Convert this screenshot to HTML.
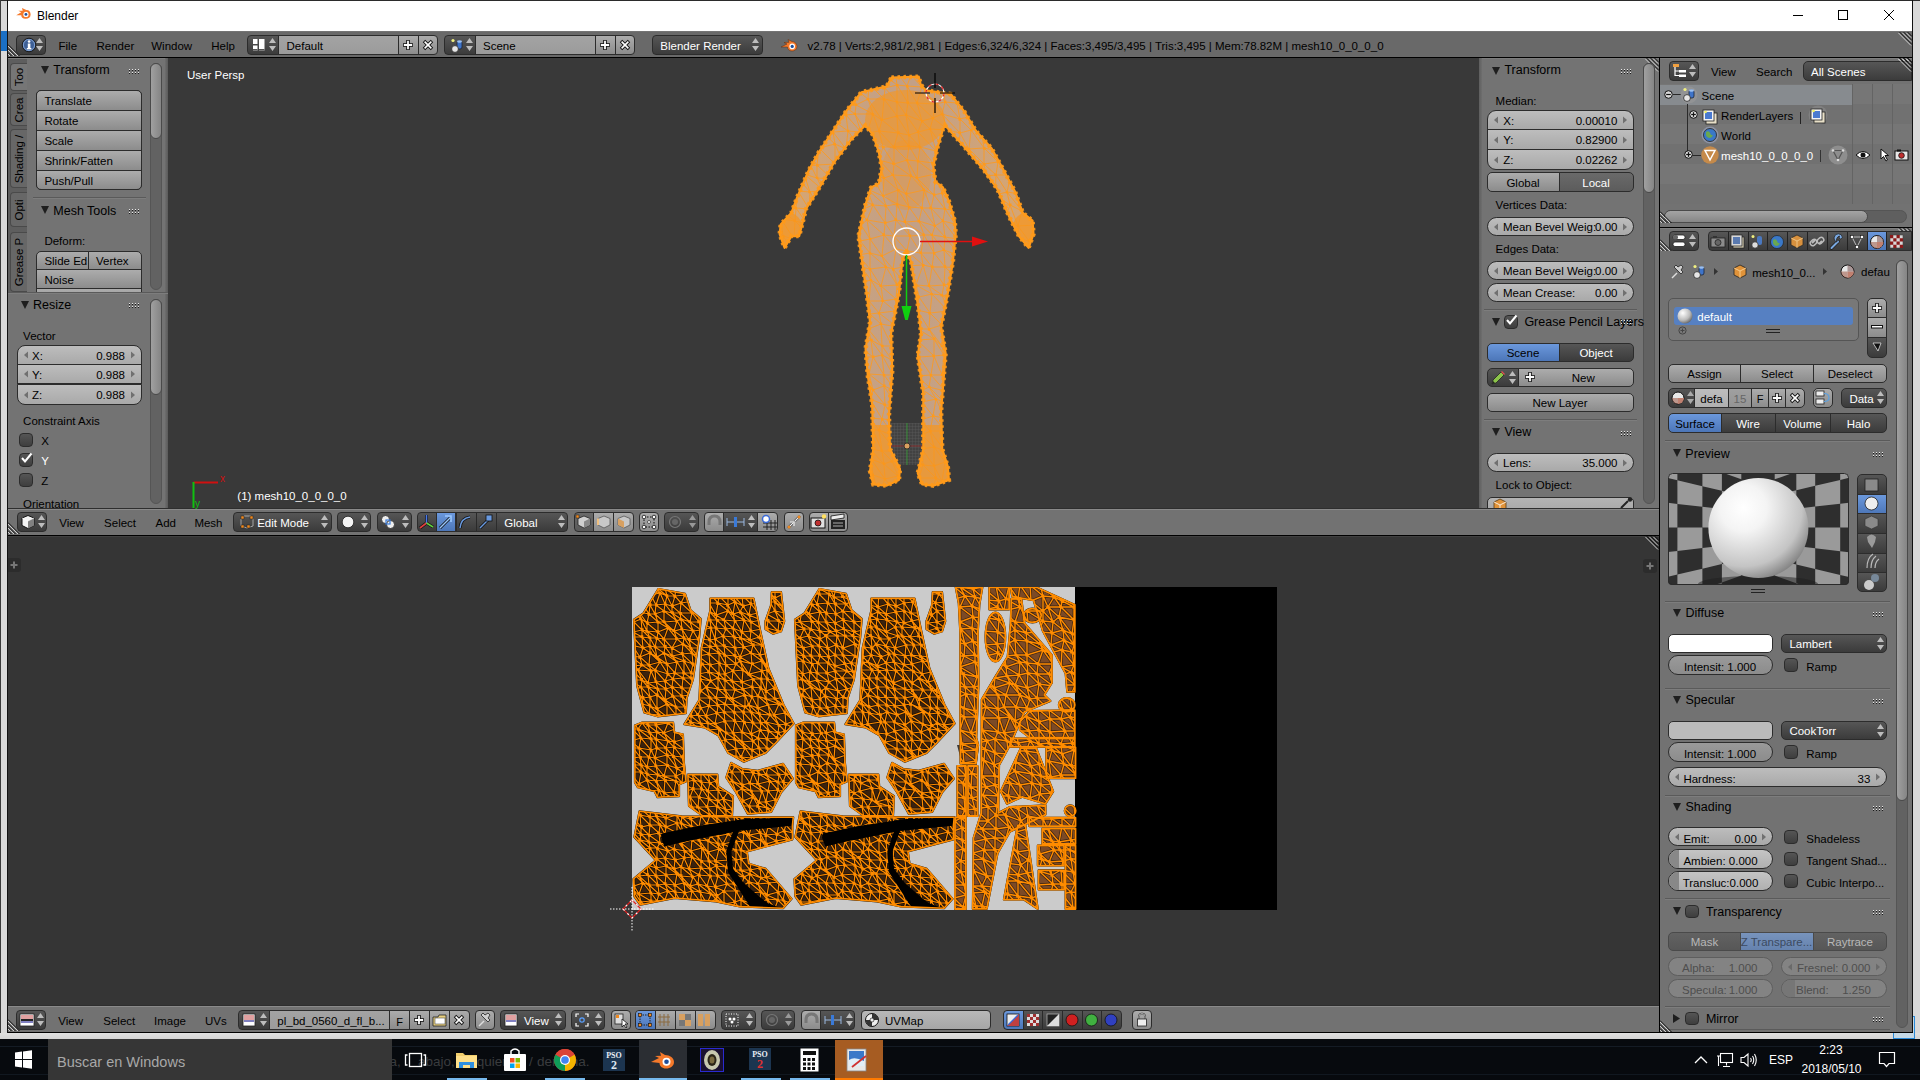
<!DOCTYPE html><html><head><meta charset="utf-8"><style>
html,body{margin:0;padding:0;width:1920px;height:1080px;overflow:hidden;background:#727272;font-family:"Liberation Sans",sans-serif;}
.t{position:absolute;white-space:nowrap;font-family:"Liberation Sans",sans-serif;}
svg{position:absolute;left:0;top:0;}
.w{position:absolute;box-sizing:border-box;border:1px solid #2c2c2c;border-radius:4px;}
.tool{background:linear-gradient(#acacac,#8c8c8c);}
.num{background:linear-gradient(#bdbdbd,#a9a9a9);}
.menu{background:linear-gradient(#565656,#3b3b3b);}
.sel{background:linear-gradient(#6b98dc,#4c76b8);}
.txt{background:linear-gradient(#9a9a9a,#b0b0b0);}
.chk{background:linear-gradient(#555,#3e3e3e);border-radius:3px;}

</style></head><body>
<div style="position:absolute;left:0px;top:0px;width:1920px;height:1080px;background:#d9d9d9"></div>
<div style="position:absolute;left:0px;top:0px;width:1920px;height:1px;background:#2b2b2b"></div>
<div style="position:absolute;left:0px;top:0px;width:1px;height:1039px;background:#3a3a3a"></div>
<div style="position:absolute;left:7px;top:0px;width:1px;height:1033px;background:#111"></div>
<div style="position:absolute;left:1912px;top:0px;width:1px;height:1033px;background:#111"></div>
<div style="position:absolute;left:8px;top:1px;width:1904px;height:30px;background:#fff"></div>
<div style="position:absolute;left:1px;top:31px;width:6px;height:20px;background:#1a6fc4"></div>
<svg width="40" height="30" style="left:0px;top:0px"><g transform="translate(15.5,6.5) scale(0.72)"><path d="M1 12 L8 8 L4 6 L10 6 L9 2 L15 5 C19 5 21 8 21 11 C21 15 18 17 14 17 C10 17 8 15 8 12 Z" fill="#f5792a"/><circle cx="14.5" cy="11" r="3.6" fill="#fff"/><circle cx="14.5" cy="11" r="2" fill="#1f4e9a"/></g></svg>
<div class="t" style="left:37px;top:9.94px;font-size:12px;line-height:13.8px;color:#000;">Blender</div>
<svg width="120" height="30" style="left:1780px;top:0px"><path d="M13 15.5 H23" stroke="#000" stroke-width="1"/><rect x="58.5" y="10.5" width="9" height="9" fill="none" stroke="#000" stroke-width="1"/><path d="M104 10 L114 20 M114 10 L104 20" stroke="#000" stroke-width="1"/></svg>
<div style="position:absolute;left:8px;top:31px;width:1904px;height:26px;background:#696969"></div>
<div style="position:absolute;left:8px;top:57px;width:1904px;height:1px;background:#000"></div>
<div style="position:absolute;left:8px;top:58px;width:1651px;height:451px;background:#393939"></div>
<div style="position:absolute;left:8px;top:58px;width:160px;height:451px;background:#727272"></div>
<div style="position:absolute;left:1479px;top:58px;width:180px;height:451px;background:#727272"></div>
<div style="position:absolute;left:8px;top:509px;width:1651px;height:26px;background:#727272"></div>
<div style="position:absolute;left:8px;top:535px;width:1651px;height:1px;background:#000"></div>
<div style="position:absolute;left:8px;top:536px;width:1651px;height:470px;background:#353535"></div>
<div style="position:absolute;left:8px;top:1006px;width:1651px;height:26px;background:#727272"></div>
<div style="position:absolute;left:8px;top:1032px;width:1905px;height:1px;background:#000"></div>
<div style="position:absolute;left:1659px;top:58px;width:1px;height:975px;background:#000"></div>
<div style="position:absolute;left:1660px;top:58px;width:252px;height:169px;background:#727272"></div>
<div style="position:absolute;left:1660px;top:227px;width:252px;height:1px;background:#000"></div>
<div style="position:absolute;left:1660px;top:228px;width:252px;height:804px;background:#727272"></div>
<div style="position:absolute;left:0px;top:1039px;width:1920px;height:41px;background:#0b0e13"></div>
<div style="position:absolute;left:48px;top:1039px;width:344px;height:41px;background:#333"></div>
<div style="position:absolute;left:8px;top:31px;width:1904px;height:1px;background:#747474"></div>
<svg width="14" height="14" style="left:8px;top:43px"><path d="M0 1.5 L11.5 13 M0 5.5 L7.5 13 M0 9.5 L3.5 13" stroke="#111" stroke-width="1"/><path d="M0 3 L10 13 M0 7 L6 13 M0 11 L2 13" stroke="#d0d0d0" stroke-width="1"/></svg>
<svg width="14" height="14" style="left:1898px;top:32px"><path d="M1.5 0 L14 12.5 M5.5 0 L14 8.5 M9.5 0 L14 4.5" stroke="#111" stroke-width="1"/><path d="M0.5 1 L13 13.5 M4.5 1 L13 9.5 M8.5 1 L13 5.5" stroke="#d0d0d0" stroke-width="1"/></svg>
<div class="w menu" style="left:16px;top:35px;width:30px;height:20px;border-radius:4px;"></div>
<svg width="16" height="16" style="left:21px;top:37px"><circle cx="8" cy="8" r="6.8" fill="#3d5f96" stroke="#1a1a1a" stroke-width="1"/><circle cx="8" cy="8" r="5.6" fill="none" stroke="#8fb0e0" stroke-width="0.8"/><rect x="6.8" y="6.5" width="2.6" height="5.5" fill="#fff"/><rect x="5.8" y="11" width="4.6" height="1.4" fill="#fff"/><circle cx="8.1" cy="4.5" r="1.3" fill="#fff"/></svg>
<svg width="10" height="16" style="left:35px;top:37px"><path d="M1 6 L4.5 1 L8 6 Z M1 9 L4.5 14 L8 9 Z" fill="#bdbdbd"/></svg>
<div class="t" style="left:58.5px;top:40.41px;font-size:11.5px;line-height:13.22px;color:#000;">File</div>
<div class="t" style="left:96.5px;top:40.41px;font-size:11.5px;line-height:13.22px;color:#000;">Render</div>
<div class="t" style="left:151.25px;top:40.41px;font-size:11.5px;line-height:13.22px;color:#000;">Window</div>
<div class="t" style="left:211.25px;top:40.41px;font-size:11.5px;line-height:13.22px;color:#000;">Help</div>
<div class="w menu" style="left:247px;top:35px;width:32px;height:20px;border-radius:4px 0 0 4px;"></div>
<svg width="14" height="14" style="left:252px;top:38px"><rect x="1" y="1" width="4.5" height="5" fill="#fff"/><rect x="1" y="7.5" width="4.5" height="5" fill="#fff"/><rect x="7" y="1" width="5.5" height="11.5" fill="#fff"/><rect x="1" y="11" width="4.5" height="1.5" fill="#555"/><rect x="7" y="11" width="5.5" height="1.5" fill="#555"/></svg>
<svg width="10" height="16" style="left:268px;top:37px"><path d="M1 6 L4.5 1 L8 6 Z M1 9 L4.5 14 L8 9 Z" fill="#bdbdbd"/></svg>
<div class="w txt" style="left:278px;top:35px;width:121px;height:20px;border-radius:0;background:linear-gradient(#a3a3a3,#9b9b9b)"></div>
<div class="t" style="left:286.5px;top:40.41px;font-size:11.5px;line-height:13.22px;color:#000;">Default</div>
<div class="w tool" style="left:398px;top:35px;width:21px;height:20px;border-radius:0;"></div>
<div class="w tool" style="left:418px;top:35px;width:20px;height:20px;border-radius:0 4px 4px 0;"></div>
<svg width="12" height="12" style="left:402px;top:39px"><path d="M6.0 1 V11 M1 6.0 H11" stroke="#111" stroke-width="3.6"/><path d="M6.0 1.8 V10.2 M1.8 6.0 H10.2" stroke="#fff" stroke-width="1.8"/></svg>
<svg width="12" height="12" style="left:422px;top:39px"><path d="M2 2 L10 10 M10 2 L2 10" stroke="#111" stroke-width="3.4"/><path d="M2.6 2.6 L9.4 9.4 M9.4 2.6 L2.6 9.4" stroke="#fff" stroke-width="1.6"/></svg>
<div class="w menu" style="left:444px;top:35px;width:32px;height:20px;border-radius:4px 0 0 4px;"></div>
<svg width="16" height="16" style="left:450px;top:38px"><circle cx="3" cy="2.5" r="1.6" fill="#f0f080"/><rect x="7" y="3" width="5" height="8" rx="2" fill="#3f74c9" stroke="#16243b" stroke-width="0.8"/><ellipse cx="9.5" cy="3.5" rx="2.5" ry="1.2" fill="#9cc0f0"/><circle cx="5" cy="11" r="3.4" fill="#e6e6e6" stroke="#222" stroke-width="0.8"/></svg>
<svg width="10" height="16" style="left:465px;top:37px"><path d="M1 6 L4.5 1 L8 6 Z M1 9 L4.5 14 L8 9 Z" fill="#bdbdbd"/></svg>
<div class="w txt" style="left:475px;top:35px;width:121px;height:20px;border-radius:0;background:linear-gradient(#a3a3a3,#9b9b9b)"></div>
<div class="t" style="left:483px;top:40.41px;font-size:11.5px;line-height:13.22px;color:#000;">Scene</div>
<div class="w tool" style="left:595px;top:35px;width:21px;height:20px;border-radius:0;"></div>
<div class="w tool" style="left:615px;top:35px;width:20px;height:20px;border-radius:0 4px 4px 0;"></div>
<svg width="12" height="12" style="left:599px;top:39px"><path d="M6.0 1 V11 M1 6.0 H11" stroke="#111" stroke-width="3.6"/><path d="M6.0 1.8 V10.2 M1.8 6.0 H10.2" stroke="#fff" stroke-width="1.8"/></svg>
<svg width="12" height="12" style="left:619px;top:39px"><path d="M2 2 L10 10 M10 2 L2 10" stroke="#111" stroke-width="3.4"/><path d="M2.6 2.6 L9.4 9.4 M9.4 2.6 L2.6 9.4" stroke="#fff" stroke-width="1.6"/></svg>
<div class="w menu" style="left:652px;top:35px;width:111px;height:20px;border-radius:4px;"></div>
<div class="t" style="left:660.3px;top:40.41px;font-size:11.5px;line-height:13.22px;color:#fff;">Blender Render</div>
<svg width="10" height="16" style="left:751px;top:37px"><path d="M1 6 L4.5 1 L8 6 Z M1 9 L4.5 14 L8 9 Z" fill="#bdbdbd"/></svg>
<svg width="18" height="16" style="left:780px;top:37px"><path d="M1 10 L7 7 L4 5.5 L9 5.3 L8 2.5 L12 4.5 C15 4.5 17 7 17 9.5 C17 12.5 14.5 14 12 14 C9 14 7.5 12 7.5 10 Z" fill="#f5792a" stroke="#5a2a10" stroke-width="0.5"/><circle cx="12.2" cy="9.4" r="2.8" fill="#fff"/><circle cx="12.2" cy="9.4" r="1.6" fill="#1f4e9a"/></svg>
<div class="t" style="left:807.5px;top:40.41px;font-size:11.5px;line-height:13.22px;color:#000;">v2.78 | Verts:2,981/2,981 | Edges:6,324/6,324 | Faces:3,495/3,495 | Tris:3,495 | Mem:78.82M | mesh10_0_0_0_0</div>
<div style="position:absolute;left:8px;top:58px;width:160px;height:451px;background:#737373"></div>
<div style="position:absolute;left:8px;top:58px;width:160px;height:1px;background:#7c7c7c"></div>
<div style="position:absolute;left:165px;top:58px;width:3px;height:451px;background:linear-gradient(90deg,#6e6e6e,#5a5a5a)"></div>
<div style="position:absolute;left:8px;top:59px;width:19px;height:234px;background:#5e5e5e"></div>
<div style="position:absolute;left:10px;top:63px;width:17px;height:28px;background:#767676;border:1px solid #4a4a4a;border-right:none;border-radius:4px 0 0 4px;box-sizing:border-box"></div>
<div class="t" style="left:-81.5px;width:200px;text-align:center;top:70.0px;line-height:14px;font-size:11.5px;color:#000;transform:rotate(-90deg);transform-origin:100px 7px">Too</div>
<div style="position:absolute;left:10px;top:93px;width:17px;height:33px;background:#676767;border:1px solid #4a4a4a;border-right:none;border-radius:4px 0 0 4px;box-sizing:border-box"></div>
<div class="t" style="left:-81.5px;width:200px;text-align:center;top:102.5px;line-height:14px;font-size:11.5px;color:#000;transform:rotate(-90deg);transform-origin:100px 7px">Crea</div>
<div style="position:absolute;left:10px;top:129px;width:17px;height:59px;background:#676767;border:1px solid #4a4a4a;border-right:none;border-radius:4px 0 0 4px;box-sizing:border-box"></div>
<div class="t" style="left:-81.5px;width:200px;text-align:center;top:151.5px;line-height:14px;font-size:11.5px;color:#000;transform:rotate(-90deg);transform-origin:100px 7px">Shading /</div>
<div style="position:absolute;left:10px;top:192px;width:17px;height:35px;background:#676767;border:1px solid #4a4a4a;border-right:none;border-radius:4px 0 0 4px;box-sizing:border-box"></div>
<div class="t" style="left:-81.5px;width:200px;text-align:center;top:202.5px;line-height:14px;font-size:11.5px;color:#000;transform:rotate(-90deg);transform-origin:100px 7px">Opti</div>
<div style="position:absolute;left:10px;top:232px;width:17px;height:60px;background:#676767;border:1px solid #4a4a4a;border-right:none;border-radius:4px 0 0 4px;box-sizing:border-box"></div>
<div class="t" style="left:-81.5px;width:200px;text-align:center;top:255.0px;line-height:14px;font-size:11.5px;color:#000;transform:rotate(-90deg);transform-origin:100px 7px">Grease P</div>
<svg width="8" height="8" style="left:41px;top:66px"><path d="M0 0 H8 L4.0 8 Z" fill="#1e1e1e"/></svg>
<div class="t" style="left:53.3px;top:63.48px;font-size:12.5px;line-height:14.37px;color:#000;">Transform</div>
<svg width="12" height="6" style="left:129px;top:69px" shape-rendering="crispEdges"><rect x="0" y="0" width="1" height="1" fill="#e8e8e8"/><rect x="0" y="1" width="1" height="1" fill="#1a1a1a"/><rect x="0" y="3" width="1" height="1" fill="#e8e8e8"/><rect x="0" y="4" width="1" height="1" fill="#1a1a1a"/><rect x="3" y="0" width="1" height="1" fill="#e8e8e8"/><rect x="3" y="1" width="1" height="1" fill="#1a1a1a"/><rect x="3" y="3" width="1" height="1" fill="#e8e8e8"/><rect x="3" y="4" width="1" height="1" fill="#1a1a1a"/><rect x="6" y="0" width="1" height="1" fill="#e8e8e8"/><rect x="6" y="1" width="1" height="1" fill="#1a1a1a"/><rect x="6" y="3" width="1" height="1" fill="#e8e8e8"/><rect x="6" y="4" width="1" height="1" fill="#1a1a1a"/><rect x="9" y="0" width="1" height="1" fill="#e8e8e8"/><rect x="9" y="1" width="1" height="1" fill="#1a1a1a"/><rect x="9" y="3" width="1" height="1" fill="#e8e8e8"/><rect x="9" y="4" width="1" height="1" fill="#1a1a1a"/></svg>
<div style="position:absolute;left:150px;top:63px;width:12px;height:227px;background:#626262;border:1px solid #555;border-radius:6px;box-sizing:border-box"></div>
<div style="position:absolute;left:150px;top:63px;width:12px;height:76px;background:linear-gradient(90deg,#a0a0a0,#858585);border:1px solid #4a4a4a;border-radius:6px;box-sizing:border-box"></div>
<div class="w tool" style="left:36px;top:90px;width:106px;height:100px;border-radius:5px;background:transparent"></div>
<div class="w tool" style="left:36px;top:90px;width:106px;height:21px;border-radius:5px 5px 0 0;"></div>
<div class="t" style="left:44.4px;top:95.01px;font-size:11.5px;line-height:13.22px;color:#000;">Translate</div>
<div class="w tool" style="left:36px;top:110px;width:106px;height:21px;border-radius:0;"></div>
<div class="t" style="left:44.4px;top:115.01px;font-size:11.5px;line-height:13.22px;color:#000;">Rotate</div>
<div class="w tool" style="left:36px;top:130px;width:106px;height:21px;border-radius:0;"></div>
<div class="t" style="left:44.4px;top:135.01px;font-size:11.5px;line-height:13.22px;color:#000;">Scale</div>
<div class="w tool" style="left:36px;top:150px;width:106px;height:21px;border-radius:0;"></div>
<div class="t" style="left:44.4px;top:155.01px;font-size:11.5px;line-height:13.22px;color:#000;">Shrink/Fatten</div>
<div class="w tool" style="left:36px;top:170px;width:106px;height:20px;border-radius:0 0 5px 5px;"></div>
<div class="t" style="left:44.4px;top:175.01px;font-size:11.5px;line-height:13.22px;color:#000;">Push/Pull</div>
<div style="position:absolute;left:33px;top:197px;width:113px;height:1px;background:#5a5a5a"></div>
<div style="position:absolute;left:33px;top:198px;width:113px;height:1px;background:#7d7d7d"></div>
<svg width="8" height="8" style="left:41px;top:206px"><path d="M0 0 H8 L4.0 8 Z" fill="#1e1e1e"/></svg>
<div class="t" style="left:53.3px;top:203.98px;font-size:12.5px;line-height:14.37px;color:#000;">Mesh Tools</div>
<svg width="12" height="6" style="left:129px;top:209px" shape-rendering="crispEdges"><rect x="0" y="0" width="1" height="1" fill="#e8e8e8"/><rect x="0" y="1" width="1" height="1" fill="#1a1a1a"/><rect x="0" y="3" width="1" height="1" fill="#e8e8e8"/><rect x="0" y="4" width="1" height="1" fill="#1a1a1a"/><rect x="3" y="0" width="1" height="1" fill="#e8e8e8"/><rect x="3" y="1" width="1" height="1" fill="#1a1a1a"/><rect x="3" y="3" width="1" height="1" fill="#e8e8e8"/><rect x="3" y="4" width="1" height="1" fill="#1a1a1a"/><rect x="6" y="0" width="1" height="1" fill="#e8e8e8"/><rect x="6" y="1" width="1" height="1" fill="#1a1a1a"/><rect x="6" y="3" width="1" height="1" fill="#e8e8e8"/><rect x="6" y="4" width="1" height="1" fill="#1a1a1a"/><rect x="9" y="0" width="1" height="1" fill="#e8e8e8"/><rect x="9" y="1" width="1" height="1" fill="#1a1a1a"/><rect x="9" y="3" width="1" height="1" fill="#e8e8e8"/><rect x="9" y="4" width="1" height="1" fill="#1a1a1a"/></svg>
<div class="t" style="left:44.4px;top:235.41px;font-size:11.5px;line-height:13.22px;color:#000;">Deform:</div>
<div class="w tool" style="left:36px;top:251px;width:53px;height:19px;border-radius:5px 0 0 0;"></div>
<div class="w tool" style="left:88px;top:251px;width:54px;height:19px;border-radius:0 5px 0 0;"></div>
<div class="t" style="left:44.4px;top:254.61px;font-size:11.5px;line-height:13.22px;color:#000;">Slide Ed</div>
<div class="t" style="left:96px;top:254.61px;font-size:11.5px;line-height:13.22px;color:#000;">Vertex</div>
<div class="w tool" style="left:36px;top:269px;width:106px;height:20px;border-radius:0;"></div>
<div class="t" style="left:44.4px;top:274.01px;font-size:11.5px;line-height:13.22px;color:#000;">Noise</div>
<div style="position:absolute;left:36px;top:288px;width:106px;height:4px;overflow:hidden"><div class="w tool" style="left:0;top:0;width:106px;height:20px;border-radius:0"></div></div>
<div style="position:absolute;left:8px;top:292px;width:160px;height:1px;background:#5a5a5a"></div>
<div style="position:absolute;left:8px;top:293px;width:160px;height:1px;background:#7d7d7d"></div>
<svg width="8" height="8" style="left:21px;top:301px"><path d="M0 0 H8 L4.0 8 Z" fill="#1e1e1e"/></svg>
<div class="t" style="left:33.1px;top:298.38px;font-size:12.5px;line-height:14.37px;color:#000;">Resize</div>
<svg width="12" height="6" style="left:129px;top:303px" shape-rendering="crispEdges"><rect x="0" y="0" width="1" height="1" fill="#e8e8e8"/><rect x="0" y="1" width="1" height="1" fill="#1a1a1a"/><rect x="0" y="3" width="1" height="1" fill="#e8e8e8"/><rect x="0" y="4" width="1" height="1" fill="#1a1a1a"/><rect x="3" y="0" width="1" height="1" fill="#e8e8e8"/><rect x="3" y="1" width="1" height="1" fill="#1a1a1a"/><rect x="3" y="3" width="1" height="1" fill="#e8e8e8"/><rect x="3" y="4" width="1" height="1" fill="#1a1a1a"/><rect x="6" y="0" width="1" height="1" fill="#e8e8e8"/><rect x="6" y="1" width="1" height="1" fill="#1a1a1a"/><rect x="6" y="3" width="1" height="1" fill="#e8e8e8"/><rect x="6" y="4" width="1" height="1" fill="#1a1a1a"/><rect x="9" y="0" width="1" height="1" fill="#e8e8e8"/><rect x="9" y="1" width="1" height="1" fill="#1a1a1a"/><rect x="9" y="3" width="1" height="1" fill="#e8e8e8"/><rect x="9" y="4" width="1" height="1" fill="#1a1a1a"/></svg>
<div style="position:absolute;left:150px;top:299px;width:12px;height:205px;background:#626262;border:1px solid #555;border-radius:6px;box-sizing:border-box"></div>
<div style="position:absolute;left:150px;top:299px;width:12px;height:96px;background:linear-gradient(90deg,#a0a0a0,#858585);border:1px solid #4a4a4a;border-radius:6px;box-sizing:border-box"></div>
<div class="t" style="left:23.1px;top:330.41px;font-size:11.5px;line-height:13.22px;color:#000;">Vector</div>
<div class="w num" style="left:17px;top:345px;width:125px;height:20px;border-radius:8px 8px 0 0;"></div>
<svg width="6" height="8" style="left:23px;top:351.0px"><path d="M5 0.5 V7.5 L1 4 Z" fill="#707070"/></svg>
<svg width="6" height="8" style="left:130px;top:351.0px"><path d="M1 0.5 V7.5 L5 4 Z" fill="#707070"/></svg>
<div class="t" style="left:32px;top:349.91px;font-size:11.5px;line-height:13.22px;color:#000;">X:</div>
<div class="t" style="left:-275px;width:400px;text-align:right;top:349.91px;font-size:11.5px;line-height:13.22px;color:#000;">0.988</div>
<div class="w num" style="left:17px;top:364px;width:125px;height:20px;border-radius:0;"></div>
<svg width="6" height="8" style="left:23px;top:370.0px"><path d="M5 0.5 V7.5 L1 4 Z" fill="#707070"/></svg>
<svg width="6" height="8" style="left:130px;top:370.0px"><path d="M1 0.5 V7.5 L5 4 Z" fill="#707070"/></svg>
<div class="t" style="left:32px;top:368.91px;font-size:11.5px;line-height:13.22px;color:#000;">Y:</div>
<div class="t" style="left:-275px;width:400px;text-align:right;top:368.91px;font-size:11.5px;line-height:13.22px;color:#000;">0.988</div>
<div class="w num" style="left:17px;top:384px;width:125px;height:21px;border-radius:0 0 8px 8px;"></div>
<svg width="6" height="8" style="left:23px;top:390.5px"><path d="M5 0.5 V7.5 L1 4 Z" fill="#707070"/></svg>
<svg width="6" height="8" style="left:130px;top:390.5px"><path d="M1 0.5 V7.5 L5 4 Z" fill="#707070"/></svg>
<div class="t" style="left:32px;top:388.91px;font-size:11.5px;line-height:13.22px;color:#000;">Z:</div>
<div class="t" style="left:-275px;width:400px;text-align:right;top:388.91px;font-size:11.5px;line-height:13.22px;color:#000;">0.988</div>
<div class="t" style="left:23.1px;top:415.41px;font-size:11.5px;line-height:13.22px;color:#000;">Constraint Axis</div>
<div class="w chk" style="left:19px;top:433px;width:14px;height:14px;border-radius:4px;"></div>
<div class="t" style="left:41.2px;top:434.91px;font-size:11.5px;line-height:13.22px;color:#000;">X</div>
<div class="w chk" style="left:19px;top:453px;width:14px;height:14px;border-radius:4px;"></div>
<div class="t" style="left:41.2px;top:454.91px;font-size:11.5px;line-height:13.22px;color:#fff;">Y</div>
<div class="w chk" style="left:19px;top:473px;width:14px;height:14px;border-radius:4px;"></div>
<div class="t" style="left:41.2px;top:474.91px;font-size:11.5px;line-height:13.22px;color:#000;">Z</div>
<svg width="14" height="14" style="left:19px;top:451px"><path d="M3 7 L6 10.5 L12.5 2.5" stroke="#fff" stroke-width="2" fill="none"/></svg>
<div style="position:absolute;left:8px;top:494px;width:160px;height:15px;overflow:hidden"><div class="t" style="left:15px;top:3px;font-size:11.5px;line-height:14px">Orientation</div></div>
<div style="position:absolute;left:1479px;top:58px;width:180px;height:451px;background:#737373"></div>
<div style="position:absolute;left:1479px;top:58px;width:180px;height:1px;background:#7c7c7c"></div>
<div style="position:absolute;left:1479px;top:58px;width:3px;height:451px;background:linear-gradient(90deg,#5e5e5e,#6e6e6e)"></div>
<svg width="14" height="14" style="left:1645px;top:58px"><path d="M1.5 0 L14 12.5 M5.5 0 L14 8.5 M9.5 0 L14 4.5" stroke="#111" stroke-width="1"/><path d="M0.5 1 L13 13.5 M4.5 1 L13 9.5 M8.5 1 L13 5.5" stroke="#d0d0d0" stroke-width="1"/></svg>
<div style="position:absolute;left:1643px;top:63px;width:12px;height:441px;background:#626262;border:1px solid #555;border-radius:6px;box-sizing:border-box"></div>
<div style="position:absolute;left:1643px;top:63px;width:12px;height:130px;background:linear-gradient(90deg,#a0a0a0,#858585);border:1px solid #4a4a4a;border-radius:6px;box-sizing:border-box"></div>
<svg width="8" height="8" style="left:1492px;top:67px"><path d="M0 0 H8 L4.0 8 Z" fill="#1e1e1e"/></svg>
<div class="t" style="left:1504.4px;top:63.48px;font-size:12.5px;line-height:14.37px;color:#000;">Transform</div>
<svg width="12" height="6" style="left:1621px;top:69px" shape-rendering="crispEdges"><rect x="0" y="0" width="1" height="1" fill="#e8e8e8"/><rect x="0" y="1" width="1" height="1" fill="#1a1a1a"/><rect x="0" y="3" width="1" height="1" fill="#e8e8e8"/><rect x="0" y="4" width="1" height="1" fill="#1a1a1a"/><rect x="3" y="0" width="1" height="1" fill="#e8e8e8"/><rect x="3" y="1" width="1" height="1" fill="#1a1a1a"/><rect x="3" y="3" width="1" height="1" fill="#e8e8e8"/><rect x="3" y="4" width="1" height="1" fill="#1a1a1a"/><rect x="6" y="0" width="1" height="1" fill="#e8e8e8"/><rect x="6" y="1" width="1" height="1" fill="#1a1a1a"/><rect x="6" y="3" width="1" height="1" fill="#e8e8e8"/><rect x="6" y="4" width="1" height="1" fill="#1a1a1a"/><rect x="9" y="0" width="1" height="1" fill="#e8e8e8"/><rect x="9" y="1" width="1" height="1" fill="#1a1a1a"/><rect x="9" y="3" width="1" height="1" fill="#e8e8e8"/><rect x="9" y="4" width="1" height="1" fill="#1a1a1a"/></svg>
<div class="t" style="left:1495.6px;top:94.81px;font-size:11.5px;line-height:13.22px;color:#000;">Median:</div>
<div class="w num" style="left:1487px;top:110px;width:147px;height:20px;border-radius:9px 9px 0 0;"></div>
<svg width="6" height="8" style="left:1493px;top:116.0px"><path d="M5 0.5 V7.5 L1 4 Z" fill="#707070"/></svg>
<svg width="6" height="8" style="left:1622px;top:116.0px"><path d="M1 0.5 V7.5 L5 4 Z" fill="#707070"/></svg>
<div class="t" style="left:1503.3px;top:114.91px;font-size:11.5px;line-height:13.22px;color:#000;">X:</div>
<div class="t" style="left:1217.3px;width:400px;text-align:right;top:114.91px;font-size:11.5px;line-height:13.22px;color:#000;">0.00010</div>
<div class="w num" style="left:1487px;top:129px;width:147px;height:21px;border-radius:0;"></div>
<svg width="6" height="8" style="left:1493px;top:135.5px"><path d="M5 0.5 V7.5 L1 4 Z" fill="#707070"/></svg>
<svg width="6" height="8" style="left:1622px;top:135.5px"><path d="M1 0.5 V7.5 L5 4 Z" fill="#707070"/></svg>
<div class="t" style="left:1503.3px;top:133.91px;font-size:11.5px;line-height:13.22px;color:#000;">Y:</div>
<div class="t" style="left:1217.3px;width:400px;text-align:right;top:133.91px;font-size:11.5px;line-height:13.22px;color:#000;">0.82900</div>
<div class="w num" style="left:1487px;top:149px;width:147px;height:21px;border-radius:0 0 9px 9px;"></div>
<svg width="6" height="8" style="left:1493px;top:155.5px"><path d="M5 0.5 V7.5 L1 4 Z" fill="#707070"/></svg>
<svg width="6" height="8" style="left:1622px;top:155.5px"><path d="M1 0.5 V7.5 L5 4 Z" fill="#707070"/></svg>
<div class="t" style="left:1503.3px;top:153.91px;font-size:11.5px;line-height:13.22px;color:#000;">Z:</div>
<div class="t" style="left:1217.3px;width:400px;text-align:right;top:153.91px;font-size:11.5px;line-height:13.22px;color:#000;">0.02262</div>
<div class="w tool" style="left:1487px;top:172px;width:73px;height:20px;border-radius:5px 0 0 5px;"></div>
<div class="w tool" style="left:1559px;top:172px;width:75px;height:20px;border-radius:0 5px 5px 0;background:linear-gradient(#6a6a6a,#5c5c5c)"></div>
<div class="t" style="left:1373px;width:300px;text-align:center;top:177.11px;font-size:11.5px;line-height:13.22px;color:#000;">Global</div>
<div class="t" style="left:1446px;width:300px;text-align:center;top:177.11px;font-size:11.5px;line-height:13.22px;color:#fff;">Local</div>
<div class="t" style="left:1495.6px;top:199.31px;font-size:11.5px;line-height:13.22px;color:#000;">Vertices Data:</div>
<div class="w num" style="left:1487px;top:217px;width:147px;height:19px;border-radius:9.5px;"></div>
<svg width="6" height="8" style="left:1493px;top:222.5px"><path d="M5 0.5 V7.5 L1 4 Z" fill="#707070"/></svg>
<svg width="6" height="8" style="left:1622px;top:222.5px"><path d="M1 0.5 V7.5 L5 4 Z" fill="#707070"/></svg>
<div class="t" style="left:1503px;top:221.41px;font-size:11.5px;line-height:13.22px;color:#000;">Mean Bevel Weig:</div>
<div class="t" style="left:1217.5px;width:400px;text-align:right;top:221.41px;font-size:11.5px;line-height:13.22px;color:#000;">0.00</div>
<div class="t" style="left:1495.6px;top:243.11px;font-size:11.5px;line-height:13.22px;color:#000;">Edges Data:</div>
<div class="w num" style="left:1487px;top:261px;width:147px;height:19px;border-radius:9.5px;"></div>
<svg width="6" height="8" style="left:1493px;top:266.5px"><path d="M5 0.5 V7.5 L1 4 Z" fill="#707070"/></svg>
<svg width="6" height="8" style="left:1622px;top:266.5px"><path d="M1 0.5 V7.5 L5 4 Z" fill="#707070"/></svg>
<div class="t" style="left:1503px;top:265.41px;font-size:11.5px;line-height:13.22px;color:#000;">Mean Bevel Weig:</div>
<div class="t" style="left:1217.5px;width:400px;text-align:right;top:265.41px;font-size:11.5px;line-height:13.22px;color:#000;">0.00</div>
<div class="w num" style="left:1487px;top:283px;width:147px;height:19px;border-radius:9.5px;"></div>
<svg width="6" height="8" style="left:1493px;top:288.5px"><path d="M5 0.5 V7.5 L1 4 Z" fill="#707070"/></svg>
<svg width="6" height="8" style="left:1622px;top:288.5px"><path d="M1 0.5 V7.5 L5 4 Z" fill="#707070"/></svg>
<div class="t" style="left:1503px;top:287.41px;font-size:11.5px;line-height:13.22px;color:#000;">Mean Crease:</div>
<div class="t" style="left:1217.5px;width:400px;text-align:right;top:287.41px;font-size:11.5px;line-height:13.22px;color:#000;">0.00</div>
<div style="position:absolute;left:1484px;top:309px;width:153px;height:1px;background:#5a5a5a"></div>
<div style="position:absolute;left:1484px;top:310px;width:153px;height:1px;background:#7d7d7d"></div>
<svg width="8" height="8" style="left:1492px;top:318px"><path d="M0 0 H8 L4.0 8 Z" fill="#1e1e1e"/></svg>
<div class="w chk" style="left:1504px;top:315px;width:14px;height:14px;border-radius:4px;"></div>
<svg width="14" height="14" style="left:1504px;top:313px"><path d="M3 7 L6 10.5 L12.5 2.5" stroke="#fff" stroke-width="2" fill="none"/></svg>
<div class="t" style="left:1524.4px;top:315.08px;font-size:12.5px;line-height:14.37px;color:#000;">Grease Pencil Layers</div>
<svg width="12" height="6" style="left:1621px;top:320px" shape-rendering="crispEdges"><rect x="0" y="0" width="1" height="1" fill="#e8e8e8"/><rect x="0" y="1" width="1" height="1" fill="#1a1a1a"/><rect x="0" y="3" width="1" height="1" fill="#e8e8e8"/><rect x="0" y="4" width="1" height="1" fill="#1a1a1a"/><rect x="3" y="0" width="1" height="1" fill="#e8e8e8"/><rect x="3" y="1" width="1" height="1" fill="#1a1a1a"/><rect x="3" y="3" width="1" height="1" fill="#e8e8e8"/><rect x="3" y="4" width="1" height="1" fill="#1a1a1a"/><rect x="6" y="0" width="1" height="1" fill="#e8e8e8"/><rect x="6" y="1" width="1" height="1" fill="#1a1a1a"/><rect x="6" y="3" width="1" height="1" fill="#e8e8e8"/><rect x="6" y="4" width="1" height="1" fill="#1a1a1a"/><rect x="9" y="0" width="1" height="1" fill="#e8e8e8"/><rect x="9" y="1" width="1" height="1" fill="#1a1a1a"/><rect x="9" y="3" width="1" height="1" fill="#e8e8e8"/><rect x="9" y="4" width="1" height="1" fill="#1a1a1a"/></svg>
<div class="w sel" style="left:1487px;top:343px;width:73px;height:19px;border-radius:5px 0 0 5px;"></div>
<div class="w menu" style="left:1559px;top:343px;width:75px;height:19px;border-radius:0 5px 5px 0;"></div>
<div class="t" style="left:1373px;width:300px;text-align:center;top:347.11px;font-size:11.5px;line-height:13.22px;color:#000;">Scene</div>
<div class="t" style="left:1446px;width:300px;text-align:center;top:347.11px;font-size:11.5px;line-height:13.22px;color:#fff;">Object</div>
<div class="w menu" style="left:1487px;top:368px;width:32px;height:19px;border-radius:5px 0 0 5px;"></div>
<svg width="16" height="16" style="left:1490px;top:370px"><path d="M2 14 L3 10 L11 2 L14 5 L6 13 Z" fill="#8bc34a" stroke="#222" stroke-width="0.8"/><path d="M11 2 L14 5 L15 4 L12 1 Z" fill="#e05050"/><path d="M2 14 L3 11 L5 13 Z" fill="#222"/></svg>
<svg width="10" height="16" style="left:1508px;top:370px"><path d="M1 6 L4.5 1 L8 6 Z M1 9 L4.5 14 L8 9 Z" fill="#bdbdbd"/></svg>
<div class="w tool" style="left:1518px;top:368px;width:116px;height:19px;border-radius:0 5px 5px 0;"></div>
<svg width="12" height="12" style="left:1524px;top:371px"><path d="M6.0 1 V11 M1 6.0 H11" stroke="#111" stroke-width="3.6"/><path d="M6.0 1.8 V10.2 M1.8 6.0 H10.2" stroke="#fff" stroke-width="1.8"/></svg>
<div class="t" style="left:1433.3px;width:300px;text-align:center;top:371.51px;font-size:11.5px;line-height:13.22px;color:#000;">New</div>
<div class="w tool" style="left:1487px;top:393px;width:147px;height:19px;border-radius:5px;"></div>
<div class="t" style="left:1410px;width:300px;text-align:center;top:397.11px;font-size:11.5px;line-height:13.22px;color:#000;">New Layer</div>
<div style="position:absolute;left:1484px;top:419px;width:153px;height:1px;background:#5a5a5a"></div>
<div style="position:absolute;left:1484px;top:420px;width:153px;height:1px;background:#7d7d7d"></div>
<svg width="8" height="8" style="left:1492px;top:428px"><path d="M0 0 H8 L4.0 8 Z" fill="#1e1e1e"/></svg>
<div class="t" style="left:1504.4px;top:425.08px;font-size:12.5px;line-height:14.37px;color:#000;">View</div>
<svg width="12" height="6" style="left:1621px;top:431px" shape-rendering="crispEdges"><rect x="0" y="0" width="1" height="1" fill="#e8e8e8"/><rect x="0" y="1" width="1" height="1" fill="#1a1a1a"/><rect x="0" y="3" width="1" height="1" fill="#e8e8e8"/><rect x="0" y="4" width="1" height="1" fill="#1a1a1a"/><rect x="3" y="0" width="1" height="1" fill="#e8e8e8"/><rect x="3" y="1" width="1" height="1" fill="#1a1a1a"/><rect x="3" y="3" width="1" height="1" fill="#e8e8e8"/><rect x="3" y="4" width="1" height="1" fill="#1a1a1a"/><rect x="6" y="0" width="1" height="1" fill="#e8e8e8"/><rect x="6" y="1" width="1" height="1" fill="#1a1a1a"/><rect x="6" y="3" width="1" height="1" fill="#e8e8e8"/><rect x="6" y="4" width="1" height="1" fill="#1a1a1a"/><rect x="9" y="0" width="1" height="1" fill="#e8e8e8"/><rect x="9" y="1" width="1" height="1" fill="#1a1a1a"/><rect x="9" y="3" width="1" height="1" fill="#e8e8e8"/><rect x="9" y="4" width="1" height="1" fill="#1a1a1a"/></svg>
<div class="w num" style="left:1487px;top:453px;width:147px;height:19px;border-radius:9.5px;"></div>
<svg width="6" height="8" style="left:1493px;top:458.5px"><path d="M5 0.5 V7.5 L1 4 Z" fill="#707070"/></svg>
<svg width="6" height="8" style="left:1622px;top:458.5px"><path d="M1 0.5 V7.5 L5 4 Z" fill="#707070"/></svg>
<div class="t" style="left:1503px;top:457.41px;font-size:11.5px;line-height:13.22px;color:#000;">Lens:</div>
<div class="t" style="left:1217.5px;width:400px;text-align:right;top:457.41px;font-size:11.5px;line-height:13.22px;color:#000;">35.000</div>
<div class="t" style="left:1495.6px;top:478.81px;font-size:11.5px;line-height:13.22px;color:#000;">Lock to Object:</div>
<div style="position:absolute;left:1487px;top:497px;width:147px;height:12px;overflow:hidden"><div class="w txt" style="left:0;top:0;width:147px;height:20px;border-radius:5px;background:linear-gradient(#b4b4b4,#a4a4a4)"></div></div>
<svg width="14" height="14" style="left:1493px;top:498px"><path d="M7 1 L13 4 V11 L7 14 L1 11 V4 Z" fill="#e0933a" stroke="#5a3a10" stroke-width="0.8"/><path d="M1 4 L7 7 L13 4 M7 7 V14" stroke="#fff" stroke-width="0.8" fill="none"/></svg>
<svg width="14" height="12" style="left:1619px;top:497px"><path d="M2 11 L9 4" stroke="#222" stroke-width="2"/><circle cx="11" cy="2.5" r="2.2" fill="#222"/></svg>
<div style="position:absolute;left:1660px;top:58px;width:252px;height:26px;background:#727272"></div>
<div style="position:absolute;left:1660px;top:58px;width:252px;height:1px;background:#7e7e7e"></div>
<svg width="14" height="14" style="left:1898px;top:58px"><path d="M1.5 0 L14 12.5 M5.5 0 L14 8.5 M9.5 0 L14 4.5" stroke="#111" stroke-width="1"/><path d="M0.5 1 L13 13.5 M4.5 1 L13 9.5 M8.5 1 L13 5.5" stroke="#d0d0d0" stroke-width="1"/></svg>
<div style="position:absolute;left:1660px;top:84px;width:252px;height:20px;background:#767676"></div>
<div style="position:absolute;left:1660px;top:104px;width:252px;height:20px;background:#717171"></div>
<div style="position:absolute;left:1660px;top:124px;width:252px;height:20px;background:#767676"></div>
<div style="position:absolute;left:1660px;top:144px;width:252px;height:20px;background:#717171"></div>
<div style="position:absolute;left:1660px;top:164px;width:252px;height:20px;background:#767676"></div>
<div style="position:absolute;left:1660px;top:184px;width:252px;height:20px;background:#717171"></div>
<div style="position:absolute;left:1660px;top:204px;width:252px;height:20px;background:#767676"></div>
<div style="position:absolute;left:1660px;top:84px;width:252px;height:140px;background:transparent"></div>
<div style="position:absolute;left:1660px;top:85px;width:192px;height:20px;background:#878b8f"></div>
<div style="position:absolute;left:1852px;top:84px;width:1px;height:126px;background:#646464"></div>
<div style="position:absolute;left:1872px;top:84px;width:1px;height:126px;background:#646464"></div>
<div style="position:absolute;left:1892px;top:84px;width:1px;height:126px;background:#646464"></div>
<div style="position:absolute;left:1660px;top:204px;width:252px;height:23px;background:#727272"></div>
<div class="w menu" style="left:1669px;top:61px;width:30px;height:20px;border-radius:4px;"></div>
<svg width="16" height="16" style="left:1672px;top:63px"><rect x="1" y="1" width="6" height="3" fill="#f0a040"/><path d="M3 4 V13 M3 8 H7 M3 12.5 H7" stroke="#fff" stroke-width="1.2"/><rect x="7" y="7" width="7" height="2.5" fill="#fff"/><rect x="7" y="11.5" width="7" height="2.5" fill="#fff"/></svg>
<svg width="10" height="16" style="left:1688px;top:63px"><path d="M1 6 L4.5 1 L8 6 Z M1 9 L4.5 14 L8 9 Z" fill="#bdbdbd"/></svg>
<div class="t" style="left:1711.1px;top:66.41px;font-size:11.5px;line-height:13.22px;color:#000;">View</div>
<div class="t" style="left:1756px;top:66.41px;font-size:11.5px;line-height:13.22px;color:#000;">Search</div>
<div class="w menu" style="left:1803px;top:61px;width:109px;height:20px;border-radius:5px 0 0 5px;"></div>
<div class="t" style="left:1811.1px;top:66.41px;font-size:11.5px;line-height:13.22px;color:#fff;">All Scenes</div>
<svg width="14" height="14" style="left:1898px;top:58px"><path d="M1.5 0 L14 12.5 M5.5 0 L14 8.5 M9.5 0 L14 4.5" stroke="#111" stroke-width="1"/><path d="M0.5 1 L13 13.5 M4.5 1 L13 9.5 M8.5 1 L13 5.5" stroke="#d0d0d0" stroke-width="1"/></svg>
<div style="position:absolute;left:1687px;top:104px;width:1px;height:51px;background:#2a2a2a"></div>
<div style="position:absolute;left:1673px;top:94px;width:8px;height:1px;background:#2a2a2a"></div>
<div style="position:absolute;left:1692px;top:155px;width:9px;height:1px;background:#2a2a2a"></div>
<svg width="10" height="10" style="left:1664px;top:90px"><circle cx="4.5" cy="4.5" r="3.8" fill="#d8d8d8" stroke="#111" stroke-width="1"/><path d="M2.2 4.5 H6.8" stroke="#111" stroke-width="1.2"/></svg>
<svg width="18" height="18" style="left:1680px;top:86px"><circle cx="9" cy="9" r="8.5" fill="#9a9a9a" opacity="0.6"/></svg>
<svg width="16" height="16" style="left:1682px;top:87px"><circle cx="3" cy="2.5" r="1.6" fill="#f0f080"/><rect x="7" y="3" width="5" height="8" rx="2" fill="#3f74c9" stroke="#16243b" stroke-width="0.8"/><ellipse cx="9.5" cy="3.5" rx="2.5" ry="1.2" fill="#9cc0f0"/><circle cx="5" cy="11" r="3.4" fill="#e6e6e6" stroke="#222" stroke-width="0.8"/></svg>
<div class="t" style="left:1701.6px;top:90.41px;font-size:11.5px;line-height:13.22px;color:#000;">Scene</div>
<svg width="10" height="10" style="left:1689px;top:110px"><circle cx="4.5" cy="4.5" r="3.8" fill="#d8d8d8" stroke="#111" stroke-width="1"/><path d="M2.2 4.5 H6.8" stroke="#111" stroke-width="1.2"/><path d="M4.5 2.2 V6.8" stroke="#111" stroke-width="1.2"/></svg>
<svg width="16" height="16" style="left:1702px;top:109px"><rect x="4" y="4" width="11" height="11" fill="#e8e0c8" stroke="#222" stroke-width="0.8"/><rect x="1" y="1" width="11" height="11" fill="#f4f4f4" stroke="#222" stroke-width="0.8"/><rect x="3" y="3" width="7" height="7" fill="#4a7ad0"/><circle cx="3.5" cy="3" r="1.3" fill="#f0f060"/></svg>
<div class="t" style="left:1721.1px;top:110.41px;font-size:11.5px;line-height:13.22px;color:#000;">RenderLayers</div>
<div style="position:absolute;left:1800px;top:112px;width:1px;height:12px;background:#222"></div>
<svg width="20" height="20" style="left:1808px;top:105px"><circle cx="10" cy="10" r="9.5" fill="#8a8a8a" opacity="0.6"/></svg>
<svg width="16" height="16" style="left:1810px;top:108px"><rect x="4" y="4" width="11" height="11" fill="#e8e0c8" stroke="#222" stroke-width="0.8"/><rect x="1" y="1" width="11" height="11" fill="#f4f4f4" stroke="#222" stroke-width="0.8"/><rect x="3" y="3" width="7" height="7" fill="#4a7ad0"/><circle cx="3.5" cy="3" r="1.3" fill="#f0f060"/></svg>
<svg width="18" height="18" style="left:1701px;top:126px"><circle cx="9" cy="9" r="8.5" fill="#8d93a5"/><circle cx="9" cy="9" r="6.5" fill="#3a78c8" stroke="#222" stroke-width="0.8"/><path d="M5 6 Q8 4 9 7 T12 9 Q11 12 8 12 Q5 11 5 9Z" fill="#6aa84f"/></svg>
<div class="t" style="left:1721.1px;top:130.41px;font-size:11.5px;line-height:13.22px;color:#000;">World</div>
<svg width="10" height="10" style="left:1684px;top:150px"><circle cx="4.5" cy="4.5" r="3.8" fill="#d8d8d8" stroke="#111" stroke-width="1"/><path d="M2.2 4.5 H6.8" stroke="#111" stroke-width="1.2"/><path d="M4.5 2.2 V6.8" stroke="#111" stroke-width="1.2"/></svg>
<svg width="18" height="18" style="left:1701px;top:146px"><circle cx="9" cy="9" r="8.7" fill="#c58a4a"/><path d="M4 4.5 L14 4.5 L9 14 Z" fill="none" stroke="#fff" stroke-width="1.5"/></svg>
<div class="t" style="left:1721.1px;top:150.41px;font-size:11.5px;line-height:13.22px;color:#fff;">mesh10_0_0_0_0</div>
<div style="position:absolute;left:1820px;top:150px;width:1px;height:12px;background:#333"></div>
<svg width="20" height="20" style="left:1828px;top:145px"><circle cx="10" cy="10" r="9.5" fill="#8e8e8e"/><path d="M5 5.5 L15 5.5 L10 15 Z" fill="none" stroke="#555" stroke-width="1.2"/><circle cx="5" cy="5.5" r="1.3" fill="#ddd"/><circle cx="15" cy="5.5" r="1.3" fill="#ddd"/><circle cx="10" cy="15" r="1.3" fill="#ddd"/></svg>
<svg width="16" height="12" style="left:1855px;top:149px"><path d="M1 6 Q8 -1 15 6 Q8 13 1 6 Z" fill="#fff" stroke="#111" stroke-width="1"/><circle cx="8" cy="6" r="2.5" fill="#111"/></svg>
<svg width="10" height="14" style="left:1880px;top:148px"><path d="M1 1 L1 11 L3.5 8.5 L6 13 L7.5 12 L5 7.5 L8.5 7.5 Z" fill="#fff" stroke="#111" stroke-width="1"/></svg>
<svg width="16" height="14" style="left:1894px;top:148px"><rect x="1" y="3" width="13" height="9" fill="#e8e8e8" stroke="#111" stroke-width="1"/><circle cx="7.5" cy="7.5" r="2.8" fill="#c03030" stroke="#111" stroke-width="0.8"/><rect x="3" y="1.5" width="4" height="2" fill="#111"/></svg>
<div style="position:absolute;left:1664px;top:210px;width:243px;height:13px;background:#5f5f5f;border:1px solid #555;border-radius:7px;box-sizing:border-box"></div>
<div style="position:absolute;left:1664px;top:210px;width:204px;height:13px;background:linear-gradient(#a4a4a4,#868686);border:1px solid #4a4a4a;border-radius:7px;box-sizing:border-box"></div>
<svg width="14" height="14" style="left:1660px;top:210px"><path d="M0 1.5 L11.5 13 M0 5.5 L7.5 13 M0 9.5 L3.5 13" stroke="#111" stroke-width="1"/><path d="M0 3 L10 13 M0 7 L6 13 M0 11 L2 13" stroke="#d0d0d0" stroke-width="1"/></svg>
<div style="position:absolute;left:1660px;top:228px;width:252px;height:25px;background:#727272"></div>
<div style="position:absolute;left:1660px;top:228px;width:252px;height:1px;background:#7e7e7e"></div>
<svg width="14" height="14" style="left:1660px;top:238px"><path d="M0 1.5 L11.5 13 M0 5.5 L7.5 13 M0 9.5 L3.5 13" stroke="#111" stroke-width="1"/><path d="M0 3 L10 13 M0 7 L6 13 M0 11 L2 13" stroke="#d0d0d0" stroke-width="1"/></svg>
<svg width="14" height="14" style="left:1898px;top:228px"><path d="M1.5 0 L14 12.5 M5.5 0 L14 8.5 M9.5 0 L14 4.5" stroke="#111" stroke-width="1"/><path d="M0.5 1 L13 13.5 M4.5 1 L13 9.5 M8.5 1 L13 5.5" stroke="#d0d0d0" stroke-width="1"/></svg>
<div class="w menu" style="left:1669px;top:231px;width:30px;height:20px;border-radius:4px;"></div>
<svg width="16" height="14" style="left:1672px;top:234px"><rect x="1" y="1" width="12" height="4.5" rx="2" fill="#fff" stroke="#222" stroke-width="0.8"/><rect x="1" y="1" width="5" height="4.5" rx="2" fill="#666"/><rect x="1" y="8" width="12" height="4.5" rx="2" fill="#fff" stroke="#222" stroke-width="0.8"/></svg>
<svg width="10" height="16" style="left:1688px;top:233px"><path d="M1 6 L4.5 1 L8 6 Z M1 9 L4.5 14 L8 9 Z" fill="#bdbdbd"/></svg>
<div class="w menu" style="left:1708px;top:231px;width:204px;height:20px;border-radius:4px 0 0 4px;"></div>
<div style="position:absolute;left:1728px;top:232px;width:1px;height:18px;background:#222"></div>
<div style="position:absolute;left:1748px;top:232px;width:1px;height:18px;background:#222"></div>
<div style="position:absolute;left:1767px;top:232px;width:1px;height:18px;background:#222"></div>
<div style="position:absolute;left:1787px;top:232px;width:1px;height:18px;background:#222"></div>
<div style="position:absolute;left:1807px;top:232px;width:1px;height:18px;background:#222"></div>
<div style="position:absolute;left:1827px;top:232px;width:1px;height:18px;background:#222"></div>
<div style="position:absolute;left:1847px;top:232px;width:1px;height:18px;background:#222"></div>
<div style="position:absolute;left:1867px;top:232px;width:1px;height:18px;background:#222"></div>
<div style="position:absolute;left:1868px;top:232px;width:19px;height:18px;background:linear-gradient(#6b98dc,#4c76b8)"></div>
<div style="position:absolute;left:1886px;top:232px;width:1px;height:18px;background:#222"></div>
<svg width="1920" height="300" style="left:0;top:0"><g transform="translate(1710,234)"><rect x="1" y="4" width="14" height="9" fill="#8c8c8c" stroke="#222" stroke-width="0.8"/><circle cx="8" cy="8.5" r="3" fill="#666" stroke="#222" stroke-width="0.8"/><rect x="3" y="2" width="4" height="2" fill="#333"/></g><g transform="translate(1730,234)"><rect x="3" y="3" width="11" height="11" fill="#cfc8b0" stroke="#222" stroke-width="0.7"/><rect x="1" y="1" width="11" height="11" fill="#d8d8d8" stroke="#222" stroke-width="0.7"/><rect x="3" y="3" width="7" height="7" fill="#5a7ab0"/></g><g transform="translate(1750,234)"><circle cx="3" cy="2.5" r="1.5" fill="#f0f080"/><rect x="7" y="2" width="5" height="9" rx="2" fill="#4a78c0"/><circle cx="5" cy="11" r="3.2" fill="#ddd" stroke="#222" stroke-width="0.7"/></g><g transform="translate(1769,234)"><circle cx="8" cy="8" r="6.5" fill="#3a78c8" stroke="#222" stroke-width="0.7"/><path d="M4 6 Q7 4 8 7 T11 9 Q10 12 7 12 Q4 11 4 9Z" fill="#6aa84f"/></g><g transform="translate(1789,234)"><path d="M8 1 L14 4 V11 L8 14 L2 11 V4 Z" fill="#d8913e" stroke="#222" stroke-width="0.7"/><path d="M2 4 L8 7 L14 4 M8 7 V14" stroke="#f8d8a0" stroke-width="0.7" fill="none"/></g><g transform="translate(1809,234)"><path d="M3 9 L6 6 M10 10 L13 7" stroke="#bbb" stroke-width="2"/><rect x="1" y="6" width="7" height="5" rx="2.5" fill="none" stroke="#bbb" stroke-width="1.5" transform="rotate(-40 4.5 8.5)"/><rect x="8" y="4" width="7" height="5" rx="2.5" fill="none" stroke="#bbb" stroke-width="1.5" transform="rotate(-40 11.5 6.5)"/></g><g transform="translate(1829,234)"><path d="M2.5 14 L9 7.5" stroke="#222" stroke-width="3.6" stroke-linecap="round"/><path d="M2.5 14 L9 7.5" stroke="#7aa8e0" stroke-width="2" stroke-linecap="round"/><path d="M8 8 A4.2 4.2 0 1 1 13.5 3.5 L11.5 5 L10 4 L10.5 2 A4.2 4.2 0 0 0 8 8 Z" fill="#7aa8e0" stroke="#222" stroke-width="0.8"/></g><g transform="translate(1849,234)"><path d="M3 3 H13 L8 13 Z" fill="none" stroke="#bbb" stroke-width="1"/><rect x="1.5" y="1.5" width="3" height="3" fill="#fff" stroke="#111" stroke-width="0.6"/><rect x="11.5" y="1.5" width="3" height="3" fill="#fff" stroke="#111" stroke-width="0.6"/><rect x="6.5" y="11.5" width="3" height="3" fill="#fff" stroke="#111" stroke-width="0.6"/></g><g transform="translate(1869,234)"><circle cx="8" cy="8" r="6.5" fill="#e8e8e8" stroke="#111" stroke-width="1"/><path d="M8 8 H14.5 A6.5 6.5 0 0 1 8 14.5 Z" fill="#c08070"/><path d="M8 8 H1.5 A6.5 6.5 0 0 0 8 14.5 Z" fill="#a06050" opacity="0.6"/><path d="M8 8 V1.5 A6.5 6.5 0 0 1 14.5 8 Z" fill="#806060" opacity="0.6"/></g><g transform="translate(1889,234)"><rect x="1" y="1" width="13" height="13" fill="#d8d8d8" stroke="#444" stroke-width="0.6"/><rect x="1.00" y="1.00" width="3.25" height="3.25" fill="#8a1a1a"/><rect x="7.50" y="1.00" width="3.25" height="3.25" fill="#8a1a1a"/><rect x="4.25" y="4.25" width="3.25" height="3.25" fill="#8a1a1a"/><rect x="10.75" y="4.25" width="3.25" height="3.25" fill="#8a1a1a"/><rect x="1.00" y="7.50" width="3.25" height="3.25" fill="#8a1a1a"/><rect x="7.50" y="7.50" width="3.25" height="3.25" fill="#8a1a1a"/><rect x="4.25" y="10.75" width="3.25" height="3.25" fill="#8a1a1a"/><rect x="10.75" y="10.75" width="3.25" height="3.25" fill="#8a1a1a"/></g></svg>
<div style="position:absolute;left:1660px;top:253px;width:252px;height:779px;background:#727272"></div>
<div style="position:absolute;left:1896px;top:260px;width:12px;height:768px;background:#626262;border:1px solid #555;border-radius:6px;box-sizing:border-box"></div>
<div style="position:absolute;left:1896px;top:260px;width:12px;height:541px;background:linear-gradient(90deg,#a0a0a0,#858585);border:1px solid #4a4a4a;border-radius:6px;box-sizing:border-box"></div>
<svg width="16" height="16" style="left:1670px;top:264px"><path d="M2 14 L7 9" stroke="#ddd" stroke-width="1.5"/><path d="M6 5 L11 10 L13 8 L11 6 L13 3 L11 1 L8 3 L6 1 L4 3 Z" fill="#cfcfcf" stroke="#222" stroke-width="0.8"/></svg>
<svg width="16" height="16" style="left:1692px;top:264px"><circle cx="3" cy="2.5" r="1.6" fill="#f0f080"/><rect x="7" y="3" width="5" height="8" rx="2" fill="#3f74c9" stroke="#16243b" stroke-width="0.8"/><ellipse cx="9.5" cy="3.5" rx="2.5" ry="1.2" fill="#9cc0f0"/><circle cx="5" cy="11" r="3.4" fill="#e6e6e6" stroke="#222" stroke-width="0.8"/></svg>
<svg width="4" height="7" style="left:1714px;top:268px"><path d="M0 0 V7 L4 3.5 Z" fill="#333"/></svg>
<svg width="14" height="15" style="left:1733px;top:264px"><path d="M7 1 L13 4 V11 L7 14 L1 11 V4 Z" fill="#e0933a" stroke="#222" stroke-width="0.8"/><path d="M1 4 L7 7 L13 4 M7 7 V14" stroke="#fcd9a0" stroke-width="0.8" fill="none"/></svg>
<div class="t" style="left:1752.2px;top:267.41px;font-size:11.5px;line-height:13.22px;color:#000;">mesh10_0...</div>
<svg width="4" height="7" style="left:1823px;top:268px"><path d="M0 0 V7 L4 3.5 Z" fill="#333"/></svg>
<svg width="16" height="16" style="left:1840px;top:264px"><circle cx="7.5" cy="7.5" r="6.5" fill="#e8e8e8" stroke="#111" stroke-width="1"/><path d="M7.5 7.5 H14 A6.5 6.5 0 0 1 7.5 14 Z" fill="#c08070"/><path d="M7.5 7.5 H1 A6.5 6.5 0 0 0 7.5 14 Z" fill="#a06050" opacity="0.6"/><path d="M7.5 7.5 V1 A6.5 6.5 0 0 1 14 7.5 Z" fill="#806060" opacity="0.6"/></svg>
<div style="position:absolute;left:1861px;top:262px;width:33px;height:20px;overflow:hidden"><div class="t" style="left:0;top:3px;font-size:11.5px;line-height:14px">defau</div></div>
<div style="position:absolute;left:1668px;top:298px;width:191px;height:43px;background:#787878;border:1px solid #555;border-radius:5px;box-sizing:border-box"></div>
<div style="position:absolute;left:1674px;top:307px;width:179px;height:18px;background:#5680c2;border-radius:3px"></div>
<svg width="16" height="16" style="left:1677px;top:308px"><defs><radialGradient id="sph" cx="0.35" cy="0.3" r="0.8"><stop offset="0" stop-color="#fff"/><stop offset="0.6" stop-color="#bbb"/><stop offset="1" stop-color="#555"/></radialGradient></defs><circle cx="8" cy="8" r="7.5" fill="url(#sph)"/></svg>
<div class="t" style="left:1697.3px;top:311.41px;font-size:11.5px;line-height:13.22px;color:#fff;">default</div>
<svg width="9" height="9" style="left:1678px;top:326px"><circle cx="4.5" cy="4.5" r="3.6" fill="none" stroke="#444" stroke-width="1"/><path d="M2.5 4.5 H6.5 M4.5 2.5 V6.5" stroke="#444" stroke-width="1"/></svg>
<div style="position:absolute;left:1766px;top:329px;width:14px;height:1px;background:#222"></div>
<div style="position:absolute;left:1766px;top:332px;width:14px;height:1px;background:#222"></div>
<div class="w tool" style="left:1867px;top:298px;width:20px;height:20px;border-radius:5px 5px 0 0;"></div>
<div class="w tool" style="left:1867px;top:317px;width:20px;height:21px;border-radius:0;"></div>
<div class="w menu" style="left:1867px;top:337px;width:20px;height:21px;border-radius:0 0 5px 5px;"></div>
<svg width="12" height="12" style="left:1871px;top:302px"><path d="M6.0 1 V11 M1 6.0 H11" stroke="#111" stroke-width="3.6"/><path d="M6.0 1.8 V10.2 M1.8 6.0 H10.2" stroke="#fff" stroke-width="1.8"/></svg>
<svg width="12" height="4" style="left:1871px;top:325px"><rect x="0" y="0" width="12" height="3.5" fill="#111"/><rect x="1" y="1" width="10" height="1.5" fill="#fff"/></svg>
<svg width="10" height="10" style="left:1872px;top:342px"><path d="M1 1 H9 L6 9 Z" fill="#111" stroke="#ddd" stroke-width="0.8"/></svg>
<div class="w tool" style="left:1668px;top:364px;width:73px;height:19px;border-radius:5px 0 0 5px;"></div>
<div class="w tool" style="left:1740px;top:364px;width:74px;height:19px;border-radius:0;"></div>
<div class="w tool" style="left:1813px;top:364px;width:74px;height:19px;border-radius:0 5px 5px 0;"></div>
<div class="t" style="left:1554.5px;width:300px;text-align:center;top:367.91px;font-size:11.5px;line-height:13.22px;color:#000;">Assign</div>
<div class="t" style="left:1627px;width:300px;text-align:center;top:367.91px;font-size:11.5px;line-height:13.22px;color:#000;">Select</div>
<div class="t" style="left:1700px;width:300px;text-align:center;top:367.91px;font-size:11.5px;line-height:13.22px;color:#000;">Deselect</div>
<div class="w menu" style="left:1668px;top:388px;width:27px;height:20px;border-radius:5px 0 0 5px;"></div>
<svg width="14" height="14" style="left:1671px;top:391px"><circle cx="7" cy="7" r="6" fill="#e8e8e8" stroke="#111" stroke-width="1"/><path d="M7 7 H13 A6 6 0 0 1 7 13 Z" fill="#c08070"/><path d="M7 7 H1 A6 6 0 0 0 7 13 Z" fill="#a06050" opacity="0.6"/></svg>
<svg width="10" height="16" style="left:1686px;top:390px"><path d="M1 6 L4.5 1 L8 6 Z M1 9 L4.5 14 L8 9 Z" fill="#aaa"/></svg>
<div class="w txt" style="left:1694px;top:388px;width:35px;height:20px;border-radius:0;background:linear-gradient(#bdbdbd,#b0b0b0)"></div>
<div class="t" style="left:1561.5px;width:300px;text-align:center;top:392.91px;font-size:11.5px;line-height:13.22px;color:#000;">defa</div>
<div class="w tool" style="left:1728px;top:388px;width:24px;height:20px;border-radius:0;background:linear-gradient(#a0a0a0,#949494)"></div>
<div class="t" style="left:1590px;width:300px;text-align:center;top:392.91px;font-size:11.5px;line-height:13.22px;color:#666;">15</div>
<div class="w tool" style="left:1751px;top:388px;width:18px;height:20px;border-radius:0;"></div>
<div class="t" style="left:1610px;width:300px;text-align:center;top:393.36px;font-size:11px;line-height:12.65px;color:#000;">F</div>
<div class="w tool" style="left:1768px;top:388px;width:18px;height:20px;border-radius:0;"></div>
<div class="w tool" style="left:1785px;top:388px;width:20px;height:20px;border-radius:0 5px 5px 0;"></div>
<svg width="12" height="12" style="left:1771px;top:392px"><path d="M6.0 1 V11 M1 6.0 H11" stroke="#111" stroke-width="3.6"/><path d="M6.0 1.8 V10.2 M1.8 6.0 H10.2" stroke="#fff" stroke-width="1.8"/></svg>
<svg width="12" height="12" style="left:1789px;top:392px"><path d="M2 2 L10 10 M10 2 L2 10" stroke="#111" stroke-width="3.4"/><path d="M2.6 2.6 L9.4 9.4 M9.4 2.6 L2.6 9.4" stroke="#fff" stroke-width="1.6"/></svg>
<div class="w tool" style="left:1813px;top:388px;width:20px;height:20px;border-radius:5px;"></div>
<svg width="16" height="16" style="left:1815px;top:390px"><rect x="1" y="1" width="8" height="5" fill="#eee" stroke="#222" stroke-width="0.8"/><rect x="1" y="9" width="8" height="5" fill="#eee" stroke="#222" stroke-width="0.8"/><path d="M9 3.5 Q14 3.5 14 8 Q14 11.5 9 11.5" stroke="#5aa0e0" stroke-width="1.2" fill="none"/></svg>
<div class="w menu" style="left:1841px;top:388px;width:46px;height:20px;border-radius:5px;"></div>
<div class="t" style="left:1849.4px;top:392.91px;font-size:11.5px;line-height:13.22px;color:#fff;">Data</div>
<svg width="10" height="16" style="left:1876px;top:390px"><path d="M1 6 L4.5 1 L8 6 Z M1 9 L4.5 14 L8 9 Z" fill="#bdbdbd"/></svg>
<div class="w sel" style="left:1668px;top:413px;width:54px;height:20px;border-radius:5px 0 0 5px;"></div>
<div class="w menu" style="left:1721px;top:413px;width:55px;height:20px;border-radius:0;"></div>
<div class="w menu" style="left:1775px;top:413px;width:56px;height:20px;border-radius:0;"></div>
<div class="w menu" style="left:1830px;top:413px;width:57px;height:20px;border-radius:0 5px 5px 0;"></div>
<div class="t" style="left:1545px;width:300px;text-align:center;top:418.11px;font-size:11.5px;line-height:13.22px;color:#000;">Surface</div>
<div class="t" style="left:1598px;width:300px;text-align:center;top:418.11px;font-size:11.5px;line-height:13.22px;color:#fff;">Wire</div>
<div class="t" style="left:1652.5px;width:300px;text-align:center;top:418.11px;font-size:11.5px;line-height:13.22px;color:#fff;">Volume</div>
<div class="t" style="left:1708.5px;width:300px;text-align:center;top:418.11px;font-size:11.5px;line-height:13.22px;color:#fff;">Halo</div>
<div style="position:absolute;left:1665px;top:440px;width:225px;height:1px;background:#5a5a5a"></div>
<div style="position:absolute;left:1665px;top:441px;width:225px;height:1px;background:#7d7d7d"></div>
<svg width="8" height="8" style="left:1673px;top:449px"><path d="M0 0 H8 L4.0 8 Z" fill="#1e1e1e"/></svg>
<div class="t" style="left:1685.3px;top:446.98px;font-size:12.5px;line-height:14.37px;color:#000;">Preview</div>
<svg width="12" height="6" style="left:1873px;top:452px" shape-rendering="crispEdges"><rect x="0" y="0" width="1" height="1" fill="#e8e8e8"/><rect x="0" y="1" width="1" height="1" fill="#1a1a1a"/><rect x="0" y="3" width="1" height="1" fill="#e8e8e8"/><rect x="0" y="4" width="1" height="1" fill="#1a1a1a"/><rect x="3" y="0" width="1" height="1" fill="#e8e8e8"/><rect x="3" y="1" width="1" height="1" fill="#1a1a1a"/><rect x="3" y="3" width="1" height="1" fill="#e8e8e8"/><rect x="3" y="4" width="1" height="1" fill="#1a1a1a"/><rect x="6" y="0" width="1" height="1" fill="#e8e8e8"/><rect x="6" y="1" width="1" height="1" fill="#1a1a1a"/><rect x="6" y="3" width="1" height="1" fill="#e8e8e8"/><rect x="6" y="4" width="1" height="1" fill="#1a1a1a"/><rect x="9" y="0" width="1" height="1" fill="#e8e8e8"/><rect x="9" y="1" width="1" height="1" fill="#1a1a1a"/><rect x="9" y="3" width="1" height="1" fill="#e8e8e8"/><rect x="9" y="4" width="1" height="1" fill="#1a1a1a"/></svg>
<svg width="181" height="112" style="left:1668px;top:473px"><defs><clipPath id="pc"><rect x="0" y="0" width="181" height="112" rx="4"/></clipPath><radialGradient id="ball" cx="0.35" cy="0.3" r="0.78"><stop offset="0" stop-color="#ffffff"/><stop offset="0.3" stop-color="#f4f4f4"/><stop offset="0.75" stop-color="#c4c4c4"/><stop offset="1" stop-color="#777"/></radialGradient></defs><g clip-path="url(#pc)"><rect width="181" height="112" fill="#2e2e2e"/><polygon points="-15.6,-25.0 9.4,-16.2 9.4,7.3 -15.6,1.5" fill="#9a9a9a"/><polygon points="-15.6,28.0 9.4,30.9 9.4,54.4 -15.6,54.4" fill="#9a9a9a"/><polygon points="-15.6,80.9 9.4,78.0 9.4,101.6 -15.6,107.4" fill="#9a9a9a"/><polygon points="-15.6,133.9 9.4,125.1 9.4,148.7 -15.6,160.4" fill="#9a9a9a"/><polygon points="9.4,-39.8 34.4,-28.0 34.4,-7.4 9.4,-16.2" fill="#9a9a9a"/><polygon points="9.4,7.3 34.4,13.2 34.4,33.8 9.4,30.9" fill="#9a9a9a"/><polygon points="9.4,54.4 34.4,54.4 34.4,75.1 9.4,78.0" fill="#9a9a9a"/><polygon points="9.4,101.6 34.4,95.7 34.4,116.3 9.4,125.1" fill="#9a9a9a"/><polygon points="34.4,-7.4 53.9,-0.6 53.9,17.8 34.4,13.2" fill="#9a9a9a"/><polygon points="34.4,33.8 53.9,36.1 53.9,54.4 34.4,54.4" fill="#9a9a9a"/><polygon points="34.4,75.1 53.9,72.8 53.9,91.1 34.4,95.7" fill="#9a9a9a"/><polygon points="34.4,116.3 53.9,109.4 53.9,127.8 34.4,136.9" fill="#9a9a9a"/><polygon points="53.9,-18.9 73.3,-9.8 73.3,6.3 53.9,-0.6" fill="#9a9a9a"/><polygon points="53.9,17.8 73.3,22.3 73.3,38.4 53.9,36.1" fill="#9a9a9a"/><polygon points="53.9,54.4 73.3,54.4 73.3,70.5 53.9,72.8" fill="#9a9a9a"/><polygon points="53.9,91.1 73.3,86.5 73.3,102.6 53.9,109.4" fill="#9a9a9a"/><polygon points="106.7,-9.8 128.3,-19.9 128.3,-1.3 106.7,6.3" fill="#9a9a9a"/><polygon points="106.7,22.3 128.3,17.3 128.3,35.8 106.7,38.4" fill="#9a9a9a"/><polygon points="106.7,54.4 128.3,54.4 128.3,73.0 106.7,70.5" fill="#9a9a9a"/><polygon points="106.7,86.5 128.3,91.6 128.3,110.2 106.7,102.6" fill="#9a9a9a"/><polygon points="128.3,-1.3 147.2,-8.0 147.2,12.8 128.3,17.3" fill="#9a9a9a"/><polygon points="128.3,35.8 147.2,33.6 147.2,54.4 128.3,54.4" fill="#9a9a9a"/><polygon points="128.3,73.0 147.2,75.3 147.2,96.1 128.3,91.6" fill="#9a9a9a"/><polygon points="128.3,110.2 147.2,116.9 147.2,137.7 128.3,128.8" fill="#9a9a9a"/><polygon points="147.2,-28.8 172.2,-40.6 172.2,-16.8 147.2,-8.0" fill="#9a9a9a"/><polygon points="147.2,12.8 172.2,6.9 172.2,30.7 147.2,33.6" fill="#9a9a9a"/><polygon points="147.2,54.4 172.2,54.4 172.2,78.2 147.2,75.3" fill="#9a9a9a"/><polygon points="147.2,96.1 172.2,101.9 172.2,125.7 147.2,116.9" fill="#9a9a9a"/><polygon points="172.2,-16.8 195.6,-25.0 195.6,1.5 172.2,6.9" fill="#9a9a9a"/><polygon points="172.2,30.7 195.6,28.0 195.6,54.4 172.2,54.4" fill="#9a9a9a"/><polygon points="172.2,78.2 195.6,80.9 195.6,107.4 172.2,101.9" fill="#9a9a9a"/><polygon points="172.2,125.7 195.6,133.9 195.6,160.4 172.2,149.4" fill="#9a9a9a"/><ellipse cx="90" cy="111" rx="60" ry="8" fill="#1e1e1e" opacity="0.5"/><circle cx="90.4" cy="55" r="50" fill="url(#ball)"/></g><rect x="0.5" y="0.5" width="180" height="111" rx="4" fill="none" stroke="#2a2a2a"/></svg>
<div style="position:absolute;left:1751px;top:589px;width:14px;height:1px;background:#222"></div>
<div style="position:absolute;left:1751px;top:592px;width:14px;height:1px;background:#222"></div>
<div class="w menu" style="left:1857px;top:474px;width:30px;height:21px;border-radius:5px 5px 0 0;"></div>
<div class="w sel" style="left:1857px;top:494px;width:30px;height:21px;border-radius:0;"></div>
<div class="w menu" style="left:1857px;top:513px;width:30px;height:21px;border-radius:0;"></div>
<div class="w menu" style="left:1857px;top:533px;width:30px;height:21px;border-radius:0;"></div>
<div class="w menu" style="left:1857px;top:553px;width:30px;height:21px;border-radius:0;"></div>
<div class="w menu" style="left:1857px;top:572px;width:30px;height:20px;border-radius:0 0 5px 5px;"></div>
<svg width="30" height="120" style="left:1857px;top:474px">
<rect x="8" y="5" width="13" height="12" fill="#8a8a8a" stroke="#222" stroke-width="0.8"/>
<circle cx="14.5" cy="29.5" r="6.5" fill="#eee" stroke="#222" stroke-width="0.8"/>
<path d="M14.5 42 L21 45 V52 L14.5 55 L8 52 V45 Z" fill="#8a8a8a" stroke="#333" stroke-width="0.6"/>
<path d="M10 63 Q14.5 58 19 63 L18 68 L15 74 L11 68 Z" fill="#9a9a9a"/>
<path d="M10 94 Q10 84 16 80 M14 94 Q14 86 19 82 M18 94 Q18 88 22 85" stroke="#bbb" stroke-width="1.2" fill="none"/>
<circle cx="12" cy="111" r="5" fill="#ccc"/><circle cx="18" cy="104" r="4" fill="#789"/>
</svg>
<div style="position:absolute;left:1665px;top:601px;width:225px;height:1px;background:#5a5a5a"></div>
<div style="position:absolute;left:1665px;top:602px;width:225px;height:1px;background:#7d7d7d"></div>
<svg width="8" height="8" style="left:1673px;top:609px"><path d="M0 0 H8 L4.0 8 Z" fill="#1e1e1e"/></svg>
<div class="t" style="left:1685.5px;top:606.48px;font-size:12.5px;line-height:14.37px;color:#000;">Diffuse</div>
<svg width="12" height="6" style="left:1873px;top:612px" shape-rendering="crispEdges"><rect x="0" y="0" width="1" height="1" fill="#e8e8e8"/><rect x="0" y="1" width="1" height="1" fill="#1a1a1a"/><rect x="0" y="3" width="1" height="1" fill="#e8e8e8"/><rect x="0" y="4" width="1" height="1" fill="#1a1a1a"/><rect x="3" y="0" width="1" height="1" fill="#e8e8e8"/><rect x="3" y="1" width="1" height="1" fill="#1a1a1a"/><rect x="3" y="3" width="1" height="1" fill="#e8e8e8"/><rect x="3" y="4" width="1" height="1" fill="#1a1a1a"/><rect x="6" y="0" width="1" height="1" fill="#e8e8e8"/><rect x="6" y="1" width="1" height="1" fill="#1a1a1a"/><rect x="6" y="3" width="1" height="1" fill="#e8e8e8"/><rect x="6" y="4" width="1" height="1" fill="#1a1a1a"/><rect x="9" y="0" width="1" height="1" fill="#e8e8e8"/><rect x="9" y="1" width="1" height="1" fill="#1a1a1a"/><rect x="9" y="3" width="1" height="1" fill="#e8e8e8"/><rect x="9" y="4" width="1" height="1" fill="#1a1a1a"/></svg>
<div class="w txt" style="left:1668px;top:634px;width:105px;height:19px;border-radius:5px;background:#fff"></div>
<div class="w menu" style="left:1781px;top:634px;width:106px;height:19px;border-radius:5px;"></div>
<div class="t" style="left:1789.4px;top:638.41px;font-size:11.5px;line-height:13.22px;color:#fff;">Lambert</div>
<svg width="10" height="16" style="left:1876px;top:636px"><path d="M1 6 L4.5 1 L8 6 Z M1 9 L4.5 14 L8 9 Z" fill="#bdbdbd"/></svg>
<div class="w tool" style="left:1668px;top:655px;width:105px;height:20px;border-radius:10px;background:linear-gradient(#9a9a9a,#8c8c8c)"></div>
<div class="t" style="left:1570px;width:300px;text-align:center;top:660.71px;font-size:11.5px;line-height:13.22px;color:#000;">Intensit: 1.000</div>
<div class="w chk" style="left:1784px;top:658px;width:14px;height:14px;border-radius:4px;"></div>
<div class="t" style="left:1806.3px;top:660.71px;font-size:11.5px;line-height:13.22px;color:#000;">Ramp</div>
<div style="position:absolute;left:1665px;top:688px;width:225px;height:1px;background:#5a5a5a"></div>
<div style="position:absolute;left:1665px;top:689px;width:225px;height:1px;background:#7d7d7d"></div>
<svg width="8" height="8" style="left:1673px;top:696px"><path d="M0 0 H8 L4.0 8 Z" fill="#1e1e1e"/></svg>
<div class="t" style="left:1685.5px;top:693.48px;font-size:12.5px;line-height:14.37px;color:#000;">Specular</div>
<svg width="12" height="6" style="left:1873px;top:699px" shape-rendering="crispEdges"><rect x="0" y="0" width="1" height="1" fill="#e8e8e8"/><rect x="0" y="1" width="1" height="1" fill="#1a1a1a"/><rect x="0" y="3" width="1" height="1" fill="#e8e8e8"/><rect x="0" y="4" width="1" height="1" fill="#1a1a1a"/><rect x="3" y="0" width="1" height="1" fill="#e8e8e8"/><rect x="3" y="1" width="1" height="1" fill="#1a1a1a"/><rect x="3" y="3" width="1" height="1" fill="#e8e8e8"/><rect x="3" y="4" width="1" height="1" fill="#1a1a1a"/><rect x="6" y="0" width="1" height="1" fill="#e8e8e8"/><rect x="6" y="1" width="1" height="1" fill="#1a1a1a"/><rect x="6" y="3" width="1" height="1" fill="#e8e8e8"/><rect x="6" y="4" width="1" height="1" fill="#1a1a1a"/><rect x="9" y="0" width="1" height="1" fill="#e8e8e8"/><rect x="9" y="1" width="1" height="1" fill="#1a1a1a"/><rect x="9" y="3" width="1" height="1" fill="#e8e8e8"/><rect x="9" y="4" width="1" height="1" fill="#1a1a1a"/></svg>
<div class="w txt" style="left:1668px;top:721px;width:105px;height:19px;border-radius:5px;background:#bbbbbb"></div>
<div class="w menu" style="left:1781px;top:721px;width:106px;height:19px;border-radius:5px;"></div>
<div class="t" style="left:1789.4px;top:725.41px;font-size:11.5px;line-height:13.22px;color:#fff;">CookTorr</div>
<svg width="10" height="16" style="left:1876px;top:723px"><path d="M1 6 L4.5 1 L8 6 Z M1 9 L4.5 14 L8 9 Z" fill="#bdbdbd"/></svg>
<div class="w tool" style="left:1668px;top:742px;width:105px;height:20px;border-radius:10px;background:linear-gradient(#9a9a9a,#8c8c8c)"></div>
<div class="t" style="left:1570px;width:300px;text-align:center;top:747.91px;font-size:11.5px;line-height:13.22px;color:#000;">Intensit: 1.000</div>
<div class="w chk" style="left:1784px;top:745px;width:14px;height:14px;border-radius:4px;"></div>
<div class="t" style="left:1806.3px;top:747.91px;font-size:11.5px;line-height:13.22px;color:#000;">Ramp</div>
<div class="w num" style="left:1668px;top:767px;width:219px;height:20px;border-radius:10.0px;"></div>
<svg width="6" height="8" style="left:1674px;top:773.0px"><path d="M5 0.5 V7.5 L1 4 Z" fill="#707070"/></svg>
<svg width="6" height="8" style="left:1875px;top:773.0px"><path d="M1 0.5 V7.5 L5 4 Z" fill="#707070"/></svg>
<div class="t" style="left:1683.4px;top:772.91px;font-size:11.5px;line-height:13.22px;color:#000;">Hardness:</div>
<div class="t" style="left:1470.3px;width:400px;text-align:right;top:772.91px;font-size:11.5px;line-height:13.22px;color:#000;">33</div>
<div style="position:absolute;left:1665px;top:795px;width:225px;height:1px;background:#5a5a5a"></div>
<div style="position:absolute;left:1665px;top:796px;width:225px;height:1px;background:#7d7d7d"></div>
<svg width="8" height="8" style="left:1673px;top:803px"><path d="M0 0 H8 L4.0 8 Z" fill="#1e1e1e"/></svg>
<div class="t" style="left:1685.5px;top:800.48px;font-size:12.5px;line-height:14.37px;color:#000;">Shading</div>
<svg width="12" height="6" style="left:1873px;top:806px" shape-rendering="crispEdges"><rect x="0" y="0" width="1" height="1" fill="#e8e8e8"/><rect x="0" y="1" width="1" height="1" fill="#1a1a1a"/><rect x="0" y="3" width="1" height="1" fill="#e8e8e8"/><rect x="0" y="4" width="1" height="1" fill="#1a1a1a"/><rect x="3" y="0" width="1" height="1" fill="#e8e8e8"/><rect x="3" y="1" width="1" height="1" fill="#1a1a1a"/><rect x="3" y="3" width="1" height="1" fill="#e8e8e8"/><rect x="3" y="4" width="1" height="1" fill="#1a1a1a"/><rect x="6" y="0" width="1" height="1" fill="#e8e8e8"/><rect x="6" y="1" width="1" height="1" fill="#1a1a1a"/><rect x="6" y="3" width="1" height="1" fill="#e8e8e8"/><rect x="6" y="4" width="1" height="1" fill="#1a1a1a"/><rect x="9" y="0" width="1" height="1" fill="#e8e8e8"/><rect x="9" y="1" width="1" height="1" fill="#1a1a1a"/><rect x="9" y="3" width="1" height="1" fill="#e8e8e8"/><rect x="9" y="4" width="1" height="1" fill="#1a1a1a"/></svg>
<div class="w num" style="left:1668px;top:827px;width:105px;height:19px;border-radius:9.5px;"></div>
<svg width="6" height="8" style="left:1674px;top:832.5px"><path d="M5 0.5 V7.5 L1 4 Z" fill="#707070"/></svg>
<svg width="6" height="8" style="left:1761px;top:832.5px"><path d="M1 0.5 V7.5 L5 4 Z" fill="#707070"/></svg>
<div class="t" style="left:1683.4px;top:832.81px;font-size:11.5px;line-height:13.22px;color:#000;">Emit:</div>
<div class="t" style="left:1356.8px;width:400px;text-align:right;top:832.81px;font-size:11.5px;line-height:13.22px;color:#000;">0.00</div>
<div class="w chk" style="left:1784px;top:830px;width:14px;height:14px;border-radius:4px;"></div>
<div class="t" style="left:1806.3px;top:832.81px;font-size:11.5px;line-height:13.22px;color:#000;">Shadeless</div>
<div class="w num" style="left:1668px;top:849px;width:105px;height:20px;border-radius:10.0px;background:linear-gradient(#c4c4c4,#b0b0b0)"></div>
<div style="position:absolute;left:1669px;top:850px;width:10px;height:18px;background:#888;border-radius:10.0px 0 0 10.0px"></div>
<div class="t" style="left:1570.5px;width:300px;text-align:center;top:854.81px;font-size:11.5px;line-height:13.22px;color:#000;">Ambien: 0.000</div>
<div class="w chk" style="left:1784px;top:852px;width:14px;height:14px;border-radius:4px;"></div>
<div class="t" style="left:1806.3px;top:854.81px;font-size:11.5px;line-height:13.22px;color:#000;">Tangent Shad...</div>
<div class="w num" style="left:1668px;top:871px;width:105px;height:20px;border-radius:10.0px;background:linear-gradient(#c4c4c4,#b0b0b0)"></div>
<div style="position:absolute;left:1669px;top:872px;width:10px;height:18px;background:#888;border-radius:10.0px 0 0 10.0px"></div>
<div class="t" style="left:1570.5px;width:300px;text-align:center;top:877.21px;font-size:11.5px;line-height:13.22px;color:#000;">Transluc:0.000</div>
<div class="w chk" style="left:1784px;top:874px;width:14px;height:14px;border-radius:4px;"></div>
<div class="t" style="left:1806.3px;top:877.21px;font-size:11.5px;line-height:13.22px;color:#000;">Cubic Interpo...</div>
<div style="position:absolute;left:1665px;top:898px;width:225px;height:1px;background:#5a5a5a"></div>
<div style="position:absolute;left:1665px;top:899px;width:225px;height:1px;background:#7d7d7d"></div>
<svg width="8" height="8" style="left:1673px;top:907px"><path d="M0 0 H8 L4.0 8 Z" fill="#1e1e1e"/></svg>
<div class="w chk" style="left:1685px;top:905px;width:14px;height:13px;border-radius:4px;"></div>
<div class="t" style="left:1705.9px;top:904.98px;font-size:12.5px;line-height:14.37px;color:#000;">Transparency</div>
<svg width="12" height="6" style="left:1873px;top:910px" shape-rendering="crispEdges"><rect x="0" y="0" width="1" height="1" fill="#e8e8e8"/><rect x="0" y="1" width="1" height="1" fill="#1a1a1a"/><rect x="0" y="3" width="1" height="1" fill="#e8e8e8"/><rect x="0" y="4" width="1" height="1" fill="#1a1a1a"/><rect x="3" y="0" width="1" height="1" fill="#e8e8e8"/><rect x="3" y="1" width="1" height="1" fill="#1a1a1a"/><rect x="3" y="3" width="1" height="1" fill="#e8e8e8"/><rect x="3" y="4" width="1" height="1" fill="#1a1a1a"/><rect x="6" y="0" width="1" height="1" fill="#e8e8e8"/><rect x="6" y="1" width="1" height="1" fill="#1a1a1a"/><rect x="6" y="3" width="1" height="1" fill="#e8e8e8"/><rect x="6" y="4" width="1" height="1" fill="#1a1a1a"/><rect x="9" y="0" width="1" height="1" fill="#e8e8e8"/><rect x="9" y="1" width="1" height="1" fill="#1a1a1a"/><rect x="9" y="3" width="1" height="1" fill="#e8e8e8"/><rect x="9" y="4" width="1" height="1" fill="#1a1a1a"/></svg>
<div class="w menu" style="left:1668px;top:932px;width:73px;height:19px;border-radius:5px 0 0 5px;background:linear-gradient(#626262,#575757);border-color:#4a4a4a"></div>
<div class="w sel" style="left:1740px;top:932px;width:74px;height:19px;border-radius:0;background:linear-gradient(#7894bd,#6582ae);border-color:#4a4a4a"></div>
<div class="w menu" style="left:1813px;top:932px;width:74px;height:19px;border-radius:0 5px 5px 0;background:linear-gradient(#626262,#575757);border-color:#4a4a4a"></div>
<div class="t" style="left:1554.5px;width:300px;text-align:center;top:935.71px;font-size:11.5px;line-height:13.22px;color:#b8b8b8;">Mask</div>
<div class="t" style="left:1626.5px;width:300px;text-align:center;top:935.71px;font-size:11.5px;line-height:13.22px;color:#3c4a60;">Z Transpare...</div>
<div class="t" style="left:1700px;width:300px;text-align:center;top:935.71px;font-size:11.5px;line-height:13.22px;color:#b8b8b8;">Raytrace</div>
<div class="w num" style="left:1668px;top:957px;width:105px;height:19px;border-radius:9.5px;background:#838383;border-color:#5e5e5e"></div>
<div class="t" style="left:1682px;top:961.61px;font-size:11.5px;line-height:13.22px;color:#4e4e4e;">Alpha:</div>
<div class="t" style="left:1357.5px;width:400px;text-align:right;top:961.61px;font-size:11.5px;line-height:13.22px;color:#4e4e4e;">1.000</div>
<div class="w num" style="left:1781px;top:957px;width:106px;height:19px;border-radius:9.5px;background:#838383;border-color:#5e5e5e"></div>
<svg width="6" height="8" style="left:1787px;top:962.5px"><path d="M5 0.5 V7.5 L1 4 Z" fill="#6a6a6a"/></svg>
<svg width="6" height="8" style="left:1875px;top:962.5px"><path d="M1 0.5 V7.5 L5 4 Z" fill="#6a6a6a"/></svg>
<div class="t" style="left:1797px;top:961.61px;font-size:11.5px;line-height:13.22px;color:#4e4e4e;">Fresnel:</div>
<div class="t" style="left:1470.5px;width:400px;text-align:right;top:961.61px;font-size:11.5px;line-height:13.22px;color:#4e4e4e;">0.000</div>
<div class="w num" style="left:1668px;top:979px;width:105px;height:19px;border-radius:9.5px;background:#838383;border-color:#5e5e5e"></div>
<div class="t" style="left:1682px;top:983.61px;font-size:11.5px;line-height:13.22px;color:#4e4e4e;">Specula:</div>
<div class="t" style="left:1357.5px;width:400px;text-align:right;top:983.61px;font-size:11.5px;line-height:13.22px;color:#4e4e4e;">1.000</div>
<div class="w num" style="left:1781px;top:979px;width:106px;height:19px;border-radius:9.5px;background:#838383;border-color:#5e5e5e"></div>
<div style="position:absolute;left:1782px;top:980px;width:13px;height:17px;background:#767676;border-radius:9.5px 0 0 9.5px"></div>
<div class="t" style="left:1796px;top:983.61px;font-size:11.5px;line-height:13.22px;color:#4e4e4e;">Blend:</div>
<div class="t" style="left:1471px;width:400px;text-align:right;top:983.61px;font-size:11.5px;line-height:13.22px;color:#4e4e4e;">1.250</div>
<div style="position:absolute;left:1665px;top:1006px;width:225px;height:1px;background:#5a5a5a"></div>
<div style="position:absolute;left:1665px;top:1007px;width:225px;height:1px;background:#7d7d7d"></div>
<svg width="7" height="9" style="left:1673px;top:1014px"><path d="M0 0 V9 L7 4.5 Z" fill="#1e1e1e"/></svg>
<div class="w chk" style="left:1685px;top:1012px;width:14px;height:13px;border-radius:4px;"></div>
<div class="t" style="left:1705.9px;top:1012.48px;font-size:12.5px;line-height:14.37px;color:#000;">Mirror</div>
<svg width="12" height="6" style="left:1873px;top:1017px" shape-rendering="crispEdges"><rect x="0" y="0" width="1" height="1" fill="#e8e8e8"/><rect x="0" y="1" width="1" height="1" fill="#1a1a1a"/><rect x="0" y="3" width="1" height="1" fill="#e8e8e8"/><rect x="0" y="4" width="1" height="1" fill="#1a1a1a"/><rect x="3" y="0" width="1" height="1" fill="#e8e8e8"/><rect x="3" y="1" width="1" height="1" fill="#1a1a1a"/><rect x="3" y="3" width="1" height="1" fill="#e8e8e8"/><rect x="3" y="4" width="1" height="1" fill="#1a1a1a"/><rect x="6" y="0" width="1" height="1" fill="#e8e8e8"/><rect x="6" y="1" width="1" height="1" fill="#1a1a1a"/><rect x="6" y="3" width="1" height="1" fill="#e8e8e8"/><rect x="6" y="4" width="1" height="1" fill="#1a1a1a"/><rect x="9" y="0" width="1" height="1" fill="#e8e8e8"/><rect x="9" y="1" width="1" height="1" fill="#1a1a1a"/><rect x="9" y="3" width="1" height="1" fill="#e8e8e8"/><rect x="9" y="4" width="1" height="1" fill="#1a1a1a"/></svg>
<div style="position:absolute;left:1665px;top:1029px;width:225px;height:1px;background:#5a5a5a"></div>
<svg width="14" height="14" style="left:1660px;top:1019px"><path d="M0 1.5 L11.5 13 M0 5.5 L7.5 13 M0 9.5 L3.5 13" stroke="#111" stroke-width="1"/><path d="M0 3 L10 13 M0 7 L6 13 M0 11 L2 13" stroke="#d0d0d0" stroke-width="1"/></svg>
<div style="position:absolute;left:8px;top:508px;width:1651px;height:1px;background:#2e2e2e"></div>
<div style="position:absolute;left:8px;top:509px;width:1651px;height:26px;background:#727272"></div>
<div style="position:absolute;left:8px;top:509px;width:1651px;height:1px;background:#8a8a8a"></div>
<div style="position:absolute;left:8px;top:536px;width:1651px;height:1px;background:#414141"></div>
<svg width="14" height="14" style="left:8px;top:521px"><path d="M0 1.5 L11.5 13 M0 5.5 L7.5 13 M0 9.5 L3.5 13" stroke="#111" stroke-width="1"/><path d="M0 3 L10 13 M0 7 L6 13 M0 11 L2 13" stroke="#d0d0d0" stroke-width="1"/></svg>
<div class="w menu" style="left:17px;top:512px;width:30px;height:20px;border-radius:4px;"></div>
<svg width="16" height="16" style="left:20px;top:514px"><path d="M8 1.5 L14 4 V11.5 L8 14.5 L2 11.5 V4 Z" fill="#f4f4f4" stroke="#111" stroke-width="1"/><path d="M8 7 L14 4 V11.5 L8 14.5 Z" fill="#808080"/><path d="M2 4 L8 7 L14 4" stroke="#fff" stroke-width="0.6" fill="none"/></svg>
<svg width="10" height="16" style="left:37px;top:514px"><path d="M1 6 L4.5 1 L8 6 Z M1 9 L4.5 14 L8 9 Z" fill="#bdbdbd"/></svg>
<div class="t" style="left:59.2px;top:517.41px;font-size:11.5px;line-height:13.22px;color:#000;">View</div>
<div class="t" style="left:104.1px;top:517.41px;font-size:11.5px;line-height:13.22px;color:#000;">Select</div>
<div class="t" style="left:155.5px;top:517.41px;font-size:11.5px;line-height:13.22px;color:#000;">Add</div>
<div class="t" style="left:194.4px;top:517.41px;font-size:11.5px;line-height:13.22px;color:#000;">Mesh</div>
<div class="w menu" style="left:233px;top:512px;width:99px;height:20px;border-radius:4px;"></div>
<svg width="16" height="16" style="left:239px;top:514px"><path d="M5 2 L12 2 L14 5 V12 L8 14 L2 12 V5 Z" fill="none" stroke="#bbb" stroke-width="0.8"/><rect x="2" y="2" width="3" height="3" fill="#f08a20" stroke="#222" stroke-width="0.5"/><rect x="11" y="2" width="3" height="3" fill="#f08a20" stroke="#222" stroke-width="0.5"/><rect x="2" y="11" width="3" height="3" fill="#f08a20" stroke="#222" stroke-width="0.5"/><rect x="8" y="11" width="3" height="3" fill="#f08a20" stroke="#222" stroke-width="0.5"/></svg>
<div class="t" style="left:257.2px;top:517.41px;font-size:11.5px;line-height:13.22px;color:#fff;">Edit Mode</div>
<svg width="10" height="16" style="left:320px;top:514px"><path d="M1 6 L4.5 1 L8 6 Z M1 9 L4.5 14 L8 9 Z" fill="#bdbdbd"/></svg>
<div class="w menu" style="left:337px;top:512px;width:34px;height:20px;border-radius:4px;"></div>
<svg width="14" height="14" style="left:341px;top:515px"><circle cx="7" cy="7" r="5.8" fill="#f4f4f4" stroke="#222" stroke-width="0.8"/></svg>
<svg width="10" height="16" style="left:360px;top:514px"><path d="M1 6 L4.5 1 L8 6 Z M1 9 L4.5 14 L8 9 Z" fill="#bdbdbd"/></svg>
<div class="w menu" style="left:377px;top:512px;width:35px;height:20px;border-radius:4px;"></div>
<svg width="16" height="16" style="left:380px;top:514px"><circle cx="5.5" cy="5.5" r="4" fill="#eee" stroke="#222" stroke-width="0.8"/><circle cx="10.5" cy="10.5" r="4" fill="#eee" stroke="#222" stroke-width="0.8"/><rect x="6" y="6" width="4" height="4" fill="none" stroke="#3a7ad8" stroke-width="1.2"/></svg>
<svg width="10" height="16" style="left:401px;top:514px"><path d="M1 6 L4.5 1 L8 6 Z M1 9 L4.5 14 L8 9 Z" fill="#bdbdbd"/></svg>
<div class="w menu" style="left:417px;top:512px;width:80px;height:20px;border-radius:4px 0 0 4px;"></div>
<div class="w sel" style="left:436px;top:512px;width:20px;height:20px;border-radius:0;"></div>
<div style="position:absolute;left:456px;top:513px;width:1px;height:18px;background:#2a2a2a"></div>
<div style="position:absolute;left:476px;top:513px;width:1px;height:18px;background:#2a2a2a"></div>
<svg width="80" height="20" style="left:417px;top:512px">
<path d="M9.5 3 V11 L3 16 M9.5 11 L16 15" stroke="#111" stroke-width="3" fill="none"/>
<path d="M9.5 3 V11" stroke="#4a7ae8" stroke-width="1.6"/><path d="M9.5 11 L3 16" stroke="#e04040" stroke-width="1.6"/><path d="M9.5 11 L16 15" stroke="#60d040" stroke-width="1.6"/>
<path d="M23 16 L33 6" stroke="#111" stroke-width="3"/><path d="M23 16 L33 6" stroke="#9ac8ff" stroke-width="1.5"/><path d="M28 4 H34 V10" fill="none" stroke="#9ac8ff" stroke-width="1.6"/>
<path d="M43 16 Q44 6 53 5" fill="none" stroke="#111" stroke-width="3"/><path d="M43 16 Q44 6 53 5" fill="none" stroke="#6a9ae0" stroke-width="1.5"/>
<path d="M63 16 L71 8" stroke="#111" stroke-width="3"/><path d="M63 16 L71 8" stroke="#6a9ae0" stroke-width="1.5"/><rect x="69" y="3" width="6" height="6" fill="#6a9ae0" stroke="#111" stroke-width="0.8"/>
</svg>
<div class="w menu" style="left:496px;top:512px;width:72px;height:20px;border-radius:0 4px 4px 0;"></div>
<div class="t" style="left:504.3px;top:517.41px;font-size:11.5px;line-height:13.22px;color:#fff;">Global</div>
<svg width="10" height="16" style="left:557px;top:514px"><path d="M1 6 L4.5 1 L8 6 Z M1 9 L4.5 14 L8 9 Z" fill="#bdbdbd"/></svg>
<div class="w tool" style="left:574px;top:512px;width:20px;height:20px;border-radius:4px 0 0 4px;background:linear-gradient(#6a6a6a,#5a5a5a)"></div>
<div class="w tool" style="left:593px;top:512px;width:21px;height:20px;border-radius:0;"></div>
<div class="w tool" style="left:613px;top:512px;width:21px;height:20px;border-radius:0 4px 4px 0;"></div>
<svg width="60" height="20" style="left:574px;top:512px">
<path d="M10 4 L16 6.5 V13 L10 16 L4 13 V6.5 Z" fill="#d0d0d0" stroke="#222" stroke-width="0.8"/><path d="M10 9.5 L16 6.5 V13 L10 16Z" fill="#8a8a8a"/><rect x="2" y="3" width="3" height="3" fill="#f08a20" stroke="#222" stroke-width="0.5"/>
<path d="M30 4 L36 6.5 V13 L30 16 L24 13 V6.5 Z" fill="#c8c8c8" stroke="#555" stroke-width="0.8"/><path d="M24 6.5 V13" stroke="#f0c080" stroke-width="2"/>
<path d="M50 4 L56 6.5 V13 L50 16 L44 13 V6.5 Z" fill="#c8c8c8" stroke="#555" stroke-width="0.8"/><path d="M44 6.5 L50 9.5 V16 L44 13 Z" fill="#d8a060"/>
</svg>
<div class="w tool" style="left:639px;top:512px;width:20px;height:20px;border-radius:4px;"></div>
<svg width="16" height="16" style="left:641px;top:514px"><rect x="3" y="3" width="10" height="10" fill="none" stroke="#111" stroke-dasharray="1.5 1.5" stroke-width="1"/><circle cx="3" cy="3" r="1.8" fill="#fff" stroke="#111" stroke-width="0.8"/><circle cx="13" cy="3" r="1.8" fill="#fff" stroke="#111" stroke-width="0.8"/><circle cx="3" cy="13" r="1.8" fill="#fff" stroke="#111" stroke-width="0.8"/><circle cx="13" cy="13" r="1.8" fill="#fff" stroke="#111" stroke-width="0.8"/><circle cx="8" cy="8" r="1.5" fill="#fff" stroke="#111" stroke-width="0.6"/></svg>
<div class="w menu" style="left:664px;top:512px;width:35px;height:20px;border-radius:4px;"></div>
<svg width="14" height="14" style="left:668px;top:515px"><circle cx="7" cy="7" r="5.5" fill="none" stroke="#777" stroke-width="1.2"/><circle cx="7" cy="7" r="3" fill="#666"/></svg>
<svg width="10" height="16" style="left:688px;top:514px"><path d="M1 6 L4.5 1 L8 6 Z M1 9 L4.5 14 L8 9 Z" fill="#999"/></svg>
<div class="w tool" style="left:704px;top:512px;width:20px;height:20px;border-radius:4px 0 0 4px;"></div>
<div class="w menu" style="left:723px;top:512px;width:35px;height:20px;border-radius:0;"></div>
<div class="w tool" style="left:757px;top:512px;width:21px;height:20px;border-radius:0 4px 4px 0;"></div>
<svg width="75" height="20" style="left:704px;top:512px">
<path d="M5 10 Q5 4 10.5 4 Q16 4 16 10 L16 13 M5 10 L5 13" fill="none" stroke="#777" stroke-width="3"/>
<path d="M23 6 V14 M40 6 V14 M23 10 H40" stroke="#9ab8e0" stroke-width="1"/><rect x="30" y="5" width="3" height="10" fill="#3a7ad8"/>
<path d="M63 8 V18 M67 8 V18 M71 8 V18 M59 11 H73 M59 15 H73" stroke="#222" stroke-width="1"/><circle cx="62" cy="7" r="3.5" fill="#fff" stroke="#3a6ad8" stroke-width="1.5"/>
</svg>
<svg width="10" height="16" style="left:747px;top:514px"><path d="M1 6 L4.5 1 L8 6 Z M1 9 L4.5 14 L8 9 Z" fill="#bdbdbd"/></svg>
<div class="w tool" style="left:784px;top:512px;width:20px;height:20px;border-radius:4px;"></div>
<svg width="16" height="16" style="left:786px;top:514px"><path d="M2 14 L7 9 M14 2 L9 7" stroke="#222" stroke-width="2.4"/><path d="M2 14 L7 9 M14 2 L9 7" stroke="#eee" stroke-width="1.2"/><path d="M4 8 H8 V12" fill="none" stroke="#eee" stroke-width="1.2"/><circle cx="3" cy="13" r="1.5" fill="#f08a20"/><circle cx="13" cy="3" r="1.5" fill="#f08a20"/></svg>
<div class="w tool" style="left:809px;top:512px;width:20px;height:20px;border-radius:4px 0 0 4px;"></div>
<div class="w tool" style="left:828px;top:512px;width:20px;height:20px;border-radius:0 4px 4px 0;"></div>
<svg width="40" height="20" style="left:809px;top:512px">
<rect x="2" y="6" width="14" height="10" fill="#e0e0e0" stroke="#111" stroke-width="1"/><circle cx="9" cy="11" r="3" fill="#c03030" stroke="#111" stroke-width="0.8"/><circle cx="15" cy="4.5" r="2.2" fill="#ffe060"/>
<rect x="22" y="8" width="14" height="9" fill="#222"/><path d="M22 4 L35 2 L35 6 L22 8 Z" fill="#eee" stroke="#111" stroke-width="0.8"/><path d="M24 11 H34 M24 14 H34" stroke="#aaa" stroke-width="1"/>
</svg>
<div style="position:absolute;left:8px;top:1005px;width:1651px;height:1px;background:#2e2e2e"></div>
<div style="position:absolute;left:8px;top:1006px;width:1651px;height:26px;background:#727272"></div>
<div style="position:absolute;left:8px;top:1006px;width:1651px;height:1px;background:#8a8a8a"></div>
<svg width="14" height="14" style="left:8px;top:1018px"><path d="M0 1.5 L11.5 13 M0 5.5 L7.5 13 M0 9.5 L3.5 13" stroke="#111" stroke-width="1"/><path d="M0 3 L10 13 M0 7 L6 13 M0 11 L2 13" stroke="#d0d0d0" stroke-width="1"/></svg>
<div class="w menu" style="left:16px;top:1010px;width:30px;height:20px;border-radius:4px;"></div>
<svg width="16" height="14" style="left:19px;top:1013px"><rect x="1" y="1" width="14" height="12" fill="#fff" stroke="#222" stroke-width="0.8"/><rect x="2" y="2" width="12" height="4" fill="#e0a0a0"/><rect x="2" y="6" width="12" height="3" fill="#222"/><rect x="2" y="8" width="12" height="2" fill="#8080c0"/></svg>
<svg width="10" height="16" style="left:36px;top:1012px"><path d="M1 6 L4.5 1 L8 6 Z M1 9 L4.5 14 L8 9 Z" fill="#bdbdbd"/></svg>
<div class="t" style="left:58.3px;top:1015.41px;font-size:11.5px;line-height:13.22px;color:#000;">View</div>
<div class="t" style="left:103.3px;top:1015.41px;font-size:11.5px;line-height:13.22px;color:#000;">Select</div>
<div class="t" style="left:154px;top:1015.41px;font-size:11.5px;line-height:13.22px;color:#000;">Image</div>
<div class="t" style="left:205px;top:1015.41px;font-size:11.5px;line-height:13.22px;color:#000;">UVs</div>
<div class="w menu" style="left:238px;top:1010px;width:32px;height:20px;border-radius:4px 0 0 4px;"></div>
<svg width="14" height="14" style="left:242px;top:1013px"><rect x="1" y="1" width="12" height="12" fill="#fff" stroke="#222" stroke-width="0.8"/><rect x="2" y="2" width="10" height="5" fill="#e0a0a0"/><rect x="2" y="7" width="10" height="2" fill="#8080c0"/></svg>
<svg width="10" height="16" style="left:259px;top:1012px"><path d="M1 6 L4.5 1 L8 6 Z M1 9 L4.5 14 L8 9 Z" fill="#bdbdbd"/></svg>
<div class="w txt" style="left:269px;top:1010px;width:121px;height:20px;border-radius:0;background:linear-gradient(#a3a3a3,#9b9b9b)"></div>
<div class="t" style="left:277.3px;top:1015.41px;font-size:11.5px;line-height:13.22px;color:#000;">pl_bd_0560_d_fl_b...</div>
<div class="w tool" style="left:389px;top:1010px;width:21px;height:20px;border-radius:0;"></div>
<div class="t" style="left:249.5px;width:300px;text-align:center;top:1015.86px;font-size:11px;line-height:12.65px;color:#000;">F</div>
<div class="w tool" style="left:409px;top:1010px;width:21px;height:20px;border-radius:0;"></div>
<div class="w tool" style="left:429px;top:1010px;width:21px;height:20px;border-radius:0;"></div>
<div class="w tool" style="left:449px;top:1010px;width:21px;height:20px;border-radius:0 4px 4px 0;"></div>
<svg width="12" height="12" style="left:413px;top:1014px"><path d="M6.0 1 V11 M1 6.0 H11" stroke="#111" stroke-width="3.6"/><path d="M6.0 1.8 V10.2 M1.8 6.0 H10.2" stroke="#fff" stroke-width="1.8"/></svg>
<svg width="16" height="14" style="left:432px;top:1013px"><path d="M1 4 H6 L7 2 H14 V13 H1 Z" fill="#e8d080" stroke="#222" stroke-width="0.8"/><rect x="3" y="5" width="10" height="6" fill="#fff" stroke="#333" stroke-width="0.5"/></svg>
<svg width="12" height="12" style="left:453px;top:1014px"><path d="M2 2 L10 10 M10 2 L2 10" stroke="#111" stroke-width="3.4"/><path d="M2.6 2.6 L9.4 9.4 M9.4 2.6 L2.6 9.4" stroke="#fff" stroke-width="1.6"/></svg>
<div class="w tool" style="left:475px;top:1010px;width:20px;height:20px;border-radius:4px;"></div>
<svg width="16" height="16" style="left:477px;top:1012px"><path d="M2 14 L7 9" stroke="#ddd" stroke-width="1.5"/><path d="M6 5 L11 10 L13 8 L11 6 L13 3 L11 1 L8 3 L6 1 L4 3 Z" fill="#cfcfcf" stroke="#222" stroke-width="0.8"/></svg>
<div class="w menu" style="left:500px;top:1010px;width:66px;height:20px;border-radius:4px;"></div>
<svg width="14" height="14" style="left:504px;top:1013px"><rect x="1" y="1" width="12" height="12" fill="#fff" stroke="#222" stroke-width="0.8"/><rect x="2" y="2" width="10" height="5" fill="#e0a0a0"/><rect x="2" y="7" width="10" height="2" fill="#8080c0"/></svg>
<div class="t" style="left:524px;top:1015.41px;font-size:11.5px;line-height:13.22px;color:#fff;">View</div>
<svg width="10" height="16" style="left:554px;top:1012px"><path d="M1 6 L4.5 1 L8 6 Z M1 9 L4.5 14 L8 9 Z" fill="#bdbdbd"/></svg>
<div class="w menu" style="left:571px;top:1010px;width:34px;height:20px;border-radius:4px;"></div>
<svg width="14" height="14" style="left:575px;top:1013px"><path d="M1 4 V1 H4 M10 1 H13 V4 M13 10 V13 H10 M4 13 H1 V10" fill="none" stroke="#fff" stroke-width="1.2"/><circle cx="7" cy="7" r="2.2" fill="none" stroke="#5aa0ff" stroke-width="1.2"/></svg>
<svg width="10" height="16" style="left:594px;top:1012px"><path d="M1 6 L4.5 1 L8 6 Z M1 9 L4.5 14 L8 9 Z" fill="#bdbdbd"/></svg>
<div class="w tool" style="left:611px;top:1010px;width:20px;height:20px;border-radius:4px;"></div>
<svg width="16" height="16" style="left:613px;top:1012px"><rect x="2" y="2" width="8" height="10" fill="#ddd" stroke="#222" stroke-width="0.8"/><rect x="3" y="3" width="3" height="3" fill="#f08a20"/><path d="M9 7 L9 15 L11 13 L13 16 L14 15 L12 12 L15 12 Z" fill="#fff" stroke="#111" stroke-width="0.8"/></svg>
<div class="w tool" style="left:635px;top:1010px;width:81px;height:20px;border-radius:4px;"></div>
<div class="w sel" style="left:636px;top:1011px;width:19px;height:18px;border-radius:4px 0 0 4px;border:none"></div>
<div style="position:absolute;left:655px;top:1011px;width:1px;height:18px;background:#2a2a2a"></div>
<div style="position:absolute;left:675px;top:1011px;width:1px;height:18px;background:#2a2a2a"></div>
<div style="position:absolute;left:695px;top:1011px;width:1px;height:18px;background:#2a2a2a"></div>
<svg width="80" height="20" style="left:635px;top:1010px">
<rect x="5" y="5" width="10" height="10" fill="none" stroke="#222" stroke-dasharray="1.5 1" stroke-width="1"/><rect x="3.5" y="3.5" width="3" height="3" fill="#f08a20" stroke="#111" stroke-width="0.6"/><rect x="13.5" y="3.5" width="3" height="3" fill="#f08a20" stroke="#111" stroke-width="0.6"/><rect x="3.5" y="13.5" width="3" height="3" fill="#f08a20" stroke="#111" stroke-width="0.6"/><rect x="13.5" y="13.5" width="3" height="3" fill="#f08a20" stroke="#111" stroke-width="0.6"/>
<path d="M25 4 V16 M29 4 V16 M33 4 V16 M23 7 H35 M23 12 H35" stroke="#8a6a40" stroke-width="1"/>
<rect x="44" y="4" width="6" height="6" fill="#d8a060"/><rect x="50" y="10" width="6" height="6" fill="#d8a060"/><rect x="44" y="10" width="6" height="6" fill="#777"/><rect x="50" y="4" width="6" height="6" fill="#777"/>
<rect x="63" y="4" width="5" height="12" fill="#d8a060"/><rect x="70" y="4" width="5" height="12" fill="#d8a060"/>
</svg>
<div class="w menu" style="left:721px;top:1010px;width:35px;height:20px;border-radius:4px;"></div>
<svg width="14" height="14" style="left:725px;top:1013px"><rect x="1" y="1" width="12" height="12" fill="none" stroke="#fff" stroke-dasharray="1 1.5"/><circle cx="5" cy="6" r="1.5" fill="#fff"/><circle cx="9" cy="6" r="1.5" fill="#fff"/><circle cx="7" cy="9" r="1.5" fill="#fff"/></svg>
<svg width="10" height="16" style="left:745px;top:1012px"><path d="M1 6 L4.5 1 L8 6 Z M1 9 L4.5 14 L8 9 Z" fill="#bdbdbd"/></svg>
<div class="w menu" style="left:761px;top:1010px;width:34px;height:20px;border-radius:4px;"></div>
<svg width="14" height="14" style="left:765px;top:1013px"><circle cx="7" cy="7" r="5.5" fill="none" stroke="#777" stroke-width="1.2"/><circle cx="7" cy="7" r="3" fill="#666"/></svg>
<svg width="10" height="16" style="left:784px;top:1012px"><path d="M1 6 L4.5 1 L8 6 Z M1 9 L4.5 14 L8 9 Z" fill="#999"/></svg>
<div class="w tool" style="left:801px;top:1010px;width:20px;height:20px;border-radius:4px 0 0 4px;"></div>
<div class="w menu" style="left:820px;top:1010px;width:35px;height:20px;border-radius:0 4px 4px 0;"></div>
<svg width="55" height="20" style="left:801px;top:1010px">
<path d="M5 10 Q5 4 10.5 4 Q16 4 16 10 L16 13 M5 10 L5 13" fill="none" stroke="#777" stroke-width="3"/>
<path d="M24 6 V14 M40 6 V14 M24 10 H40" stroke="#9ab8e0" stroke-width="1"/><rect x="30" y="5" width="3" height="10" fill="#3a7ad8"/>
</svg>
<svg width="10" height="16" style="left:845px;top:1012px"><path d="M1 6 L4.5 1 L8 6 Z M1 9 L4.5 14 L8 9 Z" fill="#bdbdbd"/></svg>
<div class="w txt" style="left:861px;top:1010px;width:130px;height:20px;border-radius:4px;background:linear-gradient(#b8b8b8,#a6a6a6)"></div>
<svg width="16" height="16" style="left:864px;top:1012px"><circle cx="8" cy="8" r="6.5" fill="#eee" stroke="#111" stroke-width="1"/><path d="M8 1.5 A6.5 6.5 0 0 1 14.5 8 H8Z M8 14.5 A6.5 6.5 0 0 1 1.5 8 H8Z" fill="#333"/><circle cx="8" cy="8" r="2" fill="#eee" stroke="#111" stroke-width="0.6"/></svg>
<div class="t" style="left:885px;top:1015.41px;font-size:11.5px;line-height:13.22px;color:#000;">UVMap</div>
<div class="w menu" style="left:1003px;top:1010px;width:119px;height:20px;border-radius:4px;"></div>
<div class="w sel" style="left:1004px;top:1011px;width:19px;height:18px;border-radius:4px 0 0 4px;border:none"></div>
<div style="position:absolute;left:1023px;top:1011px;width:1px;height:18px;background:#2a2a2a"></div>
<div style="position:absolute;left:1042px;top:1011px;width:1px;height:18px;background:#2a2a2a"></div>
<div style="position:absolute;left:1062px;top:1011px;width:1px;height:18px;background:#2a2a2a"></div>
<div style="position:absolute;left:1082px;top:1011px;width:1px;height:18px;background:#2a2a2a"></div>
<div style="position:absolute;left:1101px;top:1011px;width:1px;height:18px;background:#2a2a2a"></div>
<svg width="120" height="20" style="left:1003px;top:1010px">
<rect x="4" y="4" width="12" height="12" fill="#eee" stroke="#111" stroke-width="0.8"/><path d="M4 16 L16 4 V16 Z" fill="#c04040"/><path d="M5 15 L15 5" stroke="#3a6ad8" stroke-width="1.3"/>
<rect x="24" y="4" width="12" height="12" fill="#ddd"/><rect x="24" y="4" width="3" height="3" fill="#a03030"/><rect x="30" y="4" width="3" height="3" fill="#a03030"/><rect x="27" y="7" width="3" height="3" fill="#a03030"/><rect x="33" y="7" width="3" height="3" fill="#a03030"/><rect x="24" y="10" width="3" height="3" fill="#a03030"/><rect x="30" y="10" width="3" height="3" fill="#a03030"/><rect x="27" y="13" width="3" height="3" fill="#a03030"/><rect x="33" y="13" width="3" height="3" fill="#a03030"/>
<rect x="44" y="4" width="12" height="12" fill="#222" stroke="#aaa" stroke-width="0.8"/><path d="M44 16 L56 4 V16 Z" fill="#ddd"/>
<circle cx="69" cy="10" r="6" fill="#d02020" stroke="#111" stroke-width="0.8"/><circle cx="88.5" cy="10" r="6" fill="#40b040" stroke="#111" stroke-width="0.8"/><circle cx="108" cy="10" r="6" fill="#3040c0" stroke="#111" stroke-width="0.8"/>
</svg>
<div class="w tool" style="left:1132px;top:1010px;width:20px;height:20px;border-radius:4px;"></div>
<svg width="14" height="16" style="left:1135px;top:1012px"><path d="M4 7 V4.5 Q4 1.5 7 1.5 Q10 1.5 10 4.5 V7" fill="none" stroke="#222" stroke-width="1.5"/><path d="M4 7 V4.5 Q4 1.5 7 1.5 Q10 1.5 10 4.5 V7" fill="none" stroke="#eee" stroke-width="0.7"/><rect x="2.5" y="7" width="9" height="7" fill="#eee" stroke="#222" stroke-width="0.8"/></svg>
<div class="t" style="left:187px;top:69.41px;font-size:11.5px;line-height:13.22px;color:#fff;">User Persp</div>
<div class="t" style="left:237.3px;top:489.91px;font-size:11.5px;line-height:13.22px;color:#fff;">(1) mesh10_0_0_0_0</div>
<svg width="60" height="40" style="left:180px;top:470px"><path d="M13.5 12.5 H38" stroke="#d01010" stroke-width="2"/><path d="M13.5 12 V38" stroke="#10c010" stroke-width="2"/><text x="40" y="12" font-family="Liberation Sans" font-size="10" fill="#d01010">x</text><text x="15" y="37" font-family="Liberation Sans" font-size="10" fill="#10c010">y</text></svg>
<svg width="40" height="50" style="left:888px;top:420px"><defs><pattern id="gp" width="3" height="3" patternUnits="userSpaceOnUse"><path d="M0 0 H3 M0 0 V3" stroke="#5a5a5a" stroke-width="0.7"/></pattern></defs><rect x="3" y="3" width="31" height="42" fill="#444" opacity="0.9"/><rect x="3" y="3" width="31" height="42" fill="url(#gp)"/><path d="M3 26 H34" stroke="#a03030" stroke-width="0.8"/><path d="M19 3 V45" stroke="#30a030" stroke-width="0.8"/><circle cx="19" cy="26" r="3" fill="#d8a060" stroke="#222" stroke-width="0.8"/></svg>
<svg width="280" height="430" style="left:770px;top:70px">
<defs>
<clipPath id="bodyclip"><polygon points="121.5,7.6 148.8,6.7 150.7,14.4 155.6,20.3 180.8,24.2 194.4,41.7 206.1,61.1 221.7,78.6 231.4,96.1 245.0,121.4 252.8,142.8 262.5,150.6 263.5,164.2 258.6,177.8 248.9,166.1 239.2,146.7 227.5,119.4 213.9,100.0 192.5,74.7 175.0,55.3 173.0,59.2 167.2,78.6 163.3,96.1 165.3,111.7 173.0,117.5 178.9,131.1 184.7,150.6 185.7,164.2 182.8,192.0 177.8,223.3 171.1,256.7 175.6,283.3 171.1,341.1 172.2,378.9 177.8,396.7 178.9,410.0 163.3,415.6 152.2,414.4 147.8,403.3 153.3,378.9 153.3,323.3 147.8,285.6 151.1,263.3 147.8,234.4 141.1,192.0 136.0,180.0 132.2,192.0 128.9,223.3 121.1,263.3 122.2,301.1 118.9,345.6 120.0,378.9 130.0,398.9 128.9,410.0 116.7,415.6 103.3,414.4 100.0,401.1 103.3,378.9 102.2,334.4 97.8,305.6 95.6,278.9 100.0,252.2 96.7,223.3 92.2,192.0 88.5,166.1 95.3,135.0 101.1,117.5 108.9,113.6 111.8,98.0 108.9,82.5 103.1,65.0 95.3,55.3 81.7,68.9 64.2,92.2 50.6,115.6 36.0,138.9 29.2,166.1 21.4,166.1 14.6,177.8 9.7,164.2 10.7,154.4 21.4,142.8 27.2,127.2 38.9,100.0 48.6,82.5 64.2,59.2 75.8,41.7 91.4,22.2 116.7,16.4"/></clipPath>
<linearGradient id="skin" x1="0" x2="1"><stop offset="0" stop-color="#d8a670"/><stop offset="0.45" stop-color="#c2a087"/><stop offset="0.55" stop-color="#c2a087"/><stop offset="1" stop-color="#d8a670"/></linearGradient>
</defs>
<polygon points="121.5,7.6 148.8,6.7 150.7,14.4 155.6,20.3 180.8,24.2 194.4,41.7 206.1,61.1 221.7,78.6 231.4,96.1 245.0,121.4 252.8,142.8 262.5,150.6 263.5,164.2 258.6,177.8 248.9,166.1 239.2,146.7 227.5,119.4 213.9,100.0 192.5,74.7 175.0,55.3 173.0,59.2 167.2,78.6 163.3,96.1 165.3,111.7 173.0,117.5 178.9,131.1 184.7,150.6 185.7,164.2 182.8,192.0 177.8,223.3 171.1,256.7 175.6,283.3 171.1,341.1 172.2,378.9 177.8,396.7 178.9,410.0 163.3,415.6 152.2,414.4 147.8,403.3 153.3,378.9 153.3,323.3 147.8,285.6 151.1,263.3 147.8,234.4 141.1,192.0 136.0,180.0 132.2,192.0 128.9,223.3 121.1,263.3 122.2,301.1 118.9,345.6 120.0,378.9 130.0,398.9 128.9,410.0 116.7,415.6 103.3,414.4 100.0,401.1 103.3,378.9 102.2,334.4 97.8,305.6 95.6,278.9 100.0,252.2 96.7,223.3 92.2,192.0 88.5,166.1 95.3,135.0 101.1,117.5 108.9,113.6 111.8,98.0 108.9,82.5 103.1,65.0 95.3,55.3 81.7,68.9 64.2,92.2 50.6,115.6 36.0,138.9 29.2,166.1 21.4,166.1 14.6,177.8 9.7,164.2 10.7,154.4 21.4,142.8 27.2,127.2 38.9,100.0 48.6,82.5 64.2,59.2 75.8,41.7 91.4,22.2 116.7,16.4" fill="url(#skin)"/>
<g clip-path="url(#bodyclip)">
<path d="M-15 -16 1 -14 10 -9 23 -13 36 -14 52 -11 63 -13 75 -10 85 -10 98 -10 114 -9 127 -15 139 -16 147 -15 162 -15 174 -14 190 -14 199 -12 214 -13 223 -13 236 -14 247 -15 264 -9 277 -14 286 -13 M-13 4 -0 -1 16 6 25 0 39 -0 47 0 63 -1 73 3 87 0 96 6 114 5 125 -0 141 5 151 -0 164 5 175 6 185 1 199 6 213 6 223 -0 241 2 252 2 263 0 278 5 288 4 M-13 17 -4 19 11 14 24 19 38 14 48 17 59 17 72 20 84 18 99 14 115 18 127 15 137 16 152 17 164 17 174 21 190 20 202 16 209 21 227 18 238 15 253 16 262 21 278 20 290 18 M-16 32 -0 33 13 34 25 29 34 34 48 31 62 30 74 36 86 35 98 29 114 29 127 32 138 33 147 33 165 34 175 32 187 33 197 35 210 30 226 35 238 36 252 30 263 35 273 35 285 34 M-9 50 2 47 14 44 24 47 40 47 50 45 61 49 76 45 85 44 103 44 112 50 127 46 136 45 152 51 163 48 172 44 190 49 202 46 211 50 227 47 240 47 248 44 261 45 278 51 285 50 M-11 60 -1 60 10 64 25 59 37 64 52 62 63 62 78 61 91 62 97 63 109 61 128 63 139 65 148 62 160 59 178 60 190 63 201 60 211 59 223 63 236 63 253 65 266 62 278 65 291 65 M-10 80 2 80 9 80 23 81 34 76 49 78 65 74 76 79 90 78 98 76 113 77 124 77 139 76 150 77 166 81 173 77 189 75 199 79 214 78 228 81 238 79 250 76 265 78 273 75 287 77 M-15 93 2 95 16 91 28 96 41 96 47 95 65 94 72 90 90 96 102 92 109 90 124 94 137 90 148 91 163 93 172 90 188 89 200 93 214 94 228 92 234 94 252 92 261 94 275 95 290 89 M-16 105 1 109 9 111 27 107 34 104 47 108 62 109 74 106 84 106 102 106 114 108 123 105 141 106 147 108 165 104 173 107 187 105 200 107 216 106 226 105 241 105 248 108 262 105 275 108 290 106 M-14 120 -2 125 15 122 28 121 40 122 53 120 66 124 74 121 85 126 97 119 113 126 128 120 136 124 154 120 164 125 172 123 190 125 200 124 215 122 225 125 237 122 250 124 265 126 277 120 287 121 M-11 140 -1 137 12 141 26 138 39 139 51 141 64 139 74 141 89 141 103 135 116 136 127 134 139 137 152 138 161 138 175 139 188 141 204 135 212 134 222 135 240 135 252 141 265 139 275 136 287 139 M-14 151 -1 153 11 149 25 151 37 154 54 151 66 155 75 152 91 155 97 150 115 153 126 150 135 152 149 151 165 156 173 151 185 154 203 151 215 154 224 150 234 151 248 156 265 155 273 150 291 152 M-15 164 1 168 13 166 24 169 38 164 51 171 61 164 73 165 90 171 100 169 114 165 124 166 140 166 154 165 162 165 175 167 187 169 200 166 212 164 223 164 240 166 249 169 259 171 277 171 285 166 M-11 183 -1 180 14 186 23 181 37 185 51 185 61 181 73 185 88 185 100 183 112 186 126 179 137 181 151 183 164 183 174 180 190 186 203 184 211 181 224 180 235 184 250 182 259 179 277 186 288 184 M-16 197 3 196 11 196 24 196 40 199 51 194 61 197 78 195 91 197 100 199 116 197 123 199 137 196 153 195 162 197 175 197 191 198 199 200 214 200 228 194 234 199 247 196 264 195 275 196 289 198 M-13 215 -0 209 9 215 27 213 38 215 49 215 66 210 74 213 85 214 101 210 111 216 127 215 137 215 146 215 159 216 174 215 191 212 201 213 212 211 221 211 237 212 251 210 264 216 278 211 289 214 M-11 228 -1 224 9 231 21 229 36 227 50 227 62 230 75 225 84 226 99 231 113 231 126 229 140 225 149 227 162 224 172 225 189 228 200 227 209 230 228 230 240 227 249 226 264 225 272 228 290 229 M-12 246 -1 244 14 246 25 245 38 245 49 240 60 241 72 245 87 245 100 244 109 243 125 241 136 241 147 240 160 243 178 241 190 240 202 240 210 245 223 239 237 241 250 240 261 245 278 242 291 244 M-9 256 4 258 15 255 25 256 36 255 51 257 63 260 72 257 84 256 98 259 111 254 127 257 139 259 148 259 159 259 172 255 189 260 197 259 214 256 227 256 240 260 252 256 263 257 274 258 289 254 M-14 275 -2 274 10 276 28 270 36 272 53 269 65 271 77 274 86 274 101 270 112 276 122 276 139 270 147 270 164 269 172 276 189 270 199 270 210 270 228 272 239 269 247 276 261 270 274 273 290 275 M-16 286 1 290 11 290 23 287 34 288 53 284 66 287 74 290 90 287 103 287 112 285 122 290 135 291 149 287 164 286 174 285 189 290 198 284 210 290 225 285 237 287 252 289 261 287 274 285 287 285 M-16 301 0 306 10 301 28 300 40 301 52 302 60 300 79 302 90 302 99 304 114 305 123 305 138 304 147 306 161 305 172 305 185 306 199 304 216 304 227 306 238 306 253 300 261 305 276 304 285 301 M-16 316 -1 316 14 316 24 318 41 317 52 317 62 320 78 318 88 316 103 320 114 316 126 321 135 318 153 320 159 317 175 321 186 315 202 316 211 320 227 320 235 319 247 314 260 316 277 318 289 317 M-10 336 0 336 14 335 26 330 38 336 47 336 59 330 74 336 85 335 100 329 115 335 126 335 136 332 152 332 166 329 174 332 189 329 197 330 213 335 224 329 239 332 248 334 263 332 272 334 288 335 M-10 348 2 347 11 346 27 348 39 348 51 345 65 350 77 345 88 346 100 348 112 349 125 350 137 350 151 350 163 346 175 348 188 347 197 347 213 349 221 348 236 344 247 351 262 344 273 344 290 348 M-12 361 -0 364 9 362 25 362 39 362 51 360 60 359 75 362 88 362 103 360 109 360 124 366 136 364 152 365 160 361 175 361 191 361 196 364 210 360 227 360 239 361 250 365 262 365 275 365 284 359 M-15 377 -0 378 9 378 24 380 39 375 49 378 64 380 75 379 84 379 100 379 112 381 126 381 136 378 152 379 164 377 175 381 187 374 201 380 209 380 224 377 237 376 251 378 266 380 274 377 288 375 M-11 389 4 396 14 393 29 390 34 393 51 390 59 393 74 393 90 393 101 389 114 394 122 391 140 390 153 395 164 396 175 392 187 394 203 395 213 390 226 389 236 396 249 394 261 394 277 393 288 393 M-16 410 3 405 13 408 23 409 38 407 48 407 60 408 73 407 85 407 103 405 115 409 128 406 137 411 149 408 166 408 172 411 185 406 198 405 216 407 222 405 239 410 249 410 262 407 275 411 289 410 M-14 424 0 421 16 423 27 425 35 426 50 425 60 420 78 424 85 420 103 425 109 425 125 422 140 425 147 422 161 423 171 419 189 422 199 425 210 419 225 422 237 425 248 419 266 423 274 423 287 421 M-11 441 3 436 15 436 24 435 35 441 51 440 63 441 74 436 86 440 101 438 114 435 121 434 138 437 151 435 159 436 174 441 186 435 203 438 209 438 229 438 240 435 251 435 264 437 272 440 291 437 M-13 451 3 451 10 450 22 452 36 451 49 450 59 449 76 452 90 455 99 452 113 452 125 452 135 455 151 451 161 456 174 456 184 455 199 453 212 455 228 450 241 450 248 456 263 453 274 454 287 453 M-10 469 -1 471 15 465 25 470 41 471 48 464 60 470 79 466 91 465 103 469 109 470 128 466 135 471 148 466 163 467 178 466 187 466 198 465 215 468 221 470 238 467 252 466 259 466 276 471 289 464 M-11 485 1 486 15 486 21 479 39 486 49 484 61 481 78 481 85 479 100 481 111 483 122 480 141 486 151 482 161 483 175 482 184 484 196 479 211 484 225 479 239 481 249 483 264 483 272 479 287 479 M-11 501 0 495 13 495 26 499 35 500 53 496 62 500 77 500 84 499 104 501 115 501 124 501 140 499 150 500 163 500 178 499 190 496 203 498 215 497 226 498 239 499 248 496 265 495 278 498 289 500 M-14 514 2 513 13 512 22 509 38 511 52 514 61 512 73 512 87 513 103 516 113 512 128 513 137 515 151 513 162 516 176 513 187 516 199 515 214 515 223 515 234 513 248 510 259 514 277 512 291 513 M-9 526 0 525 16 525 21 529 38 525 51 531 62 527 77 527 90 526 99 530 109 525 125 528 138 528 147 524 159 528 176 529 186 527 201 525 212 528 227 527 238 526 248 530 263 528 272 529 287 530 M-15 -16 -13 4 -13 17 -16 32 -9 50 -11 60 -10 80 -15 93 -16 105 -14 120 -11 140 -14 151 -15 164 -11 183 -16 197 -13 215 -11 228 -12 246 -9 256 -14 275 -16 286 -16 301 -16 316 -10 336 -10 348 -12 361 -15 377 -11 389 -16 410 -14 424 -11 441 -13 451 -10 469 -11 485 -11 501 -14 514 -9 526 M1 -14 -0 -1 -4 19 -0 33 2 47 -1 60 2 80 2 95 1 109 -2 125 -1 137 -1 153 1 168 -1 180 3 196 -0 209 -1 224 -1 244 4 258 -2 274 1 290 0 306 -1 316 0 336 2 347 -0 364 -0 378 4 396 3 405 0 421 3 436 3 451 -1 471 1 486 0 495 2 513 0 525 M10 -9 16 6 11 14 13 34 14 44 10 64 9 80 16 91 9 111 15 122 12 141 11 149 13 166 14 186 11 196 9 215 9 231 14 246 15 255 10 276 11 290 10 301 14 316 14 335 11 346 9 362 9 378 14 393 13 408 16 423 15 436 10 450 15 465 15 486 13 495 13 512 16 525 M23 -13 25 0 24 19 25 29 24 47 25 59 23 81 28 96 27 107 28 121 26 138 25 151 24 169 23 181 24 196 27 213 21 229 25 245 25 256 28 270 23 287 28 300 24 318 26 330 27 348 25 362 24 380 29 390 23 409 27 425 24 435 22 452 25 470 21 479 26 499 22 509 21 529 M36 -14 39 -0 38 14 34 34 40 47 37 64 34 76 41 96 34 104 40 122 39 139 37 154 38 164 37 185 40 199 38 215 36 227 38 245 36 255 36 272 34 288 40 301 41 317 38 336 39 348 39 362 39 375 34 393 38 407 35 426 35 441 36 451 41 471 39 486 35 500 38 511 38 525 M52 -11 47 0 48 17 48 31 50 45 52 62 49 78 47 95 47 108 53 120 51 141 54 151 51 171 51 185 51 194 49 215 50 227 49 240 51 257 53 269 53 284 52 302 52 317 47 336 51 345 51 360 49 378 51 390 48 407 50 425 51 440 49 450 48 464 49 484 53 496 52 514 51 531 M63 -13 63 -1 59 17 62 30 61 49 63 62 65 74 65 94 62 109 66 124 64 139 66 155 61 164 61 181 61 197 66 210 62 230 60 241 63 260 65 271 66 287 60 300 62 320 59 330 65 350 60 359 64 380 59 393 60 408 60 420 63 441 59 449 60 470 61 481 62 500 61 512 62 527 M75 -10 73 3 72 20 74 36 76 45 78 61 76 79 72 90 74 106 74 121 74 141 75 152 73 165 73 185 78 195 74 213 75 225 72 245 72 257 77 274 74 290 79 302 78 318 74 336 77 345 75 362 75 379 74 393 73 407 78 424 74 436 76 452 79 466 78 481 77 500 73 512 77 527 M85 -10 87 0 84 18 86 35 85 44 91 62 90 78 90 96 84 106 85 126 89 141 91 155 90 171 88 185 91 197 85 214 84 226 87 245 84 256 86 274 90 287 90 302 88 316 85 335 88 346 88 362 84 379 90 393 85 407 85 420 86 440 90 455 91 465 85 479 84 499 87 513 90 526 M98 -10 96 6 99 14 98 29 103 44 97 63 98 76 102 92 102 106 97 119 103 135 97 150 100 169 100 183 100 199 101 210 99 231 100 244 98 259 101 270 103 287 99 304 103 320 100 329 100 348 103 360 100 379 101 389 103 405 103 425 101 438 99 452 103 469 100 481 104 501 103 516 99 530 M114 -9 114 5 115 18 114 29 112 50 109 61 113 77 109 90 114 108 113 126 116 136 115 153 114 165 112 186 116 197 111 216 113 231 109 243 111 254 112 276 112 285 114 305 114 316 115 335 112 349 109 360 112 381 114 394 115 409 109 425 114 435 113 452 109 470 111 483 115 501 113 512 109 525 M127 -15 125 -0 127 15 127 32 127 46 128 63 124 77 124 94 123 105 128 120 127 134 126 150 124 166 126 179 123 199 127 215 126 229 125 241 127 257 122 276 122 290 123 305 126 321 126 335 125 350 124 366 126 381 122 391 128 406 125 422 121 434 125 452 128 466 122 480 124 501 128 513 125 528 M139 -16 141 5 137 16 138 33 136 45 139 65 139 76 137 90 141 106 136 124 139 137 135 152 140 166 137 181 137 196 137 215 140 225 136 241 139 259 139 270 135 291 138 304 135 318 136 332 137 350 136 364 136 378 140 390 137 411 140 425 138 437 135 455 135 471 141 486 140 499 137 515 138 528 M147 -15 151 -0 152 17 147 33 152 51 148 62 150 77 148 91 147 108 154 120 152 138 149 151 154 165 151 183 153 195 146 215 149 227 147 240 148 259 147 270 149 287 147 306 153 320 152 332 151 350 152 365 152 379 153 395 149 408 147 422 151 435 151 451 148 466 151 482 150 500 151 513 147 524 M162 -15 164 5 164 17 165 34 163 48 160 59 166 81 163 93 165 104 164 125 161 138 165 156 162 165 164 183 162 197 159 216 162 224 160 243 159 259 164 269 164 286 161 305 159 317 166 329 163 346 160 361 164 377 164 396 166 408 161 423 159 436 161 456 163 467 161 483 163 500 162 516 159 528 M174 -14 175 6 174 21 175 32 172 44 178 60 173 77 172 90 173 107 172 123 175 139 173 151 175 167 174 180 175 197 174 215 172 225 178 241 172 255 172 276 174 285 172 305 175 321 174 332 175 348 175 361 175 381 175 392 172 411 171 419 174 441 174 456 178 466 175 482 178 499 176 513 176 529 M190 -14 185 1 190 20 187 33 190 49 190 63 189 75 188 89 187 105 190 125 188 141 185 154 187 169 190 186 191 198 191 212 189 228 190 240 189 260 189 270 189 290 185 306 186 315 189 329 188 347 191 361 187 374 187 394 185 406 189 422 186 435 184 455 187 466 184 484 190 496 187 516 186 527 M199 -12 199 6 202 16 197 35 202 46 201 60 199 79 200 93 200 107 200 124 204 135 203 151 200 166 203 184 199 200 201 213 200 227 202 240 197 259 199 270 198 284 199 304 202 316 197 330 197 347 196 364 201 380 203 395 198 405 199 425 203 438 199 453 198 465 196 479 203 498 199 515 201 525 M214 -13 213 6 209 21 210 30 211 50 211 59 214 78 214 94 216 106 215 122 212 134 215 154 212 164 211 181 214 200 212 211 209 230 210 245 214 256 210 270 210 290 216 304 211 320 213 335 213 349 210 360 209 380 213 390 216 407 210 419 209 438 212 455 215 468 211 484 215 497 214 515 212 528 M223 -13 223 -0 227 18 226 35 227 47 223 63 228 81 228 92 226 105 225 125 222 135 224 150 223 164 224 180 228 194 221 211 228 230 223 239 227 256 228 272 225 285 227 306 227 320 224 329 221 348 227 360 224 377 226 389 222 405 225 422 229 438 228 450 221 470 225 479 226 498 223 515 227 527 M236 -14 241 2 238 15 238 36 240 47 236 63 238 79 234 94 241 105 237 122 240 135 234 151 240 166 235 184 234 199 237 212 240 227 237 241 240 260 239 269 237 287 238 306 235 319 239 332 236 344 239 361 237 376 236 396 239 410 237 425 240 435 241 450 238 467 239 481 239 499 234 513 238 526 M247 -15 252 2 253 16 252 30 248 44 253 65 250 76 252 92 248 108 250 124 252 141 248 156 249 169 250 182 247 196 251 210 249 226 250 240 252 256 247 276 252 289 253 300 247 314 248 334 247 351 250 365 251 378 249 394 249 410 248 419 251 435 248 456 252 466 249 483 248 496 248 510 248 530 M264 -9 263 0 262 21 263 35 261 45 266 62 265 78 261 94 262 105 265 126 265 139 265 155 259 171 259 179 264 195 264 216 264 225 261 245 263 257 261 270 261 287 261 305 260 316 263 332 262 344 262 365 266 380 261 394 262 407 266 423 264 437 263 453 259 466 264 483 265 495 259 514 263 528 M277 -14 278 5 278 20 273 35 278 51 278 65 273 75 275 95 275 108 277 120 275 136 273 150 277 171 277 186 275 196 278 211 272 228 278 242 274 258 274 273 274 285 276 304 277 318 272 334 273 344 275 365 274 377 277 393 275 411 274 423 272 440 274 454 276 471 272 479 278 498 277 512 272 529 M286 -13 288 4 290 18 285 34 285 50 291 65 287 77 290 89 290 106 287 121 287 139 291 152 285 166 288 184 289 198 289 214 290 229 291 244 289 254 290 275 287 285 285 301 289 317 288 335 290 348 284 359 288 375 288 393 289 410 287 421 291 437 287 453 289 464 287 479 289 500 291 513 287 530 M-14 514 0 525 M-11 501 2 513 16 525 M-11 485 0 495 13 512 21 529 M-10 469 1 486 13 495 22 509 38 525 M-13 451 -1 471 15 486 26 499 38 511 51 531 M-11 441 3 451 15 465 21 479 35 500 52 514 62 527 M-14 424 3 436 10 450 25 470 39 486 53 496 61 512 77 527 M-16 410 0 421 15 436 22 452 41 471 49 484 62 500 73 512 90 526 M-11 389 3 405 16 423 24 435 36 451 48 464 61 481 77 500 87 513 99 530 M-15 377 4 396 13 408 27 425 35 441 49 450 60 470 78 481 84 499 103 516 109 525 M-12 361 -0 378 14 393 23 409 35 426 51 440 59 449 79 466 85 479 104 501 113 512 125 528 M-10 348 -0 364 9 378 29 390 38 407 50 425 63 441 76 452 91 465 100 481 115 501 128 513 138 528 M-10 336 2 347 9 362 24 380 34 393 48 407 60 420 74 436 90 455 103 469 111 483 124 501 137 515 147 524 M-16 316 0 336 11 346 25 362 39 375 51 390 60 408 78 424 86 440 99 452 109 470 122 480 140 499 151 513 159 528 M-16 301 -1 316 14 335 27 348 39 362 49 378 59 393 73 407 85 420 101 438 113 452 128 466 141 486 150 500 162 516 176 529 M-16 286 0 306 14 316 26 330 39 348 51 360 64 380 74 393 85 407 103 425 114 435 125 452 135 471 151 482 163 500 176 513 186 527 M-14 275 1 290 10 301 24 318 38 336 51 345 60 359 75 379 90 393 103 405 109 425 121 434 135 455 148 466 161 483 178 499 187 516 201 525 M-9 256 -2 274 11 290 28 300 41 317 47 336 65 350 75 362 84 379 101 389 115 409 125 422 138 437 151 451 163 467 175 482 190 496 199 515 212 528 M-12 246 4 258 10 276 23 287 40 301 52 317 59 330 77 345 88 362 100 379 114 394 128 406 140 425 151 435 161 456 178 466 184 484 203 498 214 515 227 527 M-11 228 -1 244 15 255 28 270 34 288 52 302 62 320 74 336 88 346 103 360 112 381 122 391 137 411 147 422 159 436 174 456 187 466 196 479 215 497 223 515 238 526 M-13 215 -1 224 14 246 25 256 36 272 53 284 60 300 78 318 85 335 100 348 109 360 126 381 140 390 149 408 161 423 174 441 184 455 198 465 211 484 226 498 234 513 248 530 M-16 197 -0 209 9 231 25 245 36 255 53 269 66 287 79 302 88 316 100 329 112 349 124 366 136 378 153 395 166 408 171 419 186 435 199 453 215 468 225 479 239 499 248 510 263 528 M-11 183 3 196 9 215 21 229 38 245 51 257 65 271 74 290 90 302 103 320 115 335 125 350 136 364 152 379 164 396 172 411 189 422 203 438 212 455 221 470 239 481 248 496 259 514 272 529 M-15 164 -1 180 11 196 27 213 36 227 49 240 63 260 77 274 90 287 99 304 114 316 126 335 137 350 152 365 164 377 175 392 185 406 199 425 209 438 228 450 238 467 249 483 265 495 277 512 287 530 M-14 151 1 168 14 186 24 196 38 215 50 227 60 241 72 257 86 274 103 287 114 305 126 321 136 332 151 350 160 361 175 381 187 394 198 405 210 419 229 438 241 450 252 466 264 483 278 498 291 513 M-11 140 -1 153 13 166 23 181 40 199 49 215 62 230 72 245 84 256 101 270 112 285 123 305 135 318 152 332 163 346 175 361 187 374 203 395 216 407 225 422 240 435 248 456 259 466 272 479 289 500 M-14 120 -1 137 11 149 24 169 37 185 51 194 66 210 75 225 87 245 98 259 112 276 122 290 138 304 153 320 166 329 175 348 191 361 201 380 213 390 222 405 237 425 251 435 263 453 276 471 287 479 M-16 105 -2 125 12 141 25 151 38 164 51 185 61 197 74 213 84 226 100 244 111 254 122 276 135 291 147 306 159 317 174 332 188 347 196 364 209 380 226 389 239 410 248 419 264 437 274 454 289 464 M-15 93 1 109 15 122 26 138 37 154 51 171 61 181 78 195 85 214 99 231 109 243 127 257 139 270 149 287 161 305 175 321 189 329 197 347 210 360 224 377 236 396 249 410 266 423 272 440 287 453 M-10 80 2 95 9 111 28 121 39 139 54 151 61 164 73 185 91 197 101 210 113 231 125 241 139 259 147 270 164 286 172 305 186 315 197 330 213 349 227 360 237 376 249 394 262 407 274 423 291 437 M-11 60 2 80 16 91 27 107 40 122 51 141 66 155 73 165 88 185 100 199 111 216 126 229 136 241 148 259 164 269 174 285 185 306 202 316 213 335 221 348 239 361 251 378 261 394 275 411 287 421 M-9 50 -1 60 9 80 28 96 34 104 53 120 64 139 75 152 90 171 100 183 116 197 127 215 140 225 147 240 159 259 172 276 189 290 199 304 211 320 224 329 236 344 250 365 266 380 277 393 289 410 M-16 32 2 47 10 64 23 81 41 96 47 108 66 124 74 141 91 155 100 169 112 186 123 199 137 215 149 227 160 243 172 255 189 270 198 284 216 304 227 320 239 332 247 351 262 365 274 377 288 393 M-13 17 -0 33 14 44 25 59 34 76 47 95 62 109 74 121 89 141 97 150 114 165 126 179 137 196 146 215 162 224 178 241 189 260 199 270 210 290 227 306 235 319 248 334 262 344 275 365 288 375 M-13 4 -4 19 13 34 24 47 37 64 49 78 65 94 74 106 85 126 103 135 115 153 124 166 137 181 153 195 159 216 172 225 190 240 197 259 210 270 225 285 238 306 247 314 263 332 273 344 284 359 M-15 -16 -0 -1 11 14 25 29 40 47 52 62 65 74 72 90 84 106 97 119 116 136 126 150 140 166 151 183 162 197 174 215 189 228 202 240 214 256 228 272 237 287 253 300 260 316 272 334 290 348 M1 -14 16 6 24 19 34 34 50 45 63 62 76 79 90 96 102 106 113 126 127 134 135 152 154 165 164 183 175 197 191 212 200 227 210 245 227 256 239 269 252 289 261 305 277 318 288 335 M10 -9 25 0 38 14 48 31 61 49 78 61 90 78 102 92 114 108 128 120 139 137 149 151 162 165 174 180 191 198 201 213 209 230 223 239 240 260 247 276 261 287 276 304 289 317 M23 -13 39 -0 48 17 62 30 76 45 91 62 98 76 109 90 123 105 136 124 152 138 165 156 175 167 190 186 199 200 212 211 228 230 237 241 252 256 261 270 274 285 285 301 M36 -14 47 0 59 17 74 36 85 44 97 63 113 77 124 94 141 106 154 120 161 138 173 151 187 169 203 184 214 200 221 211 240 227 250 240 263 257 274 273 287 285 M52 -11 63 -1 72 20 86 35 103 44 109 61 124 77 137 90 147 108 164 125 175 139 185 154 200 166 211 181 228 194 237 212 249 226 261 245 274 258 290 275 M63 -13 73 3 84 18 98 29 112 50 128 63 139 76 148 91 165 104 172 123 188 141 203 151 212 164 224 180 234 199 251 210 264 225 278 242 289 254 M75 -10 87 0 99 14 114 29 127 46 139 65 150 77 163 93 173 107 190 125 204 135 215 154 223 164 235 184 247 196 264 216 272 228 291 244 M85 -10 96 6 115 18 127 32 136 45 148 62 166 81 172 90 187 105 200 124 212 134 224 150 240 166 250 182 264 195 278 211 290 229 M98 -10 114 5 127 15 138 33 152 51 160 59 173 77 188 89 200 107 215 122 222 135 234 151 249 169 259 179 275 196 289 214 M114 -9 125 -0 137 16 147 33 163 48 178 60 189 75 200 93 216 106 225 125 240 135 248 156 259 171 277 186 289 198 M127 -15 141 5 152 17 165 34 172 44 190 63 199 79 214 94 226 105 237 122 252 141 265 155 277 171 288 184 M139 -16 151 -0 164 17 175 32 190 49 201 60 214 78 228 92 241 105 250 124 265 139 273 150 285 166 M147 -15 164 5 174 21 187 33 202 46 211 59 228 81 234 94 248 108 265 126 275 136 291 152 M162 -15 175 6 190 20 197 35 211 50 223 63 238 79 252 92 262 105 277 120 287 139 M174 -14 185 1 202 16 210 30 227 47 236 63 250 76 261 94 275 108 287 121 M190 -14 199 6 209 21 226 35 240 47 253 65 265 78 275 95 290 106 M199 -12 213 6 227 18 238 36 248 44 266 62 273 75 290 89 M214 -13 223 -0 238 15 252 30 261 45 278 65 287 77 M223 -13 241 2 253 16 263 35 278 51 291 65 M236 -14 252 2 262 21 273 35 285 50 M247 -15 263 0 278 20 285 34 M264 -9 278 5 290 18 M277 -14 288 4" stroke="#ff9a1a" stroke-width="1.0" fill="none" opacity="0.8"/><path d="M-16.1 -17.3h2.4v2.4h-2.4zM-14.0 3.0h2.4v2.4h-2.4zM-14.3 16.2h2.4v2.4h-2.4zM-17.4 31.2h2.4v2.4h-2.4zM-10.4 48.9h2.4v2.4h-2.4zM-12.0 58.4h2.4v2.4h-2.4zM-10.7 79.0h2.4v2.4h-2.4zM-16.2 92.3h2.4v2.4h-2.4zM-17.3 103.4h2.4v2.4h-2.4zM-15.1 118.7h2.4v2.4h-2.4zM-11.8 138.7h2.4v2.4h-2.4zM-14.9 149.9h2.4v2.4h-2.4zM-16.6 163.2h2.4v2.4h-2.4zM-12.1 182.0h2.4v2.4h-2.4zM-17.0 196.1h2.4v2.4h-2.4zM-14.4 213.9h2.4v2.4h-2.4zM-12.1 227.1h2.4v2.4h-2.4zM-13.3 244.7h2.4v2.4h-2.4zM-10.0 255.1h2.4v2.4h-2.4zM-15.7 273.5h2.4v2.4h-2.4zM-17.0 285.3h2.4v2.4h-2.4zM-16.9 299.9h2.4v2.4h-2.4zM-16.9 314.7h2.4v2.4h-2.4zM-11.5 334.3h2.4v2.4h-2.4zM-11.5 346.8h2.4v2.4h-2.4zM-12.8 360.3h2.4v2.4h-2.4zM-16.2 375.8h2.4v2.4h-2.4zM-12.0 388.0h2.4v2.4h-2.4zM-17.3 408.3h2.4v2.4h-2.4zM-15.2 422.8h2.4v2.4h-2.4zM-11.9 439.5h2.4v2.4h-2.4zM-14.4 450.2h2.4v2.4h-2.4zM-11.4 468.3h2.4v2.4h-2.4zM-12.6 483.6h2.4v2.4h-2.4zM-12.6 499.7h2.4v2.4h-2.4zM-14.9 513.1h2.4v2.4h-2.4zM-10.3 525.1h2.4v2.4h-2.4zM-0.4 -14.7h2.4v2.4h-2.4zM-1.5 -1.9h2.4v2.4h-2.4zM-4.8 18.2h2.4v2.4h-2.4zM-1.6 32.2h2.4v2.4h-2.4zM0.6 45.7h2.4v2.4h-2.4zM-2.2 58.8h2.4v2.4h-2.4zM1.0 78.8h2.4v2.4h-2.4zM0.6 94.1h2.4v2.4h-2.4zM-0.1 107.8h2.4v2.4h-2.4zM-3.5 123.3h2.4v2.4h-2.4zM-2.4 135.8h2.4v2.4h-2.4zM-2.6 151.8h2.4v2.4h-2.4zM-0.0 166.9h2.4v2.4h-2.4zM-2.6 179.2h2.4v2.4h-2.4zM1.4 194.8h2.4v2.4h-2.4zM-1.7 208.2h2.4v2.4h-2.4zM-2.7 223.2h2.4v2.4h-2.4zM-2.4 242.9h2.4v2.4h-2.4zM2.4 257.2h2.4v2.4h-2.4zM-2.9 272.5h2.4v2.4h-2.4zM-0.2 288.7h2.4v2.4h-2.4zM-0.9 304.4h2.4v2.4h-2.4zM-1.8 314.7h2.4v2.4h-2.4zM-1.1 334.5h2.4v2.4h-2.4zM0.5 346.3h2.4v2.4h-2.4zM-1.2 362.4h2.4v2.4h-2.4zM-1.6 376.7h2.4v2.4h-2.4zM2.3 394.5h2.4v2.4h-2.4zM1.4 403.5h2.4v2.4h-2.4zM-0.8 420.3h2.4v2.4h-2.4zM1.9 434.9h2.4v2.4h-2.4zM2.0 449.3h2.4v2.4h-2.4zM-1.8 469.7h2.4v2.4h-2.4zM-0.5 484.5h2.4v2.4h-2.4zM-0.9 494.3h2.4v2.4h-2.4zM0.4 511.5h2.4v2.4h-2.4zM-1.2 523.6h2.4v2.4h-2.4zM8.6 -10.5h2.4v2.4h-2.4zM14.7 4.8h2.4v2.4h-2.4zM10.2 12.9h2.4v2.4h-2.4zM11.7 33.1h2.4v2.4h-2.4zM12.4 42.9h2.4v2.4h-2.4zM9.3 62.8h2.4v2.4h-2.4zM8.0 78.9h2.4v2.4h-2.4zM15.0 89.4h2.4v2.4h-2.4zM8.0 109.9h2.4v2.4h-2.4zM13.3 121.0h2.4v2.4h-2.4zM11.1 139.4h2.4v2.4h-2.4zM10.2 147.9h2.4v2.4h-2.4zM12.2 164.9h2.4v2.4h-2.4zM12.7 184.7h2.4v2.4h-2.4zM10.3 194.4h2.4v2.4h-2.4zM7.9 213.8h2.4v2.4h-2.4zM8.1 229.7h2.4v2.4h-2.4zM12.8 244.4h2.4v2.4h-2.4zM13.7 254.0h2.4v2.4h-2.4zM8.9 274.8h2.4v2.4h-2.4zM9.7 288.5h2.4v2.4h-2.4zM8.8 299.8h2.4v2.4h-2.4zM12.6 314.4h2.4v2.4h-2.4zM13.2 334.1h2.4v2.4h-2.4zM10.0 344.8h2.4v2.4h-2.4zM7.8 360.7h2.4v2.4h-2.4zM8.0 376.9h2.4v2.4h-2.4zM12.7 391.8h2.4v2.4h-2.4zM12.1 407.0h2.4v2.4h-2.4zM14.3 421.5h2.4v2.4h-2.4zM14.0 435.2h2.4v2.4h-2.4zM8.6 449.2h2.4v2.4h-2.4zM13.5 464.3h2.4v2.4h-2.4zM13.3 484.3h2.4v2.4h-2.4zM11.6 493.6h2.4v2.4h-2.4zM12.2 510.4h2.4v2.4h-2.4zM14.4 524.2h2.4v2.4h-2.4zM21.8 -13.8h2.4v2.4h-2.4zM23.8 -1.0h2.4v2.4h-2.4zM22.9 17.6h2.4v2.4h-2.4zM23.6 28.0h2.4v2.4h-2.4zM23.2 45.7h2.4v2.4h-2.4zM23.4 57.7h2.4v2.4h-2.4zM22.1 79.7h2.4v2.4h-2.4zM26.7 94.6h2.4v2.4h-2.4zM25.7 105.8h2.4v2.4h-2.4zM27.1 119.8h2.4v2.4h-2.4zM24.5 137.0h2.4v2.4h-2.4zM23.4 149.4h2.4v2.4h-2.4zM22.5 167.4h2.4v2.4h-2.4zM22.2 180.1h2.4v2.4h-2.4zM22.7 195.0h2.4v2.4h-2.4zM26.3 211.6h2.4v2.4h-2.4zM20.2 228.1h2.4v2.4h-2.4zM23.8 243.4h2.4v2.4h-2.4zM23.8 254.9h2.4v2.4h-2.4zM26.3 268.9h2.4v2.4h-2.4zM22.1 286.2h2.4v2.4h-2.4zM26.5 298.4h2.4v2.4h-2.4zM22.6 316.5h2.4v2.4h-2.4zM25.1 328.3h2.4v2.4h-2.4zM25.7 346.7h2.4v2.4h-2.4zM23.9 360.4h2.4v2.4h-2.4zM22.4 379.2h2.4v2.4h-2.4zM27.5 388.9h2.4v2.4h-2.4zM21.6 407.6h2.4v2.4h-2.4zM25.8 423.7h2.4v2.4h-2.4zM22.3 434.1h2.4v2.4h-2.4zM20.6 450.4h2.4v2.4h-2.4zM24.3 469.1h2.4v2.4h-2.4zM20.3 478.2h2.4v2.4h-2.4zM24.9 497.6h2.4v2.4h-2.4zM21.0 508.3h2.4v2.4h-2.4zM20.3 527.4h2.4v2.4h-2.4zM34.6 -15.6h2.4v2.4h-2.4zM37.5 -1.5h2.4v2.4h-2.4zM36.6 13.2h2.4v2.4h-2.4zM33.0 32.6h2.4v2.4h-2.4zM38.5 46.0h2.4v2.4h-2.4zM35.6 62.8h2.4v2.4h-2.4zM33.1 74.6h2.4v2.4h-2.4zM39.3 94.7h2.4v2.4h-2.4zM32.8 102.6h2.4v2.4h-2.4zM38.3 120.9h2.4v2.4h-2.4zM38.3 137.4h2.4v2.4h-2.4zM35.9 152.9h2.4v2.4h-2.4zM37.1 162.7h2.4v2.4h-2.4zM36.0 184.2h2.4v2.4h-2.4zM38.4 197.5h2.4v2.4h-2.4zM37.2 213.7h2.4v2.4h-2.4zM34.7 225.5h2.4v2.4h-2.4zM37.3 243.7h2.4v2.4h-2.4zM35.0 253.8h2.4v2.4h-2.4zM34.6 270.8h2.4v2.4h-2.4zM33.3 287.3h2.4v2.4h-2.4zM39.3 300.1h2.4v2.4h-2.4zM39.7 315.7h2.4v2.4h-2.4zM36.6 334.9h2.4v2.4h-2.4zM37.9 346.3h2.4v2.4h-2.4zM38.2 361.1h2.4v2.4h-2.4zM38.0 374.2h2.4v2.4h-2.4zM33.1 392.0h2.4v2.4h-2.4zM36.5 406.0h2.4v2.4h-2.4zM33.4 424.6h2.4v2.4h-2.4zM33.4 439.8h2.4v2.4h-2.4zM34.9 449.7h2.4v2.4h-2.4zM39.6 469.8h2.4v2.4h-2.4zM37.8 484.7h2.4v2.4h-2.4zM33.9 499.0h2.4v2.4h-2.4zM37.2 509.8h2.4v2.4h-2.4zM37.0 523.4h2.4v2.4h-2.4zM51.0 -12.6h2.4v2.4h-2.4zM45.9 -0.8h2.4v2.4h-2.4zM47.2 16.1h2.4v2.4h-2.4zM46.8 29.8h2.4v2.4h-2.4zM49.2 43.7h2.4v2.4h-2.4zM50.7 60.9h2.4v2.4h-2.4zM48.1 76.9h2.4v2.4h-2.4zM46.2 94.2h2.4v2.4h-2.4zM45.9 106.7h2.4v2.4h-2.4zM52.3 118.6h2.4v2.4h-2.4zM50.3 139.9h2.4v2.4h-2.4zM52.5 150.2h2.4v2.4h-2.4zM49.7 169.6h2.4v2.4h-2.4zM49.7 184.1h2.4v2.4h-2.4zM50.3 192.8h2.4v2.4h-2.4zM47.6 214.3h2.4v2.4h-2.4zM48.6 225.8h2.4v2.4h-2.4zM47.3 238.7h2.4v2.4h-2.4zM50.1 255.5h2.4v2.4h-2.4zM51.7 267.9h2.4v2.4h-2.4zM51.6 283.2h2.4v2.4h-2.4zM51.2 301.0h2.4v2.4h-2.4zM50.6 315.9h2.4v2.4h-2.4zM46.2 334.7h2.4v2.4h-2.4zM49.9 344.2h2.4v2.4h-2.4zM49.5 359.1h2.4v2.4h-2.4zM48.1 377.0h2.4v2.4h-2.4zM49.6 388.4h2.4v2.4h-2.4zM46.5 406.0h2.4v2.4h-2.4zM48.9 424.0h2.4v2.4h-2.4zM49.4 438.6h2.4v2.4h-2.4zM47.8 449.0h2.4v2.4h-2.4zM47.1 462.7h2.4v2.4h-2.4zM47.8 482.3h2.4v2.4h-2.4zM51.4 494.3h2.4v2.4h-2.4zM50.3 513.2h2.4v2.4h-2.4zM50.2 529.8h2.4v2.4h-2.4zM61.9 -14.1h2.4v2.4h-2.4zM61.6 -2.4h2.4v2.4h-2.4zM57.6 16.3h2.4v2.4h-2.4zM60.4 28.6h2.4v2.4h-2.4zM60.2 47.4h2.4v2.4h-2.4zM61.5 60.5h2.4v2.4h-2.4zM63.3 73.0h2.4v2.4h-2.4zM64.2 92.6h2.4v2.4h-2.4zM60.7 107.7h2.4v2.4h-2.4zM64.6 122.5h2.4v2.4h-2.4zM62.6 137.8h2.4v2.4h-2.4zM64.4 154.2h2.4v2.4h-2.4zM59.6 162.7h2.4v2.4h-2.4zM59.6 180.3h2.4v2.4h-2.4zM59.4 196.0h2.4v2.4h-2.4zM64.6 209.0h2.4v2.4h-2.4zM60.4 228.8h2.4v2.4h-2.4zM58.5 240.2h2.4v2.4h-2.4zM61.7 258.3h2.4v2.4h-2.4zM64.0 269.5h2.4v2.4h-2.4zM64.7 285.8h2.4v2.4h-2.4zM58.5 298.7h2.4v2.4h-2.4zM60.8 318.6h2.4v2.4h-2.4zM58.1 329.2h2.4v2.4h-2.4zM63.6 348.7h2.4v2.4h-2.4zM59.1 358.0h2.4v2.4h-2.4zM62.5 378.5h2.4v2.4h-2.4zM57.9 391.5h2.4v2.4h-2.4zM58.6 407.1h2.4v2.4h-2.4zM58.4 418.5h2.4v2.4h-2.4zM61.6 439.7h2.4v2.4h-2.4zM57.8 448.3h2.4v2.4h-2.4zM59.1 468.7h2.4v2.4h-2.4zM59.4 479.6h2.4v2.4h-2.4zM60.8 499.0h2.4v2.4h-2.4zM59.7 511.1h2.4v2.4h-2.4zM61.1 526.3h2.4v2.4h-2.4zM73.4 -11.4h2.4v2.4h-2.4zM71.5 1.3h2.4v2.4h-2.4zM71.0 19.1h2.4v2.4h-2.4zM73.2 35.0h2.4v2.4h-2.4zM75.0 44.1h2.4v2.4h-2.4zM77.0 59.8h2.4v2.4h-2.4zM74.8 78.3h2.4v2.4h-2.4zM70.8 88.9h2.4v2.4h-2.4zM73.3 105.2h2.4v2.4h-2.4zM72.4 119.6h2.4v2.4h-2.4zM72.8 139.9h2.4v2.4h-2.4zM73.5 151.0h2.4v2.4h-2.4zM71.9 164.0h2.4v2.4h-2.4zM72.0 184.2h2.4v2.4h-2.4zM76.7 193.8h2.4v2.4h-2.4zM73.0 211.9h2.4v2.4h-2.4zM74.2 224.1h2.4v2.4h-2.4zM70.5 243.5h2.4v2.4h-2.4zM71.0 255.5h2.4v2.4h-2.4zM75.8 272.7h2.4v2.4h-2.4zM73.1 288.5h2.4v2.4h-2.4zM77.5 301.1h2.4v2.4h-2.4zM76.7 316.5h2.4v2.4h-2.4zM73.0 335.0h2.4v2.4h-2.4zM75.8 343.6h2.4v2.4h-2.4zM74.1 360.4h2.4v2.4h-2.4zM73.8 378.2h2.4v2.4h-2.4zM72.6 392.1h2.4v2.4h-2.4zM71.8 405.9h2.4v2.4h-2.4zM76.7 423.1h2.4v2.4h-2.4zM72.8 434.6h2.4v2.4h-2.4zM74.6 451.1h2.4v2.4h-2.4zM77.5 464.8h2.4v2.4h-2.4zM77.0 479.3h2.4v2.4h-2.4zM76.1 499.0h2.4v2.4h-2.4zM71.5 510.9h2.4v2.4h-2.4zM75.4 525.6h2.4v2.4h-2.4zM83.4 -11.7h2.4v2.4h-2.4zM86.2 -1.1h2.4v2.4h-2.4zM82.9 16.5h2.4v2.4h-2.4zM84.7 33.6h2.4v2.4h-2.4zM83.7 42.7h2.4v2.4h-2.4zM89.4 60.7h2.4v2.4h-2.4zM89.0 76.8h2.4v2.4h-2.4zM89.2 94.6h2.4v2.4h-2.4zM83.2 104.6h2.4v2.4h-2.4zM83.9 124.7h2.4v2.4h-2.4zM87.8 139.5h2.4v2.4h-2.4zM89.9 153.5h2.4v2.4h-2.4zM89.1 169.6h2.4v2.4h-2.4zM87.1 183.7h2.4v2.4h-2.4zM89.9 196.1h2.4v2.4h-2.4zM84.2 212.5h2.4v2.4h-2.4zM83.0 224.9h2.4v2.4h-2.4zM85.4 243.6h2.4v2.4h-2.4zM82.7 255.0h2.4v2.4h-2.4zM84.8 272.5h2.4v2.4h-2.4zM89.1 286.2h2.4v2.4h-2.4zM88.9 300.7h2.4v2.4h-2.4zM86.3 315.0h2.4v2.4h-2.4zM84.0 334.2h2.4v2.4h-2.4zM87.1 344.6h2.4v2.4h-2.4zM86.6 360.6h2.4v2.4h-2.4zM82.8 377.8h2.4v2.4h-2.4zM89.1 392.1h2.4v2.4h-2.4zM83.7 405.7h2.4v2.4h-2.4zM84.1 418.8h2.4v2.4h-2.4zM84.8 439.3h2.4v2.4h-2.4zM88.9 453.5h2.4v2.4h-2.4zM89.5 463.4h2.4v2.4h-2.4zM84.2 477.9h2.4v2.4h-2.4zM82.6 497.4h2.4v2.4h-2.4zM85.6 511.8h2.4v2.4h-2.4zM89.1 524.7h2.4v2.4h-2.4zM96.9 -11.3h2.4v2.4h-2.4zM95.2 4.5h2.4v2.4h-2.4zM97.7 12.8h2.4v2.4h-2.4zM96.7 28.2h2.4v2.4h-2.4zM101.4 43.0h2.4v2.4h-2.4zM95.5 62.2h2.4v2.4h-2.4zM96.6 75.1h2.4v2.4h-2.4zM100.9 90.7h2.4v2.4h-2.4zM100.5 104.7h2.4v2.4h-2.4zM96.0 118.1h2.4v2.4h-2.4zM101.3 133.5h2.4v2.4h-2.4zM95.6 148.7h2.4v2.4h-2.4zM99.0 167.7h2.4v2.4h-2.4zM98.8 182.2h2.4v2.4h-2.4zM98.8 198.1h2.4v2.4h-2.4zM99.6 208.9h2.4v2.4h-2.4zM97.6 230.0h2.4v2.4h-2.4zM98.4 242.6h2.4v2.4h-2.4zM96.3 257.6h2.4v2.4h-2.4zM100.3 268.8h2.4v2.4h-2.4zM102.1 285.5h2.4v2.4h-2.4zM97.6 302.6h2.4v2.4h-2.4zM102.0 318.8h2.4v2.4h-2.4zM99.3 328.0h2.4v2.4h-2.4zM98.7 347.2h2.4v2.4h-2.4zM101.3 359.1h2.4v2.4h-2.4zM98.5 377.4h2.4v2.4h-2.4zM100.2 387.9h2.4v2.4h-2.4zM101.6 403.4h2.4v2.4h-2.4zM101.5 424.0h2.4v2.4h-2.4zM99.6 436.6h2.4v2.4h-2.4zM97.7 450.5h2.4v2.4h-2.4zM102.0 467.5h2.4v2.4h-2.4zM98.5 480.2h2.4v2.4h-2.4zM102.5 499.6h2.4v2.4h-2.4zM102.0 514.5h2.4v2.4h-2.4zM97.7 528.8h2.4v2.4h-2.4zM112.7 -10.6h2.4v2.4h-2.4zM113.1 3.8h2.4v2.4h-2.4zM113.6 16.9h2.4v2.4h-2.4zM112.8 28.1h2.4v2.4h-2.4zM110.4 48.6h2.4v2.4h-2.4zM108.2 60.0h2.4v2.4h-2.4zM112.2 75.9h2.4v2.4h-2.4zM108.1 88.8h2.4v2.4h-2.4zM112.5 106.7h2.4v2.4h-2.4zM112.0 124.4h2.4v2.4h-2.4zM114.5 134.8h2.4v2.4h-2.4zM114.2 151.5h2.4v2.4h-2.4zM112.4 163.3h2.4v2.4h-2.4zM110.6 184.7h2.4v2.4h-2.4zM114.6 195.7h2.4v2.4h-2.4zM109.4 214.7h2.4v2.4h-2.4zM111.3 229.7h2.4v2.4h-2.4zM107.8 242.0h2.4v2.4h-2.4zM109.7 252.6h2.4v2.4h-2.4zM111.2 274.7h2.4v2.4h-2.4zM111.0 284.2h2.4v2.4h-2.4zM112.8 304.1h2.4v2.4h-2.4zM113.2 314.4h2.4v2.4h-2.4zM113.4 333.4h2.4v2.4h-2.4zM111.0 348.2h2.4v2.4h-2.4zM107.8 359.1h2.4v2.4h-2.4zM110.5 379.5h2.4v2.4h-2.4zM112.8 392.6h2.4v2.4h-2.4zM113.7 408.0h2.4v2.4h-2.4zM108.0 424.2h2.4v2.4h-2.4zM113.3 434.2h2.4v2.4h-2.4zM112.0 450.9h2.4v2.4h-2.4zM107.8 468.6h2.4v2.4h-2.4zM110.1 482.3h2.4v2.4h-2.4zM113.7 499.5h2.4v2.4h-2.4zM111.5 510.9h2.4v2.4h-2.4zM107.6 523.4h2.4v2.4h-2.4zM125.5 -16.1h2.4v2.4h-2.4zM124.0 -1.2h2.4v2.4h-2.4zM126.0 14.1h2.4v2.4h-2.4zM125.8 30.9h2.4v2.4h-2.4zM125.7 45.2h2.4v2.4h-2.4zM127.3 61.3h2.4v2.4h-2.4zM123.1 75.7h2.4v2.4h-2.4zM122.3 92.6h2.4v2.4h-2.4zM121.4 103.7h2.4v2.4h-2.4zM127.3 119.1h2.4v2.4h-2.4zM126.1 133.2h2.4v2.4h-2.4zM124.5 148.3h2.4v2.4h-2.4zM122.8 165.1h2.4v2.4h-2.4zM124.6 177.6h2.4v2.4h-2.4zM122.1 198.3h2.4v2.4h-2.4zM125.7 213.5h2.4v2.4h-2.4zM124.4 228.2h2.4v2.4h-2.4zM123.3 239.9h2.4v2.4h-2.4zM126.1 255.5h2.4v2.4h-2.4zM121.0 274.7h2.4v2.4h-2.4zM121.0 288.3h2.4v2.4h-2.4zM121.6 304.0h2.4v2.4h-2.4zM124.7 319.6h2.4v2.4h-2.4zM124.6 333.9h2.4v2.4h-2.4zM123.8 349.2h2.4v2.4h-2.4zM123.1 364.5h2.4v2.4h-2.4zM124.9 379.5h2.4v2.4h-2.4zM120.4 390.3h2.4v2.4h-2.4zM126.8 404.6h2.4v2.4h-2.4zM124.1 420.7h2.4v2.4h-2.4zM120.1 432.9h2.4v2.4h-2.4zM123.7 450.4h2.4v2.4h-2.4zM126.7 465.0h2.4v2.4h-2.4zM121.2 478.4h2.4v2.4h-2.4zM123.1 499.9h2.4v2.4h-2.4zM126.8 511.6h2.4v2.4h-2.4zM123.9 527.2h2.4v2.4h-2.4zM138.1 -17.0h2.4v2.4h-2.4zM139.6 4.1h2.4v2.4h-2.4zM136.1 15.1h2.4v2.4h-2.4zM136.5 31.3h2.4v2.4h-2.4zM134.9 43.5h2.4v2.4h-2.4zM138.0 64.2h2.4v2.4h-2.4zM137.4 74.7h2.4v2.4h-2.4zM135.8 89.0h2.4v2.4h-2.4zM139.6 104.4h2.4v2.4h-2.4zM135.2 122.4h2.4v2.4h-2.4zM138.1 135.9h2.4v2.4h-2.4zM133.6 150.6h2.4v2.4h-2.4zM138.7 164.6h2.4v2.4h-2.4zM135.6 179.6h2.4v2.4h-2.4zM135.3 195.1h2.4v2.4h-2.4zM136.1 213.8h2.4v2.4h-2.4zM138.7 223.8h2.4v2.4h-2.4zM134.3 240.1h2.4v2.4h-2.4zM137.7 258.1h2.4v2.4h-2.4zM138.1 269.2h2.4v2.4h-2.4zM134.2 290.0h2.4v2.4h-2.4zM137.0 303.3h2.4v2.4h-2.4zM134.1 317.2h2.4v2.4h-2.4zM134.8 331.2h2.4v2.4h-2.4zM135.9 349.0h2.4v2.4h-2.4zM135.2 363.1h2.4v2.4h-2.4zM134.9 377.1h2.4v2.4h-2.4zM139.0 389.3h2.4v2.4h-2.4zM135.7 409.9h2.4v2.4h-2.4zM138.8 424.2h2.4v2.4h-2.4zM137.1 435.4h2.4v2.4h-2.4zM133.6 454.0h2.4v2.4h-2.4zM133.4 469.6h2.4v2.4h-2.4zM139.5 484.7h2.4v2.4h-2.4zM138.4 497.5h2.4v2.4h-2.4zM135.5 513.8h2.4v2.4h-2.4zM136.9 526.4h2.4v2.4h-2.4zM146.1 -16.6h2.4v2.4h-2.4zM150.1 -1.4h2.4v2.4h-2.4zM150.3 15.8h2.4v2.4h-2.4zM146.0 31.8h2.4v2.4h-2.4zM151.0 50.0h2.4v2.4h-2.4zM146.9 60.5h2.4v2.4h-2.4zM148.7 76.2h2.4v2.4h-2.4zM146.8 90.0h2.4v2.4h-2.4zM145.7 106.8h2.4v2.4h-2.4zM152.5 118.5h2.4v2.4h-2.4zM150.5 136.5h2.4v2.4h-2.4zM147.5 150.0h2.4v2.4h-2.4zM152.4 163.4h2.4v2.4h-2.4zM149.5 181.6h2.4v2.4h-2.4zM152.1 194.1h2.4v2.4h-2.4zM145.3 214.2h2.4v2.4h-2.4zM147.5 225.6h2.4v2.4h-2.4zM145.9 239.2h2.4v2.4h-2.4zM146.7 257.7h2.4v2.4h-2.4zM146.1 269.0h2.4v2.4h-2.4zM148.1 285.6h2.4v2.4h-2.4zM145.4 305.0h2.4v2.4h-2.4zM151.4 318.4h2.4v2.4h-2.4zM150.3 330.5h2.4v2.4h-2.4zM150.1 348.8h2.4v2.4h-2.4zM150.4 364.2h2.4v2.4h-2.4zM150.9 378.0h2.4v2.4h-2.4zM151.9 393.5h2.4v2.4h-2.4zM147.5 406.3h2.4v2.4h-2.4zM145.8 420.7h2.4v2.4h-2.4zM149.9 434.2h2.4v2.4h-2.4zM149.4 450.0h2.4v2.4h-2.4zM146.8 465.2h2.4v2.4h-2.4zM149.5 481.0h2.4v2.4h-2.4zM148.4 498.4h2.4v2.4h-2.4zM149.9 511.9h2.4v2.4h-2.4zM145.9 522.7h2.4v2.4h-2.4zM160.3 -16.5h2.4v2.4h-2.4zM162.4 4.0h2.4v2.4h-2.4zM163.1 15.9h2.4v2.4h-2.4zM163.8 32.9h2.4v2.4h-2.4zM161.5 47.1h2.4v2.4h-2.4zM158.9 57.7h2.4v2.4h-2.4zM164.4 79.8h2.4v2.4h-2.4zM161.4 91.9h2.4v2.4h-2.4zM163.5 103.3h2.4v2.4h-2.4zM163.0 123.5h2.4v2.4h-2.4zM159.3 136.8h2.4v2.4h-2.4zM163.6 154.7h2.4v2.4h-2.4zM160.6 163.7h2.4v2.4h-2.4zM163.0 182.2h2.4v2.4h-2.4zM161.2 195.5h2.4v2.4h-2.4zM157.8 214.5h2.4v2.4h-2.4zM160.4 222.9h2.4v2.4h-2.4zM158.3 242.0h2.4v2.4h-2.4zM157.8 258.3h2.4v2.4h-2.4zM163.1 267.6h2.4v2.4h-2.4zM162.4 284.8h2.4v2.4h-2.4zM159.7 304.0h2.4v2.4h-2.4zM158.1 315.7h2.4v2.4h-2.4zM164.7 328.2h2.4v2.4h-2.4zM162.1 344.5h2.4v2.4h-2.4zM159.3 360.1h2.4v2.4h-2.4zM162.9 375.7h2.4v2.4h-2.4zM162.9 394.4h2.4v2.4h-2.4zM164.4 406.6h2.4v2.4h-2.4zM159.5 422.3h2.4v2.4h-2.4zM158.2 435.1h2.4v2.4h-2.4zM159.8 454.7h2.4v2.4h-2.4zM161.8 465.5h2.4v2.4h-2.4zM159.7 481.5h2.4v2.4h-2.4zM161.5 499.0h2.4v2.4h-2.4zM161.3 514.9h2.4v2.4h-2.4zM157.9 527.1h2.4v2.4h-2.4zM173.2 -15.2h2.4v2.4h-2.4zM173.7 5.0h2.4v2.4h-2.4zM173.0 19.6h2.4v2.4h-2.4zM174.0 30.5h2.4v2.4h-2.4zM170.6 43.2h2.4v2.4h-2.4zM176.5 58.6h2.4v2.4h-2.4zM172.2 75.3h2.4v2.4h-2.4zM170.6 89.1h2.4v2.4h-2.4zM171.7 105.8h2.4v2.4h-2.4zM171.1 122.1h2.4v2.4h-2.4zM173.6 137.7h2.4v2.4h-2.4zM171.6 149.4h2.4v2.4h-2.4zM173.5 165.5h2.4v2.4h-2.4zM172.5 178.6h2.4v2.4h-2.4zM173.8 195.3h2.4v2.4h-2.4zM172.9 213.5h2.4v2.4h-2.4zM170.4 224.0h2.4v2.4h-2.4zM177.2 240.2h2.4v2.4h-2.4zM170.5 254.3h2.4v2.4h-2.4zM170.6 274.9h2.4v2.4h-2.4zM172.3 283.8h2.4v2.4h-2.4zM170.8 303.7h2.4v2.4h-2.4zM174.2 319.3h2.4v2.4h-2.4zM173.0 330.7h2.4v2.4h-2.4zM174.0 347.3h2.4v2.4h-2.4zM173.9 359.4h2.4v2.4h-2.4zM174.2 379.6h2.4v2.4h-2.4zM174.2 390.8h2.4v2.4h-2.4zM170.6 409.9h2.4v2.4h-2.4zM170.2 417.6h2.4v2.4h-2.4zM172.6 439.5h2.4v2.4h-2.4zM172.6 454.4h2.4v2.4h-2.4zM176.6 465.2h2.4v2.4h-2.4zM174.3 480.4h2.4v2.4h-2.4zM176.6 497.7h2.4v2.4h-2.4zM175.2 512.1h2.4v2.4h-2.4zM174.7 527.8h2.4v2.4h-2.4zM189.1 -15.2h2.4v2.4h-2.4zM183.8 0.0h2.4v2.4h-2.4zM188.4 19.0h2.4v2.4h-2.4zM185.6 31.7h2.4v2.4h-2.4zM188.5 48.3h2.4v2.4h-2.4zM188.4 61.5h2.4v2.4h-2.4zM187.5 73.5h2.4v2.4h-2.4zM186.5 87.7h2.4v2.4h-2.4zM186.0 103.3h2.4v2.4h-2.4zM189.2 123.8h2.4v2.4h-2.4zM187.0 139.5h2.4v2.4h-2.4zM183.5 152.8h2.4v2.4h-2.4zM185.7 167.9h2.4v2.4h-2.4zM188.3 184.5h2.4v2.4h-2.4zM189.7 196.6h2.4v2.4h-2.4zM189.4 210.7h2.4v2.4h-2.4zM188.0 226.5h2.4v2.4h-2.4zM189.0 238.7h2.4v2.4h-2.4zM188.2 258.9h2.4v2.4h-2.4zM188.0 268.8h2.4v2.4h-2.4zM187.4 288.8h2.4v2.4h-2.4zM183.9 304.9h2.4v2.4h-2.4zM184.9 313.8h2.4v2.4h-2.4zM187.3 327.7h2.4v2.4h-2.4zM187.1 345.8h2.4v2.4h-2.4zM189.7 359.7h2.4v2.4h-2.4zM186.2 372.7h2.4v2.4h-2.4zM185.8 392.3h2.4v2.4h-2.4zM183.9 405.1h2.4v2.4h-2.4zM188.1 420.7h2.4v2.4h-2.4zM184.4 433.7h2.4v2.4h-2.4zM182.7 453.3h2.4v2.4h-2.4zM186.0 464.7h2.4v2.4h-2.4zM183.2 482.9h2.4v2.4h-2.4zM189.1 495.0h2.4v2.4h-2.4zM185.8 514.7h2.4v2.4h-2.4zM184.7 525.5h2.4v2.4h-2.4zM198.1 -13.0h2.4v2.4h-2.4zM197.9 4.5h2.4v2.4h-2.4zM200.9 14.6h2.4v2.4h-2.4zM195.7 34.3h2.4v2.4h-2.4zM200.7 45.2h2.4v2.4h-2.4zM200.0 58.9h2.4v2.4h-2.4zM197.7 77.9h2.4v2.4h-2.4zM199.2 92.2h2.4v2.4h-2.4zM199.2 105.7h2.4v2.4h-2.4zM198.6 122.7h2.4v2.4h-2.4zM202.5 134.2h2.4v2.4h-2.4zM202.1 149.9h2.4v2.4h-2.4zM198.9 164.8h2.4v2.4h-2.4zM202.3 182.7h2.4v2.4h-2.4zM197.5 198.7h2.4v2.4h-2.4zM199.5 211.6h2.4v2.4h-2.4zM198.4 225.8h2.4v2.4h-2.4zM200.9 239.1h2.4v2.4h-2.4zM196.1 257.5h2.4v2.4h-2.4zM197.5 269.3h2.4v2.4h-2.4zM196.6 283.2h2.4v2.4h-2.4zM198.1 302.6h2.4v2.4h-2.4zM201.2 314.9h2.4v2.4h-2.4zM195.5 329.2h2.4v2.4h-2.4zM196.0 345.6h2.4v2.4h-2.4zM195.3 363.2h2.4v2.4h-2.4zM199.3 378.4h2.4v2.4h-2.4zM201.9 394.2h2.4v2.4h-2.4zM197.3 403.4h2.4v2.4h-2.4zM197.8 424.0h2.4v2.4h-2.4zM201.6 437.2h2.4v2.4h-2.4zM197.7 451.9h2.4v2.4h-2.4zM196.9 463.4h2.4v2.4h-2.4zM195.2 477.8h2.4v2.4h-2.4zM201.9 496.8h2.4v2.4h-2.4zM198.0 513.7h2.4v2.4h-2.4zM199.4 523.6h2.4v2.4h-2.4zM212.8 -14.2h2.4v2.4h-2.4zM212.2 4.8h2.4v2.4h-2.4zM207.9 19.6h2.4v2.4h-2.4zM208.9 28.3h2.4v2.4h-2.4zM210.0 48.5h2.4v2.4h-2.4zM209.9 57.9h2.4v2.4h-2.4zM213.1 77.3h2.4v2.4h-2.4zM213.1 93.2h2.4v2.4h-2.4zM214.6 105.0h2.4v2.4h-2.4zM213.8 120.9h2.4v2.4h-2.4zM211.2 132.8h2.4v2.4h-2.4zM214.2 152.3h2.4v2.4h-2.4zM210.5 163.1h2.4v2.4h-2.4zM209.5 180.2h2.4v2.4h-2.4zM212.3 198.6h2.4v2.4h-2.4zM210.3 209.8h2.4v2.4h-2.4zM207.9 229.0h2.4v2.4h-2.4zM209.2 243.6h2.4v2.4h-2.4zM212.8 255.1h2.4v2.4h-2.4zM209.2 268.5h2.4v2.4h-2.4zM209.1 288.4h2.4v2.4h-2.4zM214.8 302.5h2.4v2.4h-2.4zM209.4 318.4h2.4v2.4h-2.4zM212.1 333.8h2.4v2.4h-2.4zM211.5 347.9h2.4v2.4h-2.4zM208.9 359.0h2.4v2.4h-2.4zM208.2 379.1h2.4v2.4h-2.4zM211.4 388.5h2.4v2.4h-2.4zM214.3 406.2h2.4v2.4h-2.4zM208.8 418.0h2.4v2.4h-2.4zM208.2 436.7h2.4v2.4h-2.4zM210.3 453.8h2.4v2.4h-2.4zM213.4 466.7h2.4v2.4h-2.4zM210.3 483.2h2.4v2.4h-2.4zM213.6 496.1h2.4v2.4h-2.4zM212.6 513.6h2.4v2.4h-2.4zM210.4 526.7h2.4v2.4h-2.4zM221.6 -14.1h2.4v2.4h-2.4zM222.1 -1.5h2.4v2.4h-2.4zM226.1 17.2h2.4v2.4h-2.4zM224.8 34.3h2.4v2.4h-2.4zM226.1 45.6h2.4v2.4h-2.4zM222.2 61.5h2.4v2.4h-2.4zM226.6 79.7h2.4v2.4h-2.4zM227.3 90.6h2.4v2.4h-2.4zM224.3 103.5h2.4v2.4h-2.4zM223.4 123.4h2.4v2.4h-2.4zM221.3 133.5h2.4v2.4h-2.4zM222.6 148.9h2.4v2.4h-2.4zM221.3 163.2h2.4v2.4h-2.4zM222.9 178.7h2.4v2.4h-2.4zM226.9 192.7h2.4v2.4h-2.4zM220.3 209.5h2.4v2.4h-2.4zM226.6 229.0h2.4v2.4h-2.4zM222.0 238.0h2.4v2.4h-2.4zM225.6 254.5h2.4v2.4h-2.4zM226.9 270.6h2.4v2.4h-2.4zM223.6 283.9h2.4v2.4h-2.4zM226.1 304.4h2.4v2.4h-2.4zM226.3 318.3h2.4v2.4h-2.4zM223.0 328.1h2.4v2.4h-2.4zM220.2 346.6h2.4v2.4h-2.4zM226.1 358.8h2.4v2.4h-2.4zM223.0 375.7h2.4v2.4h-2.4zM225.0 388.1h2.4v2.4h-2.4zM220.4 403.9h2.4v2.4h-2.4zM224.1 420.8h2.4v2.4h-2.4zM227.3 436.5h2.4v2.4h-2.4zM226.7 448.9h2.4v2.4h-2.4zM220.2 468.9h2.4v2.4h-2.4zM223.4 478.3h2.4v2.4h-2.4zM224.3 496.8h2.4v2.4h-2.4zM222.1 514.2h2.4v2.4h-2.4zM226.3 526.0h2.4v2.4h-2.4zM234.3 -15.2h2.4v2.4h-2.4zM239.3 0.6h2.4v2.4h-2.4zM236.9 13.7h2.4v2.4h-2.4zM237.0 34.9h2.4v2.4h-2.4zM239.3 45.5h2.4v2.4h-2.4zM234.5 61.9h2.4v2.4h-2.4zM236.8 78.2h2.4v2.4h-2.4zM233.2 92.9h2.4v2.4h-2.4zM240.0 103.8h2.4v2.4h-2.4zM235.7 121.2h2.4v2.4h-2.4zM239.1 133.6h2.4v2.4h-2.4zM232.7 150.0h2.4v2.4h-2.4zM239.1 164.4h2.4v2.4h-2.4zM233.8 182.9h2.4v2.4h-2.4zM232.8 197.8h2.4v2.4h-2.4zM236.1 210.8h2.4v2.4h-2.4zM238.7 225.4h2.4v2.4h-2.4zM236.2 239.6h2.4v2.4h-2.4zM238.7 258.6h2.4v2.4h-2.4zM238.2 267.9h2.4v2.4h-2.4zM235.9 286.3h2.4v2.4h-2.4zM236.4 304.8h2.4v2.4h-2.4zM233.8 317.3h2.4v2.4h-2.4zM238.2 330.5h2.4v2.4h-2.4zM234.5 343.1h2.4v2.4h-2.4zM238.1 360.0h2.4v2.4h-2.4zM235.8 374.8h2.4v2.4h-2.4zM235.1 394.7h2.4v2.4h-2.4zM237.5 409.1h2.4v2.4h-2.4zM235.8 423.5h2.4v2.4h-2.4zM239.0 433.8h2.4v2.4h-2.4zM239.7 448.4h2.4v2.4h-2.4zM236.9 465.5h2.4v2.4h-2.4zM237.9 479.8h2.4v2.4h-2.4zM237.3 497.8h2.4v2.4h-2.4zM233.1 512.0h2.4v2.4h-2.4zM236.5 525.3h2.4v2.4h-2.4zM246.2 -16.6h2.4v2.4h-2.4zM250.6 1.0h2.4v2.4h-2.4zM251.7 14.7h2.4v2.4h-2.4zM251.1 28.8h2.4v2.4h-2.4zM247.1 43.1h2.4v2.4h-2.4zM251.3 64.1h2.4v2.4h-2.4zM248.3 75.1h2.4v2.4h-2.4zM251.3 90.9h2.4v2.4h-2.4zM246.4 106.8h2.4v2.4h-2.4zM249.2 123.2h2.4v2.4h-2.4zM250.6 140.0h2.4v2.4h-2.4zM246.8 154.7h2.4v2.4h-2.4zM247.4 168.0h2.4v2.4h-2.4zM248.8 181.1h2.4v2.4h-2.4zM245.4 194.7h2.4v2.4h-2.4zM249.4 208.6h2.4v2.4h-2.4zM248.0 224.9h2.4v2.4h-2.4zM249.0 239.0h2.4v2.4h-2.4zM250.3 255.2h2.4v2.4h-2.4zM245.5 274.9h2.4v2.4h-2.4zM250.8 288.1h2.4v2.4h-2.4zM251.3 298.6h2.4v2.4h-2.4zM246.1 312.9h2.4v2.4h-2.4zM247.0 333.1h2.4v2.4h-2.4zM246.1 349.7h2.4v2.4h-2.4zM248.6 363.8h2.4v2.4h-2.4zM249.4 376.6h2.4v2.4h-2.4zM248.0 392.5h2.4v2.4h-2.4zM248.2 408.7h2.4v2.4h-2.4zM247.1 418.2h2.4v2.4h-2.4zM249.3 433.8h2.4v2.4h-2.4zM246.4 455.0h2.4v2.4h-2.4zM250.8 465.0h2.4v2.4h-2.4zM248.2 481.4h2.4v2.4h-2.4zM247.2 494.8h2.4v2.4h-2.4zM246.8 509.2h2.4v2.4h-2.4zM246.3 529.0h2.4v2.4h-2.4zM263.3 -10.1h2.4v2.4h-2.4zM262.2 -1.1h2.4v2.4h-2.4zM261.3 19.4h2.4v2.4h-2.4zM262.2 33.7h2.4v2.4h-2.4zM259.4 43.6h2.4v2.4h-2.4zM264.8 61.2h2.4v2.4h-2.4zM264.2 76.8h2.4v2.4h-2.4zM259.9 92.8h2.4v2.4h-2.4zM261.0 103.7h2.4v2.4h-2.4zM263.4 125.0h2.4v2.4h-2.4zM263.9 137.6h2.4v2.4h-2.4zM263.4 153.5h2.4v2.4h-2.4zM257.6 169.4h2.4v2.4h-2.4zM257.8 178.1h2.4v2.4h-2.4zM262.3 193.6h2.4v2.4h-2.4zM263.2 214.9h2.4v2.4h-2.4zM263.0 223.6h2.4v2.4h-2.4zM259.6 243.5h2.4v2.4h-2.4zM262.1 256.2h2.4v2.4h-2.4zM259.6 268.8h2.4v2.4h-2.4zM260.0 285.3h2.4v2.4h-2.4zM259.8 303.4h2.4v2.4h-2.4zM259.0 314.5h2.4v2.4h-2.4zM261.4 330.9h2.4v2.4h-2.4zM260.9 342.9h2.4v2.4h-2.4zM261.0 363.6h2.4v2.4h-2.4zM264.3 378.4h2.4v2.4h-2.4zM260.2 392.4h2.4v2.4h-2.4zM260.3 406.0h2.4v2.4h-2.4zM264.7 421.4h2.4v2.4h-2.4zM262.6 436.0h2.4v2.4h-2.4zM262.3 451.8h2.4v2.4h-2.4zM257.8 464.4h2.4v2.4h-2.4zM262.9 481.5h2.4v2.4h-2.4zM263.5 493.8h2.4v2.4h-2.4zM257.9 512.6h2.4v2.4h-2.4zM262.0 527.2h2.4v2.4h-2.4zM276.0 -15.6h2.4v2.4h-2.4zM277.1 4.2h2.4v2.4h-2.4zM276.8 18.4h2.4v2.4h-2.4zM272.0 34.0h2.4v2.4h-2.4zM277.2 49.7h2.4v2.4h-2.4zM276.7 63.3h2.4v2.4h-2.4zM271.7 73.7h2.4v2.4h-2.4zM274.1 94.3h2.4v2.4h-2.4zM274.0 106.5h2.4v2.4h-2.4zM275.4 118.5h2.4v2.4h-2.4zM273.4 135.1h2.4v2.4h-2.4zM272.0 149.3h2.4v2.4h-2.4zM276.1 169.8h2.4v2.4h-2.4zM275.8 184.7h2.4v2.4h-2.4zM273.9 195.2h2.4v2.4h-2.4zM277.2 209.6h2.4v2.4h-2.4zM270.7 226.9h2.4v2.4h-2.4zM276.8 241.1h2.4v2.4h-2.4zM273.0 257.3h2.4v2.4h-2.4zM273.1 271.9h2.4v2.4h-2.4zM272.5 283.6h2.4v2.4h-2.4zM274.5 303.0h2.4v2.4h-2.4zM275.5 316.9h2.4v2.4h-2.4zM270.6 332.8h2.4v2.4h-2.4zM271.8 342.8h2.4v2.4h-2.4zM273.5 363.4h2.4v2.4h-2.4zM272.9 375.6h2.4v2.4h-2.4zM275.3 391.4h2.4v2.4h-2.4zM274.0 409.6h2.4v2.4h-2.4zM272.7 422.2h2.4v2.4h-2.4zM271.2 438.4h2.4v2.4h-2.4zM272.8 452.9h2.4v2.4h-2.4zM274.6 469.4h2.4v2.4h-2.4zM270.9 478.2h2.4v2.4h-2.4zM277.1 496.4h2.4v2.4h-2.4zM276.0 511.1h2.4v2.4h-2.4zM270.4 528.3h2.4v2.4h-2.4zM285.2 -13.8h2.4v2.4h-2.4zM287.3 2.3h2.4v2.4h-2.4zM288.3 17.0h2.4v2.4h-2.4zM284.2 33.1h2.4v2.4h-2.4zM283.4 49.1h2.4v2.4h-2.4zM289.9 63.6h2.4v2.4h-2.4zM285.9 75.4h2.4v2.4h-2.4zM289.2 87.7h2.4v2.4h-2.4zM289.3 104.6h2.4v2.4h-2.4zM285.3 119.8h2.4v2.4h-2.4zM285.5 138.0h2.4v2.4h-2.4zM290.0 150.6h2.4v2.4h-2.4zM284.3 164.7h2.4v2.4h-2.4zM287.0 182.8h2.4v2.4h-2.4zM287.7 197.0h2.4v2.4h-2.4zM287.8 212.4h2.4v2.4h-2.4zM289.1 227.5h2.4v2.4h-2.4zM289.9 242.4h2.4v2.4h-2.4zM288.2 253.0h2.4v2.4h-2.4zM288.5 273.3h2.4v2.4h-2.4zM285.8 283.7h2.4v2.4h-2.4zM283.5 299.7h2.4v2.4h-2.4zM287.9 316.3h2.4v2.4h-2.4zM286.6 334.3h2.4v2.4h-2.4zM288.5 346.8h2.4v2.4h-2.4zM282.6 358.0h2.4v2.4h-2.4zM287.0 373.9h2.4v2.4h-2.4zM286.9 391.9h2.4v2.4h-2.4zM287.8 408.7h2.4v2.4h-2.4zM285.8 420.0h2.4v2.4h-2.4zM289.9 435.7h2.4v2.4h-2.4zM285.4 451.5h2.4v2.4h-2.4zM287.7 463.2h2.4v2.4h-2.4zM285.4 478.3h2.4v2.4h-2.4zM288.0 499.3h2.4v2.4h-2.4zM289.5 512.0h2.4v2.4h-2.4zM285.6 528.9h2.4v2.4h-2.4z" fill="#ff9a1a"/>
<ellipse cx="135" cy="50" rx="40" ry="30" fill="#f7961e" opacity="0.6"/>
<ellipse cx="136" cy="105" rx="25" ry="35" fill="#f7961e" opacity="0.3"/>
<rect x="95" y="355" width="90" height="65" fill="#f7961e" opacity="0.7"/>
<ellipse cx="20" cy="165" rx="14" ry="22" fill="#f7961e" opacity="0.7"/>
<ellipse cx="255" cy="165" rx="14" ry="22" fill="#f7961e" opacity="0.7"/>
</g>
<polygon points="121.5,7.6 148.8,6.7 150.7,14.4 155.6,20.3 180.8,24.2 194.4,41.7 206.1,61.1 221.7,78.6 231.4,96.1 245.0,121.4 252.8,142.8 262.5,150.6 263.5,164.2 258.6,177.8 248.9,166.1 239.2,146.7 227.5,119.4 213.9,100.0 192.5,74.7 175.0,55.3 173.0,59.2 167.2,78.6 163.3,96.1 165.3,111.7 173.0,117.5 178.9,131.1 184.7,150.6 185.7,164.2 182.8,192.0 177.8,223.3 171.1,256.7 175.6,283.3 171.1,341.1 172.2,378.9 177.8,396.7 178.9,410.0 163.3,415.6 152.2,414.4 147.8,403.3 153.3,378.9 153.3,323.3 147.8,285.6 151.1,263.3 147.8,234.4 141.1,192.0 136.0,180.0 132.2,192.0 128.9,223.3 121.1,263.3 122.2,301.1 118.9,345.6 120.0,378.9 130.0,398.9 128.9,410.0 116.7,415.6 103.3,414.4 100.0,401.1 103.3,378.9 102.2,334.4 97.8,305.6 95.6,278.9 100.0,252.2 96.7,223.3 92.2,192.0 88.5,166.1 95.3,135.0 101.1,117.5 108.9,113.6 111.8,98.0 108.9,82.5 103.1,65.0 95.3,55.3 81.7,68.9 64.2,92.2 50.6,115.6 36.0,138.9 29.2,166.1 21.4,166.1 14.6,177.8 9.7,164.2 10.7,154.4 21.4,142.8 27.2,127.2 38.9,100.0 48.6,82.5 64.2,59.2 75.8,41.7 91.4,22.2 116.7,16.4" fill="none" stroke="#ff9a1a" stroke-width="2.2" stroke-linejoin="round"/><polygon points="121.5,7.6 148.8,6.7 150.7,14.4 155.6,20.3 180.8,24.2 194.4,41.7 206.1,61.1 221.7,78.6 231.4,96.1 245.0,121.4 252.8,142.8 262.5,150.6 263.5,164.2 258.6,177.8 248.9,166.1 239.2,146.7 227.5,119.4 213.9,100.0 192.5,74.7 175.0,55.3 173.0,59.2 167.2,78.6 163.3,96.1 165.3,111.7 173.0,117.5 178.9,131.1 184.7,150.6 185.7,164.2 182.8,192.0 177.8,223.3 171.1,256.7 175.6,283.3 171.1,341.1 172.2,378.9 177.8,396.7 178.9,410.0 163.3,415.6 152.2,414.4 147.8,403.3 153.3,378.9 153.3,323.3 147.8,285.6 151.1,263.3 147.8,234.4 141.1,192.0 136.0,180.0 132.2,192.0 128.9,223.3 121.1,263.3 122.2,301.1 118.9,345.6 120.0,378.9 130.0,398.9 128.9,410.0 116.7,415.6 103.3,414.4 100.0,401.1 103.3,378.9 102.2,334.4 97.8,305.6 95.6,278.9 100.0,252.2 96.7,223.3 92.2,192.0 88.5,166.1 95.3,135.0 101.1,117.5 108.9,113.6 111.8,98.0 108.9,82.5 103.1,65.0 95.3,55.3 81.7,68.9 64.2,92.2 50.6,115.6 36.0,138.9 29.2,166.1 21.4,166.1 14.6,177.8 9.7,164.2 10.7,154.4 21.4,142.8 27.2,127.2 38.9,100.0 48.6,82.5 64.2,59.2 75.8,41.7 91.4,22.2 116.7,16.4" fill="none" stroke="#ff9a1a" stroke-width="4.5" stroke-dasharray="2.5 3.5" opacity="0.9"/>
</svg>
<svg width="120" height="100" style="left:880px;top:220px">
<circle cx="26.5" cy="21.5" r="13.5" fill="none" stroke="#fff" stroke-width="1.3"/>
<path d="M40 21.5 H92" stroke="#e01010" stroke-width="1.5"/><path d="M92 16.5 L108 21.5 L92 26.5 Z" fill="#e01010"/>
<path d="M26.5 35 V88" stroke="#10d010" stroke-width="1.5"/><path d="M21.5 86 L26.5 105 L31.5 86 Z" fill="#10d010"/>
</svg>
<svg width="50" height="50" style="left:910px;top:68px">
<circle cx="25" cy="25" r="9" fill="none" stroke="#fff" stroke-width="1.2"/>
<circle cx="25" cy="25" r="9" fill="none" stroke="#e02020" stroke-width="1.2" stroke-dasharray="3.5 3.5"/>
<path d="M25 5 V20 M25 30 V45 M5 25 H20 M30 25 H45" stroke="#000" stroke-width="1.2"/>
</svg>
<div style="position:absolute;left:8px;top:558px;width:13px;height:14px;background:#2c2c2c;border-radius:0 3px 3px 0"></div>
<svg width="10" height="10" style="left:9px;top:560px"><path d="M5 1.5 V8.5 M1.5 5 H8.5" stroke="#777" stroke-width="2"/></svg>
<div style="position:absolute;left:1643px;top:559px;width:14px;height:14px;background:#2c2c2c;border-radius:3px"></div>
<svg width="10" height="10" style="left:1645px;top:561px"><path d="M5 1.5 V8.5 M1.5 5 H8.5" stroke="#777" stroke-width="2"/></svg>
<svg width="14" height="14" style="left:1645px;top:536px"><path d="M1.5 0 L14 12.5 M5.5 0 L14 8.5 M9.5 0 L14 4.5" stroke="#111" stroke-width="1"/><path d="M0.5 1 L13 13.5 M4.5 1 L13 9.5 M8.5 1 L13 5.5" stroke="#d0d0d0" stroke-width="1"/></svg>
<svg width="645" height="323" style="left:632px;top:587px">
<defs>
<pattern id="mesh" width="12" height="12" patternUnits="userSpaceOnUse"><path d="M0 0 H12 M0 0 V12 M0 12 L12 0 M0 6 H12" stroke="#ff8c00" stroke-width="1.4" fill="none"/><rect x="-1.5" y="-1.5" width="3" height="3" fill="#ff8c00"/><rect x="4.5" y="4.5" width="3" height="3" fill="#ff8c00"/></pattern>
<pattern id="mesh2" width="11" height="13" patternUnits="userSpaceOnUse"><path d="M0 0 H11 M0 0 V13 M0 13 L11 0" stroke="#ff8c00" stroke-width="1.6" fill="none"/><rect x="-1" y="-1" width="3" height="3" fill="#ff8c00"/></pattern>
</defs>
<rect x="0" y="0" width="444" height="323" fill="#cbcbcb"/><rect x="443" y="0" width="202" height="323" fill="#000"/>
<polygon points="26.3,1.9 53.1,6.7 58.6,23.2 68.8,31.8 67.3,50.0 61.0,92.4 54.7,111.3 53.9,126.3 25.5,129.4 12.2,125.5 5.1,98.7 1.9,32.6 11.4,26.3" fill="#3a220e" stroke="#000" stroke-width="2" stroke-linejoin="round"/>
<polygon points="78.3,11.4 121.6,11.4 128.6,45.2 136.5,81.4 151.5,117.6 161.7,136.5 143.3,156.2 133.5,166.0 111.9,174.8 96.2,166.0 86.3,148.3 72.6,140.5 52.3,137.3 67.3,112.9 69.6,61.0 78.3,23.2" fill="#3a220e" stroke="#000" stroke-width="2" stroke-linejoin="round"/>
<polygon points="139.7,5.1 149.1,5.1 152.3,34.2 149.1,44.4 141.2,46.8 133.4,42.1 133.4,34.2 138.9,18.5" fill="#3a220e" stroke="#000" stroke-width="2" stroke-linejoin="round"/>
<polygon points="2.9,138.5 9.8,135.6 41.2,135.6 42.2,145.4 51.0,147.4 52.0,175.8 54.0,194.5 47.1,197.4 47.1,209.2 25.5,210.2 22.5,204.3 5.9,200.4 2.9,195.5" fill="#3a220e" stroke="#000" stroke-width="2" stroke-linejoin="round"/>
<polygon points="55.9,187.6 85.4,187.6 86.3,199.4 101.1,209.2 100.1,228.8 70.6,228.8 56.9,219.0" fill="#3a220e" stroke="#000" stroke-width="2" stroke-linejoin="round"/>
<polygon points="99.1,175.8 109.9,181.7 125.6,183.7 151.1,176.8 160.9,191.5 149.2,205.3 139.3,224.9 115.8,226.9 104.0,205.3 94.2,190.5" fill="#3a220e" stroke="#000" stroke-width="2" stroke-linejoin="round"/>
<polygon points="7.5,224.2 49.6,229.3 114.9,230.2 161.3,230.2 160.4,238.8 160.4,252.5 114.9,264.6 116.6,276.6 133.8,281.8 159.6,311.8 151.0,321.3 108.0,319.6 84.0,314.4 42.7,311.0 8.3,317.8 2.3,309.3 1.4,292.0 23.8,273.2 2.3,250.0" fill="#3a220e" stroke="#000" stroke-width="2" stroke-linejoin="round"/>
<polygon points="187.3,1.9 214.1,6.7 219.6,23.2 229.8,31.8 228.3,50.0 222.0,92.4 215.7,111.3 214.9,126.3 186.5,129.4 173.2,125.5 166.1,98.7 162.9,32.6 172.4,26.3" fill="#3a220e" stroke="#000" stroke-width="2" stroke-linejoin="round"/>
<polygon points="239.3,11.4 282.6,11.4 289.6,45.2 297.5,81.4 312.5,117.6 322.7,136.5 304.3,156.2 294.5,166.0 272.9,174.8 257.2,166.0 247.3,148.3 233.6,140.5 213.3,137.3 228.3,112.9 230.6,61.0 239.3,23.2" fill="#3a220e" stroke="#000" stroke-width="2" stroke-linejoin="round"/>
<polygon points="300.7,5.1 310.1,5.1 313.3,34.2 310.1,44.4 302.2,46.8 294.4,42.1 294.4,34.2 299.9,18.5" fill="#3a220e" stroke="#000" stroke-width="2" stroke-linejoin="round"/>
<polygon points="163.9,138.5 170.8,135.6 202.2,135.6 203.2,145.4 212.0,147.4 213.0,175.8 215.0,194.5 208.1,197.4 208.1,209.2 186.5,210.2 183.5,204.3 166.9,200.4 163.9,195.5" fill="#3a220e" stroke="#000" stroke-width="2" stroke-linejoin="round"/>
<polygon points="216.9,187.6 246.4,187.6 247.3,199.4 262.1,209.2 261.1,228.8 231.6,228.8 217.9,219.0" fill="#3a220e" stroke="#000" stroke-width="2" stroke-linejoin="round"/>
<polygon points="260.1,175.8 270.9,181.7 286.6,183.7 312.1,176.8 321.9,191.5 310.2,205.3 300.3,224.9 276.8,226.9 265.0,205.3 255.2,190.5" fill="#3a220e" stroke="#000" stroke-width="2" stroke-linejoin="round"/>
<polygon points="168.5,224.2 210.6,229.3 275.9,230.2 322.3,230.2 321.4,238.8 321.4,252.5 275.9,264.6 277.6,276.6 294.8,281.8 320.6,311.8 312.0,321.3 269.0,319.6 245.0,314.4 203.7,311.0 169.3,317.8 163.3,309.3 162.4,292.0 184.8,273.2 163.3,250.0" fill="#3a220e" stroke="#000" stroke-width="2" stroke-linejoin="round"/>
<defs><path id="clLp" d="M-8 -7 -2 -6 7 -7 18 -11 28 -7 36 -8 42 -9 49 -7 61 -10 66 -8 76 -7 84 -8 94 -10 104 -8 113 -10 119 -7 129 -10 138 -7 144 -10 151 -10 164 -6 172 -8 180 -9 189 -8 198 -8 205 -9 211 -7 222 -11 228 -6 236 -6 244 -7 252 -9 262 -9 274 -8 282 -9 289 -10 298 -9 304 -7 316 -8 324 -8 334 -7 M-10 0 1 0 10 -2 16 2 24 0 33 1 44 0 52 2 62 -2 68 -2 77 1 88 3 92 1 102 -0 111 -1 121 0 128 -1 134 2 143 0 155 1 160 -1 169 -2 177 -0 188 2 197 -1 204 0 211 -2 221 -2 230 1 236 2 249 -2 254 -0 261 2 271 -2 278 0 290 -1 295 2 307 0 315 -0 323 1 334 -2 M-6 11 1 7 7 10 19 8 28 6 35 9 43 9 53 8 59 8 68 9 78 7 87 9 96 10 101 8 110 8 119 8 127 8 138 8 143 11 153 6 163 7 172 9 179 7 187 7 197 7 202 10 211 10 219 7 230 7 237 9 247 6 256 8 264 9 272 6 282 8 287 6 295 7 307 7 315 11 322 10 330 9 M-10 16 2 19 10 16 18 18 24 18 33 17 40 19 49 16 62 14 70 18 77 16 86 16 96 18 103 15 111 19 119 17 128 16 138 15 143 15 151 20 159 18 168 16 180 18 185 17 196 16 203 17 214 17 221 14 228 18 237 18 246 20 256 17 264 19 272 16 281 15 289 15 298 18 303 16 313 15 325 19 330 19 M-11 25 1 25 7 25 17 27 23 27 32 24 40 26 48 26 60 26 67 26 77 24 84 28 96 24 101 27 108 25 117 28 126 26 135 27 143 24 153 26 160 23 170 23 177 27 188 25 194 26 204 27 211 24 221 25 229 27 239 28 246 25 254 27 264 25 272 24 279 26 287 26 300 28 305 24 315 23 322 25 333 24 M-11 34 2 35 9 32 15 36 26 35 32 35 45 34 49 32 58 35 67 35 78 33 85 33 92 33 103 34 112 33 119 35 129 33 136 34 147 34 154 35 162 36 168 35 180 34 186 35 194 35 203 36 211 33 222 35 231 34 238 33 245 32 255 33 265 35 272 36 280 34 289 32 296 36 305 35 314 33 325 35 333 36 M-8 41 1 45 10 43 15 44 26 45 36 41 42 44 50 42 61 44 69 43 79 41 84 41 94 42 101 41 110 45 119 44 130 42 135 41 146 44 154 43 160 44 172 42 179 42 188 44 198 45 204 44 212 42 222 45 231 43 239 40 244 40 254 45 263 40 270 40 283 41 287 42 296 44 305 41 313 41 321 43 333 45 M-8 51 1 50 10 50 18 51 25 51 32 52 45 52 52 51 57 53 66 52 78 53 83 52 91 49 102 50 109 51 118 53 127 50 134 51 142 52 153 51 162 53 168 51 176 49 188 52 194 49 205 49 213 49 221 49 232 51 239 49 248 52 257 52 266 49 270 49 278 50 287 49 295 52 308 49 313 51 324 51 330 52 M-11 60 0 58 11 61 18 59 23 60 33 60 40 61 51 57 59 61 68 61 78 60 84 59 92 59 103 61 112 60 121 58 130 58 136 57 146 58 155 62 161 59 171 61 180 59 187 59 196 61 204 58 211 61 223 57 232 60 240 61 244 57 254 59 263 61 274 58 282 58 289 58 300 58 307 58 314 60 323 62 331 61 M-10 68 -2 69 8 70 18 66 25 70 32 66 40 69 50 67 60 66 66 69 77 67 87 66 93 68 103 69 108 70 119 66 128 68 137 66 147 68 152 67 162 67 172 69 179 69 188 69 197 70 203 68 211 68 223 69 231 70 239 68 249 70 257 67 262 67 273 69 279 68 288 69 300 70 305 69 316 67 323 67 333 66 M-10 77 1 79 10 78 17 78 28 75 35 77 45 75 52 74 61 77 70 77 78 78 87 76 94 78 104 77 108 74 120 77 130 74 134 78 145 79 155 75 161 75 171 74 180 77 186 76 196 76 203 79 213 77 219 76 231 76 236 75 245 79 254 76 262 75 272 78 280 77 291 74 297 75 305 77 317 78 323 76 331 75 M-9 83 2 85 6 83 19 84 23 83 36 87 43 86 52 86 59 86 66 87 77 85 87 87 93 87 101 84 111 83 117 87 130 84 135 83 143 87 154 84 163 85 171 87 178 85 185 86 195 86 203 84 215 84 221 85 228 83 240 83 247 84 255 83 264 84 270 83 281 84 290 87 299 85 306 86 317 86 325 83 332 85 M-8 95 -2 93 10 93 16 96 24 95 33 94 41 92 51 91 59 91 68 92 79 94 86 91 93 93 100 94 110 95 121 92 129 92 135 92 143 94 153 93 160 96 170 92 177 95 185 93 197 95 204 92 210 91 222 91 232 92 237 91 245 91 254 91 261 96 272 92 280 96 287 91 296 95 307 92 313 93 325 95 334 93 M-9 101 2 103 9 100 16 100 26 102 34 102 40 100 50 101 62 101 69 104 74 100 86 102 93 103 103 103 111 102 120 100 129 101 134 104 142 101 151 100 160 100 172 103 179 100 189 104 194 101 206 104 215 102 221 100 231 102 238 103 245 100 255 100 262 102 273 102 280 103 291 103 300 103 304 104 315 103 325 101 331 103 M-9 113 -0 110 11 111 18 110 25 108 33 113 41 109 50 109 58 108 66 111 78 111 84 111 95 110 100 112 113 108 120 110 126 109 134 112 143 112 152 110 161 111 170 108 180 113 188 112 193 109 205 112 211 110 221 112 229 113 236 108 246 111 254 110 264 111 273 111 283 109 287 112 297 110 306 110 315 113 325 111 329 109 M-6 120 -1 117 10 117 18 119 25 122 35 117 44 120 53 120 61 121 69 121 77 119 86 118 93 117 103 118 113 120 117 118 126 121 136 118 147 117 153 119 162 120 170 119 181 120 188 121 195 121 203 119 211 120 223 117 230 117 237 120 246 118 255 118 263 119 272 118 279 117 288 121 299 121 305 121 314 121 321 119 331 118 M-6 129 -2 130 8 125 17 127 27 128 35 130 44 128 53 129 59 129 66 128 74 129 85 126 92 125 102 125 111 125 119 125 127 127 138 128 142 128 153 126 161 129 171 130 179 130 185 128 198 129 203 129 211 128 222 125 231 125 237 126 248 128 255 125 265 128 274 125 279 129 291 125 297 127 306 126 316 129 324 128 330 127 M-9 134 1 134 10 136 16 138 24 138 36 136 44 134 50 138 59 135 69 137 76 136 83 137 93 134 103 134 112 135 121 136 129 136 134 135 147 138 154 137 162 134 170 136 180 135 186 135 196 136 205 134 214 135 223 135 230 138 236 137 249 135 253 135 262 135 273 138 279 134 291 137 300 139 305 136 312 138 325 136 331 134 M-8 145 -0 142 6 142 18 146 25 145 32 146 43 142 51 143 58 143 70 145 76 143 87 142 94 146 101 146 110 145 119 147 128 143 137 144 146 146 153 144 163 142 170 145 180 147 189 146 194 146 202 144 215 144 219 145 229 146 240 144 245 146 255 147 263 144 273 142 280 146 289 145 297 142 306 143 316 144 322 145 332 145 M-9 152 -1 154 9 151 19 152 24 152 36 154 42 155 52 152 60 152 69 154 79 155 86 154 93 153 103 152 110 155 121 154 126 151 135 152 145 151 151 151 161 154 171 152 178 152 186 153 195 154 204 153 215 152 219 155 227 152 240 151 245 155 253 155 265 153 274 155 280 153 290 154 300 154 305 151 317 153 322 152 329 153 M-9 161 1 161 7 161 19 163 25 161 34 161 42 160 53 163 57 162 66 163 74 159 86 161 93 164 104 162 113 161 120 163 127 161 135 161 147 162 152 161 164 161 170 163 179 160 188 162 196 161 203 159 212 163 223 164 232 163 238 162 245 163 253 162 265 162 274 162 279 164 287 162 298 163 308 161 317 164 321 163 331 161 M-10 169 -1 171 8 170 17 170 23 171 35 168 41 169 50 170 59 169 68 168 76 172 84 169 96 171 104 170 109 170 120 171 128 169 139 172 144 168 151 169 160 171 170 170 180 169 186 168 197 168 202 172 214 168 220 169 230 169 240 169 246 171 256 171 263 172 274 172 281 169 286 171 296 172 307 171 314 169 322 169 331 170 M-9 180 2 178 9 178 15 180 24 179 35 178 45 181 52 179 58 176 70 179 76 181 87 180 95 178 103 179 113 178 121 177 127 177 136 180 143 178 153 179 163 178 168 177 180 178 188 180 195 176 205 178 212 178 223 181 228 180 240 177 245 180 254 180 261 178 274 179 279 177 290 179 298 179 305 180 317 181 321 180 333 178 M-8 186 -2 185 9 185 15 187 26 188 32 189 44 189 51 186 60 187 69 185 76 187 87 186 94 186 100 185 110 185 121 186 127 187 134 188 147 188 154 187 162 188 168 189 177 189 186 185 195 187 203 185 212 187 223 189 228 188 237 185 245 188 253 186 263 186 274 186 279 189 290 185 296 185 306 186 316 186 324 188 333 185 M-10 195 -2 198 7 197 15 193 24 194 33 193 44 194 50 196 62 193 69 195 78 196 84 194 96 196 100 194 110 198 118 196 126 197 138 194 146 195 151 195 162 197 170 197 181 195 185 197 197 194 202 197 211 197 222 193 229 196 237 193 246 193 257 197 261 195 274 195 279 197 290 193 296 198 308 197 315 197 325 193 331 195 M-10 202 0 206 7 203 18 204 27 203 32 206 42 205 51 205 61 202 70 202 76 204 86 203 96 205 104 205 110 202 119 204 130 204 136 204 146 203 153 204 160 206 171 205 181 202 188 206 196 206 203 204 211 204 222 206 228 204 240 201 249 202 255 203 266 205 272 202 283 203 290 206 299 205 307 204 317 204 321 202 329 205 M-8 210 -2 211 7 212 18 214 24 215 32 214 44 213 52 212 58 210 67 210 77 212 86 214 91 212 103 215 111 214 121 210 127 215 134 215 143 213 153 212 159 212 168 212 178 212 186 213 194 210 202 214 214 211 219 211 231 212 240 213 244 215 255 212 262 214 270 212 278 211 290 210 300 211 306 211 316 211 323 215 329 215 M-9 220 1 223 6 219 19 219 23 223 36 219 42 219 49 222 60 220 66 220 75 220 85 219 94 223 100 222 110 219 117 219 126 219 135 221 143 223 155 222 163 221 169 218 179 220 188 222 196 219 202 220 213 222 220 222 230 220 236 220 248 219 257 219 265 223 273 223 278 222 291 222 299 221 308 222 313 222 323 223 331 223 M-7 231 -1 227 8 228 18 230 24 229 34 231 45 228 50 230 59 232 69 229 78 228 84 230 94 229 102 229 110 231 119 229 129 231 134 230 143 229 155 228 164 230 170 232 177 230 189 229 194 228 202 227 211 230 222 227 232 231 238 230 245 230 257 231 262 231 274 230 281 229 287 228 297 228 305 227 313 230 321 231 330 231 M-8 239 2 237 9 240 18 238 28 238 34 240 45 236 49 236 60 240 67 240 75 237 86 236 94 239 103 240 110 236 120 238 127 236 136 240 147 237 154 238 163 237 172 236 178 239 188 240 196 238 202 238 213 240 221 237 228 240 238 236 244 238 254 240 261 237 273 236 283 240 287 239 297 240 307 239 316 236 322 237 333 239 M-9 247 1 245 9 247 17 248 27 246 33 247 45 246 51 247 61 246 69 249 79 249 86 249 96 247 102 247 112 245 117 248 128 246 134 248 145 247 152 244 161 246 171 244 179 246 189 245 194 244 205 245 214 246 222 247 232 247 237 246 249 248 257 246 263 246 272 247 281 247 290 244 298 249 304 248 316 245 324 247 330 245 M-9 255 1 257 8 253 17 255 28 256 33 257 44 252 49 256 60 253 67 253 76 254 86 257 91 257 104 254 111 255 119 254 129 253 134 257 144 254 155 252 160 255 168 253 179 257 186 254 197 254 203 253 213 255 220 253 232 257 238 257 247 253 254 255 264 256 273 255 283 255 290 255 296 255 307 257 313 257 322 254 332 257 M-9 263 1 263 8 263 18 261 25 261 36 264 42 262 53 264 59 264 70 261 76 265 87 262 92 263 104 263 109 263 118 265 128 262 137 264 145 265 155 263 162 266 169 261 180 263 186 262 194 264 204 266 211 262 219 265 231 265 236 262 247 266 255 264 262 261 270 264 282 264 291 262 299 262 304 266 312 266 324 265 330 263 M-11 271 1 270 9 270 17 270 25 272 33 271 43 273 52 271 60 270 69 274 77 274 84 274 96 273 104 273 109 272 120 270 130 274 135 272 144 273 155 270 162 270 169 270 178 270 189 273 195 270 204 270 211 272 222 271 227 271 238 273 249 273 255 274 261 272 273 273 280 274 288 270 300 273 304 270 315 273 325 270 333 272 M-6 279 -1 280 7 282 15 278 24 281 34 279 42 282 49 280 57 282 69 281 78 282 84 279 94 280 103 283 109 283 118 283 128 281 137 280 143 280 151 280 161 280 171 282 180 283 188 281 194 283 205 279 213 278 223 278 231 282 237 280 247 282 254 283 266 281 274 282 281 278 290 282 297 282 305 281 313 279 325 282 330 278 M-8 290 2 287 7 289 16 288 24 289 34 288 45 287 49 289 61 290 67 288 78 289 86 289 93 288 102 288 112 290 118 287 129 291 134 290 147 287 154 290 160 289 170 287 180 291 185 289 197 287 202 290 210 288 223 287 228 289 240 287 244 287 255 287 263 291 271 289 278 288 288 290 300 291 306 288 313 289 322 287 331 287 M-7 297 2 299 11 296 17 298 26 298 33 297 43 298 52 296 58 299 66 297 75 299 83 300 95 297 102 297 109 300 117 295 126 297 137 296 147 295 152 298 161 299 169 295 177 297 186 296 194 296 202 296 212 297 222 296 229 299 236 296 247 298 253 298 266 300 270 298 279 296 289 298 299 297 305 298 314 299 324 295 333 296 M-8 304 2 305 7 307 19 306 27 307 36 304 43 305 53 306 60 304 68 305 79 307 85 309 92 304 104 304 113 304 117 306 129 305 135 308 146 305 153 304 161 308 172 306 177 304 189 306 196 308 206 308 210 304 219 305 229 307 239 305 248 305 257 304 262 304 270 306 278 308 288 305 298 308 305 304 314 305 326 305 333 309 M-11 313 -2 313 9 315 19 314 25 314 33 313 44 313 49 315 58 315 70 317 75 317 84 312 92 317 103 315 109 313 121 317 127 317 135 312 146 313 151 313 160 317 168 315 178 315 188 313 196 312 203 314 212 313 222 315 230 314 237 315 247 314 257 312 262 317 274 315 280 314 290 312 299 314 308 316 315 316 323 315 334 313 M-10 321 2 325 6 323 18 323 27 322 32 323 44 323 51 322 62 323 67 324 79 325 87 322 92 322 100 324 109 324 121 322 127 323 138 322 143 321 155 322 160 324 169 324 180 325 184 322 198 321 203 323 212 325 222 322 232 325 238 322 248 321 257 321 265 323 272 322 282 321 290 321 297 325 306 325 315 324 321 324 330 322 M-10 332 1 331 6 330 18 330 27 334 36 334 41 333 51 334 58 333 70 332 77 334 87 331 94 330 102 331 113 332 120 329 126 330 135 332 142 331 153 330 160 330 170 332 177 333 185 334 195 332 204 330 210 333 223 329 228 331 240 331 246 333 255 333 264 331 270 330 279 333 287 330 298 334 307 329 317 330 325 332 330 329 M-8 -7 -10 0 -6 11 -10 16 -11 25 -11 34 -8 41 -8 51 -11 60 -10 68 -10 77 -9 83 -8 95 -9 101 -9 113 -6 120 -6 129 -9 134 -8 145 -9 152 -9 161 -10 169 -9 180 -8 186 -10 195 -10 202 -8 210 -9 220 -7 231 -8 239 -9 247 -9 255 -9 263 -11 271 -6 279 -8 290 -7 297 -8 304 -11 313 -10 321 -10 332 M-2 -6 1 0 1 7 2 19 1 25 2 35 1 45 1 50 0 58 -2 69 1 79 2 85 -2 93 2 103 -0 110 -1 117 -2 130 1 134 -0 142 -1 154 1 161 -1 171 2 178 -2 185 -2 198 0 206 -2 211 1 223 -1 227 2 237 1 245 1 257 1 263 1 270 -1 280 2 287 2 299 2 305 -2 313 2 325 1 331 M7 -7 10 -2 7 10 10 16 7 25 9 32 10 43 10 50 11 61 8 70 10 78 6 83 10 93 9 100 11 111 10 117 8 125 10 136 6 142 9 151 7 161 8 170 9 178 9 185 7 197 7 203 7 212 6 219 8 228 9 240 9 247 8 253 8 263 9 270 7 282 7 289 11 296 7 307 9 315 6 323 6 330 M18 -11 16 2 19 8 18 18 17 27 15 36 15 44 18 51 18 59 18 66 17 78 19 84 16 96 16 100 18 110 18 119 17 127 16 138 18 146 19 152 19 163 17 170 15 180 15 187 15 193 18 204 18 214 19 219 18 230 18 238 17 248 17 255 18 261 17 270 15 278 16 288 17 298 19 306 19 314 18 323 18 330 M28 -7 24 0 28 6 24 18 23 27 26 35 26 45 25 51 23 60 25 70 28 75 23 83 24 95 26 102 25 108 25 122 27 128 24 138 25 145 24 152 25 161 23 171 24 179 26 188 24 194 27 203 24 215 23 223 24 229 28 238 27 246 28 256 25 261 25 272 24 281 24 289 26 298 27 307 25 314 27 322 27 334 M36 -8 33 1 35 9 33 17 32 24 32 35 36 41 32 52 33 60 32 66 35 77 36 87 33 94 34 102 33 113 35 117 35 130 36 136 32 146 36 154 34 161 35 168 35 178 32 189 33 193 32 206 32 214 36 219 34 231 34 240 33 247 33 257 36 264 33 271 34 279 34 288 33 297 36 304 33 313 32 323 36 334 M42 -9 44 0 43 9 40 19 40 26 45 34 42 44 45 52 40 61 40 69 45 75 43 86 41 92 40 100 41 109 44 120 44 128 44 134 43 142 42 155 42 160 41 169 45 181 44 189 44 194 42 205 44 213 42 219 45 228 45 236 45 246 44 252 42 262 43 273 42 282 45 287 43 298 43 305 44 313 44 323 41 333 M49 -7 52 2 53 8 49 16 48 26 49 32 50 42 52 51 51 57 50 67 52 74 52 86 51 91 50 101 50 109 53 120 53 129 50 138 51 143 52 152 53 163 50 170 52 179 51 186 50 196 51 205 52 212 49 222 50 230 49 236 51 247 49 256 53 264 52 271 49 280 49 289 52 296 53 306 49 315 51 322 51 334 M61 -10 62 -2 59 8 62 14 60 26 58 35 61 44 57 53 59 61 60 66 61 77 59 86 59 91 62 101 58 108 61 121 59 129 59 135 58 143 60 152 57 162 59 169 58 176 60 187 62 193 61 202 58 210 60 220 59 232 60 240 61 246 60 253 59 264 60 270 57 282 61 290 58 299 60 304 58 315 62 323 58 333 M66 -8 68 -2 68 9 70 18 67 26 67 35 69 43 66 52 68 61 66 69 70 77 66 87 68 92 69 104 66 111 69 121 66 128 69 137 70 145 69 154 66 163 68 168 70 179 69 185 69 195 70 202 67 210 66 220 69 229 67 240 69 249 67 253 70 261 69 274 69 281 67 288 66 297 68 305 70 317 67 324 70 332 M76 -7 77 1 78 7 77 16 77 24 78 33 79 41 78 53 78 60 77 67 78 78 77 85 79 94 74 100 78 111 77 119 74 129 76 136 76 143 79 155 74 159 76 172 76 181 76 187 78 196 76 204 77 212 75 220 78 228 75 237 79 249 76 254 76 265 77 274 78 282 78 289 75 299 79 307 75 317 79 325 77 334 M84 -8 88 3 87 9 86 16 84 28 85 33 84 41 83 52 84 59 87 66 87 76 87 87 86 91 86 102 84 111 86 118 85 126 83 137 87 142 86 154 86 161 84 169 87 180 87 186 84 194 86 203 86 214 85 219 84 230 86 236 86 249 86 257 87 262 84 274 84 279 86 289 83 300 85 309 84 312 87 322 87 331 M94 -10 92 1 96 10 96 18 96 24 92 33 94 42 91 49 92 59 93 68 94 78 93 87 93 93 93 103 95 110 93 117 92 125 93 134 94 146 93 153 93 164 96 171 95 178 94 186 96 196 96 205 91 212 94 223 94 229 94 239 96 247 91 257 92 263 96 273 94 280 93 288 95 297 92 304 92 317 92 322 94 330 M104 -8 102 -0 101 8 103 15 101 27 103 34 101 41 102 50 103 61 103 69 104 77 101 84 100 94 103 103 100 112 103 118 102 125 103 134 101 146 103 152 104 162 104 170 103 179 100 185 100 194 104 205 103 215 100 222 102 229 103 240 102 247 104 254 104 263 104 273 103 283 102 288 102 297 104 304 103 315 100 324 102 331 M113 -10 111 -1 110 8 111 19 108 25 112 33 110 45 109 51 112 60 108 70 108 74 111 83 110 95 111 102 113 108 113 120 111 125 112 135 110 145 110 155 113 161 109 170 113 178 110 185 110 198 110 202 111 214 110 219 110 231 110 236 112 245 111 255 109 263 109 272 109 283 112 290 109 300 113 304 109 313 109 324 113 332 M119 -7 121 0 119 8 119 17 117 28 119 35 119 44 118 53 121 58 119 66 120 77 117 87 121 92 120 100 120 110 117 118 119 125 121 136 119 147 121 154 120 163 120 171 121 177 121 186 118 196 119 204 121 210 117 219 119 229 120 238 117 248 119 254 118 265 120 270 118 283 118 287 117 295 117 306 121 317 121 322 120 329 M129 -10 128 -1 127 8 128 16 126 26 129 33 130 42 127 50 130 58 128 68 130 74 130 84 129 92 129 101 126 109 126 121 127 127 129 136 128 143 126 151 127 161 128 169 127 177 127 187 126 197 130 204 127 215 126 219 129 231 127 236 128 246 129 253 128 262 130 274 128 281 129 291 126 297 129 305 127 317 127 323 126 330 M138 -7 134 2 138 8 138 15 135 27 136 34 135 41 134 51 136 57 137 66 134 78 135 83 135 92 134 104 134 112 136 118 138 128 134 135 137 144 135 152 135 161 139 172 136 180 134 188 138 194 136 204 134 215 135 221 134 230 136 240 134 248 134 257 137 264 135 272 137 280 134 290 137 296 135 308 135 312 138 322 135 332 M144 -10 143 0 143 11 143 15 143 24 147 34 146 44 142 52 146 58 147 68 145 79 143 87 143 94 142 101 143 112 147 117 142 128 147 138 146 146 145 151 147 162 144 168 143 178 147 188 146 195 146 203 143 213 143 223 143 229 147 237 145 247 144 254 145 265 144 273 143 280 147 287 147 295 146 305 146 313 143 321 142 331 M151 -10 155 1 153 6 151 20 153 26 154 35 154 43 153 51 155 62 152 67 155 75 154 84 153 93 151 100 152 110 153 119 153 126 154 137 153 144 151 151 152 161 151 169 153 179 154 187 151 195 153 204 153 212 155 222 155 228 154 238 152 244 155 252 155 263 155 270 151 280 154 290 152 298 153 304 151 313 155 322 153 330 M164 -6 160 -1 163 7 159 18 160 23 162 36 160 44 162 53 161 59 162 67 161 75 163 85 160 96 160 100 161 111 162 120 161 129 162 134 163 142 161 154 164 161 160 171 163 178 162 188 162 197 160 206 159 212 163 221 164 230 163 237 161 246 160 255 162 266 162 270 161 280 160 289 161 299 161 308 160 317 160 324 160 330 M172 -8 169 -2 172 9 168 16 170 23 168 35 172 42 168 51 171 61 172 69 171 74 171 87 170 92 172 103 170 108 170 119 171 130 170 136 170 145 171 152 170 163 170 170 168 177 168 189 170 197 171 205 168 212 169 218 170 232 172 236 171 244 168 253 169 261 169 270 171 282 170 287 169 295 172 306 168 315 169 324 170 332 M180 -9 177 -0 179 7 180 18 177 27 180 34 179 42 176 49 180 59 179 69 180 77 178 85 177 95 179 100 180 113 181 120 179 130 180 135 180 147 178 152 179 160 180 169 180 178 177 189 181 195 181 202 178 212 179 220 177 230 178 239 179 246 179 257 180 263 178 270 180 283 180 291 177 297 177 304 178 315 180 325 177 333 M189 -8 188 2 187 7 185 17 188 25 186 35 188 44 188 52 187 59 188 69 186 76 185 86 185 93 189 104 188 112 188 121 185 128 186 135 189 146 186 153 188 162 186 168 188 180 186 185 185 197 188 206 186 213 188 222 189 229 188 240 189 245 186 254 186 262 189 273 188 281 185 289 186 296 189 306 188 313 184 322 185 334 M198 -8 197 -1 197 7 196 16 194 26 194 35 198 45 194 49 196 61 197 70 196 76 195 86 197 95 194 101 193 109 195 121 198 129 196 136 194 146 195 154 196 161 197 168 195 176 195 187 197 194 196 206 194 210 196 219 194 228 196 238 194 244 197 254 194 264 195 270 194 283 197 287 194 296 196 308 196 312 198 321 195 332 M205 -9 204 0 202 10 203 17 204 27 203 36 204 44 205 49 204 58 203 68 203 79 203 84 204 92 206 104 205 112 203 119 203 129 205 134 202 144 204 153 203 159 202 172 205 178 203 185 202 197 203 204 202 214 202 220 202 227 202 238 205 245 203 253 204 266 204 270 205 279 202 290 202 296 206 308 203 314 203 323 204 330 M211 -7 211 -2 211 10 214 17 211 24 211 33 212 42 213 49 211 61 211 68 213 77 215 84 210 91 215 102 211 110 211 120 211 128 214 135 215 144 215 152 212 163 214 168 212 178 212 187 211 197 211 204 214 211 213 222 211 230 213 240 214 246 213 255 211 262 211 272 213 278 210 288 212 297 210 304 212 313 212 325 210 333 M222 -11 221 -2 219 7 221 14 221 25 222 35 222 45 221 49 223 57 223 69 219 76 221 85 222 91 221 100 221 112 223 117 222 125 223 135 219 145 219 155 223 164 220 169 223 181 223 189 222 193 222 206 219 211 220 222 222 227 221 237 222 247 220 253 219 265 222 271 223 278 223 287 222 296 219 305 222 315 222 322 223 329 M228 -6 230 1 230 7 228 18 229 27 231 34 231 43 232 51 232 60 231 70 231 76 228 83 232 92 231 102 229 113 230 117 231 125 230 138 229 146 227 152 232 163 230 169 228 180 228 188 229 196 228 204 231 212 230 220 232 231 228 240 232 247 232 257 231 265 227 271 231 282 228 289 229 299 229 307 230 314 232 325 228 331 M236 -6 236 2 237 9 237 18 239 28 238 33 239 40 239 49 240 61 239 68 236 75 240 83 237 91 238 103 236 108 237 120 237 126 236 137 240 144 240 151 238 162 240 169 240 177 237 185 237 193 240 201 240 213 236 220 238 230 238 236 237 246 238 257 236 262 238 273 237 280 240 287 236 296 239 305 237 315 238 322 240 331 M244 -7 249 -2 247 6 246 20 246 25 245 32 244 40 248 52 244 57 249 70 245 79 247 84 245 91 245 100 246 111 246 118 248 128 249 135 245 146 245 155 245 163 246 171 245 180 245 188 246 193 249 202 244 215 248 219 245 230 244 238 249 248 247 253 247 266 249 273 247 282 244 287 247 298 248 305 247 314 248 321 246 333 M252 -9 254 -0 256 8 256 17 254 27 255 33 254 45 257 52 254 59 257 67 254 76 255 83 254 91 255 100 254 110 255 118 255 125 253 135 255 147 253 155 253 162 256 171 254 180 253 186 257 197 255 203 255 212 257 219 257 231 254 240 257 246 254 255 255 264 255 274 254 283 255 287 253 298 257 304 257 312 257 321 255 333 M262 -9 261 2 264 9 264 19 264 25 265 35 263 40 266 49 263 61 262 67 262 75 264 84 261 96 262 102 264 111 263 119 265 128 262 135 263 144 265 153 265 162 263 172 261 178 263 186 261 195 266 205 262 214 265 223 262 231 261 237 263 246 264 256 262 261 261 272 266 281 263 291 266 300 262 304 262 317 265 323 264 331 M274 -8 271 -2 272 6 272 16 272 24 272 36 270 40 270 49 274 58 273 69 272 78 270 83 272 92 273 102 273 111 272 118 274 125 273 138 273 142 274 155 274 162 274 172 274 179 274 186 274 195 272 202 270 212 273 223 274 230 273 236 272 247 273 255 270 264 273 273 274 282 271 289 270 298 270 306 274 315 272 322 270 330 M282 -9 278 0 282 8 281 15 279 26 280 34 283 41 278 50 282 58 279 68 280 77 281 84 280 96 280 103 283 109 279 117 279 129 279 134 280 146 280 153 279 164 281 169 279 177 279 189 279 197 283 203 278 211 278 222 281 229 283 240 281 247 283 255 282 264 280 274 281 278 278 288 279 296 278 308 280 314 282 321 279 333 M289 -10 290 -1 287 6 289 15 287 26 289 32 287 42 287 49 289 58 288 69 291 74 290 87 287 91 291 103 287 112 288 121 291 125 291 137 289 145 290 154 287 162 286 171 290 179 290 185 290 193 290 206 290 210 291 222 287 228 287 239 290 244 290 255 291 262 288 270 290 282 288 290 289 298 288 305 290 312 290 321 287 330 M298 -9 295 2 295 7 298 18 300 28 296 36 296 44 295 52 300 58 300 70 297 75 299 85 296 95 300 103 297 110 299 121 297 127 300 139 297 142 300 154 298 163 296 172 298 179 296 185 296 198 299 205 300 211 299 221 297 228 297 240 298 249 296 255 299 262 300 273 297 282 300 291 299 297 298 308 299 314 297 325 298 334 M304 -7 307 0 307 7 303 16 305 24 305 35 305 41 308 49 307 58 305 69 305 77 306 86 307 92 304 104 306 110 305 121 306 126 305 136 306 143 305 151 308 161 307 171 305 180 306 186 308 197 307 204 306 211 308 222 305 227 307 239 304 248 307 257 304 266 304 270 305 281 306 288 305 298 305 304 308 316 306 325 307 329 M316 -8 315 -0 315 11 313 15 315 23 314 33 313 41 313 51 314 60 316 67 317 78 317 86 313 93 315 103 315 113 314 121 316 129 312 138 316 144 317 153 317 164 314 169 317 181 316 186 315 197 317 204 316 211 313 222 313 230 316 236 316 245 313 257 312 266 315 273 313 279 313 289 314 299 314 305 315 316 315 324 317 330 M324 -8 323 1 322 10 325 19 322 25 325 35 321 43 324 51 323 62 323 67 323 76 325 83 325 95 325 101 325 111 321 119 324 128 325 136 322 145 322 152 321 163 322 169 321 180 324 188 325 193 321 202 323 215 323 223 321 231 322 237 324 247 322 254 324 265 325 270 325 282 322 287 324 295 326 305 323 315 321 324 325 332 M334 -7 334 -2 330 9 330 19 333 24 333 36 333 45 330 52 331 61 333 66 331 75 332 85 334 93 331 103 329 109 331 118 330 127 331 134 332 145 329 153 331 161 331 170 333 178 333 185 331 195 329 205 329 215 331 223 330 231 333 239 330 245 332 257 330 263 333 272 330 278 331 287 333 296 333 309 334 313 330 322 330 329 M-10 321 1 331 M-11 313 2 325 6 330 M-8 304 -2 313 6 323 18 330 M-7 297 2 305 9 315 18 323 27 334 M-8 290 2 299 7 307 19 314 27 322 36 334 M-6 279 2 287 11 296 19 306 25 314 32 323 41 333 M-11 271 -1 280 7 289 17 298 27 307 33 313 44 323 51 334 M-9 263 1 270 7 282 16 288 26 298 36 304 44 313 51 322 58 333 M-9 255 1 263 9 270 15 278 24 289 33 297 43 305 49 315 62 323 70 332 M-9 247 1 257 8 263 17 270 24 281 34 288 43 298 53 306 58 315 67 324 77 334 M-8 239 1 245 8 253 18 261 25 272 34 279 45 287 52 296 60 304 70 317 79 325 87 331 M-7 231 2 237 9 247 17 255 25 261 33 271 42 282 49 289 58 299 68 305 75 317 87 322 94 330 M-9 220 -1 227 9 240 17 248 28 256 36 264 43 273 49 280 61 290 66 297 79 307 84 312 92 322 102 331 M-8 210 1 223 8 228 18 238 27 246 33 257 42 262 52 271 57 282 67 288 75 299 85 309 92 317 100 324 113 332 M-10 202 -2 211 6 219 18 230 28 238 33 247 44 252 53 264 60 270 69 281 78 289 83 300 92 304 103 315 109 324 120 329 M-10 195 0 206 7 212 19 219 24 229 34 240 45 246 49 256 59 264 69 274 78 282 86 289 95 297 104 304 109 313 121 322 126 330 M-8 186 -2 198 7 203 18 214 23 223 34 231 45 236 51 247 60 253 70 261 77 274 84 279 93 288 102 297 113 304 121 317 127 323 135 332 M-9 180 -2 185 7 197 18 204 24 215 36 219 45 228 49 236 61 246 67 253 76 265 84 274 94 280 102 288 109 300 117 306 127 317 138 322 142 331 M-10 169 2 178 9 185 15 193 27 203 32 214 42 219 50 230 60 240 69 249 76 254 87 262 96 273 103 283 112 290 117 295 129 305 135 312 143 321 153 330 M-9 161 -1 171 9 178 15 187 24 194 32 206 44 213 49 222 59 232 67 240 79 249 86 257 92 263 104 273 109 283 118 287 126 297 135 308 146 313 155 322 160 330 M-9 152 1 161 8 170 15 180 26 188 33 193 42 205 52 212 60 220 69 229 75 237 86 249 91 257 104 263 109 272 118 283 129 291 137 296 146 305 151 313 160 324 170 332 M-8 145 -1 154 7 161 17 170 24 179 32 189 44 194 51 205 58 210 66 220 78 228 86 236 96 247 104 254 109 263 120 270 128 281 134 290 147 295 153 304 160 317 169 324 177 333 M-9 134 -0 142 9 151 19 163 23 171 35 178 44 189 50 196 61 202 67 210 75 220 84 230 94 239 102 247 111 255 118 265 130 274 137 280 147 287 152 298 161 308 168 315 180 325 185 334 M-6 129 1 134 6 142 19 152 25 161 35 168 45 181 51 186 62 193 70 202 77 212 85 219 94 229 103 240 112 245 119 254 128 262 135 272 143 280 154 290 161 299 172 306 178 315 184 322 195 332 M-6 120 -2 130 10 136 18 146 24 152 34 161 41 169 52 179 60 187 69 195 76 204 86 214 94 223 102 229 110 236 117 248 129 253 137 264 144 273 151 280 160 289 169 295 177 304 188 313 198 321 204 330 M-9 113 -1 117 8 125 16 138 25 145 36 154 42 160 50 170 58 176 69 185 78 196 86 203 91 212 100 222 110 231 120 238 128 246 134 257 145 265 155 270 161 280 170 287 177 297 189 306 196 312 203 323 210 333 M-9 101 -0 110 10 117 17 127 24 138 32 146 42 155 53 163 59 169 70 179 76 187 84 194 96 205 103 215 110 219 119 229 127 236 134 248 144 254 155 263 162 270 171 282 180 291 186 296 196 308 203 314 212 325 223 329 M-8 95 2 103 11 111 18 119 27 128 36 136 43 142 52 152 57 162 68 168 76 181 87 186 96 196 104 205 111 214 117 219 129 231 136 240 145 247 155 252 162 266 169 270 180 283 185 289 194 296 206 308 212 313 222 322 228 331 M-9 83 -2 93 9 100 18 110 25 122 35 130 44 134 51 143 60 152 66 163 76 172 87 180 94 186 100 194 110 202 121 210 126 219 134 230 147 237 152 244 160 255 169 261 178 270 188 281 197 287 202 296 210 304 222 315 232 325 240 331 M-10 77 2 85 10 93 16 100 25 108 35 117 44 128 50 138 58 143 69 154 74 159 84 169 95 178 100 185 110 198 119 204 127 215 135 221 143 229 154 238 161 246 168 253 180 263 189 273 194 283 202 290 212 297 219 305 230 314 238 322 246 333 M-10 68 1 79 6 83 16 96 26 102 33 113 44 120 53 129 59 135 70 145 79 155 86 161 96 171 103 179 110 185 118 196 130 204 134 215 143 223 155 228 163 237 171 244 179 257 186 262 195 270 205 279 210 288 222 296 229 307 237 315 248 321 255 333 M-11 60 -2 69 10 78 19 84 24 95 34 102 41 109 53 120 59 129 69 137 76 143 86 154 93 164 104 170 113 178 121 186 126 197 136 204 143 213 155 222 164 230 172 236 179 246 186 254 194 264 204 270 213 278 223 287 229 299 239 305 247 314 257 321 264 331 M-8 51 0 58 8 70 17 78 23 83 33 94 40 100 50 109 61 121 66 128 76 136 87 142 93 153 104 162 109 170 121 177 127 187 138 194 146 203 153 212 163 221 170 232 178 239 189 245 197 254 204 266 211 272 223 278 228 289 236 296 248 305 257 312 265 323 270 330 M-8 41 1 50 11 61 18 66 28 75 36 87 41 92 50 101 58 108 69 121 74 129 83 137 94 146 103 152 113 161 120 171 127 177 134 188 146 195 153 204 159 212 169 218 177 230 188 240 194 244 203 253 211 262 222 271 231 282 240 287 247 298 257 304 262 317 272 322 279 333 M-11 34 1 45 10 50 18 59 25 70 35 77 43 86 51 91 62 101 66 111 77 119 85 126 93 134 101 146 110 155 120 163 128 169 136 180 147 188 151 195 160 206 168 212 179 220 189 229 196 238 205 245 213 255 219 265 227 271 237 280 244 287 253 298 262 304 274 315 282 321 287 330 M-11 25 2 35 10 43 18 51 23 60 32 66 45 75 52 86 59 91 69 104 78 111 86 118 92 125 103 134 110 145 121 154 127 161 139 172 143 178 154 187 162 197 171 205 178 212 188 222 194 228 202 238 214 246 220 253 231 265 238 273 247 282 255 287 266 300 270 306 280 314 290 321 298 334 M-10 16 1 25 9 32 15 44 25 51 33 60 40 69 52 74 59 86 68 92 74 100 84 111 93 117 102 125 112 135 119 147 126 151 135 161 144 168 153 179 162 188 170 197 181 202 186 213 196 219 202 227 213 240 222 247 232 257 236 262 249 273 254 283 263 291 270 298 278 308 290 312 297 325 307 329 M-6 11 2 19 7 25 15 36 26 45 32 52 40 61 50 67 61 77 66 87 79 94 86 102 95 110 103 118 111 125 121 136 128 143 135 152 147 162 151 169 163 178 168 189 181 195 188 206 194 210 202 220 211 230 221 237 232 247 238 257 247 266 255 274 266 281 271 289 279 296 288 305 299 314 306 325 317 330 M-10 0 1 7 10 16 17 27 26 35 36 41 45 52 51 57 60 66 70 77 77 85 86 91 93 103 100 112 113 120 119 125 129 136 137 144 145 151 152 161 160 171 168 177 177 189 185 197 196 206 202 214 213 222 222 227 228 240 237 246 247 253 255 264 261 272 274 282 278 288 289 298 298 308 308 316 315 324 325 332 M-8 -7 1 0 7 10 18 18 23 27 32 35 42 44 52 51 59 61 66 69 78 78 87 87 93 93 103 103 113 108 117 118 127 127 134 135 146 146 151 151 164 161 170 170 180 178 186 185 197 194 203 204 214 211 220 222 232 231 238 236 249 248 254 255 262 261 273 273 281 278 288 290 299 297 305 304 315 316 321 324 330 329 M-2 -6 10 -2 19 8 24 18 32 24 45 34 50 42 57 53 68 61 77 67 87 76 93 87 100 94 111 102 120 110 126 121 138 128 147 138 153 144 161 154 170 163 180 169 188 180 195 187 202 197 211 204 219 211 230 220 238 230 244 238 257 246 264 256 270 264 280 274 290 282 300 291 305 298 314 305 323 315 330 322 M7 -7 16 2 28 6 33 17 40 26 49 32 61 44 66 52 78 60 87 66 94 78 101 84 110 95 120 100 126 109 136 118 142 128 154 137 163 142 171 152 179 160 186 168 195 176 203 185 211 197 222 206 231 212 236 220 245 230 254 240 263 246 273 255 282 264 288 270 297 282 306 288 314 299 326 305 334 313 M18 -11 24 0 35 9 40 19 48 26 58 35 69 43 78 53 84 59 93 68 104 77 111 83 121 92 129 101 134 112 147 117 153 126 162 134 170 145 178 152 188 162 197 168 205 178 212 187 222 193 228 204 240 213 248 219 257 231 261 237 272 247 283 255 291 262 300 273 305 281 313 289 324 295 333 309 M28 -7 33 1 43 9 49 16 60 26 67 35 79 41 83 52 92 59 103 69 108 74 117 87 129 92 134 104 143 112 153 119 161 129 170 136 180 147 186 153 196 161 202 172 212 178 223 189 229 196 240 201 244 215 257 219 262 231 273 236 281 247 290 255 299 262 304 270 313 279 322 287 333 296 M36 -8 44 0 53 8 62 14 67 26 78 33 84 41 91 49 103 61 108 70 120 77 130 84 135 92 142 101 152 110 162 120 171 130 180 135 189 146 195 154 203 159 214 168 223 181 228 188 237 193 249 202 255 212 265 223 274 230 283 240 290 244 296 255 304 266 315 273 325 282 331 287 M42 -9 52 2 59 8 70 18 77 24 85 33 94 42 102 50 112 60 119 66 130 74 135 83 143 94 151 100 161 111 170 119 179 130 186 135 194 146 204 153 212 163 220 169 228 180 237 185 246 193 255 203 262 214 273 223 281 229 287 239 298 249 307 257 312 266 325 270 330 278 M49 -7 62 -2 68 9 77 16 84 28 92 33 101 41 109 51 121 58 128 68 134 78 143 87 153 93 160 100 170 108 181 120 185 128 196 136 202 144 215 152 223 164 230 169 240 177 245 188 257 197 266 205 270 212 278 222 287 228 297 240 304 248 313 257 324 265 333 272 M61 -10 68 -2 78 7 86 16 96 24 103 34 110 45 118 53 130 58 137 66 145 79 154 84 160 96 172 103 180 113 188 121 198 129 205 134 215 144 219 155 232 163 240 169 245 180 253 186 261 195 272 202 278 211 291 222 297 228 307 239 316 245 322 254 330 263 M66 -8 77 1 87 9 96 18 101 27 112 33 119 44 127 50 136 57 147 68 155 75 163 85 170 92 179 100 188 112 195 121 203 129 214 135 219 145 227 152 238 162 246 171 254 180 263 186 274 195 283 203 290 210 299 221 305 227 316 236 324 247 332 257 M76 -7 88 3 96 10 103 15 108 25 119 35 130 42 134 51 146 58 152 67 161 75 171 87 177 95 189 104 193 109 203 119 211 128 223 135 229 146 240 151 245 163 256 171 261 178 274 186 279 197 290 206 300 211 308 222 313 230 322 237 330 245 M84 -8 92 1 101 8 111 19 117 28 129 33 135 41 142 52 155 62 162 67 171 74 178 85 185 93 194 101 205 112 211 120 222 125 230 138 240 144 245 155 253 162 263 172 274 179 279 189 290 193 299 205 306 211 313 222 321 231 333 239 M94 -10 102 -0 110 8 119 17 126 26 136 34 146 44 153 51 161 59 172 69 180 77 185 86 197 95 206 104 211 110 223 117 231 125 236 137 245 146 253 155 265 162 274 172 279 177 290 185 296 198 307 204 316 211 323 223 330 231 M104 -8 111 -1 119 8 128 16 135 27 147 34 154 43 162 53 171 61 179 69 186 76 195 86 204 92 215 102 221 112 230 117 237 126 249 135 255 147 265 153 274 162 281 169 290 179 296 185 308 197 317 204 323 215 331 223 M113 -10 121 0 127 8 138 15 143 24 154 35 160 44 168 51 180 59 188 69 196 76 203 84 210 91 221 100 229 113 237 120 248 128 253 135 263 144 274 155 279 164 286 171 298 179 306 186 315 197 321 202 329 215 M119 -7 128 -1 138 8 143 15 153 26 162 36 172 42 176 49 187 59 197 70 203 79 215 84 222 91 231 102 236 108 246 118 255 125 262 135 273 142 280 153 287 162 296 172 305 180 316 186 325 193 329 205 M129 -10 134 2 143 11 151 20 160 23 168 35 179 42 188 52 196 61 203 68 213 77 221 85 232 92 238 103 246 111 255 118 265 128 273 138 280 146 290 154 298 163 307 171 317 181 324 188 331 195 M138 -7 143 0 153 6 159 18 170 23 180 34 188 44 194 49 204 58 211 68 219 76 228 83 237 91 245 100 254 110 263 119 274 125 279 134 289 145 300 154 308 161 314 169 321 180 333 185 M144 -10 155 1 163 7 168 16 177 27 186 35 198 45 205 49 211 61 223 69 231 76 240 83 245 91 255 100 264 111 272 118 279 129 291 137 297 142 305 151 317 164 322 169 333 178 M151 -10 160 -1 172 9 180 18 188 25 194 35 204 44 213 49 223 57 231 70 236 75 247 84 254 91 262 102 273 111 279 117 291 125 300 139 306 143 317 153 321 163 331 170 M164 -6 169 -2 179 7 185 17 194 26 203 36 212 42 221 49 232 60 239 68 245 79 255 83 261 96 273 102 283 109 288 121 297 127 305 136 316 144 322 152 331 161 M172 -8 177 -0 187 7 196 16 204 27 211 33 222 45 232 51 240 61 249 70 254 76 264 84 272 92 280 103 287 112 299 121 306 126 312 138 322 145 329 153 M180 -9 188 2 197 7 203 17 211 24 222 35 231 43 239 49 244 57 257 67 262 75 270 83 280 96 291 103 297 110 305 121 316 129 325 136 332 145 M189 -8 197 -1 202 10 214 17 221 25 231 34 239 40 248 52 254 59 262 67 272 78 281 84 287 91 300 103 306 110 314 121 324 128 331 134 M198 -8 204 0 211 10 221 14 229 27 238 33 244 40 257 52 263 61 273 69 280 77 290 87 296 95 304 104 315 113 321 119 330 127 M205 -9 211 -2 219 7 228 18 239 28 245 32 254 45 266 49 274 58 279 68 291 74 299 85 307 92 315 103 325 111 331 118 M211 -7 221 -2 230 7 237 18 246 25 255 33 263 40 270 49 282 58 288 69 297 75 306 86 313 93 325 101 329 109 M222 -11 230 1 237 9 246 20 254 27 265 35 270 40 278 50 289 58 300 70 305 77 317 86 325 95 331 103 M228 -6 236 2 247 6 256 17 264 25 272 36 283 41 287 49 300 58 305 69 317 78 325 83 334 93 M236 -6 249 -2 256 8 264 19 272 24 280 34 287 42 295 52 307 58 316 67 323 76 332 85 M244 -7 254 -0 264 9 272 16 279 26 289 32 296 44 308 49 314 60 323 67 331 75 M252 -9 261 2 272 6 281 15 287 26 296 36 305 41 313 51 323 62 333 66 M262 -9 271 -2 282 8 289 15 300 28 305 35 313 41 324 51 331 61 M274 -8 278 0 287 6 298 18 305 24 314 33 321 43 330 52 M282 -9 290 -1 295 7 303 16 315 23 325 35 333 45 M289 -10 295 2 307 7 313 15 322 25 333 36 M298 -9 307 0 315 11 325 19 333 24 M304 -7 315 -0 322 10 330 19 M316 -8 323 1 330 9 M324 -8 334 -2" fill="none"/></defs><clipPath id="clL"><polygon points="26.3,1.9 53.1,6.7 58.6,23.2 68.8,31.8 67.3,50.0 61.0,92.4 54.7,111.3 53.9,126.3 25.5,129.4 12.2,125.5 5.1,98.7 1.9,32.6 11.4,26.3"/><polygon points="78.3,11.4 121.6,11.4 128.6,45.2 136.5,81.4 151.5,117.6 161.7,136.5 143.3,156.2 133.5,166.0 111.9,174.8 96.2,166.0 86.3,148.3 72.6,140.5 52.3,137.3 67.3,112.9 69.6,61.0 78.3,23.2"/><polygon points="139.7,5.1 149.1,5.1 152.3,34.2 149.1,44.4 141.2,46.8 133.4,42.1 133.4,34.2 138.9,18.5"/><polygon points="2.9,138.5 9.8,135.6 41.2,135.6 42.2,145.4 51.0,147.4 52.0,175.8 54.0,194.5 47.1,197.4 47.1,209.2 25.5,210.2 22.5,204.3 5.9,200.4 2.9,195.5"/><polygon points="55.9,187.6 85.4,187.6 86.3,199.4 101.1,209.2 100.1,228.8 70.6,228.8 56.9,219.0"/><polygon points="99.1,175.8 109.9,181.7 125.6,183.7 151.1,176.8 160.9,191.5 149.2,205.3 139.3,224.9 115.8,226.9 104.0,205.3 94.2,190.5"/><polygon points="7.5,224.2 49.6,229.3 114.9,230.2 161.3,230.2 160.4,238.8 160.4,252.5 114.9,264.6 116.6,276.6 133.8,281.8 159.6,311.8 151.0,321.3 108.0,319.6 84.0,314.4 42.7,311.0 8.3,317.8 2.3,309.3 1.4,292.0 23.8,273.2 2.3,250.0"/><polygon points="187.3,1.9 214.1,6.7 219.6,23.2 229.8,31.8 228.3,50.0 222.0,92.4 215.7,111.3 214.9,126.3 186.5,129.4 173.2,125.5 166.1,98.7 162.9,32.6 172.4,26.3"/><polygon points="239.3,11.4 282.6,11.4 289.6,45.2 297.5,81.4 312.5,117.6 322.7,136.5 304.3,156.2 294.5,166.0 272.9,174.8 257.2,166.0 247.3,148.3 233.6,140.5 213.3,137.3 228.3,112.9 230.6,61.0 239.3,23.2"/><polygon points="300.7,5.1 310.1,5.1 313.3,34.2 310.1,44.4 302.2,46.8 294.4,42.1 294.4,34.2 299.9,18.5"/><polygon points="163.9,138.5 170.8,135.6 202.2,135.6 203.2,145.4 212.0,147.4 213.0,175.8 215.0,194.5 208.1,197.4 208.1,209.2 186.5,210.2 183.5,204.3 166.9,200.4 163.9,195.5"/><polygon points="216.9,187.6 246.4,187.6 247.3,199.4 262.1,209.2 261.1,228.8 231.6,228.8 217.9,219.0"/><polygon points="260.1,175.8 270.9,181.7 286.6,183.7 312.1,176.8 321.9,191.5 310.2,205.3 300.3,224.9 276.8,226.9 265.0,205.3 255.2,190.5"/><polygon points="168.5,224.2 210.6,229.3 275.9,230.2 322.3,230.2 321.4,238.8 321.4,252.5 275.9,264.6 277.6,276.6 294.8,281.8 320.6,311.8 312.0,321.3 269.0,319.6 245.0,314.4 203.7,311.0 169.3,317.8 163.3,309.3 162.4,292.0 184.8,273.2 163.3,250.0"/></clipPath><g clip-path="url(#clL)"><use href="#clLp" stroke="#000" stroke-width="2.5999999999999996" opacity="0.55"/><use href="#clLp" stroke="#ff8c00" stroke-width="1.2"/><path d="M-9.6 -8.8h2.8v2.8h-2.8zM-11.0 -1.3h2.8v2.8h-2.8zM-7.9 9.1h2.8v2.8h-2.8zM-11.8 14.1h2.8v2.8h-2.8zM-12.2 23.8h2.8v2.8h-2.8zM-12.3 32.4h2.8v2.8h-2.8zM-9.1 40.0h2.8v2.8h-2.8zM-9.0 50.1h2.8v2.8h-2.8zM-12.3 58.4h2.8v2.8h-2.8zM-11.1 66.2h2.8v2.8h-2.8zM-11.0 76.1h2.8v2.8h-2.8zM-10.2 81.9h2.8v2.8h-2.8zM-9.7 93.5h2.8v2.8h-2.8zM-10.9 99.2h2.8v2.8h-2.8zM-10.5 111.3h2.8v2.8h-2.8zM-7.5 118.5h2.8v2.8h-2.8zM-7.8 127.9h2.8v2.8h-2.8zM-10.5 132.5h2.8v2.8h-2.8zM-9.1 143.4h2.8v2.8h-2.8zM-10.6 150.2h2.8v2.8h-2.8zM-10.4 159.9h2.8v2.8h-2.8zM-11.1 167.5h2.8v2.8h-2.8zM-10.1 178.9h2.8v2.8h-2.8zM-9.5 184.5h2.8v2.8h-2.8zM-11.0 193.9h2.8v2.8h-2.8zM-11.4 201.1h2.8v2.8h-2.8zM-9.8 209.0h2.8v2.8h-2.8zM-10.0 218.9h2.8v2.8h-2.8zM-8.8 229.4h2.8v2.8h-2.8zM-8.9 237.6h2.8v2.8h-2.8zM-10.5 246.0h2.8v2.8h-2.8zM-10.7 254.0h2.8v2.8h-2.8zM-10.8 261.8h2.8v2.8h-2.8zM-12.1 269.3h2.8v2.8h-2.8zM-7.5 277.7h2.8v2.8h-2.8zM-8.9 288.4h2.8v2.8h-2.8zM-8.8 296.0h2.8v2.8h-2.8zM-9.4 302.4h2.8v2.8h-2.8zM-12.1 311.6h2.8v2.8h-2.8zM-11.7 319.6h2.8v2.8h-2.8zM-11.8 330.4h2.8v2.8h-2.8zM-3.0 -7.6h2.8v2.8h-2.8zM-0.5 -1.2h2.8v2.8h-2.8zM-0.3 5.9h2.8v2.8h-2.8zM0.8 17.3h2.8v2.8h-2.8zM-0.2 24.0h2.8v2.8h-2.8zM0.3 33.8h2.8v2.8h-2.8zM-0.6 43.2h2.8v2.8h-2.8zM-0.7 48.9h2.8v2.8h-2.8zM-1.1 56.6h2.8v2.8h-2.8zM-3.0 67.8h2.8v2.8h-2.8zM0.1 77.5h2.8v2.8h-2.8zM0.4 83.8h2.8v2.8h-2.8zM-3.5 92.0h2.8v2.8h-2.8zM0.8 102.1h2.8v2.8h-2.8zM-1.5 108.9h2.8v2.8h-2.8zM-2.8 116.0h2.8v2.8h-2.8zM-3.6 128.1h2.8v2.8h-2.8zM-0.7 132.8h2.8v2.8h-2.8zM-1.8 140.8h2.8v2.8h-2.8zM-2.9 152.8h2.8v2.8h-2.8zM-0.6 160.0h2.8v2.8h-2.8zM-2.5 169.4h2.8v2.8h-2.8zM0.9 176.8h2.8v2.8h-2.8zM-3.6 183.3h2.8v2.8h-2.8zM-3.5 196.4h2.8v2.8h-2.8zM-1.2 204.3h2.8v2.8h-2.8zM-3.1 209.9h2.8v2.8h-2.8zM-0.4 221.6h2.8v2.8h-2.8zM-2.2 225.9h2.8v2.8h-2.8zM0.5 235.5h2.8v2.8h-2.8zM-0.2 243.4h2.8v2.8h-2.8zM-0.4 255.3h2.8v2.8h-2.8zM-0.2 261.4h2.8v2.8h-2.8zM-0.2 268.8h2.8v2.8h-2.8zM-2.3 278.7h2.8v2.8h-2.8zM0.5 285.8h2.8v2.8h-2.8zM0.5 297.6h2.8v2.8h-2.8zM1.0 303.9h2.8v2.8h-2.8zM-2.9 311.8h2.8v2.8h-2.8zM0.3 324.0h2.8v2.8h-2.8zM-0.4 330.0h2.8v2.8h-2.8zM6.0 -8.2h2.8v2.8h-2.8zM9.0 -3.5h2.8v2.8h-2.8zM5.7 8.8h2.8v2.8h-2.8zM8.9 14.7h2.8v2.8h-2.8zM6.0 23.7h2.8v2.8h-2.8zM7.3 30.5h2.8v2.8h-2.8zM8.8 41.3h2.8v2.8h-2.8zM8.5 48.2h2.8v2.8h-2.8zM9.5 59.4h2.8v2.8h-2.8zM6.3 68.9h2.8v2.8h-2.8zM8.1 76.8h2.8v2.8h-2.8zM4.8 81.3h2.8v2.8h-2.8zM8.3 91.1h2.8v2.8h-2.8zM7.2 98.8h2.8v2.8h-2.8zM9.5 109.1h2.8v2.8h-2.8zM8.8 115.4h2.8v2.8h-2.8zM7.0 123.9h2.8v2.8h-2.8zM9.1 134.3h2.8v2.8h-2.8zM4.9 140.9h2.8v2.8h-2.8zM7.3 149.4h2.8v2.8h-2.8zM5.5 159.8h2.8v2.8h-2.8zM7.1 169.0h2.8v2.8h-2.8zM7.7 176.5h2.8v2.8h-2.8zM7.7 183.9h2.8v2.8h-2.8zM6.0 195.6h2.8v2.8h-2.8zM5.3 201.2h2.8v2.8h-2.8zM5.8 211.0h2.8v2.8h-2.8zM4.6 217.2h2.8v2.8h-2.8zM6.9 226.4h2.8v2.8h-2.8zM8.0 238.1h2.8v2.8h-2.8zM7.5 246.1h2.8v2.8h-2.8zM6.5 251.3h2.8v2.8h-2.8zM6.8 261.4h2.8v2.8h-2.8zM7.6 268.7h2.8v2.8h-2.8zM5.7 280.7h2.8v2.8h-2.8zM5.9 287.1h2.8v2.8h-2.8zM9.3 295.0h2.8v2.8h-2.8zM5.3 305.6h2.8v2.8h-2.8zM7.4 313.7h2.8v2.8h-2.8zM4.8 321.2h2.8v2.8h-2.8zM4.6 328.8h2.8v2.8h-2.8zM16.7 -12.1h2.8v2.8h-2.8zM14.6 1.1h2.8v2.8h-2.8zM18.0 7.0h2.8v2.8h-2.8zM16.8 16.3h2.8v2.8h-2.8zM15.4 25.9h2.8v2.8h-2.8zM13.9 34.3h2.8v2.8h-2.8zM13.3 43.0h2.8v2.8h-2.8zM16.5 49.3h2.8v2.8h-2.8zM16.5 57.9h2.8v2.8h-2.8zM17.0 64.6h2.8v2.8h-2.8zM15.6 77.0h2.8v2.8h-2.8zM17.8 82.2h2.8v2.8h-2.8zM14.3 94.2h2.8v2.8h-2.8zM14.8 98.3h2.8v2.8h-2.8zM16.7 108.7h2.8v2.8h-2.8zM16.8 117.5h2.8v2.8h-2.8zM15.6 125.7h2.8v2.8h-2.8zM14.5 136.6h2.8v2.8h-2.8zM16.5 144.6h2.8v2.8h-2.8zM17.6 150.3h2.8v2.8h-2.8zM17.7 161.9h2.8v2.8h-2.8zM15.6 168.9h2.8v2.8h-2.8zM13.6 178.4h2.8v2.8h-2.8zM13.9 185.8h2.8v2.8h-2.8zM13.7 191.9h2.8v2.8h-2.8zM16.2 202.6h2.8v2.8h-2.8zM16.5 212.6h2.8v2.8h-2.8zM18.1 217.5h2.8v2.8h-2.8zM16.3 228.5h2.8v2.8h-2.8zM16.4 236.8h2.8v2.8h-2.8zM15.9 247.0h2.8v2.8h-2.8zM15.4 253.8h2.8v2.8h-2.8zM16.6 260.0h2.8v2.8h-2.8zM15.3 268.6h2.8v2.8h-2.8zM13.8 276.6h2.8v2.8h-2.8zM14.1 286.2h2.8v2.8h-2.8zM15.7 296.5h2.8v2.8h-2.8zM17.3 304.5h2.8v2.8h-2.8zM17.6 312.6h2.8v2.8h-2.8zM16.8 321.9h2.8v2.8h-2.8zM16.2 328.9h2.8v2.8h-2.8zM26.3 -8.5h2.8v2.8h-2.8zM22.3 -1.2h2.8v2.8h-2.8zM26.6 4.8h2.8v2.8h-2.8zM23.1 16.8h2.8v2.8h-2.8zM21.8 25.4h2.8v2.8h-2.8zM24.5 33.8h2.8v2.8h-2.8zM24.4 43.3h2.8v2.8h-2.8zM23.3 50.0h2.8v2.8h-2.8zM21.8 58.4h2.8v2.8h-2.8zM23.7 69.1h2.8v2.8h-2.8zM26.4 73.3h2.8v2.8h-2.8zM21.8 81.7h2.8v2.8h-2.8zM22.5 93.3h2.8v2.8h-2.8zM24.3 100.8h2.8v2.8h-2.8zM23.9 106.6h2.8v2.8h-2.8zM23.6 120.1h2.8v2.8h-2.8zM25.7 126.5h2.8v2.8h-2.8zM22.6 136.7h2.8v2.8h-2.8zM23.7 143.7h2.8v2.8h-2.8zM22.6 150.7h2.8v2.8h-2.8zM23.3 159.6h2.8v2.8h-2.8zM21.7 169.4h2.8v2.8h-2.8zM22.4 177.6h2.8v2.8h-2.8zM24.7 186.6h2.8v2.8h-2.8zM23.0 193.0h2.8v2.8h-2.8zM25.4 202.0h2.8v2.8h-2.8zM22.3 213.2h2.8v2.8h-2.8zM21.6 221.6h2.8v2.8h-2.8zM23.0 227.5h2.8v2.8h-2.8zM26.5 236.3h2.8v2.8h-2.8zM25.2 244.7h2.8v2.8h-2.8zM26.2 254.7h2.8v2.8h-2.8zM24.0 260.0h2.8v2.8h-2.8zM23.4 270.6h2.8v2.8h-2.8zM23.0 279.3h2.8v2.8h-2.8zM22.6 287.6h2.8v2.8h-2.8zM24.2 297.0h2.8v2.8h-2.8zM25.4 305.8h2.8v2.8h-2.8zM23.7 312.9h2.8v2.8h-2.8zM26.0 320.9h2.8v2.8h-2.8zM25.3 332.6h2.8v2.8h-2.8zM34.8 -9.6h2.8v2.8h-2.8zM31.6 -0.8h2.8v2.8h-2.8zM33.5 7.2h2.8v2.8h-2.8zM31.8 15.4h2.8v2.8h-2.8zM30.5 23.0h2.8v2.8h-2.8zM30.8 33.4h2.8v2.8h-2.8zM34.9 39.4h2.8v2.8h-2.8zM30.2 50.8h2.8v2.8h-2.8zM31.9 58.1h2.8v2.8h-2.8zM30.4 65.0h2.8v2.8h-2.8zM33.6 75.6h2.8v2.8h-2.8zM34.4 86.0h2.8v2.8h-2.8zM31.9 92.7h2.8v2.8h-2.8zM32.3 100.6h2.8v2.8h-2.8zM32.0 111.5h2.8v2.8h-2.8zM33.2 115.8h2.8v2.8h-2.8zM33.6 128.5h2.8v2.8h-2.8zM34.6 134.9h2.8v2.8h-2.8zM30.1 144.7h2.8v2.8h-2.8zM34.8 152.8h2.8v2.8h-2.8zM32.2 159.5h2.8v2.8h-2.8zM33.8 166.6h2.8v2.8h-2.8zM34.1 177.1h2.8v2.8h-2.8zM30.4 187.2h2.8v2.8h-2.8zM32.0 192.1h2.8v2.8h-2.8zM30.9 204.4h2.8v2.8h-2.8zM30.9 212.5h2.8v2.8h-2.8zM34.2 217.5h2.8v2.8h-2.8zM32.3 229.6h2.8v2.8h-2.8zM32.5 238.5h2.8v2.8h-2.8zM32.0 245.8h2.8v2.8h-2.8zM31.1 255.3h2.8v2.8h-2.8zM34.3 262.4h2.8v2.8h-2.8zM31.7 269.8h2.8v2.8h-2.8zM33.1 277.2h2.8v2.8h-2.8zM32.7 286.6h2.8v2.8h-2.8zM31.8 295.2h2.8v2.8h-2.8zM34.3 302.9h2.8v2.8h-2.8zM31.3 311.4h2.8v2.8h-2.8zM30.1 321.2h2.8v2.8h-2.8zM34.4 332.2h2.8v2.8h-2.8zM41.0 -10.3h2.8v2.8h-2.8zM43.0 -1.3h2.8v2.8h-2.8zM41.3 7.9h2.8v2.8h-2.8zM39.0 17.3h2.8v2.8h-2.8zM39.1 24.3h2.8v2.8h-2.8zM43.3 32.8h2.8v2.8h-2.8zM40.3 42.3h2.8v2.8h-2.8zM43.1 50.2h2.8v2.8h-2.8zM38.8 60.0h2.8v2.8h-2.8zM38.6 67.5h2.8v2.8h-2.8zM43.1 73.4h2.8v2.8h-2.8zM41.2 84.6h2.8v2.8h-2.8zM39.4 90.8h2.8v2.8h-2.8zM38.9 98.9h2.8v2.8h-2.8zM39.2 108.0h2.8v2.8h-2.8zM42.4 118.6h2.8v2.8h-2.8zM42.4 126.9h2.8v2.8h-2.8zM42.6 132.8h2.8v2.8h-2.8zM41.4 140.7h2.8v2.8h-2.8zM41.1 153.4h2.8v2.8h-2.8zM41.0 159.1h2.8v2.8h-2.8zM40.0 168.1h2.8v2.8h-2.8zM43.2 179.5h2.8v2.8h-2.8zM42.4 188.1h2.8v2.8h-2.8zM42.4 193.0h2.8v2.8h-2.8zM40.8 203.7h2.8v2.8h-2.8zM42.2 212.0h2.8v2.8h-2.8zM41.0 217.8h2.8v2.8h-2.8zM43.4 226.7h2.8v2.8h-2.8zM43.5 234.7h2.8v2.8h-2.8zM43.5 244.5h2.8v2.8h-2.8zM42.7 251.1h2.8v2.8h-2.8zM40.8 260.8h2.8v2.8h-2.8zM42.1 271.4h2.8v2.8h-2.8zM40.9 280.2h2.8v2.8h-2.8zM43.5 285.5h2.8v2.8h-2.8zM41.4 297.0h2.8v2.8h-2.8zM41.8 303.4h2.8v2.8h-2.8zM43.0 311.8h2.8v2.8h-2.8zM42.9 321.5h2.8v2.8h-2.8zM39.3 331.8h2.8v2.8h-2.8zM47.4 -8.4h2.8v2.8h-2.8zM50.1 0.5h2.8v2.8h-2.8zM51.1 6.6h2.8v2.8h-2.8zM47.7 14.4h2.8v2.8h-2.8zM47.1 24.9h2.8v2.8h-2.8zM47.5 31.0h2.8v2.8h-2.8zM48.3 40.6h2.8v2.8h-2.8zM50.6 49.3h2.8v2.8h-2.8zM49.6 56.0h2.8v2.8h-2.8zM48.8 65.1h2.8v2.8h-2.8zM50.8 72.6h2.8v2.8h-2.8zM50.2 84.6h2.8v2.8h-2.8zM49.6 89.8h2.8v2.8h-2.8zM48.3 99.3h2.8v2.8h-2.8zM48.4 107.9h2.8v2.8h-2.8zM52.0 119.1h2.8v2.8h-2.8zM51.6 127.2h2.8v2.8h-2.8zM48.8 136.9h2.8v2.8h-2.8zM49.5 141.5h2.8v2.8h-2.8zM50.8 150.4h2.8v2.8h-2.8zM51.2 161.3h2.8v2.8h-2.8zM48.5 168.4h2.8v2.8h-2.8zM50.7 178.0h2.8v2.8h-2.8zM49.7 184.1h2.8v2.8h-2.8zM48.7 195.1h2.8v2.8h-2.8zM49.4 203.7h2.8v2.8h-2.8zM50.5 210.4h2.8v2.8h-2.8zM47.6 220.5h2.8v2.8h-2.8zM48.9 228.4h2.8v2.8h-2.8zM47.7 234.8h2.8v2.8h-2.8zM49.2 246.0h2.8v2.8h-2.8zM47.6 255.0h2.8v2.8h-2.8zM51.4 263.0h2.8v2.8h-2.8zM50.9 269.3h2.8v2.8h-2.8zM47.6 278.2h2.8v2.8h-2.8zM47.7 287.2h2.8v2.8h-2.8zM50.9 295.0h2.8v2.8h-2.8zM51.4 304.4h2.8v2.8h-2.8zM47.9 313.8h2.8v2.8h-2.8zM49.3 320.7h2.8v2.8h-2.8zM49.7 332.6h2.8v2.8h-2.8zM59.4 -11.0h2.8v2.8h-2.8zM60.3 -3.0h2.8v2.8h-2.8zM57.6 6.5h2.8v2.8h-2.8zM60.6 13.1h2.8v2.8h-2.8zM58.9 24.1h2.8v2.8h-2.8zM56.3 33.3h2.8v2.8h-2.8zM59.7 42.5h2.8v2.8h-2.8zM55.9 51.1h2.8v2.8h-2.8zM57.3 59.9h2.8v2.8h-2.8zM58.4 64.5h2.8v2.8h-2.8zM59.3 75.4h2.8v2.8h-2.8zM57.9 84.3h2.8v2.8h-2.8zM57.8 89.7h2.8v2.8h-2.8zM60.2 99.5h2.8v2.8h-2.8zM57.0 106.8h2.8v2.8h-2.8zM59.2 119.7h2.8v2.8h-2.8zM57.9 127.7h2.8v2.8h-2.8zM57.2 134.0h2.8v2.8h-2.8zM57.0 142.1h2.8v2.8h-2.8zM58.4 150.7h2.8v2.8h-2.8zM55.9 161.1h2.8v2.8h-2.8zM57.1 168.1h2.8v2.8h-2.8zM56.5 174.8h2.8v2.8h-2.8zM58.9 185.2h2.8v2.8h-2.8zM60.3 191.6h2.8v2.8h-2.8zM59.8 200.1h2.8v2.8h-2.8zM56.4 208.6h2.8v2.8h-2.8zM58.1 218.9h2.8v2.8h-2.8zM57.2 230.5h2.8v2.8h-2.8zM58.5 238.8h2.8v2.8h-2.8zM60.1 244.3h2.8v2.8h-2.8zM58.9 252.0h2.8v2.8h-2.8zM57.4 263.0h2.8v2.8h-2.8zM58.5 268.5h2.8v2.8h-2.8zM55.9 280.5h2.8v2.8h-2.8zM59.1 288.4h2.8v2.8h-2.8zM56.7 297.5h2.8v2.8h-2.8zM58.5 302.8h2.8v2.8h-2.8zM56.4 313.7h2.8v2.8h-2.8zM60.5 322.0h2.8v2.8h-2.8zM57.1 331.2h2.8v2.8h-2.8zM65.1 -9.2h2.8v2.8h-2.8zM66.2 -3.8h2.8v2.8h-2.8zM66.7 7.1h2.8v2.8h-2.8zM68.7 16.7h2.8v2.8h-2.8zM65.6 24.8h2.8v2.8h-2.8zM65.3 33.4h2.8v2.8h-2.8zM67.1 41.7h2.8v2.8h-2.8zM64.9 50.7h2.8v2.8h-2.8zM66.8 59.3h2.8v2.8h-2.8zM64.3 67.8h2.8v2.8h-2.8zM68.9 75.5h2.8v2.8h-2.8zM64.8 85.8h2.8v2.8h-2.8zM66.9 91.0h2.8v2.8h-2.8zM67.2 102.4h2.8v2.8h-2.8zM64.6 109.4h2.8v2.8h-2.8zM67.3 119.8h2.8v2.8h-2.8zM64.2 126.1h2.8v2.8h-2.8zM67.8 135.4h2.8v2.8h-2.8zM68.4 143.9h2.8v2.8h-2.8zM67.3 152.2h2.8v2.8h-2.8zM64.9 161.9h2.8v2.8h-2.8zM66.7 166.2h2.8v2.8h-2.8zM68.2 178.1h2.8v2.8h-2.8zM67.4 183.3h2.8v2.8h-2.8zM67.6 193.3h2.8v2.8h-2.8zM68.2 200.8h2.8v2.8h-2.8zM65.8 209.1h2.8v2.8h-2.8zM64.1 218.7h2.8v2.8h-2.8zM67.6 227.7h2.8v2.8h-2.8zM65.6 238.8h2.8v2.8h-2.8zM67.8 247.5h2.8v2.8h-2.8zM65.6 252.0h2.8v2.8h-2.8zM69.0 260.0h2.8v2.8h-2.8zM68.1 272.9h2.8v2.8h-2.8zM67.7 279.5h2.8v2.8h-2.8zM65.9 286.6h2.8v2.8h-2.8zM64.4 295.5h2.8v2.8h-2.8zM66.6 303.3h2.8v2.8h-2.8zM69.0 315.6h2.8v2.8h-2.8zM65.5 322.1h2.8v2.8h-2.8zM68.6 330.5h2.8v2.8h-2.8zM74.3 -8.1h2.8v2.8h-2.8zM75.2 -0.8h2.8v2.8h-2.8zM76.4 6.0h2.8v2.8h-2.8zM76.0 14.4h2.8v2.8h-2.8zM75.9 22.9h2.8v2.8h-2.8zM76.6 31.8h2.8v2.8h-2.8zM77.4 39.4h2.8v2.8h-2.8zM76.2 51.4h2.8v2.8h-2.8zM77.0 58.2h2.8v2.8h-2.8zM75.4 65.6h2.8v2.8h-2.8zM76.9 76.4h2.8v2.8h-2.8zM75.2 83.6h2.8v2.8h-2.8zM77.2 92.4h2.8v2.8h-2.8zM73.0 98.6h2.8v2.8h-2.8zM76.5 109.2h2.8v2.8h-2.8zM75.4 117.3h2.8v2.8h-2.8zM72.7 127.6h2.8v2.8h-2.8zM74.5 134.4h2.8v2.8h-2.8zM74.8 141.2h2.8v2.8h-2.8zM77.5 153.9h2.8v2.8h-2.8zM72.6 157.8h2.8v2.8h-2.8zM74.5 171.1h2.8v2.8h-2.8zM75.0 179.3h2.8v2.8h-2.8zM74.3 185.6h2.8v2.8h-2.8zM76.8 194.9h2.8v2.8h-2.8zM74.1 202.4h2.8v2.8h-2.8zM75.7 210.6h2.8v2.8h-2.8zM73.6 218.2h2.8v2.8h-2.8zM76.3 226.6h2.8v2.8h-2.8zM73.5 235.5h2.8v2.8h-2.8zM77.6 247.6h2.8v2.8h-2.8zM75.0 252.2h2.8v2.8h-2.8zM74.8 264.1h2.8v2.8h-2.8zM75.5 272.6h2.8v2.8h-2.8zM77.0 280.7h2.8v2.8h-2.8zM77.1 287.7h2.8v2.8h-2.8zM73.4 297.5h2.8v2.8h-2.8zM77.6 305.4h2.8v2.8h-2.8zM73.8 315.3h2.8v2.8h-2.8zM77.3 323.8h2.8v2.8h-2.8zM75.9 332.3h2.8v2.8h-2.8zM82.2 -9.5h2.8v2.8h-2.8zM86.1 1.1h2.8v2.8h-2.8zM85.1 7.5h2.8v2.8h-2.8zM84.3 15.1h2.8v2.8h-2.8zM82.2 26.1h2.8v2.8h-2.8zM84.0 31.9h2.8v2.8h-2.8zM82.7 39.4h2.8v2.8h-2.8zM82.0 50.5h2.8v2.8h-2.8zM82.5 57.2h2.8v2.8h-2.8zM85.4 64.5h2.8v2.8h-2.8zM85.9 74.7h2.8v2.8h-2.8zM85.3 85.3h2.8v2.8h-2.8zM84.5 89.8h2.8v2.8h-2.8zM84.4 100.3h2.8v2.8h-2.8zM82.6 109.2h2.8v2.8h-2.8zM84.4 117.0h2.8v2.8h-2.8zM83.1 124.6h2.8v2.8h-2.8zM81.9 135.2h2.8v2.8h-2.8zM86.0 141.1h2.8v2.8h-2.8zM84.4 152.1h2.8v2.8h-2.8zM84.9 159.2h2.8v2.8h-2.8zM82.4 167.5h2.8v2.8h-2.8zM85.3 178.9h2.8v2.8h-2.8zM85.2 184.5h2.8v2.8h-2.8zM83.0 193.0h2.8v2.8h-2.8zM84.6 201.2h2.8v2.8h-2.8zM84.8 212.6h2.8v2.8h-2.8zM83.8 217.9h2.8v2.8h-2.8zM82.4 228.4h2.8v2.8h-2.8zM84.8 235.1h2.8v2.8h-2.8zM84.4 247.2h2.8v2.8h-2.8zM84.8 255.6h2.8v2.8h-2.8zM85.9 260.9h2.8v2.8h-2.8zM82.1 272.6h2.8v2.8h-2.8zM83.0 277.1h2.8v2.8h-2.8zM84.2 287.5h2.8v2.8h-2.8zM82.0 298.2h2.8v2.8h-2.8zM83.5 307.1h2.8v2.8h-2.8zM82.5 310.9h2.8v2.8h-2.8zM85.7 320.6h2.8v2.8h-2.8zM85.8 330.0h2.8v2.8h-2.8zM93.1 -11.9h2.8v2.8h-2.8zM90.9 -0.5h2.8v2.8h-2.8zM94.4 8.7h2.8v2.8h-2.8zM94.2 17.0h2.8v2.8h-2.8zM94.5 22.8h2.8v2.8h-2.8zM90.2 31.3h2.8v2.8h-2.8zM92.5 40.4h2.8v2.8h-2.8zM89.7 47.7h2.8v2.8h-2.8zM91.0 57.3h2.8v2.8h-2.8zM91.2 66.9h2.8v2.8h-2.8zM92.9 76.9h2.8v2.8h-2.8zM91.5 85.8h2.8v2.8h-2.8zM91.5 91.7h2.8v2.8h-2.8zM91.7 101.9h2.8v2.8h-2.8zM93.3 108.7h2.8v2.8h-2.8zM91.3 115.5h2.8v2.8h-2.8zM90.8 123.9h2.8v2.8h-2.8zM91.2 133.0h2.8v2.8h-2.8zM92.8 144.4h2.8v2.8h-2.8zM92.0 151.5h2.8v2.8h-2.8zM91.3 162.4h2.8v2.8h-2.8zM94.6 169.3h2.8v2.8h-2.8zM93.9 176.5h2.8v2.8h-2.8zM92.5 184.9h2.8v2.8h-2.8zM94.4 194.6h2.8v2.8h-2.8zM94.1 203.2h2.8v2.8h-2.8zM90.0 210.1h2.8v2.8h-2.8zM92.6 221.7h2.8v2.8h-2.8zM92.9 227.4h2.8v2.8h-2.8zM92.9 237.3h2.8v2.8h-2.8zM94.5 245.6h2.8v2.8h-2.8zM89.6 256.1h2.8v2.8h-2.8zM90.3 261.4h2.8v2.8h-2.8zM94.5 271.5h2.8v2.8h-2.8zM93.0 278.8h2.8v2.8h-2.8zM91.6 286.6h2.8v2.8h-2.8zM93.4 295.4h2.8v2.8h-2.8zM90.2 303.1h2.8v2.8h-2.8zM90.3 315.1h2.8v2.8h-2.8zM90.9 320.2h2.8v2.8h-2.8zM92.9 329.1h2.8v2.8h-2.8zM102.1 -8.9h2.8v2.8h-2.8zM101.1 -1.5h2.8v2.8h-2.8zM100.0 6.8h2.8v2.8h-2.8zM101.7 13.4h2.8v2.8h-2.8zM99.2 25.1h2.8v2.8h-2.8zM101.7 33.0h2.8v2.8h-2.8zM99.4 39.7h2.8v2.8h-2.8zM100.8 48.4h2.8v2.8h-2.8zM101.8 59.5h2.8v2.8h-2.8zM101.7 67.3h2.8v2.8h-2.8zM102.6 75.4h2.8v2.8h-2.8zM99.5 82.3h2.8v2.8h-2.8zM98.6 92.7h2.8v2.8h-2.8zM102.0 101.2h2.8v2.8h-2.8zM98.7 110.1h2.8v2.8h-2.8zM101.8 116.9h2.8v2.8h-2.8zM100.8 123.9h2.8v2.8h-2.8zM101.1 132.1h2.8v2.8h-2.8zM99.8 144.7h2.8v2.8h-2.8zM101.3 151.0h2.8v2.8h-2.8zM102.7 160.7h2.8v2.8h-2.8zM102.8 168.5h2.8v2.8h-2.8zM101.4 177.8h2.8v2.8h-2.8zM98.3 183.8h2.8v2.8h-2.8zM98.7 192.6h2.8v2.8h-2.8zM103.1 203.5h2.8v2.8h-2.8zM101.7 213.2h2.8v2.8h-2.8zM99.0 220.9h2.8v2.8h-2.8zM100.7 227.5h2.8v2.8h-2.8zM101.9 238.1h2.8v2.8h-2.8zM101.1 246.1h2.8v2.8h-2.8zM102.4 252.9h2.8v2.8h-2.8zM102.3 262.0h2.8v2.8h-2.8zM102.7 271.7h2.8v2.8h-2.8zM101.2 281.5h2.8v2.8h-2.8zM100.7 286.1h2.8v2.8h-2.8zM100.7 295.5h2.8v2.8h-2.8zM103.0 303.0h2.8v2.8h-2.8zM101.2 313.4h2.8v2.8h-2.8zM98.7 322.6h2.8v2.8h-2.8zM101.0 329.8h2.8v2.8h-2.8zM111.4 -11.9h2.8v2.8h-2.8zM109.8 -2.5h2.8v2.8h-2.8zM109.1 6.4h2.8v2.8h-2.8zM110.0 17.6h2.8v2.8h-2.8zM107.0 24.0h2.8v2.8h-2.8zM110.3 31.5h2.8v2.8h-2.8zM108.3 43.4h2.8v2.8h-2.8zM107.1 50.0h2.8v2.8h-2.8zM110.1 58.9h2.8v2.8h-2.8zM106.9 68.9h2.8v2.8h-2.8zM106.7 72.7h2.8v2.8h-2.8zM109.4 81.4h2.8v2.8h-2.8zM108.2 93.6h2.8v2.8h-2.8zM109.4 101.0h2.8v2.8h-2.8zM111.2 107.1h2.8v2.8h-2.8zM111.6 118.3h2.8v2.8h-2.8zM110.1 123.6h2.8v2.8h-2.8zM111.0 134.1h2.8v2.8h-2.8zM108.6 143.8h2.8v2.8h-2.8zM108.6 153.8h2.8v2.8h-2.8zM111.2 159.5h2.8v2.8h-2.8zM107.7 168.1h2.8v2.8h-2.8zM111.6 176.1h2.8v2.8h-2.8zM109.1 184.1h2.8v2.8h-2.8zM109.0 196.4h2.8v2.8h-2.8zM108.6 200.1h2.8v2.8h-2.8zM109.7 212.6h2.8v2.8h-2.8zM108.3 217.6h2.8v2.8h-2.8zM108.4 229.6h2.8v2.8h-2.8zM108.9 234.2h2.8v2.8h-2.8zM110.1 243.9h2.8v2.8h-2.8zM109.4 253.2h2.8v2.8h-2.8zM107.6 261.6h2.8v2.8h-2.8zM107.9 270.8h2.8v2.8h-2.8zM107.3 281.6h2.8v2.8h-2.8zM110.8 288.8h2.8v2.8h-2.8zM107.8 298.4h2.8v2.8h-2.8zM111.5 302.6h2.8v2.8h-2.8zM107.8 311.2h2.8v2.8h-2.8zM108.0 323.1h2.8v2.8h-2.8zM111.6 330.3h2.8v2.8h-2.8zM117.2 -8.7h2.8v2.8h-2.8zM119.4 -1.3h2.8v2.8h-2.8zM117.5 6.6h2.8v2.8h-2.8zM117.3 15.3h2.8v2.8h-2.8zM115.6 26.3h2.8v2.8h-2.8zM117.7 33.6h2.8v2.8h-2.8zM117.4 42.5h2.8v2.8h-2.8zM116.2 51.4h2.8v2.8h-2.8zM119.9 56.2h2.8v2.8h-2.8zM117.3 64.3h2.8v2.8h-2.8zM119.0 75.2h2.8v2.8h-2.8zM115.2 85.7h2.8v2.8h-2.8zM119.8 91.0h2.8v2.8h-2.8zM118.8 98.4h2.8v2.8h-2.8zM118.4 108.2h2.8v2.8h-2.8zM115.2 116.6h2.8v2.8h-2.8zM117.8 123.7h2.8v2.8h-2.8zM119.5 134.2h2.8v2.8h-2.8zM117.7 145.5h2.8v2.8h-2.8zM119.8 152.7h2.8v2.8h-2.8zM118.8 161.8h2.8v2.8h-2.8zM118.3 169.1h2.8v2.8h-2.8zM119.5 175.2h2.8v2.8h-2.8zM120.1 184.3h2.8v2.8h-2.8zM116.2 194.7h2.8v2.8h-2.8zM117.9 202.8h2.8v2.8h-2.8zM119.5 208.6h2.8v2.8h-2.8zM115.8 218.0h2.8v2.8h-2.8zM117.9 227.4h2.8v2.8h-2.8zM118.4 236.2h2.8v2.8h-2.8zM115.2 246.6h2.8v2.8h-2.8zM117.6 253.1h2.8v2.8h-2.8zM116.5 264.0h2.8v2.8h-2.8zM118.2 268.6h2.8v2.8h-2.8zM117.1 281.6h2.8v2.8h-2.8zM116.3 285.7h2.8v2.8h-2.8zM115.4 293.9h2.8v2.8h-2.8zM115.2 304.4h2.8v2.8h-2.8zM119.7 315.4h2.8v2.8h-2.8zM119.7 321.0h2.8v2.8h-2.8zM118.6 327.9h2.8v2.8h-2.8zM127.5 -11.0h2.8v2.8h-2.8zM126.9 -2.5h2.8v2.8h-2.8zM126.0 6.9h2.8v2.8h-2.8zM126.7 14.7h2.8v2.8h-2.8zM124.5 24.4h2.8v2.8h-2.8zM127.5 32.0h2.8v2.8h-2.8zM128.4 40.8h2.8v2.8h-2.8zM125.5 49.0h2.8v2.8h-2.8zM128.5 57.1h2.8v2.8h-2.8zM126.7 66.8h2.8v2.8h-2.8zM128.6 72.8h2.8v2.8h-2.8zM128.5 82.8h2.8v2.8h-2.8zM127.7 90.6h2.8v2.8h-2.8zM127.2 99.7h2.8v2.8h-2.8zM124.5 107.5h2.8v2.8h-2.8zM124.4 119.7h2.8v2.8h-2.8zM125.9 125.2h2.8v2.8h-2.8zM127.7 134.8h2.8v2.8h-2.8zM127.0 142.0h2.8v2.8h-2.8zM124.5 149.8h2.8v2.8h-2.8zM125.3 159.6h2.8v2.8h-2.8zM126.8 168.0h2.8v2.8h-2.8zM125.5 175.6h2.8v2.8h-2.8zM125.6 185.9h2.8v2.8h-2.8zM124.2 195.4h2.8v2.8h-2.8zM128.2 203.0h2.8v2.8h-2.8zM125.1 213.5h2.8v2.8h-2.8zM124.2 218.0h2.8v2.8h-2.8zM127.5 229.7h2.8v2.8h-2.8zM125.5 234.5h2.8v2.8h-2.8zM126.8 244.3h2.8v2.8h-2.8zM127.9 251.4h2.8v2.8h-2.8zM126.3 260.4h2.8v2.8h-2.8zM128.4 273.0h2.8v2.8h-2.8zM126.5 280.1h2.8v2.8h-2.8zM128.0 289.7h2.8v2.8h-2.8zM124.2 295.2h2.8v2.8h-2.8zM127.6 303.4h2.8v2.8h-2.8zM125.7 315.6h2.8v2.8h-2.8zM126.0 322.0h2.8v2.8h-2.8zM124.7 328.3h2.8v2.8h-2.8zM136.7 -8.5h2.8v2.8h-2.8zM132.7 0.8h2.8v2.8h-2.8zM136.6 6.2h2.8v2.8h-2.8zM136.5 13.7h2.8v2.8h-2.8zM133.3 26.0h2.8v2.8h-2.8zM134.7 32.1h2.8v2.8h-2.8zM133.6 39.7h2.8v2.8h-2.8zM133.0 49.4h2.8v2.8h-2.8zM134.6 56.0h2.8v2.8h-2.8zM135.8 64.5h2.8v2.8h-2.8zM132.8 77.1h2.8v2.8h-2.8zM134.0 81.7h2.8v2.8h-2.8zM134.1 90.4h2.8v2.8h-2.8zM132.7 103.1h2.8v2.8h-2.8zM132.5 110.3h2.8v2.8h-2.8zM134.3 116.2h2.8v2.8h-2.8zM136.5 126.2h2.8v2.8h-2.8zM132.3 134.0h2.8v2.8h-2.8zM135.2 142.7h2.8v2.8h-2.8zM133.6 150.7h2.8v2.8h-2.8zM133.6 160.0h2.8v2.8h-2.8zM137.1 170.7h2.8v2.8h-2.8zM134.8 179.1h2.8v2.8h-2.8zM132.9 186.3h2.8v2.8h-2.8zM136.2 192.9h2.8v2.8h-2.8zM134.9 202.7h2.8v2.8h-2.8zM132.6 213.5h2.8v2.8h-2.8zM133.9 219.9h2.8v2.8h-2.8zM132.2 228.2h2.8v2.8h-2.8zM134.3 238.5h2.8v2.8h-2.8zM132.4 247.1h2.8v2.8h-2.8zM133.0 255.4h2.8v2.8h-2.8zM135.9 262.6h2.8v2.8h-2.8zM133.9 270.4h2.8v2.8h-2.8zM135.5 278.5h2.8v2.8h-2.8zM132.4 288.7h2.8v2.8h-2.8zM135.7 295.0h2.8v2.8h-2.8zM133.2 306.6h2.8v2.8h-2.8zM133.8 310.9h2.8v2.8h-2.8zM136.5 320.3h2.8v2.8h-2.8zM134.1 330.4h2.8v2.8h-2.8zM143.0 -11.3h2.8v2.8h-2.8zM141.8 -1.4h2.8v2.8h-2.8zM141.2 9.1h2.8v2.8h-2.8zM141.9 13.8h2.8v2.8h-2.8zM141.5 22.5h2.8v2.8h-2.8zM145.2 32.2h2.8v2.8h-2.8zM144.4 42.8h2.8v2.8h-2.8zM141.0 50.2h2.8v2.8h-2.8zM144.7 56.7h2.8v2.8h-2.8zM145.3 66.8h2.8v2.8h-2.8zM143.2 77.6h2.8v2.8h-2.8zM141.5 85.8h2.8v2.8h-2.8zM141.8 92.4h2.8v2.8h-2.8zM140.9 99.9h2.8v2.8h-2.8zM141.8 110.5h2.8v2.8h-2.8zM145.6 115.8h2.8v2.8h-2.8zM140.9 126.9h2.8v2.8h-2.8zM145.5 137.0h2.8v2.8h-2.8zM144.9 144.3h2.8v2.8h-2.8zM143.5 149.1h2.8v2.8h-2.8zM145.3 160.5h2.8v2.8h-2.8zM142.9 166.2h2.8v2.8h-2.8zM141.4 176.3h2.8v2.8h-2.8zM145.5 186.3h2.8v2.8h-2.8zM144.1 193.5h2.8v2.8h-2.8zM144.3 201.1h2.8v2.8h-2.8zM142.0 211.3h2.8v2.8h-2.8zM141.4 221.5h2.8v2.8h-2.8zM141.8 228.0h2.8v2.8h-2.8zM145.3 235.9h2.8v2.8h-2.8zM143.5 246.1h2.8v2.8h-2.8zM142.8 252.4h2.8v2.8h-2.8zM143.2 263.6h2.8v2.8h-2.8zM142.6 271.6h2.8v2.8h-2.8zM141.8 278.5h2.8v2.8h-2.8zM145.4 285.4h2.8v2.8h-2.8zM145.2 293.8h2.8v2.8h-2.8zM144.7 304.0h2.8v2.8h-2.8zM144.1 311.7h2.8v2.8h-2.8zM141.5 319.5h2.8v2.8h-2.8zM140.6 329.5h2.8v2.8h-2.8zM149.3 -11.0h2.8v2.8h-2.8zM153.5 -0.4h2.8v2.8h-2.8zM151.2 4.7h2.8v2.8h-2.8zM149.3 18.1h2.8v2.8h-2.8zM151.3 24.6h2.8v2.8h-2.8zM152.8 33.2h2.8v2.8h-2.8zM152.9 41.4h2.8v2.8h-2.8zM151.6 49.4h2.8v2.8h-2.8zM153.6 60.6h2.8v2.8h-2.8zM151.0 65.1h2.8v2.8h-2.8zM153.8 74.0h2.8v2.8h-2.8zM152.7 82.3h2.8v2.8h-2.8zM152.1 91.2h2.8v2.8h-2.8zM149.3 98.2h2.8v2.8h-2.8zM150.6 108.9h2.8v2.8h-2.8zM151.3 117.3h2.8v2.8h-2.8zM151.6 124.2h2.8v2.8h-2.8zM152.4 136.0h2.8v2.8h-2.8zM151.3 142.9h2.8v2.8h-2.8zM149.7 149.2h2.8v2.8h-2.8zM150.3 159.7h2.8v2.8h-2.8zM149.6 167.9h2.8v2.8h-2.8zM151.5 177.3h2.8v2.8h-2.8zM152.8 185.7h2.8v2.8h-2.8zM149.9 193.1h2.8v2.8h-2.8zM151.3 202.8h2.8v2.8h-2.8zM151.2 210.6h2.8v2.8h-2.8zM153.7 220.5h2.8v2.8h-2.8zM153.8 226.4h2.8v2.8h-2.8zM152.5 236.5h2.8v2.8h-2.8zM150.7 242.8h2.8v2.8h-2.8zM153.6 251.1h2.8v2.8h-2.8zM153.3 261.4h2.8v2.8h-2.8zM153.4 268.2h2.8v2.8h-2.8zM149.3 278.6h2.8v2.8h-2.8zM152.2 288.4h2.8v2.8h-2.8zM150.5 296.8h2.8v2.8h-2.8zM151.1 302.9h2.8v2.8h-2.8zM149.7 311.8h2.8v2.8h-2.8zM153.6 320.5h2.8v2.8h-2.8zM151.9 328.3h2.8v2.8h-2.8zM162.6 -7.9h2.8v2.8h-2.8zM158.4 -2.8h2.8v2.8h-2.8zM162.0 6.1h2.8v2.8h-2.8zM158.1 16.1h2.8v2.8h-2.8zM158.3 21.9h2.8v2.8h-2.8zM160.8 35.0h2.8v2.8h-2.8zM158.5 42.9h2.8v2.8h-2.8zM160.8 51.5h2.8v2.8h-2.8zM159.2 57.3h2.8v2.8h-2.8zM160.5 65.2h2.8v2.8h-2.8zM159.1 73.2h2.8v2.8h-2.8zM161.9 83.5h2.8v2.8h-2.8zM158.3 94.2h2.8v2.8h-2.8zM158.7 98.3h2.8v2.8h-2.8zM160.1 109.9h2.8v2.8h-2.8zM160.3 118.5h2.8v2.8h-2.8zM159.7 127.8h2.8v2.8h-2.8zM160.7 133.1h2.8v2.8h-2.8zM162.1 141.0h2.8v2.8h-2.8zM159.4 152.2h2.8v2.8h-2.8zM162.5 159.4h2.8v2.8h-2.8zM158.6 169.4h2.8v2.8h-2.8zM161.7 176.1h2.8v2.8h-2.8zM160.2 186.7h2.8v2.8h-2.8zM160.4 196.1h2.8v2.8h-2.8zM158.5 204.3h2.8v2.8h-2.8zM158.0 210.2h2.8v2.8h-2.8zM162.0 219.8h2.8v2.8h-2.8zM162.3 228.7h2.8v2.8h-2.8zM161.6 235.2h2.8v2.8h-2.8zM160.0 245.0h2.8v2.8h-2.8zM159.1 253.4h2.8v2.8h-2.8zM160.9 264.3h2.8v2.8h-2.8zM160.3 268.6h2.8v2.8h-2.8zM159.5 278.1h2.8v2.8h-2.8zM158.9 287.3h2.8v2.8h-2.8zM159.2 297.6h2.8v2.8h-2.8zM159.8 306.5h2.8v2.8h-2.8zM159.1 315.6h2.8v2.8h-2.8zM158.2 322.2h2.8v2.8h-2.8zM158.2 328.7h2.8v2.8h-2.8zM170.1 -9.6h2.8v2.8h-2.8zM167.9 -3.6h2.8v2.8h-2.8zM170.5 7.9h2.8v2.8h-2.8zM166.3 14.9h2.8v2.8h-2.8zM168.6 21.8h2.8v2.8h-2.8zM166.5 33.3h2.8v2.8h-2.8zM170.6 40.3h2.8v2.8h-2.8zM166.3 49.5h2.8v2.8h-2.8zM170.0 59.5h2.8v2.8h-2.8zM170.1 68.0h2.8v2.8h-2.8zM169.7 72.9h2.8v2.8h-2.8zM169.5 85.9h2.8v2.8h-2.8zM168.6 90.9h2.8v2.8h-2.8zM170.5 101.9h2.8v2.8h-2.8zM168.9 106.6h2.8v2.8h-2.8zM168.2 117.1h2.8v2.8h-2.8zM169.8 128.4h2.8v2.8h-2.8zM168.6 134.3h2.8v2.8h-2.8zM169.0 143.5h2.8v2.8h-2.8zM169.4 150.2h2.8v2.8h-2.8zM168.2 161.7h2.8v2.8h-2.8zM168.9 168.1h2.8v2.8h-2.8zM166.8 175.5h2.8v2.8h-2.8zM166.4 187.7h2.8v2.8h-2.8zM168.9 195.2h2.8v2.8h-2.8zM169.6 203.1h2.8v2.8h-2.8zM166.6 210.8h2.8v2.8h-2.8zM167.6 217.1h2.8v2.8h-2.8zM168.6 230.3h2.8v2.8h-2.8zM171.0 234.7h2.8v2.8h-2.8zM170.0 242.7h2.8v2.8h-2.8zM166.8 251.8h2.8v2.8h-2.8zM167.5 259.7h2.8v2.8h-2.8zM167.1 268.4h2.8v2.8h-2.8zM169.6 280.9h2.8v2.8h-2.8zM168.8 285.4h2.8v2.8h-2.8zM167.2 294.0h2.8v2.8h-2.8zM171.1 304.6h2.8v2.8h-2.8zM166.9 313.4h2.8v2.8h-2.8zM167.3 322.2h2.8v2.8h-2.8zM168.4 330.7h2.8v2.8h-2.8zM178.7 -9.9h2.8v2.8h-2.8zM175.4 -1.6h2.8v2.8h-2.8zM177.5 5.6h2.8v2.8h-2.8zM178.9 16.5h2.8v2.8h-2.8zM175.2 25.5h2.8v2.8h-2.8zM178.4 33.1h2.8v2.8h-2.8zM177.2 41.1h2.8v2.8h-2.8zM175.0 47.3h2.8v2.8h-2.8zM178.7 57.7h2.8v2.8h-2.8zM177.5 67.3h2.8v2.8h-2.8zM179.0 76.0h2.8v2.8h-2.8zM176.8 83.7h2.8v2.8h-2.8zM175.7 94.0h2.8v2.8h-2.8zM177.6 98.4h2.8v2.8h-2.8zM178.4 111.6h2.8v2.8h-2.8zM179.3 118.5h2.8v2.8h-2.8zM177.8 128.6h2.8v2.8h-2.8zM178.6 133.9h2.8v2.8h-2.8zM179.0 145.3h2.8v2.8h-2.8zM176.8 151.0h2.8v2.8h-2.8zM177.3 158.3h2.8v2.8h-2.8zM178.8 167.1h2.8v2.8h-2.8zM178.3 176.4h2.8v2.8h-2.8zM175.9 187.3h2.8v2.8h-2.8zM179.5 193.3h2.8v2.8h-2.8zM179.3 201.0h2.8v2.8h-2.8zM176.6 210.4h2.8v2.8h-2.8zM177.7 218.9h2.8v2.8h-2.8zM175.8 228.9h2.8v2.8h-2.8zM176.9 237.6h2.8v2.8h-2.8zM177.3 244.6h2.8v2.8h-2.8zM177.1 255.3h2.8v2.8h-2.8zM178.2 261.3h2.8v2.8h-2.8zM177.0 268.2h2.8v2.8h-2.8zM179.1 281.5h2.8v2.8h-2.8zM178.4 289.6h2.8v2.8h-2.8zM175.4 295.4h2.8v2.8h-2.8zM175.3 302.3h2.8v2.8h-2.8zM176.5 313.3h2.8v2.8h-2.8zM178.6 323.5h2.8v2.8h-2.8zM175.8 332.0h2.8v2.8h-2.8zM187.7 -9.3h2.8v2.8h-2.8zM187.1 0.9h2.8v2.8h-2.8zM185.7 5.2h2.8v2.8h-2.8zM184.0 16.1h2.8v2.8h-2.8zM186.5 23.5h2.8v2.8h-2.8zM184.6 34.0h2.8v2.8h-2.8zM186.7 43.0h2.8v2.8h-2.8zM186.3 50.5h2.8v2.8h-2.8zM185.5 57.5h2.8v2.8h-2.8zM186.2 67.1h2.8v2.8h-2.8zM184.2 74.4h2.8v2.8h-2.8zM183.5 84.5h2.8v2.8h-2.8zM183.8 92.1h2.8v2.8h-2.8zM188.1 102.7h2.8v2.8h-2.8zM186.8 110.7h2.8v2.8h-2.8zM186.6 120.0h2.8v2.8h-2.8zM184.0 126.8h2.8v2.8h-2.8zM185.1 133.9h2.8v2.8h-2.8zM188.0 144.7h2.8v2.8h-2.8zM184.6 151.9h2.8v2.8h-2.8zM186.6 160.5h2.8v2.8h-2.8zM185.0 166.4h2.8v2.8h-2.8zM186.7 178.3h2.8v2.8h-2.8zM185.0 183.4h2.8v2.8h-2.8zM183.4 195.2h2.8v2.8h-2.8zM186.7 204.6h2.8v2.8h-2.8zM185.0 211.6h2.8v2.8h-2.8zM186.5 220.8h2.8v2.8h-2.8zM187.9 227.4h2.8v2.8h-2.8zM186.2 238.5h2.8v2.8h-2.8zM187.5 243.5h2.8v2.8h-2.8zM184.3 252.9h2.8v2.8h-2.8zM184.4 260.7h2.8v2.8h-2.8zM187.7 271.1h2.8v2.8h-2.8zM187.0 279.4h2.8v2.8h-2.8zM183.3 287.3h2.8v2.8h-2.8zM184.2 294.9h2.8v2.8h-2.8zM187.1 304.3h2.8v2.8h-2.8zM186.1 311.8h2.8v2.8h-2.8zM183.1 320.2h2.8v2.8h-2.8zM183.6 332.3h2.8v2.8h-2.8zM196.2 -9.9h2.8v2.8h-2.8zM195.9 -2.5h2.8v2.8h-2.8zM195.9 5.9h2.8v2.8h-2.8zM194.4 14.7h2.8v2.8h-2.8zM193.0 24.6h2.8v2.8h-2.8zM192.9 33.6h2.8v2.8h-2.8zM196.6 43.1h2.8v2.8h-2.8zM192.2 47.1h2.8v2.8h-2.8zM194.2 60.0h2.8v2.8h-2.8zM195.2 68.4h2.8v2.8h-2.8zM194.9 74.5h2.8v2.8h-2.8zM193.3 84.7h2.8v2.8h-2.8zM195.5 93.8h2.8v2.8h-2.8zM192.5 99.6h2.8v2.8h-2.8zM191.7 107.6h2.8v2.8h-2.8zM193.7 119.1h2.8v2.8h-2.8zM196.3 127.6h2.8v2.8h-2.8zM194.8 134.9h2.8v2.8h-2.8zM192.5 144.2h2.8v2.8h-2.8zM193.1 152.4h2.8v2.8h-2.8zM194.3 160.0h2.8v2.8h-2.8zM195.2 166.8h2.8v2.8h-2.8zM194.0 175.1h2.8v2.8h-2.8zM193.6 185.7h2.8v2.8h-2.8zM195.7 192.8h2.8v2.8h-2.8zM194.9 204.4h2.8v2.8h-2.8zM192.6 208.9h2.8v2.8h-2.8zM195.0 217.8h2.8v2.8h-2.8zM192.2 227.0h2.8v2.8h-2.8zM194.7 236.6h2.8v2.8h-2.8zM192.9 242.8h2.8v2.8h-2.8zM195.4 252.7h2.8v2.8h-2.8zM192.6 262.4h2.8v2.8h-2.8zM193.8 268.5h2.8v2.8h-2.8zM192.6 281.2h2.8v2.8h-2.8zM195.6 285.7h2.8v2.8h-2.8zM192.9 295.0h2.8v2.8h-2.8zM194.2 306.5h2.8v2.8h-2.8zM194.3 310.9h2.8v2.8h-2.8zM196.3 319.7h2.8v2.8h-2.8zM193.8 331.0h2.8v2.8h-2.8zM203.3 -10.9h2.8v2.8h-2.8zM202.9 -0.9h2.8v2.8h-2.8zM200.4 9.0h2.8v2.8h-2.8zM202.1 15.3h2.8v2.8h-2.8zM202.4 25.7h2.8v2.8h-2.8zM202.0 34.9h2.8v2.8h-2.8zM202.7 42.3h2.8v2.8h-2.8zM204.0 47.5h2.8v2.8h-2.8zM202.9 56.3h2.8v2.8h-2.8zM201.7 66.6h2.8v2.8h-2.8zM201.6 77.6h2.8v2.8h-2.8zM201.7 82.7h2.8v2.8h-2.8zM202.9 90.8h2.8v2.8h-2.8zM204.9 103.0h2.8v2.8h-2.8zM203.1 110.8h2.8v2.8h-2.8zM202.1 117.2h2.8v2.8h-2.8zM201.8 128.1h2.8v2.8h-2.8zM204.1 132.2h2.8v2.8h-2.8zM200.9 143.0h2.8v2.8h-2.8zM202.8 151.4h2.8v2.8h-2.8zM201.9 157.9h2.8v2.8h-2.8zM201.0 170.8h2.8v2.8h-2.8zM203.4 176.5h2.8v2.8h-2.8zM201.6 183.4h2.8v2.8h-2.8zM200.8 195.9h2.8v2.8h-2.8zM202.1 203.0h2.8v2.8h-2.8zM201.1 212.5h2.8v2.8h-2.8zM200.8 218.4h2.8v2.8h-2.8zM200.1 225.7h2.8v2.8h-2.8zM201.1 237.1h2.8v2.8h-2.8zM204.1 243.5h2.8v2.8h-2.8zM201.2 251.9h2.8v2.8h-2.8zM203.0 264.5h2.8v2.8h-2.8zM202.7 268.1h2.8v2.8h-2.8zM203.8 277.8h2.8v2.8h-2.8zM200.3 289.0h2.8v2.8h-2.8zM200.5 294.3h2.8v2.8h-2.8zM204.9 306.3h2.8v2.8h-2.8zM201.8 312.6h2.8v2.8h-2.8zM201.1 322.0h2.8v2.8h-2.8zM202.1 328.2h2.8v2.8h-2.8zM209.8 -8.2h2.8v2.8h-2.8zM209.5 -3.0h2.8v2.8h-2.8zM209.1 8.2h2.8v2.8h-2.8zM212.7 15.8h2.8v2.8h-2.8zM209.1 22.8h2.8v2.8h-2.8zM210.0 31.3h2.8v2.8h-2.8zM210.3 40.2h2.8v2.8h-2.8zM212.0 47.5h2.8v2.8h-2.8zM209.3 59.6h2.8v2.8h-2.8zM209.6 66.9h2.8v2.8h-2.8zM211.3 75.2h2.8v2.8h-2.8zM213.3 82.6h2.8v2.8h-2.8zM208.8 90.0h2.8v2.8h-2.8zM213.3 100.7h2.8v2.8h-2.8zM210.0 108.6h2.8v2.8h-2.8zM209.8 118.5h2.8v2.8h-2.8zM209.2 126.6h2.8v2.8h-2.8zM212.4 133.4h2.8v2.8h-2.8zM213.5 142.3h2.8v2.8h-2.8zM213.6 150.9h2.8v2.8h-2.8zM210.9 161.5h2.8v2.8h-2.8zM212.1 166.5h2.8v2.8h-2.8zM210.1 176.8h2.8v2.8h-2.8zM210.4 185.6h2.8v2.8h-2.8zM209.2 195.3h2.8v2.8h-2.8zM209.7 202.7h2.8v2.8h-2.8zM212.2 209.4h2.8v2.8h-2.8zM211.8 220.8h2.8v2.8h-2.8zM209.4 228.5h2.8v2.8h-2.8zM211.4 239.0h2.8v2.8h-2.8zM212.7 244.6h2.8v2.8h-2.8zM212.0 253.1h2.8v2.8h-2.8zM209.7 260.7h2.8v2.8h-2.8zM209.5 270.4h2.8v2.8h-2.8zM211.1 276.7h2.8v2.8h-2.8zM208.6 286.7h2.8v2.8h-2.8zM210.7 295.3h2.8v2.8h-2.8zM208.8 302.1h2.8v2.8h-2.8zM210.6 311.8h2.8v2.8h-2.8zM210.3 323.2h2.8v2.8h-2.8zM208.6 331.1h2.8v2.8h-2.8zM220.8 -12.1h2.8v2.8h-2.8zM219.8 -3.2h2.8v2.8h-2.8zM218.0 5.8h2.8v2.8h-2.8zM219.9 13.1h2.8v2.8h-2.8zM219.2 23.2h2.8v2.8h-2.8zM220.7 33.6h2.8v2.8h-2.8zM221.0 43.3h2.8v2.8h-2.8zM219.6 47.1h2.8v2.8h-2.8zM221.7 55.9h2.8v2.8h-2.8zM221.7 68.1h2.8v2.8h-2.8zM218.0 74.4h2.8v2.8h-2.8zM220.0 83.2h2.8v2.8h-2.8zM221.0 89.7h2.8v2.8h-2.8zM219.9 98.7h2.8v2.8h-2.8zM219.2 110.4h2.8v2.8h-2.8zM221.3 115.8h2.8v2.8h-2.8zM220.6 123.9h2.8v2.8h-2.8zM221.3 134.0h2.8v2.8h-2.8zM218.0 143.7h2.8v2.8h-2.8zM217.2 153.3h2.8v2.8h-2.8zM221.8 162.5h2.8v2.8h-2.8zM219.0 167.3h2.8v2.8h-2.8zM221.8 179.2h2.8v2.8h-2.8zM221.7 187.7h2.8v2.8h-2.8zM220.3 191.6h2.8v2.8h-2.8zM220.8 204.9h2.8v2.8h-2.8zM218.1 209.8h2.8v2.8h-2.8zM218.4 221.0h2.8v2.8h-2.8zM220.2 225.8h2.8v2.8h-2.8zM219.8 235.7h2.8v2.8h-2.8zM221.0 245.7h2.8v2.8h-2.8zM218.8 251.9h2.8v2.8h-2.8zM217.4 263.2h2.8v2.8h-2.8zM220.2 269.6h2.8v2.8h-2.8zM221.4 277.0h2.8v2.8h-2.8zM221.4 286.0h2.8v2.8h-2.8zM220.6 295.0h2.8v2.8h-2.8zM217.7 303.6h2.8v2.8h-2.8zM220.9 314.0h2.8v2.8h-2.8zM220.8 320.5h2.8v2.8h-2.8zM221.2 328.0h2.8v2.8h-2.8zM226.5 -7.7h2.8v2.8h-2.8zM228.3 -0.1h2.8v2.8h-2.8zM228.6 5.8h2.8v2.8h-2.8zM227.1 16.7h2.8v2.8h-2.8zM228.0 25.3h2.8v2.8h-2.8zM230.0 32.4h2.8v2.8h-2.8zM229.8 41.4h2.8v2.8h-2.8zM230.6 49.6h2.8v2.8h-2.8zM230.6 58.4h2.8v2.8h-2.8zM229.5 68.3h2.8v2.8h-2.8zM230.0 74.5h2.8v2.8h-2.8zM226.2 81.1h2.8v2.8h-2.8zM230.3 90.5h2.8v2.8h-2.8zM229.9 100.5h2.8v2.8h-2.8zM227.8 111.4h2.8v2.8h-2.8zM228.3 115.4h2.8v2.8h-2.8zM229.6 123.9h2.8v2.8h-2.8zM228.3 136.1h2.8v2.8h-2.8zM227.9 145.1h2.8v2.8h-2.8zM226.1 150.7h2.8v2.8h-2.8zM230.1 161.8h2.8v2.8h-2.8zM228.3 167.6h2.8v2.8h-2.8zM226.3 178.9h2.8v2.8h-2.8zM226.8 186.7h2.8v2.8h-2.8zM227.6 194.7h2.8v2.8h-2.8zM226.4 203.0h2.8v2.8h-2.8zM229.8 210.7h2.8v2.8h-2.8zM228.3 218.2h2.8v2.8h-2.8zM230.3 229.4h2.8v2.8h-2.8zM226.4 239.0h2.8v2.8h-2.8zM230.1 245.7h2.8v2.8h-2.8zM230.2 255.5h2.8v2.8h-2.8zM229.5 263.9h2.8v2.8h-2.8zM225.8 269.1h2.8v2.8h-2.8zM229.2 280.6h2.8v2.8h-2.8zM226.4 287.4h2.8v2.8h-2.8zM227.2 298.0h2.8v2.8h-2.8zM227.7 305.7h2.8v2.8h-2.8zM229.0 312.2h2.8v2.8h-2.8zM230.6 323.3h2.8v2.8h-2.8zM227.0 329.5h2.8v2.8h-2.8zM234.9 -7.7h2.8v2.8h-2.8zM235.0 1.1h2.8v2.8h-2.8zM235.8 7.8h2.8v2.8h-2.8zM235.8 16.7h2.8v2.8h-2.8zM237.7 26.2h2.8v2.8h-2.8zM236.6 31.5h2.8v2.8h-2.8zM237.6 38.7h2.8v2.8h-2.8zM237.2 47.3h2.8v2.8h-2.8zM238.5 60.0h2.8v2.8h-2.8zM237.8 67.0h2.8v2.8h-2.8zM234.1 73.5h2.8v2.8h-2.8zM238.6 81.2h2.8v2.8h-2.8zM235.6 89.8h2.8v2.8h-2.8zM236.8 101.3h2.8v2.8h-2.8zM234.5 106.9h2.8v2.8h-2.8zM235.5 118.1h2.8v2.8h-2.8zM236.1 124.8h2.8v2.8h-2.8zM234.3 136.1h2.8v2.8h-2.8zM238.8 142.2h2.8v2.8h-2.8zM238.9 150.0h2.8v2.8h-2.8zM236.5 160.3h2.8v2.8h-2.8zM239.0 167.4h2.8v2.8h-2.8zM238.4 175.8h2.8v2.8h-2.8zM235.2 183.4h2.8v2.8h-2.8zM235.3 191.9h2.8v2.8h-2.8zM238.6 200.1h2.8v2.8h-2.8zM238.4 211.5h2.8v2.8h-2.8zM234.7 219.0h2.8v2.8h-2.8zM236.8 228.9h2.8v2.8h-2.8zM236.1 235.0h2.8v2.8h-2.8zM235.2 245.0h2.8v2.8h-2.8zM237.0 255.8h2.8v2.8h-2.8zM234.7 261.0h2.8v2.8h-2.8zM236.5 271.9h2.8v2.8h-2.8zM235.9 278.8h2.8v2.8h-2.8zM239.1 285.1h2.8v2.8h-2.8zM234.5 294.7h2.8v2.8h-2.8zM237.5 303.1h2.8v2.8h-2.8zM235.9 313.9h2.8v2.8h-2.8zM236.6 320.7h2.8v2.8h-2.8zM238.7 329.9h2.8v2.8h-2.8zM242.8 -8.4h2.8v2.8h-2.8zM247.2 -2.9h2.8v2.8h-2.8zM245.3 4.9h2.8v2.8h-2.8zM244.1 18.1h2.8v2.8h-2.8zM244.7 23.5h2.8v2.8h-2.8zM243.7 30.9h2.8v2.8h-2.8zM243.0 38.6h2.8v2.8h-2.8zM246.7 50.2h2.8v2.8h-2.8zM242.7 56.0h2.8v2.8h-2.8zM247.5 68.1h2.8v2.8h-2.8zM243.4 77.6h2.8v2.8h-2.8zM245.7 83.1h2.8v2.8h-2.8zM243.1 89.9h2.8v2.8h-2.8zM244.1 98.8h2.8v2.8h-2.8zM244.7 109.3h2.8v2.8h-2.8zM244.5 116.6h2.8v2.8h-2.8zM247.0 126.2h2.8v2.8h-2.8zM247.5 133.6h2.8v2.8h-2.8zM244.1 144.2h2.8v2.8h-2.8zM243.3 154.0h2.8v2.8h-2.8zM244.0 161.9h2.8v2.8h-2.8zM244.8 170.0h2.8v2.8h-2.8zM244.0 178.1h2.8v2.8h-2.8zM243.9 186.2h2.8v2.8h-2.8zM244.2 191.6h2.8v2.8h-2.8zM247.4 200.6h2.8v2.8h-2.8zM242.7 213.3h2.8v2.8h-2.8zM246.9 217.5h2.8v2.8h-2.8zM243.8 228.2h2.8v2.8h-2.8zM243.0 236.2h2.8v2.8h-2.8zM247.5 246.3h2.8v2.8h-2.8zM245.5 251.7h2.8v2.8h-2.8zM245.4 264.3h2.8v2.8h-2.8zM247.1 271.4h2.8v2.8h-2.8zM246.0 280.2h2.8v2.8h-2.8zM242.6 285.3h2.8v2.8h-2.8zM246.0 296.3h2.8v2.8h-2.8zM246.8 303.5h2.8v2.8h-2.8zM245.5 312.9h2.8v2.8h-2.8zM246.2 319.4h2.8v2.8h-2.8zM244.9 331.7h2.8v2.8h-2.8zM251.1 -10.7h2.8v2.8h-2.8zM252.8 -1.8h2.8v2.8h-2.8zM254.5 7.0h2.8v2.8h-2.8zM254.8 15.7h2.8v2.8h-2.8zM252.6 25.9h2.8v2.8h-2.8zM253.4 31.1h2.8v2.8h-2.8zM252.7 43.2h2.8v2.8h-2.8zM255.9 50.2h2.8v2.8h-2.8zM252.2 57.7h2.8v2.8h-2.8zM255.5 65.3h2.8v2.8h-2.8zM252.4 74.1h2.8v2.8h-2.8zM253.1 81.8h2.8v2.8h-2.8zM252.3 90.0h2.8v2.8h-2.8zM253.6 99.0h2.8v2.8h-2.8zM252.2 108.1h2.8v2.8h-2.8zM253.2 117.0h2.8v2.8h-2.8zM253.8 123.8h2.8v2.8h-2.8zM251.2 133.7h2.8v2.8h-2.8zM253.3 145.6h2.8v2.8h-2.8zM251.2 153.4h2.8v2.8h-2.8zM251.8 160.3h2.8v2.8h-2.8zM255.0 170.0h2.8v2.8h-2.8zM252.2 178.7h2.8v2.8h-2.8zM251.3 185.0h2.8v2.8h-2.8zM256.0 195.4h2.8v2.8h-2.8zM253.2 201.1h2.8v2.8h-2.8zM253.2 210.7h2.8v2.8h-2.8zM256.0 218.1h2.8v2.8h-2.8zM255.2 229.7h2.8v2.8h-2.8zM252.5 238.3h2.8v2.8h-2.8zM256.0 244.9h2.8v2.8h-2.8zM252.8 253.4h2.8v2.8h-2.8zM253.9 262.6h2.8v2.8h-2.8zM253.7 272.4h2.8v2.8h-2.8zM252.7 281.6h2.8v2.8h-2.8zM253.7 285.5h2.8v2.8h-2.8zM252.1 296.4h2.8v2.8h-2.8zM255.2 303.1h2.8v2.8h-2.8zM256.0 311.1h2.8v2.8h-2.8zM256.0 320.0h2.8v2.8h-2.8zM254.1 331.4h2.8v2.8h-2.8zM260.6 -10.4h2.8v2.8h-2.8zM260.1 0.4h2.8v2.8h-2.8zM262.2 8.0h2.8v2.8h-2.8zM262.2 17.8h2.8v2.8h-2.8zM262.5 23.8h2.8v2.8h-2.8zM263.5 33.4h2.8v2.8h-2.8zM262.0 38.9h2.8v2.8h-2.8zM264.6 47.5h2.8v2.8h-2.8zM261.7 59.6h2.8v2.8h-2.8zM260.7 65.7h2.8v2.8h-2.8zM260.3 73.2h2.8v2.8h-2.8zM262.8 82.4h2.8v2.8h-2.8zM260.0 94.3h2.8v2.8h-2.8zM261.0 100.6h2.8v2.8h-2.8zM262.7 109.8h2.8v2.8h-2.8zM261.4 118.0h2.8v2.8h-2.8zM263.8 126.2h2.8v2.8h-2.8zM261.1 133.3h2.8v2.8h-2.8zM261.2 143.0h2.8v2.8h-2.8zM264.0 152.0h2.8v2.8h-2.8zM263.3 160.6h2.8v2.8h-2.8zM261.2 171.0h2.8v2.8h-2.8zM259.9 176.5h2.8v2.8h-2.8zM261.2 184.2h2.8v2.8h-2.8zM259.8 193.7h2.8v2.8h-2.8zM264.6 203.7h2.8v2.8h-2.8zM260.3 213.0h2.8v2.8h-2.8zM263.6 221.7h2.8v2.8h-2.8zM260.7 229.8h2.8v2.8h-2.8zM259.7 235.6h2.8v2.8h-2.8zM261.8 244.5h2.8v2.8h-2.8zM262.4 254.4h2.8v2.8h-2.8zM261.0 259.9h2.8v2.8h-2.8zM259.7 270.1h2.8v2.8h-2.8zM264.3 279.7h2.8v2.8h-2.8zM261.6 289.2h2.8v2.8h-2.8zM264.5 298.6h2.8v2.8h-2.8zM260.3 303.0h2.8v2.8h-2.8zM260.4 315.4h2.8v2.8h-2.8zM264.0 321.6h2.8v2.8h-2.8zM262.7 329.9h2.8v2.8h-2.8zM272.2 -9.1h2.8v2.8h-2.8zM269.8 -3.3h2.8v2.8h-2.8zM270.8 4.7h2.8v2.8h-2.8zM270.8 14.8h2.8v2.8h-2.8zM270.9 22.9h2.8v2.8h-2.8zM270.5 34.6h2.8v2.8h-2.8zM268.6 39.0h2.8v2.8h-2.8zM268.8 47.8h2.8v2.8h-2.8zM272.6 56.7h2.8v2.8h-2.8zM271.7 68.1h2.8v2.8h-2.8zM270.7 76.5h2.8v2.8h-2.8zM269.1 81.9h2.8v2.8h-2.8zM270.1 90.4h2.8v2.8h-2.8zM271.6 100.3h2.8v2.8h-2.8zM271.5 109.4h2.8v2.8h-2.8zM270.8 116.6h2.8v2.8h-2.8zM272.8 123.7h2.8v2.8h-2.8zM271.2 136.3h2.8v2.8h-2.8zM271.9 141.1h2.8v2.8h-2.8zM272.5 153.2h2.8v2.8h-2.8zM272.4 160.7h2.8v2.8h-2.8zM272.4 170.1h2.8v2.8h-2.8zM272.9 177.6h2.8v2.8h-2.8zM272.1 184.2h2.8v2.8h-2.8zM272.6 193.7h2.8v2.8h-2.8zM270.9 200.2h2.8v2.8h-2.8zM268.5 211.0h2.8v2.8h-2.8zM271.3 221.2h2.8v2.8h-2.8zM272.2 228.3h2.8v2.8h-2.8zM271.7 234.3h2.8v2.8h-2.8zM270.9 245.2h2.8v2.8h-2.8zM271.8 253.7h2.8v2.8h-2.8zM268.6 263.0h2.8v2.8h-2.8zM271.9 271.2h2.8v2.8h-2.8zM272.6 280.2h2.8v2.8h-2.8zM270.0 287.3h2.8v2.8h-2.8zM269.1 296.5h2.8v2.8h-2.8zM268.3 304.6h2.8v2.8h-2.8zM272.6 313.6h2.8v2.8h-2.8zM270.5 320.3h2.8v2.8h-2.8zM268.4 328.7h2.8v2.8h-2.8zM280.7 -10.1h2.8v2.8h-2.8zM277.0 -1.2h2.8v2.8h-2.8zM280.1 6.8h2.8v2.8h-2.8zM279.2 13.5h2.8v2.8h-2.8zM277.3 24.5h2.8v2.8h-2.8zM278.3 32.3h2.8v2.8h-2.8zM281.5 39.1h2.8v2.8h-2.8zM276.6 48.3h2.8v2.8h-2.8zM280.2 56.6h2.8v2.8h-2.8zM278.1 66.7h2.8v2.8h-2.8zM278.4 75.8h2.8v2.8h-2.8zM280.0 83.0h2.8v2.8h-2.8zM278.7 94.5h2.8v2.8h-2.8zM279.0 102.1h2.8v2.8h-2.8zM281.6 107.2h2.8v2.8h-2.8zM277.1 116.0h2.8v2.8h-2.8zM277.2 127.3h2.8v2.8h-2.8zM277.8 132.4h2.8v2.8h-2.8zM278.3 144.6h2.8v2.8h-2.8zM278.3 151.5h2.8v2.8h-2.8zM277.9 162.6h2.8v2.8h-2.8zM279.5 167.6h2.8v2.8h-2.8zM277.5 175.3h2.8v2.8h-2.8zM278.0 187.6h2.8v2.8h-2.8zM277.2 196.0h2.8v2.8h-2.8zM281.4 201.3h2.8v2.8h-2.8zM276.7 209.8h2.8v2.8h-2.8zM276.7 220.3h2.8v2.8h-2.8zM279.3 227.3h2.8v2.8h-2.8zM281.5 238.9h2.8v2.8h-2.8zM279.8 245.9h2.8v2.8h-2.8zM281.6 254.0h2.8v2.8h-2.8zM280.5 262.4h2.8v2.8h-2.8zM278.6 272.3h2.8v2.8h-2.8zM280.0 276.6h2.8v2.8h-2.8zM277.1 286.2h2.8v2.8h-2.8zM277.6 294.7h2.8v2.8h-2.8zM277.1 306.8h2.8v2.8h-2.8zM278.5 313.1h2.8v2.8h-2.8zM280.5 319.2h2.8v2.8h-2.8zM277.1 331.3h2.8v2.8h-2.8zM287.3 -11.5h2.8v2.8h-2.8zM288.9 -2.3h2.8v2.8h-2.8zM285.6 5.0h2.8v2.8h-2.8zM287.6 13.8h2.8v2.8h-2.8zM285.6 24.7h2.8v2.8h-2.8zM288.0 31.0h2.8v2.8h-2.8zM285.9 40.3h2.8v2.8h-2.8zM285.2 47.8h2.8v2.8h-2.8zM288.0 56.8h2.8v2.8h-2.8zM287.0 67.9h2.8v2.8h-2.8zM289.2 72.7h2.8v2.8h-2.8zM288.8 86.0h2.8v2.8h-2.8zM285.7 90.1h2.8v2.8h-2.8zM289.3 101.4h2.8v2.8h-2.8zM285.5 111.1h2.8v2.8h-2.8zM286.5 119.1h2.8v2.8h-2.8zM290.0 123.7h2.8v2.8h-2.8zM289.4 135.9h2.8v2.8h-2.8zM287.6 143.7h2.8v2.8h-2.8zM288.7 153.0h2.8v2.8h-2.8zM286.1 161.0h2.8v2.8h-2.8zM285.1 169.8h2.8v2.8h-2.8zM289.0 177.4h2.8v2.8h-2.8zM288.9 183.5h2.8v2.8h-2.8zM288.3 192.1h2.8v2.8h-2.8zM288.8 205.1h2.8v2.8h-2.8zM288.6 208.7h2.8v2.8h-2.8zM289.6 220.6h2.8v2.8h-2.8zM285.9 226.5h2.8v2.8h-2.8zM285.4 237.9h2.8v2.8h-2.8zM288.7 243.0h2.8v2.8h-2.8zM288.3 253.7h2.8v2.8h-2.8zM289.2 260.7h2.8v2.8h-2.8zM286.1 268.9h2.8v2.8h-2.8zM288.3 280.8h2.8v2.8h-2.8zM286.1 288.2h2.8v2.8h-2.8zM287.7 296.2h2.8v2.8h-2.8zM286.3 303.9h2.8v2.8h-2.8zM288.4 311.0h2.8v2.8h-2.8zM288.2 319.6h2.8v2.8h-2.8zM285.3 328.5h2.8v2.8h-2.8zM296.5 -10.0h2.8v2.8h-2.8zM293.8 0.7h2.8v2.8h-2.8zM293.9 6.0h2.8v2.8h-2.8zM296.3 16.5h2.8v2.8h-2.8zM298.1 26.5h2.8v2.8h-2.8zM294.2 34.3h2.8v2.8h-2.8zM294.8 42.9h2.8v2.8h-2.8zM293.8 50.2h2.8v2.8h-2.8zM298.2 56.7h2.8v2.8h-2.8zM298.6 69.1h2.8v2.8h-2.8zM295.7 73.5h2.8v2.8h-2.8zM297.5 83.8h2.8v2.8h-2.8zM294.1 93.5h2.8v2.8h-2.8zM298.4 101.1h2.8v2.8h-2.8zM296.0 108.4h2.8v2.8h-2.8zM297.2 120.0h2.8v2.8h-2.8zM295.8 125.8h2.8v2.8h-2.8zM298.4 137.1h2.8v2.8h-2.8zM295.7 140.9h2.8v2.8h-2.8zM298.4 152.6h2.8v2.8h-2.8zM296.6 161.6h2.8v2.8h-2.8zM294.7 170.5h2.8v2.8h-2.8zM296.5 177.7h2.8v2.8h-2.8zM294.5 184.0h2.8v2.8h-2.8zM294.1 196.1h2.8v2.8h-2.8zM297.5 203.7h2.8v2.8h-2.8zM298.4 209.2h2.8v2.8h-2.8zM297.9 219.1h2.8v2.8h-2.8zM295.9 226.3h2.8v2.8h-2.8zM295.3 238.2h2.8v2.8h-2.8zM296.4 247.6h2.8v2.8h-2.8zM295.0 253.5h2.8v2.8h-2.8zM297.6 260.1h2.8v2.8h-2.8zM298.2 271.2h2.8v2.8h-2.8zM295.5 281.0h2.8v2.8h-2.8zM298.3 289.6h2.8v2.8h-2.8zM297.3 296.0h2.8v2.8h-2.8zM296.3 306.7h2.8v2.8h-2.8zM298.0 312.8h2.8v2.8h-2.8zM296.1 323.5h2.8v2.8h-2.8zM296.6 332.4h2.8v2.8h-2.8zM302.5 -8.4h2.8v2.8h-2.8zM305.7 -1.4h2.8v2.8h-2.8zM305.5 5.8h2.8v2.8h-2.8zM302.1 14.2h2.8v2.8h-2.8zM303.6 22.5h2.8v2.8h-2.8zM303.4 33.5h2.8v2.8h-2.8zM303.4 40.1h2.8v2.8h-2.8zM307.0 47.8h2.8v2.8h-2.8zM305.9 56.2h2.8v2.8h-2.8zM303.9 68.1h2.8v2.8h-2.8zM303.5 76.0h2.8v2.8h-2.8zM304.5 84.4h2.8v2.8h-2.8zM305.9 90.1h2.8v2.8h-2.8zM302.6 102.1h2.8v2.8h-2.8zM305.1 108.1h2.8v2.8h-2.8zM303.5 119.5h2.8v2.8h-2.8zM305.0 124.3h2.8v2.8h-2.8zM303.8 135.1h2.8v2.8h-2.8zM304.7 141.2h2.8v2.8h-2.8zM303.8 149.7h2.8v2.8h-2.8zM306.8 159.7h2.8v2.8h-2.8zM306.0 169.7h2.8v2.8h-2.8zM303.5 178.6h2.8v2.8h-2.8zM304.7 185.0h2.8v2.8h-2.8zM306.2 195.8h2.8v2.8h-2.8zM305.5 202.3h2.8v2.8h-2.8zM305.1 210.1h2.8v2.8h-2.8zM306.2 220.7h2.8v2.8h-2.8zM303.3 225.6h2.8v2.8h-2.8zM305.1 238.0h2.8v2.8h-2.8zM302.9 246.9h2.8v2.8h-2.8zM305.6 255.5h2.8v2.8h-2.8zM303.0 264.2h2.8v2.8h-2.8zM302.4 268.6h2.8v2.8h-2.8zM303.3 280.0h2.8v2.8h-2.8zM304.6 286.2h2.8v2.8h-2.8zM303.3 296.5h2.8v2.8h-2.8zM304.0 302.8h2.8v2.8h-2.8zM306.4 314.7h2.8v2.8h-2.8zM304.3 323.6h2.8v2.8h-2.8zM305.5 327.7h2.8v2.8h-2.8zM314.7 -9.4h2.8v2.8h-2.8zM313.8 -1.5h2.8v2.8h-2.8zM313.7 9.6h2.8v2.8h-2.8zM311.6 13.2h2.8v2.8h-2.8zM313.9 21.8h2.8v2.8h-2.8zM313.1 31.5h2.8v2.8h-2.8zM311.4 39.7h2.8v2.8h-2.8zM311.3 50.1h2.8v2.8h-2.8zM312.1 58.2h2.8v2.8h-2.8zM314.6 66.1h2.8v2.8h-2.8zM315.5 76.1h2.8v2.8h-2.8zM315.4 84.1h2.8v2.8h-2.8zM311.9 91.3h2.8v2.8h-2.8zM313.8 101.6h2.8v2.8h-2.8zM313.1 111.2h2.8v2.8h-2.8zM312.5 119.3h2.8v2.8h-2.8zM314.5 127.6h2.8v2.8h-2.8zM310.8 137.0h2.8v2.8h-2.8zM314.2 142.4h2.8v2.8h-2.8zM315.2 151.9h2.8v2.8h-2.8zM315.3 162.6h2.8v2.8h-2.8zM312.4 167.8h2.8v2.8h-2.8zM315.6 179.3h2.8v2.8h-2.8zM314.9 184.2h2.8v2.8h-2.8zM313.7 195.8h2.8v2.8h-2.8zM315.4 202.1h2.8v2.8h-2.8zM314.7 209.1h2.8v2.8h-2.8zM311.2 220.7h2.8v2.8h-2.8zM311.7 228.5h2.8v2.8h-2.8zM314.3 235.1h2.8v2.8h-2.8zM314.4 243.4h2.8v2.8h-2.8zM311.5 255.5h2.8v2.8h-2.8zM310.6 264.1h2.8v2.8h-2.8zM313.5 271.9h2.8v2.8h-2.8zM311.6 277.4h2.8v2.8h-2.8zM311.6 287.7h2.8v2.8h-2.8zM313.0 298.0h2.8v2.8h-2.8zM312.6 303.7h2.8v2.8h-2.8zM313.3 314.7h2.8v2.8h-2.8zM313.1 322.4h2.8v2.8h-2.8zM315.4 328.9h2.8v2.8h-2.8zM322.6 -9.7h2.8v2.8h-2.8zM321.3 -0.8h2.8v2.8h-2.8zM320.3 8.1h2.8v2.8h-2.8zM323.9 17.7h2.8v2.8h-2.8zM320.5 23.8h2.8v2.8h-2.8zM324.0 34.0h2.8v2.8h-2.8zM320.0 42.0h2.8v2.8h-2.8zM322.5 49.3h2.8v2.8h-2.8zM321.2 60.2h2.8v2.8h-2.8zM321.8 65.5h2.8v2.8h-2.8zM321.4 74.6h2.8v2.8h-2.8zM323.8 81.2h2.8v2.8h-2.8zM323.1 93.4h2.8v2.8h-2.8zM323.9 99.2h2.8v2.8h-2.8zM323.7 109.5h2.8v2.8h-2.8zM319.5 118.1h2.8v2.8h-2.8zM322.9 126.1h2.8v2.8h-2.8zM324.1 134.2h2.8v2.8h-2.8zM320.2 143.6h2.8v2.8h-2.8zM320.7 151.0h2.8v2.8h-2.8zM319.9 161.8h2.8v2.8h-2.8zM320.7 167.8h2.8v2.8h-2.8zM319.3 178.6h2.8v2.8h-2.8zM323.0 186.9h2.8v2.8h-2.8zM323.4 191.8h2.8v2.8h-2.8zM319.5 200.2h2.8v2.8h-2.8zM321.7 213.6h2.8v2.8h-2.8zM321.6 222.0h2.8v2.8h-2.8zM319.7 229.6h2.8v2.8h-2.8zM320.6 235.2h2.8v2.8h-2.8zM322.9 245.3h2.8v2.8h-2.8zM320.4 252.6h2.8v2.8h-2.8zM323.0 263.5h2.8v2.8h-2.8zM323.1 268.3h2.8v2.8h-2.8zM323.7 280.6h2.8v2.8h-2.8zM320.3 286.0h2.8v2.8h-2.8zM322.5 294.0h2.8v2.8h-2.8zM324.1 303.9h2.8v2.8h-2.8zM321.5 313.3h2.8v2.8h-2.8zM319.5 322.6h2.8v2.8h-2.8zM324.0 330.7h2.8v2.8h-2.8zM332.2 -8.2h2.8v2.8h-2.8zM332.4 -3.1h2.8v2.8h-2.8zM328.2 7.5h2.8v2.8h-2.8zM328.8 17.8h2.8v2.8h-2.8zM331.1 22.8h2.8v2.8h-2.8zM331.4 34.8h2.8v2.8h-2.8zM332.1 43.5h2.8v2.8h-2.8zM328.4 50.7h2.8v2.8h-2.8zM329.1 59.3h2.8v2.8h-2.8zM331.6 64.4h2.8v2.8h-2.8zM329.1 74.1h2.8v2.8h-2.8zM330.6 83.6h2.8v2.8h-2.8zM332.6 91.5h2.8v2.8h-2.8zM329.6 102.0h2.8v2.8h-2.8zM327.7 107.6h2.8v2.8h-2.8zM329.5 116.4h2.8v2.8h-2.8zM329.0 125.8h2.8v2.8h-2.8zM330.0 132.1h2.8v2.8h-2.8zM330.4 144.0h2.8v2.8h-2.8zM327.8 151.6h2.8v2.8h-2.8zM329.3 159.8h2.8v2.8h-2.8zM329.5 168.5h2.8v2.8h-2.8zM331.5 176.8h2.8v2.8h-2.8zM331.2 183.5h2.8v2.8h-2.8zM329.4 193.8h2.8v2.8h-2.8zM327.7 203.2h2.8v2.8h-2.8zM327.9 213.6h2.8v2.8h-2.8zM329.9 222.1h2.8v2.8h-2.8zM328.3 229.4h2.8v2.8h-2.8zM332.0 237.4h2.8v2.8h-2.8zM328.9 243.3h2.8v2.8h-2.8zM330.8 255.5h2.8v2.8h-2.8zM328.9 261.8h2.8v2.8h-2.8zM331.6 270.1h2.8v2.8h-2.8zM329.0 277.1h2.8v2.8h-2.8zM329.7 285.7h2.8v2.8h-2.8zM332.1 294.5h2.8v2.8h-2.8zM331.7 307.1h2.8v2.8h-2.8zM332.1 311.4h2.8v2.8h-2.8zM328.8 320.8h2.8v2.8h-2.8zM328.9 327.6h2.8v2.8h-2.8z" fill="#ff8c00"/></g>
<polygon points="29.8,246.5 66.8,238.8 113.2,231.9 161.3,230.5 160.0,238.8 106.3,244.0 54.7,254.3 32.4,259.4 29.0,250.8" fill="#000"/>
<polygon points="101.1,244.0 107.0,244.0 99.4,264.6 101.1,281.8 111.4,295.5 126.9,309.3 135.5,316.1 149.3,321.3 118.3,320.0 108.0,304.0 96.0,285.2 94.3,264.6" fill="#000"/>
<polygon points="190.8,246.5 227.8,238.8 274.2,231.9 322.3,230.5 321.0,238.8 267.3,244.0 215.7,254.3 193.4,259.4 190.0,250.8" fill="#000"/>
<polygon points="262.1,244.0 268.0,244.0 260.4,264.6 262.1,281.8 272.4,295.5 287.9,309.3 296.5,316.1 310.3,321.3 279.3,320.0 269.0,304.0 257.0,285.2 255.3,264.6" fill="#000"/>
<polygon points="26.3,1.9 53.1,6.7 58.6,23.2 68.8,31.8 67.3,50.0 61.0,92.4 54.7,111.3 53.9,126.3 25.5,129.4 12.2,125.5 5.1,98.7 1.9,32.6 11.4,26.3" fill="none" stroke="#ff8c00" stroke-width="1.6" stroke-linejoin="round"/>
<polygon points="78.3,11.4 121.6,11.4 128.6,45.2 136.5,81.4 151.5,117.6 161.7,136.5 143.3,156.2 133.5,166.0 111.9,174.8 96.2,166.0 86.3,148.3 72.6,140.5 52.3,137.3 67.3,112.9 69.6,61.0 78.3,23.2" fill="none" stroke="#ff8c00" stroke-width="1.6" stroke-linejoin="round"/>
<polygon points="139.7,5.1 149.1,5.1 152.3,34.2 149.1,44.4 141.2,46.8 133.4,42.1 133.4,34.2 138.9,18.5" fill="none" stroke="#ff8c00" stroke-width="1.6" stroke-linejoin="round"/>
<polygon points="2.9,138.5 9.8,135.6 41.2,135.6 42.2,145.4 51.0,147.4 52.0,175.8 54.0,194.5 47.1,197.4 47.1,209.2 25.5,210.2 22.5,204.3 5.9,200.4 2.9,195.5" fill="none" stroke="#ff8c00" stroke-width="1.6" stroke-linejoin="round"/>
<polygon points="55.9,187.6 85.4,187.6 86.3,199.4 101.1,209.2 100.1,228.8 70.6,228.8 56.9,219.0" fill="none" stroke="#ff8c00" stroke-width="1.6" stroke-linejoin="round"/>
<polygon points="99.1,175.8 109.9,181.7 125.6,183.7 151.1,176.8 160.9,191.5 149.2,205.3 139.3,224.9 115.8,226.9 104.0,205.3 94.2,190.5" fill="none" stroke="#ff8c00" stroke-width="1.6" stroke-linejoin="round"/>
<polygon points="7.5,224.2 49.6,229.3 114.9,230.2 161.3,230.2 160.4,238.8 160.4,252.5 114.9,264.6 116.6,276.6 133.8,281.8 159.6,311.8 151.0,321.3 108.0,319.6 84.0,314.4 42.7,311.0 8.3,317.8 2.3,309.3 1.4,292.0 23.8,273.2 2.3,250.0" fill="none" stroke="#ff8c00" stroke-width="1.6" stroke-linejoin="round"/>
<polygon points="187.3,1.9 214.1,6.7 219.6,23.2 229.8,31.8 228.3,50.0 222.0,92.4 215.7,111.3 214.9,126.3 186.5,129.4 173.2,125.5 166.1,98.7 162.9,32.6 172.4,26.3" fill="none" stroke="#ff8c00" stroke-width="1.6" stroke-linejoin="round"/>
<polygon points="239.3,11.4 282.6,11.4 289.6,45.2 297.5,81.4 312.5,117.6 322.7,136.5 304.3,156.2 294.5,166.0 272.9,174.8 257.2,166.0 247.3,148.3 233.6,140.5 213.3,137.3 228.3,112.9 230.6,61.0 239.3,23.2" fill="none" stroke="#ff8c00" stroke-width="1.6" stroke-linejoin="round"/>
<polygon points="300.7,5.1 310.1,5.1 313.3,34.2 310.1,44.4 302.2,46.8 294.4,42.1 294.4,34.2 299.9,18.5" fill="none" stroke="#ff8c00" stroke-width="1.6" stroke-linejoin="round"/>
<polygon points="163.9,138.5 170.8,135.6 202.2,135.6 203.2,145.4 212.0,147.4 213.0,175.8 215.0,194.5 208.1,197.4 208.1,209.2 186.5,210.2 183.5,204.3 166.9,200.4 163.9,195.5" fill="none" stroke="#ff8c00" stroke-width="1.6" stroke-linejoin="round"/>
<polygon points="216.9,187.6 246.4,187.6 247.3,199.4 262.1,209.2 261.1,228.8 231.6,228.8 217.9,219.0" fill="none" stroke="#ff8c00" stroke-width="1.6" stroke-linejoin="round"/>
<polygon points="260.1,175.8 270.9,181.7 286.6,183.7 312.1,176.8 321.9,191.5 310.2,205.3 300.3,224.9 276.8,226.9 265.0,205.3 255.2,190.5" fill="none" stroke="#ff8c00" stroke-width="1.6" stroke-linejoin="round"/>
<polygon points="168.5,224.2 210.6,229.3 275.9,230.2 322.3,230.2 321.4,238.8 321.4,252.5 275.9,264.6 277.6,276.6 294.8,281.8 320.6,311.8 312.0,321.3 269.0,319.6 245.0,314.4 203.7,311.0 169.3,317.8 163.3,309.3 162.4,292.0 184.8,273.2 163.3,250.0" fill="none" stroke="#ff8c00" stroke-width="1.6" stroke-linejoin="round"/>
<polygon points="325.0,158.0 347.0,158.0 343.0,192.0 334.0,192.0" fill="#3a3a3a"/>
<polygon points="323.7,0.3 350.4,0.3 347.4,17.9 345.8,46.9 346.6,95.7 344.3,150.7 346.2,158.0 343.9,176.6 328.5,176.6 328.3,135.4 328.3,46.9 326.7,16.3" fill="#7c4a26" stroke="#000" stroke-width="2" stroke-linejoin="round"/>
<polygon points="325.4,179.0 334.0,179.0 334.0,229.0 325.4,229.0" fill="#7c4a26" stroke="#000" stroke-width="2" stroke-linejoin="round"/>
<polygon points="336.0,179.0 345.5,179.0 345.5,229.0 336.0,229.0" fill="#7c4a26" stroke="#000" stroke-width="2" stroke-linejoin="round"/>
<polygon points="323.0,230.7 333.9,230.7 333.9,322.0 323.0,322.0" fill="#7c4a26" stroke="#000" stroke-width="2" stroke-linejoin="round"/>
<polygon points="357.3,0.3 377.1,0.3 377.1,22.4 357.3,22.4" fill="#7c4a26" stroke="#000" stroke-width="2" stroke-linejoin="round"/>
<polygon points="378.7,0.3 404.6,0.3 442.8,17.9 442.8,104.9 435.2,104.9 433.6,86.6 410.7,43.8 401.6,13.3 380.2,9.5" fill="#7c4a26" stroke="#000" stroke-width="2" stroke-linejoin="round"/>
<polygon points="379.4,11.7 389.4,11.7 392.4,36.2 419.9,68.2 419.9,95.7 412.3,108.0 418.4,114.0 392.4,124.8 378.0,158.0 367.1,178.1 366.3,226.0 378.0,219.9 413.5,218.3 413.5,227.6 378.0,244.6 365.6,266.2 354.8,321.9 340.8,321.9 341.6,250.8 349.3,226.0 349.5,158.0 349.7,112.5 363.4,89.6 375.6,69.8 378.7,36.2" fill="#7c4a26" stroke="#000" stroke-width="2" stroke-linejoin="round"/>
<polygon points="387.8,135.0 398.0,124.0 442.8,123.2 442.8,150.7 398.0,150.7 387.8,143.0" fill="#7c4a26" stroke="#000" stroke-width="2" stroke-linejoin="round"/>
<polygon points="378.7,151.5 442.8,151.5 442.8,159.9 378.7,159.9" fill="#7c4a26" stroke="#000" stroke-width="2" stroke-linejoin="round"/>
<polygon points="388.8,161.1 404.2,161.1 421.2,204.4 413.5,216.8 390.3,209.8 374.9,216.8 368.7,204.4" fill="#7c4a26" stroke="#000" stroke-width="2" stroke-linejoin="round"/>
<polygon points="414.3,160.3 443.5,160.3 443.5,191.2 414.3,191.2" fill="#7c4a26" stroke="#000" stroke-width="2" stroke-linejoin="round"/>
<polygon points="397.3,230.7 443.5,230.7 443.5,239.2 397.3,239.2" fill="#7c4a26" stroke="#000" stroke-width="2" stroke-linejoin="round"/>
<polygon points="385.7,238.4 393.4,238.4 405.8,321.9 391.9,312.6 371.8,312.6" fill="#7c4a26" stroke="#000" stroke-width="2" stroke-linejoin="round"/>
<polygon points="410.4,241.5 443.5,241.5 443.5,257.0 410.4,257.0" fill="#7c4a26" stroke="#000" stroke-width="2" stroke-linejoin="round"/>
<polygon points="405.8,258.5 432.0,258.5 432.0,278.6 405.8,278.6" fill="#7c4a26" stroke="#000" stroke-width="2" stroke-linejoin="round"/>
<polygon points="406.6,283.3 432.1,283.3 432.1,302.6 406.6,302.6" fill="#7c4a26" stroke="#000" stroke-width="2" stroke-linejoin="round"/>
<polygon points="433.6,258.5 443.5,258.5 443.5,322.0 433.6,322.0" fill="#7c4a26" stroke="#000" stroke-width="2" stroke-linejoin="round"/>
<ellipse cx="363.4" cy="50" rx="9.9" ry="24.5" fill="#7c4a26" stroke="#000" stroke-width="2"/>
<ellipse cx="400.4000000000001" cy="28.5" rx="8.8" ry="6.9" fill="#7c4a26" stroke="#000" stroke-width="2"/>
<ellipse cx="434.79999999999995" cy="117.89999999999998" rx="8" ry="6.9" fill="#7c4a26" stroke="#000" stroke-width="2"/>
<ellipse cx="438.20000000000005" cy="223.70000000000005" rx="5.5" ry="5.4" fill="#7c4a26" stroke="#000" stroke-width="2"/>
<defs><path id="clRp" d="M307 -9 322 -14 330 -9 343 -10 354 -13 363 -8 377 -9 385 -14 400 -13 405 -9 416 -8 428 -8 438 -13 454 -10 M307 3 319 -3 328 -0 341 2 350 0 364 -1 377 -1 388 -2 398 -2 408 -3 417 -3 427 -3 438 3 453 3 M309 12 320 13 333 9 343 10 354 13 367 14 374 12 386 12 399 14 411 9 422 10 430 14 441 9 450 9 M311 22 317 20 328 20 340 19 351 23 365 20 372 24 388 20 395 24 411 24 416 20 429 20 442 20 455 24 M308 31 319 31 328 35 341 30 356 31 367 33 376 33 383 35 396 36 411 34 421 35 427 30 442 33 455 33 M306 46 322 43 329 42 340 41 352 44 366 45 376 47 383 43 394 46 407 45 420 46 431 43 440 47 452 47 M309 53 321 55 333 57 341 54 353 58 365 57 377 56 383 53 395 54 408 57 419 58 432 53 442 58 453 54 M312 65 321 69 332 69 343 68 354 69 366 66 373 69 384 68 395 68 411 63 417 66 430 63 440 65 452 66 M308 76 323 74 328 80 343 75 354 77 364 74 374 80 388 75 395 76 406 77 421 77 429 80 442 78 449 75 M310 89 322 87 331 87 345 90 352 87 363 91 375 89 387 88 396 86 405 87 417 87 431 88 439 85 453 89 M310 97 317 98 333 100 342 100 355 97 362 101 378 96 383 98 395 101 407 97 421 99 433 98 443 98 455 99 M308 108 320 113 334 107 342 108 351 108 366 108 374 108 388 108 398 112 405 111 418 111 427 110 438 111 450 111 M308 119 319 118 332 121 343 124 354 120 366 122 372 120 384 120 395 121 406 122 417 123 431 123 440 123 450 121 M307 135 322 129 332 130 344 130 351 131 367 131 378 130 383 134 394 129 407 135 418 132 429 132 438 130 450 131 M312 141 320 145 328 143 339 146 350 143 366 145 372 146 385 144 397 144 407 143 418 145 433 144 444 144 454 143 M306 152 320 154 330 157 345 156 355 154 363 152 375 154 386 156 398 154 407 157 417 156 429 157 440 156 454 152 M310 167 322 162 331 164 344 163 353 162 363 166 376 167 387 164 394 164 407 166 420 163 430 167 442 163 452 164 M306 177 320 175 332 176 344 174 352 173 362 178 373 174 384 175 399 179 407 177 417 174 432 177 439 179 455 178 M306 187 323 189 334 189 340 186 350 189 363 189 375 189 383 184 400 187 409 189 419 190 429 188 444 188 454 188 M310 201 317 196 331 196 339 200 354 200 363 198 378 196 388 198 400 196 409 198 421 197 427 199 441 201 449 200 M307 211 320 210 332 211 340 211 351 208 366 209 376 209 388 211 398 211 408 207 419 206 430 208 442 212 453 210 M311 223 319 219 333 223 343 222 356 220 365 219 377 219 386 222 394 217 405 218 421 221 430 219 442 218 452 218 M306 231 323 234 329 231 343 234 356 234 364 228 373 228 389 234 396 229 411 232 420 232 430 231 443 231 452 230 M312 241 319 245 330 241 341 242 350 242 364 242 377 240 384 245 395 242 411 243 416 242 430 239 440 240 449 244 M311 253 319 250 330 253 341 255 354 252 363 251 374 251 386 251 398 253 406 250 420 254 427 255 439 253 453 251 M311 264 320 265 331 262 341 266 352 263 363 263 378 261 385 265 398 263 408 267 422 263 428 263 438 263 453 267 M306 272 323 278 329 274 339 273 351 272 363 277 374 276 389 278 396 273 410 272 417 275 431 274 439 272 452 272 M306 284 322 288 329 285 342 284 355 289 367 289 373 287 386 288 395 286 407 284 420 288 429 283 441 285 455 287 M312 298 321 298 332 298 340 299 350 299 363 300 375 294 386 294 399 297 406 298 421 297 430 297 443 297 452 300 M311 308 322 311 334 308 341 306 353 305 365 311 376 307 386 309 400 311 407 308 418 310 430 307 439 305 452 306 M310 321 319 316 331 320 344 319 350 319 362 321 373 322 388 320 399 321 407 318 418 319 428 318 441 321 449 321 M312 333 318 328 332 331 343 333 350 329 365 330 377 330 383 331 394 331 407 331 416 330 427 329 440 330 450 332 M307 -9 307 3 309 12 311 22 308 31 306 46 309 53 312 65 308 76 310 89 310 97 308 108 308 119 307 135 312 141 306 152 310 167 306 177 306 187 310 201 307 211 311 223 306 231 312 241 311 253 311 264 306 272 306 284 312 298 311 308 310 321 312 333 M322 -14 319 -3 320 13 317 20 319 31 322 43 321 55 321 69 323 74 322 87 317 98 320 113 319 118 322 129 320 145 320 154 322 162 320 175 323 189 317 196 320 210 319 219 323 234 319 245 319 250 320 265 323 278 322 288 321 298 322 311 319 316 318 328 M330 -9 328 -0 333 9 328 20 328 35 329 42 333 57 332 69 328 80 331 87 333 100 334 107 332 121 332 130 328 143 330 157 331 164 332 176 334 189 331 196 332 211 333 223 329 231 330 241 330 253 331 262 329 274 329 285 332 298 334 308 331 320 332 331 M343 -10 341 2 343 10 340 19 341 30 340 41 341 54 343 68 343 75 345 90 342 100 342 108 343 124 344 130 339 146 345 156 344 163 344 174 340 186 339 200 340 211 343 222 343 234 341 242 341 255 341 266 339 273 342 284 340 299 341 306 344 319 343 333 M354 -13 350 0 354 13 351 23 356 31 352 44 353 58 354 69 354 77 352 87 355 97 351 108 354 120 351 131 350 143 355 154 353 162 352 173 350 189 354 200 351 208 356 220 356 234 350 242 354 252 352 263 351 272 355 289 350 299 353 305 350 319 350 329 M363 -8 364 -1 367 14 365 20 367 33 366 45 365 57 366 66 364 74 363 91 362 101 366 108 366 122 367 131 366 145 363 152 363 166 362 178 363 189 363 198 366 209 365 219 364 228 364 242 363 251 363 263 363 277 367 289 363 300 365 311 362 321 365 330 M377 -9 377 -1 374 12 372 24 376 33 376 47 377 56 373 69 374 80 375 89 378 96 374 108 372 120 378 130 372 146 375 154 376 167 373 174 375 189 378 196 376 209 377 219 373 228 377 240 374 251 378 261 374 276 373 287 375 294 376 307 373 322 377 330 M385 -14 388 -2 386 12 388 20 383 35 383 43 383 53 384 68 388 75 387 88 383 98 388 108 384 120 383 134 385 144 386 156 387 164 384 175 383 184 388 198 388 211 386 222 389 234 384 245 386 251 385 265 389 278 386 288 386 294 386 309 388 320 383 331 M400 -13 398 -2 399 14 395 24 396 36 394 46 395 54 395 68 395 76 396 86 395 101 398 112 395 121 394 129 397 144 398 154 394 164 399 179 400 187 400 196 398 211 394 217 396 229 395 242 398 253 398 263 396 273 395 286 399 297 400 311 399 321 394 331 M405 -9 408 -3 411 9 411 24 411 34 407 45 408 57 411 63 406 77 405 87 407 97 405 111 406 122 407 135 407 143 407 157 407 166 407 177 409 189 409 198 408 207 405 218 411 232 411 243 406 250 408 267 410 272 407 284 406 298 407 308 407 318 407 331 M416 -8 417 -3 422 10 416 20 421 35 420 46 419 58 417 66 421 77 417 87 421 99 418 111 417 123 418 132 418 145 417 156 420 163 417 174 419 190 421 197 419 206 421 221 420 232 416 242 420 254 422 263 417 275 420 288 421 297 418 310 418 319 416 330 M428 -8 427 -3 430 14 429 20 427 30 431 43 432 53 430 63 429 80 431 88 433 98 427 110 431 123 429 132 433 144 429 157 430 167 432 177 429 188 427 199 430 208 430 219 430 231 430 239 427 255 428 263 431 274 429 283 430 297 430 307 428 318 427 329 M438 -13 438 3 441 9 442 20 442 33 440 47 442 58 440 65 442 78 439 85 443 98 438 111 440 123 438 130 444 144 440 156 442 163 439 179 444 188 441 201 442 212 442 218 443 231 440 240 439 253 438 263 439 272 441 285 443 297 439 305 441 321 440 330 M454 -10 453 3 450 9 455 24 455 33 452 47 453 54 452 66 449 75 453 89 455 99 450 111 450 121 450 131 454 143 454 152 452 164 455 178 454 188 449 200 453 210 452 218 452 230 449 244 453 251 453 267 452 272 455 287 452 300 452 306 449 321 450 332 M310 321 318 328 M311 308 319 316 332 331 M312 298 322 311 331 320 343 333 M306 284 321 298 334 308 344 319 350 329 M306 272 322 288 332 298 341 306 350 319 365 330 M311 264 323 278 329 285 340 299 353 305 362 321 377 330 M311 253 320 265 329 274 342 284 350 299 365 311 373 322 383 331 M312 241 319 250 331 262 339 273 355 289 363 300 376 307 388 320 394 331 M306 231 319 245 330 253 341 266 351 272 367 289 375 294 386 309 399 321 407 331 M311 223 323 234 330 241 341 255 352 263 363 277 373 287 386 294 400 311 407 318 416 330 M307 211 319 219 329 231 341 242 354 252 363 263 374 276 386 288 399 297 407 308 418 319 427 329 M310 201 320 210 333 223 343 234 350 242 363 251 378 261 389 278 395 286 406 298 418 310 428 318 440 330 M306 187 317 196 332 211 343 222 356 234 364 242 374 251 385 265 396 273 407 284 421 297 430 307 441 321 450 332 M306 177 323 189 331 196 340 211 356 220 364 228 377 240 386 251 398 263 410 272 420 288 430 297 439 305 449 321 M310 167 320 175 334 189 339 200 351 208 365 219 373 228 384 245 398 253 408 267 417 275 429 283 443 297 452 306 M306 152 322 162 332 176 340 186 354 200 366 209 377 219 389 234 395 242 406 250 422 263 431 274 441 285 452 300 M312 141 320 154 331 164 344 174 350 189 363 198 376 209 386 222 396 229 411 243 420 254 428 263 439 272 455 287 M307 135 320 145 330 157 344 163 352 173 363 189 378 196 388 211 394 217 411 232 416 242 427 255 438 263 452 272 M308 119 322 129 328 143 345 156 353 162 362 178 375 189 388 198 398 211 405 218 420 232 430 239 439 253 453 267 M308 108 319 118 332 130 339 146 355 154 363 166 373 174 383 184 400 196 408 207 421 221 430 231 440 240 453 251 M310 97 320 113 332 121 344 130 350 143 363 152 376 167 384 175 400 187 409 198 419 206 430 219 443 231 449 244 M310 89 317 98 334 107 343 124 351 131 366 145 375 154 387 164 399 179 409 189 421 197 430 208 442 218 452 230 M308 76 322 87 333 100 342 108 354 120 367 131 372 146 386 156 394 164 407 177 419 190 427 199 442 212 452 218 M312 65 323 74 331 87 342 100 351 108 366 122 378 130 385 144 398 154 407 166 417 174 429 188 441 201 453 210 M309 53 321 69 328 80 345 90 355 97 366 108 372 120 383 134 397 144 407 157 420 163 432 177 444 188 449 200 M306 46 321 55 332 69 343 75 352 87 362 101 374 108 384 120 394 129 407 143 417 156 430 167 439 179 454 188 M308 31 322 43 333 57 343 68 354 77 363 91 378 96 388 108 395 121 407 135 418 145 429 157 442 163 455 178 M311 22 319 31 329 42 341 54 354 69 364 74 375 89 383 98 398 112 406 122 418 132 433 144 440 156 452 164 M309 12 317 20 328 35 340 41 353 58 366 66 374 80 387 88 395 101 405 111 417 123 429 132 444 144 454 152 M307 3 320 13 328 20 341 30 352 44 365 57 373 69 388 75 396 86 407 97 418 111 431 123 438 130 454 143 M307 -9 319 -3 333 9 340 19 356 31 366 45 377 56 384 68 395 76 405 87 421 99 427 110 440 123 450 131 M322 -14 328 -0 343 10 351 23 367 33 376 47 383 53 395 68 406 77 417 87 433 98 438 111 450 121 M330 -9 341 2 354 13 365 20 376 33 383 43 395 54 411 63 421 77 431 88 443 98 450 111 M343 -10 350 0 367 14 372 24 383 35 394 46 408 57 417 66 429 80 439 85 455 99 M354 -13 364 -1 374 12 388 20 396 36 407 45 419 58 430 63 442 78 453 89 M363 -8 377 -1 386 12 395 24 411 34 420 46 432 53 440 65 449 75 M377 -9 388 -2 399 14 411 24 421 35 431 43 442 58 452 66 M385 -14 398 -2 411 9 416 20 427 30 440 47 453 54 M400 -13 408 -3 422 10 429 20 442 33 452 47 M405 -9 417 -3 430 14 442 20 455 33 M416 -8 427 -3 441 9 455 24 M428 -8 438 3 450 9 M438 -13 453 3" fill="none"/></defs><clipPath id="clR"><polygon points="323.7,0.3 350.4,0.3 347.4,17.9 345.8,46.9 346.6,95.7 344.3,150.7 346.2,158.0 343.9,176.6 328.5,176.6 328.3,135.4 328.3,46.9 326.7,16.3"/><polygon points="325.4,179.0 334.0,179.0 334.0,229.0 325.4,229.0"/><polygon points="336.0,179.0 345.5,179.0 345.5,229.0 336.0,229.0"/><polygon points="323.0,230.7 333.9,230.7 333.9,322.0 323.0,322.0"/><polygon points="357.3,0.3 377.1,0.3 377.1,22.4 357.3,22.4"/><polygon points="378.7,0.3 404.6,0.3 442.8,17.9 442.8,104.9 435.2,104.9 433.6,86.6 410.7,43.8 401.6,13.3 380.2,9.5"/><polygon points="379.4,11.7 389.4,11.7 392.4,36.2 419.9,68.2 419.9,95.7 412.3,108.0 418.4,114.0 392.4,124.8 378.0,158.0 367.1,178.1 366.3,226.0 378.0,219.9 413.5,218.3 413.5,227.6 378.0,244.6 365.6,266.2 354.8,321.9 340.8,321.9 341.6,250.8 349.3,226.0 349.5,158.0 349.7,112.5 363.4,89.6 375.6,69.8 378.7,36.2"/><polygon points="387.8,135.0 398.0,124.0 442.8,123.2 442.8,150.7 398.0,150.7 387.8,143.0"/><polygon points="378.7,151.5 442.8,151.5 442.8,159.9 378.7,159.9"/><polygon points="388.8,161.1 404.2,161.1 421.2,204.4 413.5,216.8 390.3,209.8 374.9,216.8 368.7,204.4"/><polygon points="414.3,160.3 443.5,160.3 443.5,191.2 414.3,191.2"/><polygon points="397.3,230.7 443.5,230.7 443.5,239.2 397.3,239.2"/><polygon points="385.7,238.4 393.4,238.4 405.8,321.9 391.9,312.6 371.8,312.6"/><polygon points="410.4,241.5 443.5,241.5 443.5,257.0 410.4,257.0"/><polygon points="405.8,258.5 432.0,258.5 432.0,278.6 405.8,278.6"/><polygon points="406.6,283.3 432.1,283.3 432.1,302.6 406.6,302.6"/><polygon points="433.6,258.5 443.5,258.5 443.5,322.0 433.6,322.0"/><ellipse cx="363.4" cy="50" rx="9.9" ry="24.5"/><ellipse cx="400.4000000000001" cy="28.5" rx="8.8" ry="6.9"/><ellipse cx="434.79999999999995" cy="117.89999999999998" rx="8" ry="6.9"/><ellipse cx="438.20000000000005" cy="223.70000000000005" rx="5.5" ry="5.4"/></clipPath><g clip-path="url(#clR)"><use href="#clRp" stroke="#000" stroke-width="2.8" opacity="0.55"/><use href="#clRp" stroke="#ff8c00" stroke-width="1.4"/><path d="M305.8 -10.0h2.8v2.8h-2.8zM305.7 1.4h2.8v2.8h-2.8zM307.5 10.3h2.8v2.8h-2.8zM309.4 20.7h2.8v2.8h-2.8zM306.3 29.5h2.8v2.8h-2.8zM304.8 44.2h2.8v2.8h-2.8zM307.2 51.3h2.8v2.8h-2.8zM310.1 63.1h2.8v2.8h-2.8zM307.0 74.3h2.8v2.8h-2.8zM308.5 87.1h2.8v2.8h-2.8zM308.3 96.1h2.8v2.8h-2.8zM306.2 107.0h2.8v2.8h-2.8zM306.5 117.3h2.8v2.8h-2.8zM305.4 133.7h2.8v2.8h-2.8zM310.6 139.5h2.8v2.8h-2.8zM304.5 150.7h2.8v2.8h-2.8zM308.9 165.4h2.8v2.8h-2.8zM304.5 175.1h2.8v2.8h-2.8zM304.3 185.7h2.8v2.8h-2.8zM308.5 199.8h2.8v2.8h-2.8zM306.0 209.6h2.8v2.8h-2.8zM310.0 221.4h2.8v2.8h-2.8zM304.3 229.4h2.8v2.8h-2.8zM310.8 239.9h2.8v2.8h-2.8zM309.7 251.9h2.8v2.8h-2.8zM309.4 262.5h2.8v2.8h-2.8zM304.5 270.9h2.8v2.8h-2.8zM305.0 283.0h2.8v2.8h-2.8zM310.7 296.5h2.8v2.8h-2.8zM309.7 307.0h2.8v2.8h-2.8zM308.5 319.7h2.8v2.8h-2.8zM310.4 331.3h2.8v2.8h-2.8zM320.7 -15.1h2.8v2.8h-2.8zM317.7 -4.5h2.8v2.8h-2.8zM318.9 11.6h2.8v2.8h-2.8zM315.6 18.5h2.8v2.8h-2.8zM317.7 29.9h2.8v2.8h-2.8zM320.5 41.6h2.8v2.8h-2.8zM319.5 53.6h2.8v2.8h-2.8zM319.2 67.5h2.8v2.8h-2.8zM321.5 73.0h2.8v2.8h-2.8zM320.9 85.6h2.8v2.8h-2.8zM316.0 96.8h2.8v2.8h-2.8zM318.7 111.6h2.8v2.8h-2.8zM317.8 116.4h2.8v2.8h-2.8zM321.0 128.0h2.8v2.8h-2.8zM318.5 143.9h2.8v2.8h-2.8zM318.7 152.2h2.8v2.8h-2.8zM320.6 160.4h2.8v2.8h-2.8zM319.1 174.0h2.8v2.8h-2.8zM321.8 187.6h2.8v2.8h-2.8zM315.7 194.6h2.8v2.8h-2.8zM318.3 208.9h2.8v2.8h-2.8zM317.5 217.7h2.8v2.8h-2.8zM321.4 232.6h2.8v2.8h-2.8zM318.0 243.2h2.8v2.8h-2.8zM317.5 248.8h2.8v2.8h-2.8zM318.8 263.7h2.8v2.8h-2.8zM321.2 276.7h2.8v2.8h-2.8zM320.4 286.3h2.8v2.8h-2.8zM320.0 296.9h2.8v2.8h-2.8zM320.4 309.7h2.8v2.8h-2.8zM317.8 314.8h2.8v2.8h-2.8zM316.9 326.8h2.8v2.8h-2.8zM328.7 -10.4h2.8v2.8h-2.8zM326.7 -1.7h2.8v2.8h-2.8zM331.7 8.0h2.8v2.8h-2.8zM326.7 18.9h2.8v2.8h-2.8zM326.9 33.6h2.8v2.8h-2.8zM327.4 40.6h2.8v2.8h-2.8zM331.7 55.6h2.8v2.8h-2.8zM330.2 67.3h2.8v2.8h-2.8zM326.7 78.7h2.8v2.8h-2.8zM330.1 85.3h2.8v2.8h-2.8zM331.7 98.7h2.8v2.8h-2.8zM332.8 106.0h2.8v2.8h-2.8zM330.1 119.4h2.8v2.8h-2.8zM330.6 128.9h2.8v2.8h-2.8zM326.5 141.9h2.8v2.8h-2.8zM328.7 155.2h2.8v2.8h-2.8zM329.3 163.1h2.8v2.8h-2.8zM330.5 174.8h2.8v2.8h-2.8zM332.6 187.5h2.8v2.8h-2.8zM329.6 194.7h2.8v2.8h-2.8zM330.3 209.2h2.8v2.8h-2.8zM331.3 221.9h2.8v2.8h-2.8zM327.7 229.1h2.8v2.8h-2.8zM329.1 239.4h2.8v2.8h-2.8zM328.7 251.5h2.8v2.8h-2.8zM329.9 261.1h2.8v2.8h-2.8zM327.2 272.3h2.8v2.8h-2.8zM327.2 283.4h2.8v2.8h-2.8zM330.8 296.3h2.8v2.8h-2.8zM332.9 307.0h2.8v2.8h-2.8zM329.9 318.5h2.8v2.8h-2.8zM331.1 329.4h2.8v2.8h-2.8zM341.2 -11.7h2.8v2.8h-2.8zM339.6 0.4h2.8v2.8h-2.8zM341.3 8.3h2.8v2.8h-2.8zM338.9 17.8h2.8v2.8h-2.8zM339.6 28.4h2.8v2.8h-2.8zM338.4 39.7h2.8v2.8h-2.8zM339.1 52.6h2.8v2.8h-2.8zM341.2 66.4h2.8v2.8h-2.8zM341.4 73.4h2.8v2.8h-2.8zM343.2 88.1h2.8v2.8h-2.8zM340.6 98.5h2.8v2.8h-2.8zM340.7 106.4h2.8v2.8h-2.8zM341.5 122.8h2.8v2.8h-2.8zM342.4 128.5h2.8v2.8h-2.8zM338.1 144.4h2.8v2.8h-2.8zM343.3 154.2h2.8v2.8h-2.8zM342.3 161.2h2.8v2.8h-2.8zM342.7 172.6h2.8v2.8h-2.8zM338.3 185.0h2.8v2.8h-2.8zM337.3 198.9h2.8v2.8h-2.8zM338.4 209.2h2.8v2.8h-2.8zM341.1 220.4h2.8v2.8h-2.8zM341.3 232.6h2.8v2.8h-2.8zM339.8 240.6h2.8v2.8h-2.8zM339.5 253.2h2.8v2.8h-2.8zM339.3 264.6h2.8v2.8h-2.8zM337.9 271.9h2.8v2.8h-2.8zM340.2 282.1h2.8v2.8h-2.8zM338.6 297.9h2.8v2.8h-2.8zM339.8 304.7h2.8v2.8h-2.8zM342.9 318.1h2.8v2.8h-2.8zM341.5 331.2h2.8v2.8h-2.8zM353.0 -14.0h2.8v2.8h-2.8zM348.4 -1.1h2.8v2.8h-2.8zM353.0 11.6h2.8v2.8h-2.8zM349.6 21.5h2.8v2.8h-2.8zM354.5 30.0h2.8v2.8h-2.8zM350.2 42.1h2.8v2.8h-2.8zM352.1 56.8h2.8v2.8h-2.8zM352.2 67.2h2.8v2.8h-2.8zM352.6 75.4h2.8v2.8h-2.8zM350.3 85.6h2.8v2.8h-2.8zM353.4 95.5h2.8v2.8h-2.8zM349.2 106.7h2.8v2.8h-2.8zM352.7 118.8h2.8v2.8h-2.8zM349.7 129.5h2.8v2.8h-2.8zM348.8 141.2h2.8v2.8h-2.8zM353.7 152.2h2.8v2.8h-2.8zM351.3 160.5h2.8v2.8h-2.8zM350.1 171.8h2.8v2.8h-2.8zM348.6 188.0h2.8v2.8h-2.8zM353.0 198.8h2.8v2.8h-2.8zM349.2 206.7h2.8v2.8h-2.8zM354.3 218.2h2.8v2.8h-2.8zM354.4 232.6h2.8v2.8h-2.8zM348.3 240.2h2.8v2.8h-2.8zM352.1 250.6h2.8v2.8h-2.8zM350.8 261.6h2.8v2.8h-2.8zM349.8 270.5h2.8v2.8h-2.8zM353.1 287.9h2.8v2.8h-2.8zM348.6 298.0h2.8v2.8h-2.8zM351.9 303.4h2.8v2.8h-2.8zM348.8 317.8h2.8v2.8h-2.8zM349.0 327.3h2.8v2.8h-2.8zM361.1 -9.3h2.8v2.8h-2.8zM362.4 -2.8h2.8v2.8h-2.8zM365.5 12.7h2.8v2.8h-2.8zM364.0 18.2h2.8v2.8h-2.8zM365.2 31.2h2.8v2.8h-2.8zM364.5 44.1h2.8v2.8h-2.8zM363.6 55.4h2.8v2.8h-2.8zM364.7 64.3h2.8v2.8h-2.8zM362.5 72.9h2.8v2.8h-2.8zM361.7 89.1h2.8v2.8h-2.8zM360.8 99.2h2.8v2.8h-2.8zM364.6 106.6h2.8v2.8h-2.8zM364.3 120.6h2.8v2.8h-2.8zM365.7 129.9h2.8v2.8h-2.8zM364.3 143.9h2.8v2.8h-2.8zM361.8 150.8h2.8v2.8h-2.8zM361.7 164.6h2.8v2.8h-2.8zM361.0 177.0h2.8v2.8h-2.8zM361.2 187.3h2.8v2.8h-2.8zM361.4 196.6h2.8v2.8h-2.8zM365.1 207.5h2.8v2.8h-2.8zM363.4 217.6h2.8v2.8h-2.8zM362.4 226.7h2.8v2.8h-2.8zM362.7 240.3h2.8v2.8h-2.8zM361.3 249.4h2.8v2.8h-2.8zM361.5 261.2h2.8v2.8h-2.8zM361.7 275.6h2.8v2.8h-2.8zM365.2 287.3h2.8v2.8h-2.8zM362.1 298.2h2.8v2.8h-2.8zM363.2 309.9h2.8v2.8h-2.8zM360.1 319.3h2.8v2.8h-2.8zM363.2 328.7h2.8v2.8h-2.8zM375.3 -10.2h2.8v2.8h-2.8zM375.8 -2.4h2.8v2.8h-2.8zM372.8 10.2h2.8v2.8h-2.8zM370.6 22.7h2.8v2.8h-2.8zM374.2 31.2h2.8v2.8h-2.8zM374.5 45.6h2.8v2.8h-2.8zM375.6 54.6h2.8v2.8h-2.8zM371.7 67.7h2.8v2.8h-2.8zM372.9 78.3h2.8v2.8h-2.8zM373.6 87.7h2.8v2.8h-2.8zM376.2 94.7h2.8v2.8h-2.8zM372.2 106.5h2.8v2.8h-2.8zM370.6 118.6h2.8v2.8h-2.8zM376.3 129.0h2.8v2.8h-2.8zM371.0 144.5h2.8v2.8h-2.8zM373.6 152.4h2.8v2.8h-2.8zM374.8 165.7h2.8v2.8h-2.8zM371.8 172.6h2.8v2.8h-2.8zM373.1 187.9h2.8v2.8h-2.8zM376.4 194.6h2.8v2.8h-2.8zM374.9 207.2h2.8v2.8h-2.8zM376.1 217.3h2.8v2.8h-2.8zM372.1 226.4h2.8v2.8h-2.8zM376.1 238.4h2.8v2.8h-2.8zM372.1 249.9h2.8v2.8h-2.8zM376.4 259.8h2.8v2.8h-2.8zM372.5 274.8h2.8v2.8h-2.8zM371.4 285.1h2.8v2.8h-2.8zM373.1 292.4h2.8v2.8h-2.8zM374.3 305.6h2.8v2.8h-2.8zM371.7 320.7h2.8v2.8h-2.8zM375.8 328.3h2.8v2.8h-2.8zM383.4 -15.6h2.8v2.8h-2.8zM386.1 -2.9h2.8v2.8h-2.8zM384.7 10.4h2.8v2.8h-2.8zM386.3 18.3h2.8v2.8h-2.8zM381.9 33.4h2.8v2.8h-2.8zM381.6 42.0h2.8v2.8h-2.8zM381.5 51.7h2.8v2.8h-2.8zM382.6 66.8h2.8v2.8h-2.8zM386.2 73.9h2.8v2.8h-2.8zM385.2 86.6h2.8v2.8h-2.8zM381.9 96.7h2.8v2.8h-2.8zM386.3 106.1h2.8v2.8h-2.8zM382.9 118.7h2.8v2.8h-2.8zM381.3 132.4h2.8v2.8h-2.8zM383.9 142.5h2.8v2.8h-2.8zM384.8 154.4h2.8v2.8h-2.8zM385.6 162.9h2.8v2.8h-2.8zM382.1 174.1h2.8v2.8h-2.8zM381.3 182.8h2.8v2.8h-2.8zM386.8 196.7h2.8v2.8h-2.8zM386.5 209.2h2.8v2.8h-2.8zM384.8 220.1h2.8v2.8h-2.8zM387.5 232.6h2.8v2.8h-2.8zM383.0 243.3h2.8v2.8h-2.8zM384.4 249.7h2.8v2.8h-2.8zM384.0 263.2h2.8v2.8h-2.8zM387.2 276.3h2.8v2.8h-2.8zM385.0 286.6h2.8v2.8h-2.8zM384.8 292.9h2.8v2.8h-2.8zM384.2 307.9h2.8v2.8h-2.8zM386.3 318.8h2.8v2.8h-2.8zM381.3 329.8h2.8v2.8h-2.8zM398.8 -14.3h2.8v2.8h-2.8zM397.0 -3.4h2.8v2.8h-2.8zM397.4 12.5h2.8v2.8h-2.8zM393.7 22.8h2.8v2.8h-2.8zM394.3 34.1h2.8v2.8h-2.8zM392.5 44.3h2.8v2.8h-2.8zM393.7 52.7h2.8v2.8h-2.8zM393.3 66.6h2.8v2.8h-2.8zM393.6 74.6h2.8v2.8h-2.8zM394.7 85.1h2.8v2.8h-2.8zM393.8 99.2h2.8v2.8h-2.8zM396.1 110.4h2.8v2.8h-2.8zM393.3 119.9h2.8v2.8h-2.8zM392.8 127.9h2.8v2.8h-2.8zM395.2 142.2h2.8v2.8h-2.8zM397.0 153.1h2.8v2.8h-2.8zM392.8 162.8h2.8v2.8h-2.8zM397.2 177.6h2.8v2.8h-2.8zM398.3 185.5h2.8v2.8h-2.8zM398.5 195.0h2.8v2.8h-2.8zM396.4 209.3h2.8v2.8h-2.8zM392.3 215.8h2.8v2.8h-2.8zM394.4 227.7h2.8v2.8h-2.8zM393.5 240.9h2.8v2.8h-2.8zM396.5 251.5h2.8v2.8h-2.8zM396.9 261.4h2.8v2.8h-2.8zM394.7 271.2h2.8v2.8h-2.8zM393.7 284.5h2.8v2.8h-2.8zM397.8 295.4h2.8v2.8h-2.8zM398.1 309.5h2.8v2.8h-2.8zM397.4 319.4h2.8v2.8h-2.8zM392.4 329.9h2.8v2.8h-2.8zM403.5 -10.7h2.8v2.8h-2.8zM406.1 -4.1h2.8v2.8h-2.8zM409.4 7.5h2.8v2.8h-2.8zM409.6 22.5h2.8v2.8h-2.8zM409.4 32.4h2.8v2.8h-2.8zM405.6 43.9h2.8v2.8h-2.8zM406.3 55.1h2.8v2.8h-2.8zM409.6 61.7h2.8v2.8h-2.8zM404.4 75.1h2.8v2.8h-2.8zM403.5 85.7h2.8v2.8h-2.8zM406.1 95.5h2.8v2.8h-2.8zM403.6 109.5h2.8v2.8h-2.8zM404.9 120.9h2.8v2.8h-2.8zM406.1 133.2h2.8v2.8h-2.8zM405.3 141.9h2.8v2.8h-2.8zM405.2 155.6h2.8v2.8h-2.8zM405.1 164.8h2.8v2.8h-2.8zM405.6 175.8h2.8v2.8h-2.8zM407.4 187.4h2.8v2.8h-2.8zM407.4 196.3h2.8v2.8h-2.8zM406.3 205.3h2.8v2.8h-2.8zM404.1 216.3h2.8v2.8h-2.8zM409.4 230.7h2.8v2.8h-2.8zM409.3 241.4h2.8v2.8h-2.8zM404.7 248.4h2.8v2.8h-2.8zM406.8 265.7h2.8v2.8h-2.8zM408.5 270.8h2.8v2.8h-2.8zM405.7 282.2h2.8v2.8h-2.8zM405.1 296.8h2.8v2.8h-2.8zM405.4 306.7h2.8v2.8h-2.8zM405.2 317.0h2.8v2.8h-2.8zM405.8 329.2h2.8v2.8h-2.8zM414.8 -9.1h2.8v2.8h-2.8zM415.2 -4.3h2.8v2.8h-2.8zM420.3 8.7h2.8v2.8h-2.8zM414.3 19.0h2.8v2.8h-2.8zM419.6 33.2h2.8v2.8h-2.8zM418.6 44.7h2.8v2.8h-2.8zM417.4 56.4h2.8v2.8h-2.8zM416.1 64.6h2.8v2.8h-2.8zM419.8 75.9h2.8v2.8h-2.8zM415.9 85.5h2.8v2.8h-2.8zM420.0 97.8h2.8v2.8h-2.8zM416.6 109.4h2.8v2.8h-2.8zM415.3 121.2h2.8v2.8h-2.8zM416.7 130.7h2.8v2.8h-2.8zM416.6 144.0h2.8v2.8h-2.8zM415.5 155.0h2.8v2.8h-2.8zM418.7 161.5h2.8v2.8h-2.8zM415.3 173.0h2.8v2.8h-2.8zM417.2 188.5h2.8v2.8h-2.8zM419.5 195.2h2.8v2.8h-2.8zM417.4 204.6h2.8v2.8h-2.8zM419.4 220.0h2.8v2.8h-2.8zM418.5 230.3h2.8v2.8h-2.8zM414.8 240.8h2.8v2.8h-2.8zM418.3 252.4h2.8v2.8h-2.8zM420.2 261.5h2.8v2.8h-2.8zM415.9 273.2h2.8v2.8h-2.8zM418.4 286.9h2.8v2.8h-2.8zM419.2 295.7h2.8v2.8h-2.8zM416.9 308.2h2.8v2.8h-2.8zM416.7 317.1h2.8v2.8h-2.8zM414.4 328.7h2.8v2.8h-2.8zM426.7 -9.3h2.8v2.8h-2.8zM425.9 -4.4h2.8v2.8h-2.8zM428.7 12.8h2.8v2.8h-2.8zM427.1 18.2h2.8v2.8h-2.8zM425.9 28.3h2.8v2.8h-2.8zM429.4 41.6h2.8v2.8h-2.8zM430.7 51.8h2.8v2.8h-2.8zM428.9 61.7h2.8v2.8h-2.8zM427.4 78.3h2.8v2.8h-2.8zM429.3 86.4h2.8v2.8h-2.8zM431.4 96.6h2.8v2.8h-2.8zM425.8 108.3h2.8v2.8h-2.8zM429.2 121.6h2.8v2.8h-2.8zM427.7 130.7h2.8v2.8h-2.8zM431.2 142.5h2.8v2.8h-2.8zM427.1 155.4h2.8v2.8h-2.8zM429.1 165.8h2.8v2.8h-2.8zM430.6 175.7h2.8v2.8h-2.8zM427.3 186.6h2.8v2.8h-2.8zM426.1 197.7h2.8v2.8h-2.8zM428.8 206.4h2.8v2.8h-2.8zM428.2 217.2h2.8v2.8h-2.8zM428.4 229.1h2.8v2.8h-2.8zM428.5 237.5h2.8v2.8h-2.8zM426.0 253.9h2.8v2.8h-2.8zM426.5 261.4h2.8v2.8h-2.8zM429.9 272.8h2.8v2.8h-2.8zM428.0 281.6h2.8v2.8h-2.8zM428.2 296.1h2.8v2.8h-2.8zM428.2 305.8h2.8v2.8h-2.8zM426.4 316.9h2.8v2.8h-2.8zM425.6 327.2h2.8v2.8h-2.8zM436.4 -14.6h2.8v2.8h-2.8zM436.7 1.4h2.8v2.8h-2.8zM439.8 7.8h2.8v2.8h-2.8zM440.4 19.0h2.8v2.8h-2.8zM440.6 31.7h2.8v2.8h-2.8zM438.9 45.3h2.8v2.8h-2.8zM440.8 56.5h2.8v2.8h-2.8zM438.1 63.8h2.8v2.8h-2.8zM440.7 76.4h2.8v2.8h-2.8zM438.1 83.9h2.8v2.8h-2.8zM441.8 96.5h2.8v2.8h-2.8zM436.3 109.9h2.8v2.8h-2.8zM438.5 121.1h2.8v2.8h-2.8zM437.1 129.0h2.8v2.8h-2.8zM442.3 142.3h2.8v2.8h-2.8zM439.0 155.0h2.8v2.8h-2.8zM440.7 161.5h2.8v2.8h-2.8zM438.1 177.1h2.8v2.8h-2.8zM442.5 186.9h2.8v2.8h-2.8zM439.8 199.3h2.8v2.8h-2.8zM440.7 210.5h2.8v2.8h-2.8zM441.0 216.7h2.8v2.8h-2.8zM442.1 229.8h2.8v2.8h-2.8zM438.6 238.8h2.8v2.8h-2.8zM438.1 251.9h2.8v2.8h-2.8zM436.6 261.7h2.8v2.8h-2.8zM438.0 270.9h2.8v2.8h-2.8zM439.6 283.6h2.8v2.8h-2.8zM442.1 295.8h2.8v2.8h-2.8zM437.3 303.8h2.8v2.8h-2.8zM440.1 319.4h2.8v2.8h-2.8zM439.0 328.8h2.8v2.8h-2.8zM452.6 -11.4h2.8v2.8h-2.8zM451.3 1.2h2.8v2.8h-2.8zM448.4 7.4h2.8v2.8h-2.8zM453.5 22.6h2.8v2.8h-2.8zM453.7 31.8h2.8v2.8h-2.8zM450.1 45.6h2.8v2.8h-2.8zM451.4 53.1h2.8v2.8h-2.8zM450.2 64.5h2.8v2.8h-2.8zM447.7 73.3h2.8v2.8h-2.8zM451.5 87.9h2.8v2.8h-2.8zM453.1 98.1h2.8v2.8h-2.8zM448.3 109.8h2.8v2.8h-2.8zM448.4 119.8h2.8v2.8h-2.8zM448.6 129.1h2.8v2.8h-2.8zM453.0 142.0h2.8v2.8h-2.8zM452.2 150.3h2.8v2.8h-2.8zM450.2 162.9h2.8v2.8h-2.8zM453.7 176.2h2.8v2.8h-2.8zM452.7 186.8h2.8v2.8h-2.8zM447.7 198.5h2.8v2.8h-2.8zM452.1 208.9h2.8v2.8h-2.8zM450.1 217.1h2.8v2.8h-2.8zM450.6 229.0h2.8v2.8h-2.8zM448.0 242.4h2.8v2.8h-2.8zM451.7 249.3h2.8v2.8h-2.8zM451.3 265.6h2.8v2.8h-2.8zM450.8 270.6h2.8v2.8h-2.8zM453.7 285.6h2.8v2.8h-2.8zM450.5 298.6h2.8v2.8h-2.8zM450.2 304.7h2.8v2.8h-2.8zM447.3 319.5h2.8v2.8h-2.8zM448.3 330.6h2.8v2.8h-2.8z" fill="#ff8c00"/></g>
<ellipse cx="363.4" cy="50" rx="9.9" ry="24.5" fill="none" stroke="#ff8c00" stroke-width="1.8"/>
<ellipse cx="400.4000000000001" cy="28.5" rx="8.8" ry="6.9" fill="none" stroke="#ff8c00" stroke-width="1.8"/>
<ellipse cx="434.79999999999995" cy="117.89999999999998" rx="8" ry="6.9" fill="none" stroke="#ff8c00" stroke-width="1.8"/>
<ellipse cx="438.20000000000005" cy="223.70000000000005" rx="5.5" ry="5.4" fill="none" stroke="#ff8c00" stroke-width="1.8"/>
<polygon points="323.7,0.3 350.4,0.3 347.4,17.9 345.8,46.9 346.6,95.7 344.3,150.7 346.2,158.0 343.9,176.6 328.5,176.6 328.3,135.4 328.3,46.9 326.7,16.3" fill="none" stroke="#ff8c00" stroke-width="1.8" stroke-linejoin="round"/>
<polygon points="325.4,179.0 334.0,179.0 334.0,229.0 325.4,229.0" fill="none" stroke="#ff8c00" stroke-width="1.8" stroke-linejoin="round"/>
<polygon points="336.0,179.0 345.5,179.0 345.5,229.0 336.0,229.0" fill="none" stroke="#ff8c00" stroke-width="1.8" stroke-linejoin="round"/>
<polygon points="323.0,230.7 333.9,230.7 333.9,322.0 323.0,322.0" fill="none" stroke="#ff8c00" stroke-width="1.8" stroke-linejoin="round"/>
<polygon points="357.3,0.3 377.1,0.3 377.1,22.4 357.3,22.4" fill="none" stroke="#ff8c00" stroke-width="1.8" stroke-linejoin="round"/>
<polygon points="378.7,0.3 404.6,0.3 442.8,17.9 442.8,104.9 435.2,104.9 433.6,86.6 410.7,43.8 401.6,13.3 380.2,9.5" fill="none" stroke="#ff8c00" stroke-width="1.8" stroke-linejoin="round"/>
<polygon points="379.4,11.7 389.4,11.7 392.4,36.2 419.9,68.2 419.9,95.7 412.3,108.0 418.4,114.0 392.4,124.8 378.0,158.0 367.1,178.1 366.3,226.0 378.0,219.9 413.5,218.3 413.5,227.6 378.0,244.6 365.6,266.2 354.8,321.9 340.8,321.9 341.6,250.8 349.3,226.0 349.5,158.0 349.7,112.5 363.4,89.6 375.6,69.8 378.7,36.2" fill="none" stroke="#ff8c00" stroke-width="1.8" stroke-linejoin="round"/>
<polygon points="387.8,135.0 398.0,124.0 442.8,123.2 442.8,150.7 398.0,150.7 387.8,143.0" fill="none" stroke="#ff8c00" stroke-width="1.8" stroke-linejoin="round"/>
<polygon points="378.7,151.5 442.8,151.5 442.8,159.9 378.7,159.9" fill="none" stroke="#ff8c00" stroke-width="1.8" stroke-linejoin="round"/>
<polygon points="388.8,161.1 404.2,161.1 421.2,204.4 413.5,216.8 390.3,209.8 374.9,216.8 368.7,204.4" fill="none" stroke="#ff8c00" stroke-width="1.8" stroke-linejoin="round"/>
<polygon points="414.3,160.3 443.5,160.3 443.5,191.2 414.3,191.2" fill="none" stroke="#ff8c00" stroke-width="1.8" stroke-linejoin="round"/>
<polygon points="397.3,230.7 443.5,230.7 443.5,239.2 397.3,239.2" fill="none" stroke="#ff8c00" stroke-width="1.8" stroke-linejoin="round"/>
<polygon points="385.7,238.4 393.4,238.4 405.8,321.9 391.9,312.6 371.8,312.6" fill="none" stroke="#ff8c00" stroke-width="1.8" stroke-linejoin="round"/>
<polygon points="410.4,241.5 443.5,241.5 443.5,257.0 410.4,257.0" fill="none" stroke="#ff8c00" stroke-width="1.8" stroke-linejoin="round"/>
<polygon points="405.8,258.5 432.0,258.5 432.0,278.6 405.8,278.6" fill="none" stroke="#ff8c00" stroke-width="1.8" stroke-linejoin="round"/>
<polygon points="406.6,283.3 432.1,283.3 432.1,302.6 406.6,302.6" fill="none" stroke="#ff8c00" stroke-width="1.8" stroke-linejoin="round"/>
<polygon points="433.6,258.5 443.5,258.5 443.5,322.0 433.6,322.0" fill="none" stroke="#ff8c00" stroke-width="1.8" stroke-linejoin="round"/>
<rect x="0" y="0" width="443" height="323" fill="none" stroke="#d8d8d8" stroke-width="0"/>
</svg>
<svg width="50" height="50" style="left:607px;top:884px"><path d="M25 3 V47 M3 25 H47" stroke="#fff" stroke-width="1" stroke-dasharray="1.5 1.5"/><path d="M25 16 L34 25 L25 34 L16 25 Z" fill="none" stroke="#e02020" stroke-width="1.2"/><path d="M25 16 L34 25 L25 34 L16 25 Z" fill="none" stroke="#fff" stroke-width="1.2" stroke-dasharray="2 4"/></svg>
<div style="position:absolute;left:0px;top:1033px;width:1920px;height:6px;background:linear-gradient(#e0e0e0,#d4d4d4)"></div>
<div style="position:absolute;left:0px;top:1039px;width:1920px;height:41px;background:#070a0e"></div>
<div style="position:absolute;left:0px;top:1046px;width:1920px;height:1px;background:#141b24"></div>
<div style="position:absolute;left:0px;top:1074px;width:1920px;height:1px;background:#111820"></div>
<div style="position:absolute;left:48px;top:1039px;width:344px;height:41px;background:#363636"></div>
<svg width="20" height="20" style="left:15px;top:1050px"><path d="M0 2.6 L7 1.6 V9 H0 Z M8 1.45 L17 0.2 V9 H8 Z M0 10 H7 V17.4 L0 16.4 Z M8 10 H17 V18.8 L8 17.55 Z" fill="#fff"/></svg>
<div class="t" style="left:57px;top:1053.64px;font-size:14.5px;line-height:16.67px;color:#a8a8a8;">Buscar en Windows</div>
<div style="position:absolute;left:392px;top:1040px;width:300px;height:40px;overflow:hidden">
<div class="t" style="left:-10px;top:13.56px;font-size:13.5px;line-height:15.52px;color:#3a3c3e;">ba,</div>
<div class="t" style="left:26px;top:13.56px;font-size:13.5px;line-height:15.52px;color:#3a3c3e;">abajo,</div>
<div class="t" style="left:75px;top:13.56px;font-size:13.5px;line-height:15.52px;color:#3a3c3e;">izquierda</div>
<div class="t" style="left:137px;top:13.56px;font-size:13.5px;line-height:15.52px;color:#3a3c3e;">/</div>
<div class="t" style="left:145px;top:13.56px;font-size:13.5px;line-height:15.52px;color:#3a3c3e;">derecha.</div>
</div>
<svg width="24" height="16" style="left:404px;top:1052px"><rect x="5.5" y="1.5" width="12" height="13" fill="none" stroke="#fff" stroke-width="1.3"/><path d="M3.5 3 H1.5 V13 H3.5 M19.5 3 H21.5 V13 H19.5" fill="none" stroke="#fff" stroke-width="1.3"/></svg>
<svg width="24" height="20" style="left:455px;top:1050px"><path d="M1 3 H8 L10 5 H22 V18 H1 Z" fill="#f2cf6d"/><path d="M1 6 H22 V18 H1 Z" fill="#ffe08a"/><rect x="4" y="12" width="15" height="6" fill="#2f8fe0"/><rect x="8" y="15" width="7" height="3" fill="#ffe08a"/></svg>
<div style="position:absolute;left:447px;top:1078px;width:40px;height:2px;background:#76b9ed"></div>
<svg width="24" height="24" style="left:503px;top:1048px"><path d="M8 6 V3 Q12 -1 16 3 V6" fill="none" stroke="#fff" stroke-width="1.5"/><rect x="1" y="6" width="22" height="17" fill="#fff" rx="1"/><rect x="7" y="10" width="4.5" height="4.5" fill="#f25022"/><rect x="12.5" y="10" width="4.5" height="4.5" fill="#7fba00"/><rect x="7" y="15.5" width="4.5" height="4.5" fill="#00a4ef"/><rect x="12.5" y="15.5" width="4.5" height="4.5" fill="#ffb900"/></svg>
<svg width="24" height="24" style="left:553px;top:1048px"><circle cx="12" cy="12" r="11" fill="#db4437"/><path d="M12 12 L2.5 6.5 A11 11 0 0 0 12 23 Z" fill="#0f9d58"/><path d="M12 12 L21.5 6.5 A11 11 0 0 1 12 23 Z" fill="#f4b400"/><path d="M12 12 L2.5 6.5 A11 11 0 0 1 21.5 6.5 Z" fill="#db4437"/><circle cx="12" cy="12" r="5" fill="#fff"/><circle cx="12" cy="12" r="3.8" fill="#4285f4"/></svg>
<div style="position:absolute;left:545px;top:1078px;width:40px;height:2px;background:#76b9ed"></div>
<svg width="22" height="22" style="left:603px;top:1049px"><rect width="22" height="22" fill="#1c3550"/><text x="11" y="8.5" text-anchor="middle" font-family="Liberation Serif" font-weight="bold" font-size="8" fill="#e8eef4">PSO</text><text x="11" y="20" text-anchor="middle" font-family="Liberation Serif" font-weight="bold" font-size="12" fill="#dfe8f0">2</text></svg>
<div style="position:absolute;left:639px;top:1040px;width:48px;height:40px;background:#2b2e33"></div>
<div style="position:absolute;left:639px;top:1078px;width:48px;height:2px;background:#76b9ed"></div>
<svg width="26" height="20" style="left:650px;top:1050px"><path d="M1 12 L9 8 L5 6 L11 5.8 L10 2 L15 5 C20 5 24 8 24 12 C24 16 20.5 18.5 16 18.5 C12 18.5 9.5 16 9.5 13 Z" fill="#f5792a"/><circle cx="16.5" cy="11.8" r="4" fill="#fff"/><circle cx="16.5" cy="11.8" r="2.3" fill="#1f4e9a"/></svg>
<svg width="24" height="24" style="left:700px;top:1048px"><rect width="24" height="24" fill="#1a1030"/><rect x="0.5" y="0.5" width="23" height="23" fill="none" stroke="#2a2ad0"/><ellipse cx="12" cy="12" rx="8" ry="10" fill="#c8c8b0"/><ellipse cx="12" cy="12" rx="4.5" ry="6" fill="#2a2418"/><ellipse cx="12" cy="12" rx="2.5" ry="3.5" fill="#7a6a40"/></svg>
<svg width="22" height="22" style="left:749px;top:1048px"><rect width="22" height="22" fill="#1c3550"/><text x="11" y="8.5" text-anchor="middle" font-family="Liberation Serif" font-weight="bold" font-size="8" fill="#e8eef4">PSO</text><text x="11" y="20" text-anchor="middle" font-family="Liberation Serif" font-weight="bold" font-size="12" fill="#e03030">2</text></svg>
<div style="position:absolute;left:741px;top:1078px;width:40px;height:2px;background:#76b9ed"></div>
<svg width="20" height="24" style="left:800px;top:1048px"><rect x="0.5" y="0.5" width="18" height="23" fill="#fff"/><rect x="3" y="3" width="13" height="4" fill="#111"/><rect x="3.0" y="10.0" width="3" height="3" fill="#111"/><rect x="3.0" y="14.5" width="3" height="3" fill="#111"/><rect x="3.0" y="19.0" width="3" height="3" fill="#111"/><rect x="7.5" y="10.0" width="3" height="3" fill="#111"/><rect x="7.5" y="14.5" width="3" height="3" fill="#111"/><rect x="7.5" y="19.0" width="3" height="3" fill="#111"/><rect x="12.0" y="10.0" width="3" height="3" fill="#111"/><rect x="12.0" y="14.5" width="3" height="3" fill="#111"/><rect x="12.0" y="19.0" width="3" height="3" fill="#111"/></svg>
<div style="position:absolute;left:790px;top:1078px;width:40px;height:2px;background:#76b9ed"></div>
<div style="position:absolute;left:835px;top:1040px;width:48px;height:38px;background:#a65c22"></div>
<div style="position:absolute;left:835px;top:1078px;width:48px;height:2px;background:#ff7a00"></div>
<svg width="22" height="24" style="left:846px;top:1048px"><rect x="1" y="1" width="19" height="22" fill="#e8e8e8" stroke="#888" stroke-width="0.8"/><rect x="3" y="3" width="15" height="15" fill="#3a78c8"/><path d="M3 12 Q8 8 18 13 V18 H3Z" fill="#e0eef8"/><path d="M6 19 L20 8" stroke="#d03030" stroke-width="1.8"/></svg>
<svg width="14" height="10" style="left:1694px;top:1055px"><path d="M1 8 L7 2 L13 8" fill="none" stroke="#fff" stroke-width="1.3"/></svg>
<svg width="18" height="16" style="left:1716px;top:1052px"><rect x="4.5" y="1.5" width="12" height="9" fill="none" stroke="#fff" stroke-width="1.1"/><path d="M10.5 10.5 V13.5 M7 14.5 H14 M1 4 H4 M2.5 4 V14" stroke="#fff" stroke-width="1.1"/></svg>
<svg width="18" height="16" style="left:1740px;top:1052px"><path d="M1 5.5 H4 L8 2 V14 L4 10.5 H1 Z" fill="none" stroke="#fff" stroke-width="1.1"/><path d="M10.5 6 Q12 8 10.5 10 M12.5 4 Q15 8 12.5 12 M14.5 2 Q18 8 14.5 14" fill="none" stroke="#fff" stroke-width="1.1"/></svg>
<div class="t" style="left:1769px;top:1053.94px;font-size:12px;line-height:13.8px;color:#fff;">ESP</div>
<div class="t" style="left:1681px;width:300px;text-align:center;top:1044.44px;font-size:12px;line-height:13.8px;color:#fff;">2:23</div>
<div class="t" style="left:1681.5px;width:300px;text-align:center;top:1063.14px;font-size:12px;line-height:13.8px;color:#fff;">2018/05/10</div>
<svg width="18" height="18" style="left:1878px;top:1051px"><path d="M1.5 1.5 H16.5 V12.5 H11 L8.5 15.5 L6 12.5 H1.5 Z" fill="none" stroke="#fff" stroke-width="1.2"/></svg>
<div style="position:absolute;left:1913px;top:1016px;width:2px;height:17px;background:#c4d8e6;border-right:1px solid #2a8ad8;border-top:1px solid #2a8ad8;box-sizing:border-box"></div>
<div style="position:absolute;left:1893px;top:1033px;width:22px;height:6px;background:#c4d8e6;border:1px solid #2a8ad8;border-top:none;box-sizing:border-box"></div></body></html>
